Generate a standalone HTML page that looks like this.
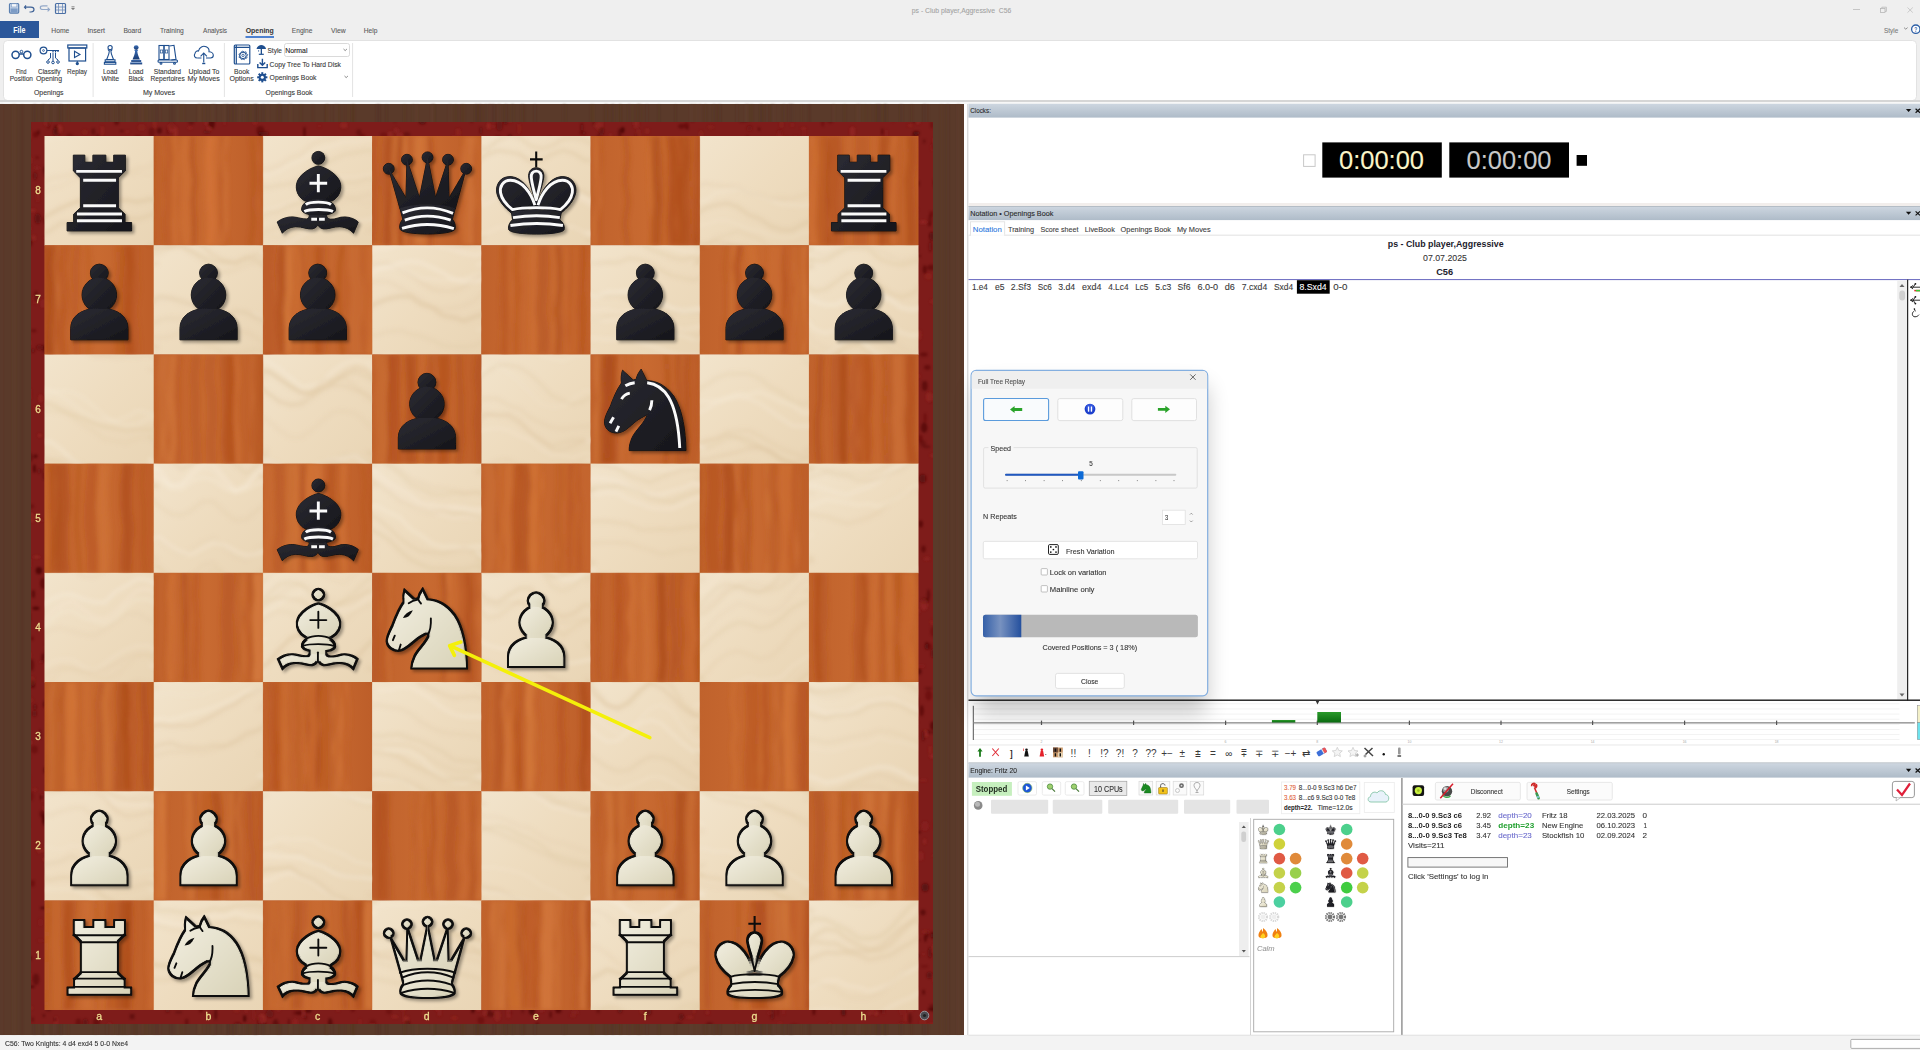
<!DOCTYPE html>
<html><head><meta charset="utf-8"><title>Fritz</title>
<style>
*{margin:0;padding:0}
html,body{width:1920px;height:1050px;overflow:hidden;background:#efefef}
svg{display:block;font-family:"Liberation Sans",sans-serif}
</style></head><body>
<svg width="1920" height="1050" viewBox="0 0 1920 1050">
<defs>
<linearGradient id="lt" x1="0" y1="0" x2="1" y2="1"><stop offset="0" stop-color="#f2e4cc"/><stop offset="0.5" stop-color="#eedcbf"/><stop offset="1" stop-color="#e9d5b5"/></linearGradient>
<linearGradient id="dk" x1="0" y1="0" x2="1" y2="0"><stop offset="0" stop-color="#c0622c"/><stop offset="0.5" stop-color="#c86a31"/><stop offset="1" stop-color="#bd5e29"/></linearGradient>
<linearGradient id="cr" x1="0" y1="0" x2="1" y2="1"><stop offset="0" stop-color="#f4f1e4"/><stop offset="1" stop-color="#d9d3b8"/></linearGradient>
<linearGradient id="bk" x1="0" y1="0" x2="1" y2="1"><stop offset="0" stop-color="#2c2c34"/><stop offset="1" stop-color="#15151a"/></linearGradient>
<filter id="sh" x="-20%" y="-20%" width="150%" height="150%"><feDropShadow dx="22" dy="22" stdDeviation="16" flood-color="#000" flood-opacity="0.35"/></filter>
<linearGradient id="hdr" x1="0" y1="0" x2="0" y2="1"><stop offset="0" stop-color="#cdd6e0"/><stop offset="1" stop-color="#aebbc8"/></linearGradient>
<linearGradient id="graphbg" x1="0" y1="0" x2="0" y2="1"><stop offset="0" stop-color="#e2e2e2"/><stop offset="0.8" stop-color="#fbfbfb"/><stop offset="1" stop-color="#ffffff"/></linearGradient>
<linearGradient id="prog" x1="0" y1="0" x2="1" y2="0"><stop offset="0" stop-color="#3560a8"/><stop offset="0.45" stop-color="#7892c0"/><stop offset="1" stop-color="#24509e"/></linearGradient>
<linearGradient id="grn" x1="0" y1="0" x2="0" y2="1"><stop offset="0" stop-color="#2a9a2a"/><stop offset="1" stop-color="#0a6a10"/></linearGradient>
<linearGradient id="icb" x1="0" y1="0" x2="0" y2="1"><stop offset="0" stop-color="#3b6db5"/><stop offset="1" stop-color="#173a72"/></linearGradient>
<filter id="dsh" x="-30%" y="-30%" width="160%" height="160%"><feGaussianBlur stdDeviation="11"/></filter>
<filter id="bl1" x="-5%" y="-5%" width="110%" height="110%"><feGaussianBlur stdDeviation="1.2"/></filter>
<filter id="bl2" x="-5%" y="-5%" width="110%" height="110%"><feGaussianBlur stdDeviation="2.2"/></filter>

<filter id="er" x="-5%" y="-5%" width="110%" height="110%"><feMorphology operator="erode" radius="20"/></filter>

<symbol id="wP" viewBox="0 0 1050 1050"><g filter="url(#sh)"><circle cx="527" cy="268" r="86" fill="#0c0c0c" stroke="#0c0c0c" stroke-width="10" stroke-linejoin="round"/><circle cx="527" cy="478" r="166" fill="#0c0c0c" stroke="#0c0c0c" stroke-width="10" stroke-linejoin="round"/><path d="M252,910 V800 C252,690 350,618 470,612 H585 C705,618 803,690 803,800 V910 Z" fill="#0c0c0c" stroke="#0c0c0c" stroke-width="10" stroke-linejoin="round"/><g filter="url(#er)"><circle cx="527" cy="268" r="86" fill="url(#cr)" stroke="url(#cr)" stroke-width="10" stroke-linejoin="round"/><circle cx="527" cy="478" r="166" fill="url(#cr)" stroke="url(#cr)" stroke-width="10" stroke-linejoin="round"/><path d="M252,910 V800 C252,690 350,618 470,612 H585 C705,618 803,690 803,800 V910 Z" fill="url(#cr)" stroke="url(#cr)" stroke-width="10" stroke-linejoin="round"/></g></g></symbol>
<symbol id="bP" viewBox="0 0 1050 1050"><g filter="url(#sh)"><circle cx="527" cy="268" r="86" fill="#0c0c0c" stroke="#0c0c0c" stroke-width="8" stroke-linejoin="round"/><circle cx="527" cy="478" r="166" fill="#0c0c0c" stroke="#0c0c0c" stroke-width="8" stroke-linejoin="round"/><path d="M252,910 V800 C252,690 350,618 470,612 H585 C705,618 803,690 803,800 V910 Z" fill="#0c0c0c" stroke="#0c0c0c" stroke-width="8" stroke-linejoin="round"/><circle cx="527" cy="268" r="86" fill="url(#bk)"/><circle cx="527" cy="478" r="166" fill="url(#bk)"/><path d="M252,910 V800 C252,690 350,618 470,612 H585 C705,618 803,690 803,800 V910 Z" fill="url(#bk)"/></g></symbol>
<symbol id="wR" viewBox="0 0 1050 1050"><g filter="url(#sh)"><path d="M277,184 H388 V252 H465 V184 H590 V252 H665 V184 H778 V335 L710,402 V690 L775,752 V832 H838 V913 H217 V832 H280 V752 L345,690 V402 L277,335 Z" fill="#0c0c0c" stroke="#0c0c0c" stroke-width="10" stroke-linejoin="round"/><g filter="url(#er)"><path d="M277,184 H388 V252 H465 V184 H590 V252 H665 V184 H778 V335 L710,402 V690 L775,752 V832 H838 V913 H217 V832 H280 V752 L345,690 V402 L277,335 Z" fill="url(#cr)" stroke="url(#cr)" stroke-width="10" stroke-linejoin="round"/></g></g><path d="M277,335 H778" fill="none" stroke="#0c0c0c" stroke-width="18" stroke-linecap="round" stroke-linejoin="round"/><path d="M345,402 H710" fill="none" stroke="#0c0c0c" stroke-width="18" stroke-linecap="round" stroke-linejoin="round"/><path d="M345,690 H710" fill="none" stroke="#0c0c0c" stroke-width="18" stroke-linecap="round" stroke-linejoin="round"/><path d="M280,752 H775" fill="none" stroke="#0c0c0c" stroke-width="18" stroke-linecap="round" stroke-linejoin="round"/><path d="M280,832 H775" fill="none" stroke="#0c0c0c" stroke-width="18" stroke-linecap="round" stroke-linejoin="round"/></symbol>
<symbol id="bR" viewBox="0 0 1050 1050"><g filter="url(#sh)"><path d="M277,184 H388 V252 H465 V184 H590 V252 H665 V184 H778 V335 L710,402 V690 L775,752 V832 H838 V913 H217 V832 H280 V752 L345,690 V402 L277,335 Z" fill="#0c0c0c" stroke="#0c0c0c" stroke-width="8" stroke-linejoin="round"/><path d="M277,184 H388 V252 H465 V184 H590 V252 H665 V184 H778 V335 L710,402 V690 L775,752 V832 H838 V913 H217 V832 H280 V752 L345,690 V402 L277,335 Z" fill="url(#bk)"/></g><path d="M305,340 H745" fill="none" stroke="#fafafa" stroke-width="28" stroke-linecap="butt" stroke-linejoin="round"/><path d="M372,425 H688" fill="none" stroke="#fafafa" stroke-width="28" stroke-linecap="butt" stroke-linejoin="round"/><path d="M372,670 H688" fill="none" stroke="#fafafa" stroke-width="28" stroke-linecap="butt" stroke-linejoin="round"/><path d="M312,750 H745" fill="none" stroke="#fafafa" stroke-width="28" stroke-linecap="butt" stroke-linejoin="round"/><path d="M312,815 H745" fill="none" stroke="#fafafa" stroke-width="28" stroke-linecap="butt" stroke-linejoin="round"/></symbol>
<symbol id="wN" viewBox="0 0 1050 1050"><g filter="url(#sh)"><path d="M372,925 L918,925 C915,720 880,520 800,400 C720,292 640,258 540,250 L487,142 C465,170 445,205 438,240 L410,246 L308,152 C295,190 292,235 298,275 C250,340 212,440 190,500 C160,560 132,610 135,660 C140,720 190,760 262,755 C335,748 385,680 452,632 C495,602 530,590 548,575 C520,660 440,720 405,790 C380,840 372,880 372,925 Z" fill="#0c0c0c" stroke="#0c0c0c" stroke-width="10" stroke-linejoin="round"/><g filter="url(#er)"><path d="M372,925 L918,925 C915,720 880,520 800,400 C720,292 640,258 540,250 L487,142 C465,170 445,205 438,240 L410,246 L308,152 C295,190 292,235 298,275 C250,340 212,440 190,500 C160,560 132,610 135,660 C140,720 190,760 262,755 C335,748 385,680 452,632 C495,602 530,590 548,575 C520,660 440,720 405,790 C380,840 372,880 372,925 Z" fill="url(#cr)" stroke="url(#cr)" stroke-width="10" stroke-linejoin="round"/></g></g><path d="M565,438 C568,500 558,560 535,595" fill="none" stroke="#0c0c0c" stroke-width="18" stroke-linecap="round" stroke-linejoin="round"/><path d="M200,648 L218,605" fill="none" stroke="#0c0c0c" stroke-width="18" stroke-linecap="round" stroke-linejoin="round"/><path d="M258,745 L275,690" fill="none" stroke="#0c0c0c" stroke-width="18" stroke-linecap="round" stroke-linejoin="round"/><path d="M352,292 C380,272 410,262 440,258" fill="none" stroke="#0c0c0c" stroke-width="18" stroke-linecap="round" stroke-linejoin="round"/><path d="M440,248 C450,270 460,285 470,295" fill="none" stroke="#0c0c0c" stroke-width="18" stroke-linecap="round" stroke-linejoin="round"/><path d="M296,434 C312,400 345,374 392,360 C380,384 366,404 352,418 C335,430 316,434 296,434 Z" fill="#0c0c0c"/></symbol>
<symbol id="bN" viewBox="0 0 1050 1050"><g filter="url(#sh)"><path d="M372,925 L918,925 C915,720 880,520 800,400 C720,292 640,258 540,250 L487,142 C465,170 445,205 438,240 L410,246 L308,152 C295,190 292,235 298,275 C250,340 212,440 190,500 C160,560 132,610 135,660 C140,720 190,760 262,755 C335,748 385,680 452,632 C495,602 530,590 548,575 C520,660 440,720 405,790 C380,840 372,880 372,925 Z" fill="#0c0c0c" stroke="#0c0c0c" stroke-width="8" stroke-linejoin="round"/><path d="M372,925 L918,925 C915,720 880,520 800,400 C720,292 640,258 540,250 L487,142 C465,170 445,205 438,240 L410,246 L308,152 C295,190 292,235 298,275 C250,340 212,440 190,500 C160,560 132,610 135,660 C140,720 190,760 262,755 C335,748 385,680 452,632 C495,602 530,590 548,575 C520,660 440,720 405,790 C380,840 372,880 372,925 Z" fill="url(#bk)"/></g><path d="M545,272 C700,290 835,420 858,900" fill="none" stroke="#fafafa" stroke-width="28" stroke-linecap="butt" stroke-linejoin="round"/><path d="M335,302 C365,285 395,275 425,272" fill="none" stroke="#fafafa" stroke-width="28" stroke-linecap="butt" stroke-linejoin="round"/><path d="M298,430 C315,400 345,378 378,372" fill="none" stroke="#fafafa" stroke-width="28" stroke-linecap="butt" stroke-linejoin="round"/><path d="M590,440 C590,480 580,510 568,535" fill="none" stroke="#fafafa" stroke-width="28" stroke-linecap="butt" stroke-linejoin="round"/><path d="M188,662 L222,605" fill="none" stroke="#fafafa" stroke-width="28" stroke-linecap="butt" stroke-linejoin="round"/><path d="M245,742 L272,688" fill="none" stroke="#fafafa" stroke-width="28" stroke-linecap="butt" stroke-linejoin="round"/></symbol>
<symbol id="wB" viewBox="0 0 1050 1050"><g filter="url(#sh)"><circle cx="533" cy="210" r="62" fill="#0c0c0c" stroke="#0c0c0c" stroke-width="10" stroke-linejoin="round"/><path d="M533,288 C470,298 335,368 322,470 C314,548 360,600 405,625 H665 C710,600 756,548 748,470 C735,368 596,298 533,288 Z" fill="#0c0c0c" stroke="#0c0c0c" stroke-width="10" stroke-linejoin="round"/><path d="M137,827 C170,800 230,775 290,778 C340,782 380,800 420,797 C440,795 446,780 446,755 L612,755 C612,780 620,797 650,800 C700,805 730,775 790,778 C840,780 890,800 917,827 L872,935 C840,900 800,875 740,872 C680,870 620,900 580,893 C550,888 535,870 529,850 C523,870 505,888 475,893 C435,900 375,870 315,872 C255,875 215,900 187,935 Z" fill="#0c0c0c" stroke="#0c0c0c" stroke-width="10" stroke-linejoin="round"/><path d="M372,705 C372,640 450,606 533,606 C620,606 698,640 698,710 C698,745 620,762 533,762 C450,762 372,745 372,705 Z" fill="#0c0c0c" stroke="#0c0c0c" stroke-width="10" stroke-linejoin="round"/><g filter="url(#er)"><circle cx="533" cy="210" r="62" fill="url(#cr)" stroke="url(#cr)" stroke-width="10" stroke-linejoin="round"/><path d="M533,288 C470,298 335,368 322,470 C314,548 360,600 405,625 H665 C710,600 756,548 748,470 C735,368 596,298 533,288 Z" fill="url(#cr)" stroke="url(#cr)" stroke-width="10" stroke-linejoin="round"/><path d="M137,827 C170,800 230,775 290,778 C340,782 380,800 420,797 C440,795 446,780 446,755 L612,755 C612,780 620,797 650,800 C700,805 730,775 790,778 C840,780 890,800 917,827 L872,935 C840,900 800,875 740,872 C680,870 620,900 580,893 C550,888 535,870 529,850 C523,870 505,888 475,893 C435,900 375,870 315,872 C255,875 215,900 187,935 Z" fill="url(#cr)" stroke="url(#cr)" stroke-width="10" stroke-linejoin="round"/><path d="M372,705 C372,640 450,606 533,606 C620,606 698,640 698,710 C698,745 620,762 533,762 C450,762 372,745 372,705 Z" fill="url(#cr)" stroke="url(#cr)" stroke-width="10" stroke-linejoin="round"/></g></g><path d="M533,375 V530" fill="none" stroke="#0c0c0c" stroke-width="18" stroke-linecap="round" stroke-linejoin="round"/><path d="M455,455 H610" fill="none" stroke="#0c0c0c" stroke-width="18" stroke-linecap="round" stroke-linejoin="round"/><path d="M374,712 C372,640 450,606 533,606 C620,606 698,640 696,712" fill="none" stroke="#0c0c0c" stroke-width="18" stroke-linecap="round" stroke-linejoin="round"/><path d="M392,700 C450,680 620,680 680,702" fill="none" stroke="#0c0c0c" stroke-width="18" stroke-linecap="round" stroke-linejoin="round"/><path d="M529,765 V850" fill="none" stroke="#0c0c0c" stroke-width="18" stroke-linecap="round" stroke-linejoin="round"/></symbol>
<symbol id="bB" viewBox="0 0 1050 1050"><g filter="url(#sh)"><circle cx="533" cy="210" r="62" fill="#0c0c0c" stroke="#0c0c0c" stroke-width="8" stroke-linejoin="round"/><path d="M533,288 C470,298 335,368 322,470 C314,548 360,600 405,625 H665 C710,600 756,548 748,470 C735,368 596,298 533,288 Z" fill="#0c0c0c" stroke="#0c0c0c" stroke-width="8" stroke-linejoin="round"/><path d="M137,827 C170,800 230,775 290,778 C340,782 380,800 420,797 C440,795 446,780 446,755 L612,755 C612,780 620,797 650,800 C700,805 730,775 790,778 C840,780 890,800 917,827 L872,935 C840,900 800,875 740,872 C680,870 620,900 580,893 C550,888 535,870 529,850 C523,870 505,888 475,893 C435,900 375,870 315,872 C255,875 215,900 187,935 Z" fill="#0c0c0c" stroke="#0c0c0c" stroke-width="8" stroke-linejoin="round"/><path d="M372,705 C372,640 450,606 533,606 C620,606 698,640 698,710 C698,745 620,762 533,762 C450,762 372,745 372,705 Z" fill="#0c0c0c" stroke="#0c0c0c" stroke-width="8" stroke-linejoin="round"/><circle cx="533" cy="210" r="62" fill="url(#bk)"/><path d="M533,288 C470,298 335,368 322,470 C314,548 360,600 405,625 H665 C710,600 756,548 748,470 C735,368 596,298 533,288 Z" fill="url(#bk)"/><path d="M137,827 C170,800 230,775 290,778 C340,782 380,800 420,797 C440,795 446,780 446,755 L612,755 C612,780 620,797 650,800 C700,805 730,775 790,778 C840,780 890,800 917,827 L872,935 C840,900 800,875 740,872 C680,870 620,900 580,893 C550,888 535,870 529,850 C523,870 505,888 475,893 C435,900 375,870 315,872 C255,875 215,900 187,935 Z" fill="url(#bk)"/><path d="M372,705 C372,640 450,606 533,606 C620,606 698,640 698,710 C698,745 620,762 533,762 C450,762 372,745 372,705 Z" fill="url(#bk)"/></g><path d="M533,365 V540" fill="none" stroke="#fafafa" stroke-width="28" stroke-linecap="butt" stroke-linejoin="round"/><path d="M448,455 H618" fill="none" stroke="#fafafa" stroke-width="28" stroke-linecap="butt" stroke-linejoin="round"/><path d="M412,660 C450,628 615,628 655,660" fill="none" stroke="#fafafa" stroke-width="28" stroke-linecap="butt" stroke-linejoin="round"/><path d="M398,726 C445,700 625,700 674,726" fill="none" stroke="#fafafa" stroke-width="28" stroke-linecap="butt" stroke-linejoin="round"/><path d="M465,800 H520 M540,800 H595" fill="none" stroke="#fafafa" stroke-width="28" stroke-linecap="butt" stroke-linejoin="round"/></symbol>
<symbol id="wQ" viewBox="0 0 1050 1050"><g filter="url(#sh)"><circle cx="160" cy="315" r="52" fill="#0c0c0c" stroke="#0c0c0c" stroke-width="10" stroke-linejoin="round"/><circle cx="335" cy="228" r="52" fill="#0c0c0c" stroke="#0c0c0c" stroke-width="10" stroke-linejoin="round"/><circle cx="533" cy="205" r="52" fill="#0c0c0c" stroke="#0c0c0c" stroke-width="10" stroke-linejoin="round"/><circle cx="730" cy="228" r="52" fill="#0c0c0c" stroke="#0c0c0c" stroke-width="10" stroke-linejoin="round"/><circle cx="905" cy="315" r="52" fill="#0c0c0c" stroke="#0c0c0c" stroke-width="10" stroke-linejoin="round"/><path d="M268,700 L160,315 L325,595 L335,228 L455,592 L533,205 L610,592 L730,228 L740,595 L905,315 L800,700 Z" fill="#0c0c0c" stroke="#0c0c0c" stroke-width="10" stroke-linejoin="round"/><path d="M268,695 C400,645 665,645 800,695 L772,800 C795,830 805,860 798,895 C775,958 290,958 268,895 C260,860 270,830 295,800 Z" fill="#0c0c0c" stroke="#0c0c0c" stroke-width="10" stroke-linejoin="round"/><g filter="url(#er)"><circle cx="160" cy="315" r="52" fill="url(#cr)" stroke="url(#cr)" stroke-width="10" stroke-linejoin="round"/><circle cx="335" cy="228" r="52" fill="url(#cr)" stroke="url(#cr)" stroke-width="10" stroke-linejoin="round"/><circle cx="533" cy="205" r="52" fill="url(#cr)" stroke="url(#cr)" stroke-width="10" stroke-linejoin="round"/><circle cx="730" cy="228" r="52" fill="url(#cr)" stroke="url(#cr)" stroke-width="10" stroke-linejoin="round"/><circle cx="905" cy="315" r="52" fill="url(#cr)" stroke="url(#cr)" stroke-width="10" stroke-linejoin="round"/><path d="M268,700 L160,315 L325,595 L335,228 L455,592 L533,205 L610,592 L730,228 L740,595 L905,315 L800,700 Z" fill="url(#cr)" stroke="url(#cr)" stroke-width="10" stroke-linejoin="round"/><path d="M268,695 C400,645 665,645 800,695 L772,800 C795,830 805,860 798,895 C775,958 290,958 268,895 C260,860 270,830 295,800 Z" fill="url(#cr)" stroke="url(#cr)" stroke-width="10" stroke-linejoin="round"/></g></g><path d="M268,695 C400,645 665,645 800,695" fill="none" stroke="#0c0c0c" stroke-width="18" stroke-linecap="round" stroke-linejoin="round"/><path d="M288,742 Q533,640 782,742" fill="none" stroke="#0c0c0c" stroke-width="18" stroke-linecap="round" stroke-linejoin="round"/><path d="M310,810 Q533,730 760,810" fill="none" stroke="#0c0c0c" stroke-width="18" stroke-linecap="round" stroke-linejoin="round"/><path d="M280,890 Q533,810 790,890" fill="none" stroke="#0c0c0c" stroke-width="18" stroke-linecap="round" stroke-linejoin="round"/></symbol>
<symbol id="bQ" viewBox="0 0 1050 1050"><g filter="url(#sh)"><circle cx="160" cy="315" r="52" fill="#0c0c0c" stroke="#0c0c0c" stroke-width="8" stroke-linejoin="round"/><circle cx="335" cy="228" r="52" fill="#0c0c0c" stroke="#0c0c0c" stroke-width="8" stroke-linejoin="round"/><circle cx="533" cy="205" r="52" fill="#0c0c0c" stroke="#0c0c0c" stroke-width="8" stroke-linejoin="round"/><circle cx="730" cy="228" r="52" fill="#0c0c0c" stroke="#0c0c0c" stroke-width="8" stroke-linejoin="round"/><circle cx="905" cy="315" r="52" fill="#0c0c0c" stroke="#0c0c0c" stroke-width="8" stroke-linejoin="round"/><path d="M268,700 L160,315 L325,595 L335,228 L455,592 L533,205 L610,592 L730,228 L740,595 L905,315 L800,700 Z" fill="#0c0c0c" stroke="#0c0c0c" stroke-width="8" stroke-linejoin="round"/><path d="M268,695 C400,645 665,645 800,695 L772,800 C795,830 805,860 798,895 C775,958 290,958 268,895 C260,860 270,830 295,800 Z" fill="#0c0c0c" stroke="#0c0c0c" stroke-width="8" stroke-linejoin="round"/><circle cx="160" cy="315" r="52" fill="url(#bk)"/><circle cx="335" cy="228" r="52" fill="url(#bk)"/><circle cx="533" cy="205" r="52" fill="url(#bk)"/><circle cx="730" cy="228" r="52" fill="url(#bk)"/><circle cx="905" cy="315" r="52" fill="url(#bk)"/><path d="M268,700 L160,315 L325,595 L335,228 L455,592 L533,205 L610,592 L730,228 L740,595 L905,315 L800,700 Z" fill="url(#bk)"/><path d="M268,695 C400,645 665,645 800,695 L772,800 C795,830 805,860 798,895 C775,958 290,958 268,895 C260,860 270,830 295,800 Z" fill="url(#bk)"/></g><path d="M292,740 Q533,640 778,744" fill="none" stroke="#fafafa" stroke-width="28" stroke-linecap="butt" stroke-linejoin="round"/><path d="M314,808 Q533,732 756,810" fill="none" stroke="#fafafa" stroke-width="28" stroke-linecap="butt" stroke-linejoin="round"/><path d="M288,888 Q533,812 786,890" fill="none" stroke="#fafafa" stroke-width="28" stroke-linecap="butt" stroke-linejoin="round"/></symbol>
<symbol id="wK" viewBox="0 0 1050 1050"><g filter="url(#sh)"><path d="M528,685 C490,540 400,392 275,390 C175,390 136,480 148,545 C163,625 235,700 292,742 Z" fill="#0c0c0c" stroke="#0c0c0c" stroke-width="10" stroke-linejoin="round"/><path d="M528,685 C566,540 656,392 781,390 C881,390 920,480 908,545 C893,625 821,700 764,742 Z" fill="#0c0c0c" stroke="#0c0c0c" stroke-width="10" stroke-linejoin="round"/><path d="M528,305 C582,305 607,350 600,400 C592,470 548,570 528,680 C508,570 464,470 456,400 C449,350 474,305 528,305 Z" fill="#0c0c0c" stroke="#0c0c0c" stroke-width="10" stroke-linejoin="round"/><path d="M290,735 C400,700 660,700 770,735 L755,805 C790,835 802,865 797,900 C782,958 283,958 263,900 C256,865 270,835 300,805 Z" fill="#0c0c0c" stroke="#0c0c0c" stroke-width="10" stroke-linejoin="round"/><g filter="url(#er)"><path d="M528,685 C490,540 400,392 275,390 C175,390 136,480 148,545 C163,625 235,700 292,742 Z" fill="url(#cr)" stroke="url(#cr)" stroke-width="10" stroke-linejoin="round"/><path d="M528,685 C566,540 656,392 781,390 C881,390 920,480 908,545 C893,625 821,700 764,742 Z" fill="url(#cr)" stroke="url(#cr)" stroke-width="10" stroke-linejoin="round"/><path d="M528,305 C582,305 607,350 600,400 C592,470 548,570 528,680 C508,570 464,470 456,400 C449,350 474,305 528,305 Z" fill="url(#cr)" stroke="url(#cr)" stroke-width="10" stroke-linejoin="round"/><path d="M290,735 C400,700 660,700 770,735 L755,805 C790,835 802,865 797,900 C782,958 283,958 263,900 C256,865 270,835 300,805 Z" fill="url(#cr)" stroke="url(#cr)" stroke-width="10" stroke-linejoin="round"/></g></g><path d="M300,805 Q533,765 755,805" fill="none" stroke="#0c0c0c" stroke-width="18" stroke-linecap="round" stroke-linejoin="round"/><path d="M272,880 Q533,840 788,880" fill="none" stroke="#0c0c0c" stroke-width="18" stroke-linecap="round" stroke-linejoin="round"/><path d="M292,735 C400,700 660,700 768,735" fill="none" stroke="#0c0c0c" stroke-width="18" stroke-linecap="round" stroke-linejoin="round"/><path d="M528,305 C582,305 607,350 600,400 C592,470 548,570 528,680 C508,570 464,470 456,400 C449,350 474,305 528,305 Z" fill="none" stroke="#0c0c0c" stroke-width="18" stroke-linecap="round" stroke-linejoin="round"/><path d="M528,150 V300 M468,225 H590" stroke="#0c0c0c" stroke-width="20" fill="none"/></symbol>
<symbol id="bK" viewBox="0 0 1050 1050"><g filter="url(#sh)"><path d="M528,685 C490,540 400,392 275,390 C175,390 136,480 148,545 C163,625 235,700 292,742 Z" fill="#0c0c0c" stroke="#0c0c0c" stroke-width="8" stroke-linejoin="round"/><path d="M528,685 C566,540 656,392 781,390 C881,390 920,480 908,545 C893,625 821,700 764,742 Z" fill="#0c0c0c" stroke="#0c0c0c" stroke-width="8" stroke-linejoin="round"/><path d="M528,305 C582,305 607,350 600,400 C592,470 548,570 528,680 C508,570 464,470 456,400 C449,350 474,305 528,305 Z" fill="#0c0c0c" stroke="#0c0c0c" stroke-width="8" stroke-linejoin="round"/><path d="M290,735 C400,700 660,700 770,735 L755,805 C790,835 802,865 797,900 C782,958 283,958 263,900 C256,865 270,835 300,805 Z" fill="#0c0c0c" stroke="#0c0c0c" stroke-width="8" stroke-linejoin="round"/><path d="M528,685 C490,540 400,392 275,390 C175,390 136,480 148,545 C163,625 235,700 292,742 Z" fill="url(#bk)"/><path d="M528,685 C566,540 656,392 781,390 C881,390 920,480 908,545 C893,625 821,700 764,742 Z" fill="url(#bk)"/><path d="M528,305 C582,305 607,350 600,400 C592,470 548,570 528,680 C508,570 464,470 456,400 C449,350 474,305 528,305 Z" fill="url(#bk)"/><path d="M290,735 C400,700 660,700 770,735 L755,805 C790,835 802,865 797,900 C782,958 283,958 263,900 C256,865 270,835 300,805 Z" fill="url(#bk)"/></g><path d="M515,665 C478,548 395,428 280,426 C205,426 176,490 185,545 C196,612 250,668 300,708 C400,682 660,682 760,708 C810,668 864,612 875,545 C884,490 855,426 780,426 C665,428 582,548 545,665" fill="none" stroke="#fafafa" stroke-width="28" stroke-linecap="butt" stroke-linejoin="round"/><path d="M528,338 C566,338 579,368 575,402 C569,462 546,545 528,612 C510,545 487,462 481,402 C477,368 490,338 528,338 Z" fill="none" stroke="#fafafa" stroke-width="28" stroke-linecap="butt" stroke-linejoin="round"/><path d="M305,785 Q533,748 755,785" fill="none" stroke="#fafafa" stroke-width="28" stroke-linecap="butt" stroke-linejoin="round"/><path d="M280,860 Q533,822 785,860" fill="none" stroke="#fafafa" stroke-width="28" stroke-linecap="butt" stroke-linejoin="round"/><path d="M528,150 V300 M468,225 H590" stroke="#0c0c0c" stroke-width="20" fill="none"/></symbol>
<symbol id="nsil" viewBox="0 0 1050 1050"><path d="M372,925 L918,925 C915,720 880,520 800,400 C720,292 640,258 540,250 L487,142 C465,170 445,205 438,240 L410,246 L308,152 C295,190 292,235 298,275 C250,340 212,440 190,500 C160,560 132,610 135,660 C140,720 190,760 262,755 C335,748 385,680 452,632 C495,602 530,590 548,575 C520,660 440,720 405,790 C380,840 372,880 372,925 Z" fill="#1a8a22" stroke="#0a5a10" stroke-width="30"/></symbol>
</defs>
<rect x="0" y="0" width="1920" height="41" fill="#efefef"/>
<text x="911.80" y="12.60" font-size="7.40" fill="#a3a3a3" stroke="#a3a3a3" stroke-width="0.1" textLength="83.18" lengthAdjust="spacingAndGlyphs">ps - Club player,Aggressive</text>
<text x="998.80" y="12.60" font-size="7.40" fill="#a3a3a3" stroke="#a3a3a3" stroke-width="0.1" textLength="12.40" lengthAdjust="spacingAndGlyphs">C56</text>
<g fill="none" stroke="#4a6fa5" stroke-width="1.2"><rect x="9.5" y="3.5" width="9.2" height="9.6" rx="1" fill="#c8d6ea" stroke="#5a7fb0"/><rect x="11.3" y="3.8" width="5.6" height="3.2" fill="#f4f7fb" stroke="#7a98c0" stroke-width="0.6"/><rect x="10.6" y="8.4" width="7" height="4.2" fill="#7d9cc6" stroke="none"/><path d="M26,5.5 L24.5,7.2 L26,8.9 M24.8,7.2 H31 C33,7.2 34,8.2 34,9.6 C34,11 33,12 31,12 H29.5" stroke="#3f6296"/><path d="M47.5,5.9 H43 C41,5.9 40.3,6.9 40.3,7.7 C40.3,8.6 41,9.5 43,9.5 H49.3 M47.6,7.6 L49.5,9.5 L47.6,11.4" stroke="#93a8c8"/><rect x="55.5" y="3.5" width="10" height="10" rx="1" stroke="#4a6fa5"/><path d="M58.5,4 V13 M62.5,4 V13 M56,7 H65 M56,10 H65" stroke="#6d8cba" stroke-width="0.8"/></g>
<path d="M71.5,6.5 h3 M71.5,8 h3 l-1.5,1.8 z" stroke="#777" stroke-width="0.6" fill="#777"/>
<line x1="1853" y1="9.5" x2="1860" y2="9.5" stroke="#a8a8a8" stroke-width="0.6"/>
<g fill="none" stroke="#b0b0b0" stroke-width="0.7"><rect x="1880.4" y="8.4" width="4.6" height="4.2"/><path d="M1881.8,8.4 V7.2 H1886.4 V11.4 H1885"/></g>
<path d="M1907.5,7.5 L1912.8,12.6 M1912.8,7.5 L1907.5,12.6" stroke="#b0b0b0" stroke-width="0.6"/>
<rect x="0" y="21" width="39" height="17" fill="#2b579a"/>
<text x="13.30" y="33.30" font-size="8.40" fill="#ffffff" font-weight="bold" textLength="12.18" lengthAdjust="spacingAndGlyphs">File</text>
<text x="51.30" y="33.40" font-size="7.90" fill="#5a5a5a" stroke="#5a5a5a" stroke-width="0.1" textLength="18.08" lengthAdjust="spacingAndGlyphs">Home</text>
<text x="87.40" y="33.40" font-size="7.90" fill="#5a5a5a" stroke="#5a5a5a" stroke-width="0.1" textLength="17.61" lengthAdjust="spacingAndGlyphs">Insert</text>
<text x="123.40" y="33.40" font-size="7.90" fill="#5a5a5a" stroke="#5a5a5a" stroke-width="0.1" textLength="17.89" lengthAdjust="spacingAndGlyphs">Board</text>
<text x="160.00" y="33.40" font-size="7.90" fill="#5a5a5a" stroke="#5a5a5a" stroke-width="0.1" textLength="23.81" lengthAdjust="spacingAndGlyphs">Training</text>
<text x="203.10" y="33.40" font-size="7.90" fill="#5a5a5a" stroke="#5a5a5a" stroke-width="0.1" textLength="23.99" lengthAdjust="spacingAndGlyphs">Analysis</text>
<text x="291.80" y="33.40" font-size="7.90" fill="#5a5a5a" stroke="#5a5a5a" stroke-width="0.1" textLength="20.59" lengthAdjust="spacingAndGlyphs">Engine</text>
<text x="331.00" y="33.40" font-size="7.90" fill="#5a5a5a" stroke="#5a5a5a" stroke-width="0.1" textLength="14.60" lengthAdjust="spacingAndGlyphs">View</text>
<text x="363.80" y="33.40" font-size="7.90" fill="#5a5a5a" stroke="#5a5a5a" stroke-width="0.1" textLength="13.71" lengthAdjust="spacingAndGlyphs">Help</text>
<text x="245.70" y="33.40" font-size="7.90" fill="#333333" font-weight="bold" textLength="28.10" lengthAdjust="spacingAndGlyphs">Opening</text>
<rect x="245.5" y="36.2" width="28.5" height="1.6" fill="#2667c9"/>
<text x="1884.10" y="32.60" font-size="7.40" fill="#7a7a7a" stroke="#7a7a7a" stroke-width="0.1" textLength="14.19" lengthAdjust="spacingAndGlyphs">Style</text>
<path d="M1904,27.6 L1905.8,29.2 L1907.6,27.6" fill="none" stroke="#666" stroke-width="0.7"/>
<circle cx="1915.8" cy="29.2" r="4.2" fill="#fff" stroke="#2d5fa6" stroke-width="1.3"/>
<text x="1914.30" y="31.80" font-size="6.50" fill="#2d5fa6" font-weight="bold" textLength="3.00" lengthAdjust="spacingAndGlyphs">?</text>
<rect x="3.5" y="40.5" width="1913" height="60" rx="4" fill="#ffffff" stroke="#e2e2e2" stroke-width="1"/>
<rect x="0" y="100" width="1920" height="2" fill="#d6d6d6"/>
<rect x="0" y="102" width="1920" height="2" fill="#f7f7f7"/>
<line x1="93.1" y1="43" x2="93.1" y2="97" stroke="#e3e3e3" stroke-width="1"/>
<line x1="224.4" y1="43" x2="224.4" y2="97" stroke="#e3e3e3" stroke-width="1"/>
<line x1="352.6" y1="43" x2="352.6" y2="97" stroke="#e3e3e3" stroke-width="1"/>
<text x="16.05" y="73.70" font-size="7.30" fill="#383838" stroke="#383838" stroke-width="0.1" textLength="10.45" lengthAdjust="spacingAndGlyphs">Find</text>
<text x="9.75" y="80.70" font-size="7.30" fill="#383838" stroke="#383838" stroke-width="0.1" textLength="23.24" lengthAdjust="spacingAndGlyphs">Position</text>
<text x="38.00" y="73.70" font-size="7.30" fill="#383838" stroke="#383838" stroke-width="0.1" textLength="22.60" lengthAdjust="spacingAndGlyphs">Classify</text>
<text x="36.00" y="80.70" font-size="7.30" fill="#383838" stroke="#383838" stroke-width="0.1" textLength="26.01" lengthAdjust="spacingAndGlyphs">Opening</text>
<text x="67.00" y="73.70" font-size="7.30" fill="#383838" stroke="#383838" stroke-width="0.1" textLength="19.99" lengthAdjust="spacingAndGlyphs">Replay</text>
<text x="34.00" y="94.70" font-size="7.30" fill="#383838" stroke="#383838" stroke-width="0.1" textLength="29.51" lengthAdjust="spacingAndGlyphs">Openings</text>
<text x="103.00" y="73.70" font-size="7.30" fill="#383838" stroke="#383838" stroke-width="0.1" textLength="14.50" lengthAdjust="spacingAndGlyphs">Load</text>
<text x="101.50" y="80.70" font-size="7.30" fill="#383838" stroke="#383838" stroke-width="0.1" textLength="17.51" lengthAdjust="spacingAndGlyphs">White</text>
<text x="128.75" y="73.70" font-size="7.30" fill="#383838" stroke="#383838" stroke-width="0.1" textLength="14.75" lengthAdjust="spacingAndGlyphs">Load</text>
<text x="128.50" y="80.70" font-size="7.30" fill="#383838" stroke="#383838" stroke-width="0.1" textLength="15.22" lengthAdjust="spacingAndGlyphs">Black</text>
<text x="153.75" y="73.70" font-size="7.30" fill="#383838" stroke="#383838" stroke-width="0.1" textLength="27.24" lengthAdjust="spacingAndGlyphs">Standard</text>
<text x="150.60" y="80.70" font-size="7.30" fill="#383838" stroke="#383838" stroke-width="0.1" textLength="34.14" lengthAdjust="spacingAndGlyphs">Repertoires</text>
<text x="188.50" y="73.70" font-size="7.30" fill="#383838" stroke="#383838" stroke-width="0.1" textLength="30.90" lengthAdjust="spacingAndGlyphs">Upload To</text>
<text x="187.50" y="80.70" font-size="7.30" fill="#383838" stroke="#383838" stroke-width="0.1" textLength="32.26" lengthAdjust="spacingAndGlyphs">My Moves</text>
<text x="142.90" y="94.70" font-size="7.30" fill="#383838" stroke="#383838" stroke-width="0.1" textLength="32.11" lengthAdjust="spacingAndGlyphs">My Moves</text>
<text x="234.00" y="73.70" font-size="7.30" fill="#383838" stroke="#383838" stroke-width="0.1" textLength="15.36" lengthAdjust="spacingAndGlyphs">Book</text>
<text x="229.40" y="80.70" font-size="7.30" fill="#383838" stroke="#383838" stroke-width="0.1" textLength="24.36" lengthAdjust="spacingAndGlyphs">Options</text>
<text x="267.50" y="52.90" font-size="7.30" fill="#383838" stroke="#383838" stroke-width="0.1" textLength="14.49" lengthAdjust="spacingAndGlyphs">Style</text>
<rect x="284.5" y="43.5" width="65" height="13" rx="2" fill="#fff" stroke="#d0d0d0" stroke-width="0.8"/>
<text x="285.20" y="52.90" font-size="7.30" fill="#222" stroke="#222" stroke-width="0.1" textLength="22.28" lengthAdjust="spacingAndGlyphs">Normal</text>
<path d="M343.5,49 L345.2,50.6 L346.9,49" fill="none" stroke="#555" stroke-width="0.7"/>
<text x="269.60" y="66.60" font-size="7.30" fill="#383838" stroke="#383838" stroke-width="0.1" textLength="71.38" lengthAdjust="spacingAndGlyphs">Copy Tree To Hard Disk</text>
<text x="269.60" y="80.00" font-size="7.30" fill="#383838" stroke="#383838" stroke-width="0.1" textLength="46.85" lengthAdjust="spacingAndGlyphs">Openings Book</text>
<path d="M344.5,76 L346.2,77.6 L347.9,76" fill="none" stroke="#555" stroke-width="0.7"/>
<text x="265.60" y="94.70" font-size="7.30" fill="#383838" stroke="#383838" stroke-width="0.1" textLength="46.85" lengthAdjust="spacingAndGlyphs">Openings Book</text>
<g fill="none" stroke="#1f4f8f" stroke-width="1.5"><circle cx="15.6" cy="54.8" r="3.6"/><circle cx="27.3" cy="54.8" r="3.6"/><path d="M19.2,54 H23.7"/><circle cx="21.45" cy="51.6" r="1.3" stroke-width="1"/><circle cx="43.5" cy="50.5" r="3.4" stroke-width="1.2"/><circle cx="43.5" cy="50.5" r="0.9" stroke-width="0.8"/><path d="M46.9,50.5 H59 M53,50.5 V52.5 M55.5,50.5 V52.5 M58,50.5 V52" stroke-width="1.2"/><path d="M50.5,53 V58 L48,60 M53,53 V61 M55.5,53 V58 L58,60" stroke-width="1"/><circle cx="48" cy="62" r="1.3" stroke-width="1"/><circle cx="53" cy="62.5" r="1.3" stroke-width="1"/><circle cx="58" cy="62" r="1.3" stroke-width="1"/><rect x="67.8" y="45" width="19" height="3" stroke-width="1.2"/><rect x="69" y="48" width="16.6" height="13" stroke-width="1.2"/><path d="M74.5,51.2 L80,54.4 L74.5,57.6 Z" stroke-width="1.1"/><path d="M77.3,61 V63" stroke-width="1"/><circle cx="77.3" cy="63.6" r="0.9" fill="#1f4f8f"/></g>
<g stroke="#1f4f8f" stroke-width="1.1" fill="none"><circle cx="110.1" cy="47.6" r="2.1"/><path d="M108.4,50 H111.8 L110.9,51.3 C111,54 112.5,57 113.5,59.5 H106.7 C107.7,57 109.2,54 109.3,51.3 Z"/><rect x="105.2" y="59.8" width="9.8" height="2" /><rect x="104.4" y="62.4" width="11.4" height="1.8"/></g>
<g fill="url(#icb)"><circle cx="136.2" cy="47.6" r="2.4"/><path d="M134.2,50 H138.2 L137.3,51.3 C137.4,54 138.9,57 139.9,59.5 H132.5 C133.5,57 135,54 135.1,51.3 Z"/><rect x="131.2" y="60" width="10" height="1.9"/><rect x="130.2" y="62.4" width="12" height="2"/></g>
<g fill="none" stroke="#1f4f8f" stroke-width="1.1"><rect x="159" y="45.5" width="5" height="14"/><rect x="164" y="45.5" width="5" height="14"/><path d="M169.5,46 L174,45.3 L176,59.3 L171.3,60"/><rect x="160.3" y="50" width="2.4" height="3" stroke-width="0.7"/><rect x="165.3" y="50" width="2.4" height="3" stroke-width="0.7"/><rect x="158" y="60" width="19.5" height="2.2" rx="1"/><circle cx="161" cy="63.4" r="0.9"/><circle cx="174.5" cy="63.4" r="0.9"/></g>
<g fill="none" stroke="#1f4f8f" stroke-width="1.1"><path d="M197.5,58 C194.5,58 193.6,55.3 195,53.5 C195.3,51.5 197,50.6 198.5,51 C199.3,47.2 203,45.3 206.2,46.8 C208.3,47.8 209.3,50 209,51.8 C211.5,51.8 213.3,53.5 213.3,55.3 C213.3,57 212,58 210.5,58 H206"/><path d="M201.5,58 H197.5 M203.75,62.5 V53.5 M200.6,56.4 L203.75,53 L206.9,56.4"/><path d="M202.2,63.5 H205.3" stroke-width="1.4"/></g>
<g fill="none" stroke="#1f4f8f" stroke-width="1.2"><rect x="234.3" y="45" width="15.5" height="19" rx="1"/><path d="M236.3,45 V64 M234.3,47.3 H249.8"/><circle cx="243" cy="55.4" r="3.2" stroke-width="1"/><circle cx="243" cy="55.4" r="1.2" stroke-width="0.8"/></g>
<path d="M243,51 L244.2,52.2 L246,51.8 L246.4,53.6 L247.8,54.7 L246.8,56.2 L247,58 L245.2,58.3 L244.2,59.8 L243,58.9 L241.4,59.6 L240.7,57.9 L239,57.4 L239.6,55.7 L238.9,54 L240.6,53.5 L241.3,51.8 Z" fill="none" stroke="#1f4f8f" stroke-width="0.8"/>
<g fill="#1f4f8f"><path d="M256.5,49 C257,46.5 259.5,45 261.3,45 C263.1,45 265.6,46.5 266.1,49 Z"/><rect x="260.7" y="49" width="1.3" height="5"/><rect x="258.8" y="53.7" width="5" height="1.2"/></g>
<path d="M258.6,50.2 V51.6" stroke="#1f4f8f" stroke-width="0.8"/>
<g fill="none" stroke="#1f4f8f" stroke-width="1.4"><path d="M262.4,58.8 V65 M259.6,62.4 L262.4,65.2 L265.2,62.4"/><path d="M257.8,64 V67.6 H267.2 V64"/></g>
<g fill="#1f4f8f"><circle cx="262.3" cy="77.3" r="3.6"/><rect x="261.3" y="72.2" width="2" height="2.4" transform="rotate(0 262.3 77.3)"/><rect x="261.3" y="72.2" width="2" height="2.4" transform="rotate(45 262.3 77.3)"/><rect x="261.3" y="72.2" width="2" height="2.4" transform="rotate(90 262.3 77.3)"/><rect x="261.3" y="72.2" width="2" height="2.4" transform="rotate(135 262.3 77.3)"/><rect x="261.3" y="72.2" width="2" height="2.4" transform="rotate(180 262.3 77.3)"/><rect x="261.3" y="72.2" width="2" height="2.4" transform="rotate(225 262.3 77.3)"/><rect x="261.3" y="72.2" width="2" height="2.4" transform="rotate(270 262.3 77.3)"/><rect x="261.3" y="72.2" width="2" height="2.4" transform="rotate(315 262.3 77.3)"/><circle cx="262.3" cy="77.3" r="1.5" fill="#fff"/></g>
<rect x="0" y="104" width="964" height="931" fill="#5a3a2a"/>
<g filter="url(#bl1)"><rect x="312.2" y="104" width="1.0" height="931" fill="#553525" opacity="0.16"/><rect x="791.7" y="104" width="0.8" height="931" fill="#553525" opacity="0.16"/><rect x="489.2" y="104" width="0.7" height="931" fill="#6a4634" opacity="0.23"/><rect x="232.0" y="104" width="1.9" height="931" fill="#4a2e20" opacity="0.32"/><rect x="119.3" y="104" width="1.1" height="931" fill="#553525" opacity="0.27"/><rect x="59.6" y="104" width="2.0" height="931" fill="#4a2e20" opacity="0.35"/><rect x="44.9" y="104" width="2.7" height="931" fill="#6a4634" opacity="0.23"/><rect x="521.2" y="104" width="2.0" height="931" fill="#553525" opacity="0.31"/><rect x="174.2" y="104" width="2.0" height="931" fill="#553525" opacity="0.19"/><rect x="93.9" y="104" width="2.3" height="931" fill="#553525" opacity="0.16"/><rect x="198.5" y="104" width="2.2" height="931" fill="#6a4634" opacity="0.31"/><rect x="448.8" y="104" width="2.8" height="931" fill="#6a4634" opacity="0.21"/><rect x="765.8" y="104" width="2.3" height="931" fill="#4a2e20" opacity="0.17"/><rect x="289.4" y="104" width="1.8" height="931" fill="#6a4634" opacity="0.30"/><rect x="277.6" y="104" width="3.0" height="931" fill="#4a2e20" opacity="0.25"/><rect x="159.0" y="104" width="1.4" height="931" fill="#6a4634" opacity="0.23"/><rect x="927.4" y="104" width="0.8" height="931" fill="#553525" opacity="0.26"/><rect x="844.0" y="104" width="1.4" height="931" fill="#553525" opacity="0.22"/><rect x="478.8" y="104" width="2.5" height="931" fill="#4a2e20" opacity="0.32"/><rect x="910.7" y="104" width="1.7" height="931" fill="#553525" opacity="0.16"/><rect x="704.8" y="104" width="1.3" height="931" fill="#553525" opacity="0.35"/><rect x="792.3" y="104" width="1.3" height="931" fill="#6a4634" opacity="0.33"/><rect x="334.5" y="104" width="2.9" height="931" fill="#6a4634" opacity="0.18"/><rect x="112.9" y="104" width="0.7" height="931" fill="#6a4634" opacity="0.18"/><rect x="238.7" y="104" width="1.5" height="931" fill="#6a4634" opacity="0.17"/><rect x="433.0" y="104" width="1.9" height="931" fill="#4a2e20" opacity="0.31"/><rect x="832.9" y="104" width="1.3" height="931" fill="#6a4634" opacity="0.35"/><rect x="658.1" y="104" width="1.5" height="931" fill="#4a2e20" opacity="0.18"/><rect x="169.9" y="104" width="1.2" height="931" fill="#4a2e20" opacity="0.15"/><rect x="801.2" y="104" width="1.0" height="931" fill="#6a4634" opacity="0.15"/><rect x="403.9" y="104" width="1.5" height="931" fill="#553525" opacity="0.21"/><rect x="121.0" y="104" width="2.7" height="931" fill="#553525" opacity="0.28"/><rect x="713.2" y="104" width="1.7" height="931" fill="#553525" opacity="0.31"/><rect x="378.3" y="104" width="1.6" height="931" fill="#4a2e20" opacity="0.25"/><rect x="386.0" y="104" width="1.1" height="931" fill="#4a2e20" opacity="0.24"/><rect x="106.0" y="104" width="2.0" height="931" fill="#4a2e20" opacity="0.15"/><rect x="145.8" y="104" width="0.8" height="931" fill="#6a4634" opacity="0.27"/><rect x="67.8" y="104" width="1.1" height="931" fill="#6a4634" opacity="0.18"/><rect x="243.2" y="104" width="1.4" height="931" fill="#6a4634" opacity="0.24"/><rect x="111.2" y="104" width="1.8" height="931" fill="#6a4634" opacity="0.25"/><rect x="300.6" y="104" width="0.9" height="931" fill="#553525" opacity="0.22"/><rect x="255.2" y="104" width="2.6" height="931" fill="#4a2e20" opacity="0.25"/><rect x="197.8" y="104" width="2.9" height="931" fill="#6a4634" opacity="0.18"/><rect x="523.6" y="104" width="0.7" height="931" fill="#553525" opacity="0.21"/><rect x="619.8" y="104" width="0.8" height="931" fill="#6a4634" opacity="0.25"/><rect x="875.6" y="104" width="1.5" height="931" fill="#4a2e20" opacity="0.26"/><rect x="751.0" y="104" width="1.4" height="931" fill="#4a2e20" opacity="0.27"/><rect x="760.0" y="104" width="2.4" height="931" fill="#4a2e20" opacity="0.31"/><rect x="788.9" y="104" width="2.4" height="931" fill="#4a2e20" opacity="0.19"/><rect x="475.0" y="104" width="2.4" height="931" fill="#4a2e20" opacity="0.31"/><rect x="455.2" y="104" width="1.1" height="931" fill="#553525" opacity="0.34"/><rect x="431.1" y="104" width="2.8" height="931" fill="#6a4634" opacity="0.34"/><rect x="351.5" y="104" width="1.1" height="931" fill="#4a2e20" opacity="0.24"/><rect x="325.6" y="104" width="1.8" height="931" fill="#553525" opacity="0.32"/><rect x="462.2" y="104" width="2.2" height="931" fill="#553525" opacity="0.17"/><rect x="636.8" y="104" width="2.8" height="931" fill="#553525" opacity="0.30"/><rect x="460.8" y="104" width="1.0" height="931" fill="#553525" opacity="0.22"/><rect x="772.0" y="104" width="2.9" height="931" fill="#6a4634" opacity="0.24"/><rect x="716.6" y="104" width="0.8" height="931" fill="#4a2e20" opacity="0.18"/><rect x="122.5" y="104" width="1.0" height="931" fill="#6a4634" opacity="0.31"/><rect x="140.9" y="104" width="2.6" height="931" fill="#6a4634" opacity="0.28"/><rect x="337.8" y="104" width="1.9" height="931" fill="#4a2e20" opacity="0.15"/><rect x="770.6" y="104" width="2.3" height="931" fill="#4a2e20" opacity="0.26"/><rect x="900.0" y="104" width="1.6" height="931" fill="#4a2e20" opacity="0.32"/><rect x="203.4" y="104" width="1.2" height="931" fill="#6a4634" opacity="0.25"/><rect x="736.2" y="104" width="1.4" height="931" fill="#553525" opacity="0.23"/><rect x="126.4" y="104" width="2.8" height="931" fill="#6a4634" opacity="0.33"/><rect x="638.6" y="104" width="2.6" height="931" fill="#553525" opacity="0.23"/><rect x="884.7" y="104" width="1.8" height="931" fill="#553525" opacity="0.18"/><rect x="492.2" y="104" width="2.7" height="931" fill="#4a2e20" opacity="0.27"/><rect x="748.1" y="104" width="1.0" height="931" fill="#4a2e20" opacity="0.24"/><rect x="699.1" y="104" width="1.9" height="931" fill="#6a4634" opacity="0.29"/><rect x="511.6" y="104" width="1.8" height="931" fill="#4a2e20" opacity="0.33"/><rect x="54.8" y="104" width="1.1" height="931" fill="#4a2e20" opacity="0.30"/><rect x="489.4" y="104" width="1.9" height="931" fill="#4a2e20" opacity="0.24"/><rect x="590.5" y="104" width="1.8" height="931" fill="#553525" opacity="0.19"/><rect x="267.2" y="104" width="1.8" height="931" fill="#6a4634" opacity="0.25"/><rect x="238.7" y="104" width="1.9" height="931" fill="#6a4634" opacity="0.33"/><rect x="860.6" y="104" width="1.1" height="931" fill="#6a4634" opacity="0.18"/><rect x="117.2" y="104" width="1.7" height="931" fill="#4a2e20" opacity="0.28"/><rect x="412.9" y="104" width="1.1" height="931" fill="#6a4634" opacity="0.31"/><rect x="864.7" y="104" width="1.0" height="931" fill="#553525" opacity="0.28"/><rect x="353.0" y="104" width="1.2" height="931" fill="#4a2e20" opacity="0.34"/><rect x="211.7" y="104" width="2.9" height="931" fill="#6a4634" opacity="0.33"/><rect x="156.9" y="104" width="2.2" height="931" fill="#4a2e20" opacity="0.18"/><rect x="416.0" y="104" width="1.8" height="931" fill="#6a4634" opacity="0.23"/><rect x="343.8" y="104" width="0.8" height="931" fill="#6a4634" opacity="0.15"/><rect x="534.1" y="104" width="1.7" height="931" fill="#4a2e20" opacity="0.23"/><rect x="498.8" y="104" width="1.3" height="931" fill="#4a2e20" opacity="0.17"/><rect x="885.5" y="104" width="1.1" height="931" fill="#4a2e20" opacity="0.17"/><rect x="262.1" y="104" width="2.8" height="931" fill="#4a2e20" opacity="0.20"/><rect x="124.9" y="104" width="1.6" height="931" fill="#553525" opacity="0.31"/><rect x="249.3" y="104" width="1.0" height="931" fill="#553525" opacity="0.26"/><rect x="675.2" y="104" width="0.8" height="931" fill="#4a2e20" opacity="0.31"/><rect x="176.7" y="104" width="2.7" height="931" fill="#6a4634" opacity="0.34"/><rect x="611.6" y="104" width="2.5" height="931" fill="#4a2e20" opacity="0.27"/><rect x="214.4" y="104" width="1.2" height="931" fill="#4a2e20" opacity="0.24"/><rect x="326.9" y="104" width="1.9" height="931" fill="#6a4634" opacity="0.27"/><rect x="41.7" y="104" width="2.3" height="931" fill="#4a2e20" opacity="0.34"/><rect x="252.5" y="104" width="1.0" height="931" fill="#6a4634" opacity="0.28"/><rect x="512.0" y="104" width="1.1" height="931" fill="#6a4634" opacity="0.25"/><rect x="171.5" y="104" width="1.4" height="931" fill="#4a2e20" opacity="0.35"/><rect x="35.6" y="104" width="0.6" height="931" fill="#553525" opacity="0.26"/><rect x="182.6" y="104" width="1.7" height="931" fill="#6a4634" opacity="0.17"/><rect x="789.4" y="104" width="1.6" height="931" fill="#6a4634" opacity="0.26"/><rect x="856.7" y="104" width="2.9" height="931" fill="#6a4634" opacity="0.29"/><rect x="947.1" y="104" width="1.4" height="931" fill="#553525" opacity="0.30"/><rect x="134.7" y="104" width="3.0" height="931" fill="#4a2e20" opacity="0.32"/><rect x="13.7" y="104" width="2.1" height="931" fill="#6a4634" opacity="0.24"/><rect x="53.4" y="104" width="2.2" height="931" fill="#6a4634" opacity="0.32"/><rect x="646.4" y="104" width="1.3" height="931" fill="#4a2e20" opacity="0.29"/><rect x="43.6" y="104" width="1.0" height="931" fill="#6a4634" opacity="0.24"/><rect x="253.8" y="104" width="2.9" height="931" fill="#553525" opacity="0.21"/><rect x="33.2" y="104" width="2.7" height="931" fill="#4a2e20" opacity="0.22"/><rect x="1.0" y="104" width="1.5" height="931" fill="#6a4634" opacity="0.21"/><rect x="632.4" y="104" width="1.2" height="931" fill="#4a2e20" opacity="0.17"/><rect x="787.6" y="104" width="0.9" height="931" fill="#553525" opacity="0.16"/><rect x="21.7" y="104" width="1.3" height="931" fill="#4a2e20" opacity="0.17"/><rect x="923.2" y="104" width="2.6" height="931" fill="#4a2e20" opacity="0.28"/><rect x="690.2" y="104" width="2.7" height="931" fill="#6a4634" opacity="0.30"/><rect x="694.7" y="104" width="1.8" height="931" fill="#6a4634" opacity="0.29"/><rect x="620.1" y="104" width="0.7" height="931" fill="#553525" opacity="0.33"/><rect x="604.7" y="104" width="2.4" height="931" fill="#553525" opacity="0.18"/><rect x="504.9" y="104" width="1.8" height="931" fill="#4a2e20" opacity="0.32"/><rect x="563.0" y="104" width="2.7" height="931" fill="#553525" opacity="0.34"/><rect x="619.7" y="104" width="0.8" height="931" fill="#4a2e20" opacity="0.18"/><rect x="347.7" y="104" width="0.9" height="931" fill="#6a4634" opacity="0.26"/><rect x="605.2" y="104" width="2.1" height="931" fill="#553525" opacity="0.20"/><rect x="254.3" y="104" width="1.7" height="931" fill="#4a2e20" opacity="0.30"/><rect x="484.9" y="104" width="1.9" height="931" fill="#553525" opacity="0.26"/><rect x="718.9" y="104" width="1.7" height="931" fill="#4a2e20" opacity="0.32"/><rect x="226.3" y="104" width="2.4" height="931" fill="#4a2e20" opacity="0.30"/><rect x="940.6" y="104" width="1.8" height="931" fill="#6a4634" opacity="0.17"/><rect x="877.7" y="104" width="1.3" height="931" fill="#4a2e20" opacity="0.27"/><rect x="619.6" y="104" width="0.8" height="931" fill="#4a2e20" opacity="0.22"/><rect x="628.1" y="104" width="2.3" height="931" fill="#553525" opacity="0.26"/><rect x="12.0" y="104" width="0.7" height="931" fill="#6a4634" opacity="0.34"/><rect x="95.9" y="104" width="1.1" height="931" fill="#6a4634" opacity="0.21"/><rect x="497.9" y="104" width="1.7" height="931" fill="#6a4634" opacity="0.30"/><rect x="957.5" y="104" width="1.9" height="931" fill="#6a4634" opacity="0.35"/><rect x="902.5" y="104" width="0.6" height="931" fill="#6a4634" opacity="0.17"/><rect x="488.4" y="104" width="3.0" height="931" fill="#6a4634" opacity="0.23"/><rect x="883.6" y="104" width="2.8" height="931" fill="#4a2e20" opacity="0.27"/><rect x="136.6" y="104" width="1.9" height="931" fill="#6a4634" opacity="0.18"/><rect x="790.7" y="104" width="1.8" height="931" fill="#4a2e20" opacity="0.29"/><rect x="223.1" y="104" width="2.8" height="931" fill="#6a4634" opacity="0.23"/><rect x="153.3" y="104" width="2.9" height="931" fill="#553525" opacity="0.24"/><rect x="291.1" y="104" width="0.9" height="931" fill="#6a4634" opacity="0.23"/><rect x="116.6" y="104" width="1.4" height="931" fill="#6a4634" opacity="0.30"/><rect x="808.9" y="104" width="0.9" height="931" fill="#4a2e20" opacity="0.29"/><rect x="869.1" y="104" width="1.3" height="931" fill="#6a4634" opacity="0.16"/><rect x="376.1" y="104" width="2.7" height="931" fill="#4a2e20" opacity="0.22"/><rect x="412.6" y="104" width="1.3" height="931" fill="#4a2e20" opacity="0.21"/><rect x="49.8" y="104" width="2.2" height="931" fill="#553525" opacity="0.34"/><rect x="240.3" y="104" width="1.2" height="931" fill="#553525" opacity="0.21"/><rect x="745.3" y="104" width="2.5" height="931" fill="#6a4634" opacity="0.33"/><rect x="782.7" y="104" width="2.1" height="931" fill="#553525" opacity="0.26"/><rect x="693.7" y="104" width="0.7" height="931" fill="#553525" opacity="0.23"/><rect x="592.8" y="104" width="0.9" height="931" fill="#6a4634" opacity="0.25"/><rect x="879.1" y="104" width="1.9" height="931" fill="#4a2e20" opacity="0.24"/></g>
<rect x="31" y="122" width="902" height="902" fill="#7e1c1a"/>
<clipPath id="frc"><path d="M31,122 H933 V1024 H31 Z M44.5,136 V1009.6 H918.1 V136 Z" clip-rule="evenodd"/></clipPath>
<g clip-path="url(#frc)"><g filter="url(#bl1)"><ellipse cx="32.9" cy="350.7" rx="2.2" ry="2.2" fill="#5a0e0e" opacity="0.49"/><ellipse cx="916.8" cy="703.3" rx="1.6" ry="5.5" fill="#4c0a0a" opacity="0.50"/><ellipse cx="439.5" cy="1012.7" rx="2.3" ry="3.7" fill="#8e2420" opacity="0.40"/><ellipse cx="337.9" cy="1007.1" rx="2.1" ry="5.0" fill="#9a2a24" opacity="0.38"/><ellipse cx="710.9" cy="127.1" rx="3.2" ry="2.1" fill="#8e2420" opacity="0.41"/><ellipse cx="480.8" cy="130.6" rx="1.4" ry="3.5" fill="#5a0e0e" opacity="0.55"/><ellipse cx="109.7" cy="1025.6" rx="2.2" ry="3.2" fill="#8e2420" opacity="0.68"/><ellipse cx="141.4" cy="127.4" rx="3.9" ry="3.4" fill="#8e2420" opacity="0.33"/><ellipse cx="936.4" cy="344.1" rx="1.7" ry="1.8" fill="#4c0a0a" opacity="0.69"/><ellipse cx="886.5" cy="133.9" rx="1.3" ry="4.9" fill="#8e2420" opacity="0.30"/><ellipse cx="237.8" cy="1026.2" rx="3.9" ry="4.1" fill="#5a0e0e" opacity="0.51"/><ellipse cx="930.1" cy="220.0" rx="1.9" ry="5.7" fill="#4c0a0a" opacity="0.38"/><ellipse cx="31.7" cy="665.0" rx="2.6" ry="6.0" fill="#4c0a0a" opacity="0.41"/><ellipse cx="40.5" cy="922.2" rx="2.6" ry="3.7" fill="#8e2420" opacity="0.31"/><ellipse cx="930.2" cy="397.7" rx="1.6" ry="5.4" fill="#4c0a0a" opacity="0.56"/><ellipse cx="260.4" cy="132.7" rx="1.7" ry="1.2" fill="#5a0e0e" opacity="0.44"/><ellipse cx="922.3" cy="478.7" rx="3.4" ry="4.7" fill="#4c0a0a" opacity="0.50"/><ellipse cx="478.6" cy="1009.6" rx="1.7" ry="2.1" fill="#9a2a24" opacity="0.60"/><ellipse cx="29.3" cy="685.5" rx="1.6" ry="2.1" fill="#420808" opacity="0.47"/><ellipse cx="893.1" cy="121.2" rx="1.2" ry="1.1" fill="#8e2420" opacity="0.54"/><ellipse cx="915.2" cy="172.7" rx="2.3" ry="4.6" fill="#8e2420" opacity="0.43"/><ellipse cx="937.7" cy="138.5" rx="1.6" ry="4.3" fill="#5a0e0e" opacity="0.51"/><ellipse cx="914.7" cy="722.6" rx="3.5" ry="5.9" fill="#8e2420" opacity="0.48"/><ellipse cx="27.6" cy="124.2" rx="2.3" ry="5.4" fill="#5a0e0e" opacity="0.52"/><ellipse cx="372.8" cy="1022.7" rx="3.5" ry="3.2" fill="#5a0e0e" opacity="0.32"/><ellipse cx="918.5" cy="610.8" rx="1.6" ry="2.8" fill="#8e2420" opacity="0.66"/><ellipse cx="603.0" cy="123.5" rx="1.1" ry="1.2" fill="#8e2420" opacity="0.33"/><ellipse cx="260.2" cy="134.4" rx="2.0" ry="2.4" fill="#420808" opacity="0.68"/><ellipse cx="264.9" cy="133.8" rx="3.8" ry="2.5" fill="#5a0e0e" opacity="0.59"/><ellipse cx="47.2" cy="123.1" rx="3.1" ry="3.3" fill="#8e2420" opacity="0.61"/><ellipse cx="46.2" cy="859.5" rx="3.8" ry="1.9" fill="#9a2a24" opacity="0.62"/><ellipse cx="44.3" cy="821.3" rx="1.7" ry="5.3" fill="#420808" opacity="0.48"/><ellipse cx="493.4" cy="126.6" rx="1.7" ry="1.3" fill="#9a2a24" opacity="0.31"/><ellipse cx="30.4" cy="506.2" rx="4.0" ry="2.3" fill="#4c0a0a" opacity="0.33"/><ellipse cx="410.3" cy="139.7" rx="1.5" ry="1.7" fill="#8e2420" opacity="0.48"/><ellipse cx="709.4" cy="1024.5" rx="3.3" ry="2.5" fill="#4c0a0a" opacity="0.41"/><ellipse cx="34.8" cy="789.6" rx="2.3" ry="1.9" fill="#9a2a24" opacity="0.39"/><ellipse cx="45.6" cy="644.2" rx="1.2" ry="2.3" fill="#5a0e0e" opacity="0.40"/><ellipse cx="619.4" cy="1007.3" rx="4.0" ry="1.5" fill="#8e2420" opacity="0.49"/><ellipse cx="794.1" cy="1026.0" rx="3.6" ry="2.2" fill="#4c0a0a" opacity="0.32"/><ellipse cx="876.1" cy="1013.6" rx="2.3" ry="2.3" fill="#9a2a24" opacity="0.61"/><ellipse cx="121.8" cy="131.1" rx="2.0" ry="1.2" fill="#420808" opacity="0.44"/><ellipse cx="211.6" cy="123.6" rx="3.2" ry="5.6" fill="#420808" opacity="0.63"/><ellipse cx="35.6" cy="456.3" rx="1.9" ry="2.0" fill="#420808" opacity="0.62"/><ellipse cx="915.5" cy="210.3" rx="3.0" ry="1.8" fill="#8e2420" opacity="0.51"/><ellipse cx="389.0" cy="1011.2" rx="3.0" ry="3.1" fill="#5a0e0e" opacity="0.32"/><ellipse cx="35.7" cy="134.6" rx="2.9" ry="3.0" fill="#5a0e0e" opacity="0.46"/><ellipse cx="422.3" cy="121.4" rx="3.5" ry="3.0" fill="#4c0a0a" opacity="0.65"/><ellipse cx="931.8" cy="236.3" rx="2.7" ry="4.2" fill="#4c0a0a" opacity="0.66"/><ellipse cx="549.2" cy="138.4" rx="1.5" ry="2.7" fill="#420808" opacity="0.36"/><ellipse cx="871.8" cy="1007.5" rx="3.3" ry="5.0" fill="#8e2420" opacity="0.62"/><ellipse cx="29.7" cy="976.2" rx="1.9" ry="4.0" fill="#8e2420" opacity="0.55"/><ellipse cx="852.4" cy="131.6" rx="2.9" ry="5.3" fill="#9a2a24" opacity="0.55"/><ellipse cx="783.7" cy="1009.2" rx="1.1" ry="5.7" fill="#9a2a24" opacity="0.36"/><ellipse cx="29.6" cy="342.8" rx="1.1" ry="3.8" fill="#9a2a24" opacity="0.60"/><ellipse cx="636.1" cy="125.1" rx="2.8" ry="3.8" fill="#8e2420" opacity="0.55"/><ellipse cx="40.6" cy="398.5" rx="2.3" ry="4.3" fill="#9a2a24" opacity="0.48"/><ellipse cx="918.1" cy="121.2" rx="2.4" ry="3.2" fill="#8e2420" opacity="0.55"/><ellipse cx="933.2" cy="855.6" rx="1.3" ry="1.6" fill="#8e2420" opacity="0.47"/><ellipse cx="759.1" cy="129.1" rx="1.1" ry="1.7" fill="#4c0a0a" opacity="0.67"/><ellipse cx="43.3" cy="583.4" rx="3.3" ry="5.5" fill="#4c0a0a" opacity="0.56"/><ellipse cx="48.7" cy="1006.5" rx="3.2" ry="5.1" fill="#420808" opacity="0.38"/><ellipse cx="920.6" cy="856.0" rx="3.1" ry="4.6" fill="#9a2a24" opacity="0.39"/><ellipse cx="39.8" cy="347.5" rx="3.7" ry="2.4" fill="#5a0e0e" opacity="0.63"/><ellipse cx="257.6" cy="1027.2" rx="1.6" ry="2.3" fill="#8e2420" opacity="0.50"/><ellipse cx="34.8" cy="299.0" rx="1.5" ry="5.7" fill="#8e2420" opacity="0.57"/><ellipse cx="917.9" cy="832.2" rx="3.3" ry="1.2" fill="#4c0a0a" opacity="0.64"/><ellipse cx="926.8" cy="645.8" rx="1.8" ry="3.7" fill="#4c0a0a" opacity="0.64"/><ellipse cx="32.6" cy="1019.4" rx="1.4" ry="2.7" fill="#420808" opacity="0.33"/><ellipse cx="186.7" cy="1022.1" rx="1.9" ry="3.6" fill="#4c0a0a" opacity="0.42"/><ellipse cx="42.4" cy="797.9" rx="1.4" ry="4.1" fill="#9a2a24" opacity="0.47"/><ellipse cx="45.8" cy="238.1" rx="2.8" ry="1.2" fill="#9a2a24" opacity="0.32"/><ellipse cx="33.4" cy="594.0" rx="1.7" ry="3.9" fill="#420808" opacity="0.54"/><ellipse cx="360.1" cy="1024.1" rx="1.4" ry="5.7" fill="#9a2a24" opacity="0.40"/><ellipse cx="437.5" cy="1006.5" rx="3.6" ry="4.9" fill="#9a2a24" opacity="0.46"/><ellipse cx="47.3" cy="169.1" rx="3.7" ry="4.0" fill="#420808" opacity="0.53"/><ellipse cx="919.7" cy="940.2" rx="1.2" ry="1.1" fill="#4c0a0a" opacity="0.37"/><ellipse cx="78.4" cy="1022.9" rx="2.8" ry="4.3" fill="#4c0a0a" opacity="0.38"/><ellipse cx="918.6" cy="671.4" rx="2.9" ry="3.1" fill="#420808" opacity="0.55"/><ellipse cx="28.3" cy="687.6" rx="3.1" ry="1.0" fill="#8e2420" opacity="0.64"/><ellipse cx="915.9" cy="714.5" rx="1.7" ry="1.5" fill="#9a2a24" opacity="0.39"/><ellipse cx="137.8" cy="137.6" rx="3.1" ry="2.3" fill="#5a0e0e" opacity="0.52"/><ellipse cx="929.8" cy="952.7" rx="1.9" ry="5.6" fill="#5a0e0e" opacity="0.66"/><ellipse cx="830.2" cy="118.3" rx="3.7" ry="5.2" fill="#5a0e0e" opacity="0.38"/><ellipse cx="707.7" cy="1012.5" rx="2.0" ry="2.2" fill="#8e2420" opacity="0.66"/><ellipse cx="924.9" cy="600.9" rx="3.6" ry="3.2" fill="#4c0a0a" opacity="0.59"/><ellipse cx="43.6" cy="474.3" rx="1.2" ry="5.6" fill="#420808" opacity="0.36"/><ellipse cx="127.4" cy="131.7" rx="2.0" ry="1.7" fill="#9a2a24" opacity="0.31"/><ellipse cx="151.6" cy="132.2" rx="3.1" ry="4.7" fill="#4c0a0a" opacity="0.33"/><ellipse cx="31.2" cy="986.7" rx="3.7" ry="1.3" fill="#420808" opacity="0.65"/><ellipse cx="916.5" cy="305.2" rx="1.1" ry="5.7" fill="#4c0a0a" opacity="0.66"/><ellipse cx="779.9" cy="131.9" rx="2.4" ry="1.7" fill="#5a0e0e" opacity="0.62"/><ellipse cx="294.4" cy="1012.7" rx="1.1" ry="2.3" fill="#5a0e0e" opacity="0.41"/><ellipse cx="46.1" cy="818.0" rx="2.5" ry="5.3" fill="#420808" opacity="0.55"/><ellipse cx="747.0" cy="118.7" rx="3.3" ry="2.7" fill="#420808" opacity="0.58"/><ellipse cx="678.7" cy="1024.0" rx="3.5" ry="1.9" fill="#420808" opacity="0.30"/><ellipse cx="288.8" cy="1022.3" rx="1.0" ry="3.5" fill="#4c0a0a" opacity="0.50"/><ellipse cx="909.9" cy="1018.6" rx="1.8" ry="5.7" fill="#420808" opacity="0.41"/><ellipse cx="883.5" cy="1010.3" rx="1.3" ry="4.2" fill="#9a2a24" opacity="0.33"/><ellipse cx="599.6" cy="125.8" rx="3.8" ry="5.5" fill="#8e2420" opacity="0.60"/><ellipse cx="934.4" cy="140.9" rx="1.9" ry="3.1" fill="#9a2a24" opacity="0.52"/><ellipse cx="372.1" cy="1025.3" rx="3.8" ry="1.6" fill="#9a2a24" opacity="0.54"/><ellipse cx="343.9" cy="125.2" rx="3.6" ry="3.3" fill="#9a2a24" opacity="0.52"/><ellipse cx="30.6" cy="517.3" rx="2.7" ry="1.6" fill="#5a0e0e" opacity="0.48"/><ellipse cx="489.5" cy="1011.2" rx="1.5" ry="1.8" fill="#420808" opacity="0.40"/><ellipse cx="39.7" cy="435.3" rx="2.0" ry="1.9" fill="#9a2a24" opacity="0.69"/><ellipse cx="175.6" cy="132.5" rx="2.2" ry="5.9" fill="#9a2a24" opacity="0.62"/><ellipse cx="36.1" cy="296.5" rx="1.8" ry="5.4" fill="#4c0a0a" opacity="0.49"/><ellipse cx="390.1" cy="135.4" rx="2.5" ry="4.2" fill="#9a2a24" opacity="0.49"/><ellipse cx="260.4" cy="1022.0" rx="3.2" ry="5.5" fill="#4c0a0a" opacity="0.47"/><ellipse cx="933.5" cy="725.8" rx="3.6" ry="4.4" fill="#420808" opacity="0.56"/><ellipse cx="923.9" cy="354.4" rx="3.7" ry="2.2" fill="#4c0a0a" opacity="0.46"/><ellipse cx="253.8" cy="1014.7" rx="1.1" ry="5.3" fill="#8e2420" opacity="0.51"/><ellipse cx="843.5" cy="1012.5" rx="2.2" ry="3.4" fill="#4c0a0a" opacity="0.69"/><ellipse cx="254.9" cy="122.8" rx="2.6" ry="1.5" fill="#9a2a24" opacity="0.53"/><ellipse cx="681.3" cy="1016.8" rx="2.6" ry="3.1" fill="#5a0e0e" opacity="0.68"/><ellipse cx="931.1" cy="1009.2" rx="3.3" ry="1.6" fill="#420808" opacity="0.69"/><ellipse cx="40.4" cy="347.7" rx="2.2" ry="1.1" fill="#8e2420" opacity="0.47"/><ellipse cx="928.5" cy="732.1" rx="1.8" ry="2.1" fill="#420808" opacity="0.60"/><ellipse cx="934.7" cy="1027.1" rx="1.6" ry="1.6" fill="#8e2420" opacity="0.61"/><ellipse cx="454.3" cy="1017.9" rx="3.4" ry="1.7" fill="#9a2a24" opacity="0.57"/><ellipse cx="924.8" cy="385.9" rx="2.9" ry="4.9" fill="#420808" opacity="0.49"/><ellipse cx="269.7" cy="1013.7" rx="3.9" ry="4.4" fill="#5a0e0e" opacity="0.49"/><ellipse cx="34.5" cy="713.5" rx="2.4" ry="3.1" fill="#5a0e0e" opacity="0.55"/><ellipse cx="30.2" cy="393.9" rx="1.2" ry="5.1" fill="#8e2420" opacity="0.66"/><ellipse cx="510.5" cy="1012.9" rx="1.0" ry="1.1" fill="#420808" opacity="0.68"/><ellipse cx="32.3" cy="210.4" rx="3.6" ry="1.9" fill="#9a2a24" opacity="0.48"/><ellipse cx="215.8" cy="1014.3" rx="1.5" ry="5.5" fill="#420808" opacity="0.54"/><ellipse cx="636.6" cy="137.7" rx="1.6" ry="4.5" fill="#5a0e0e" opacity="0.51"/><ellipse cx="929.4" cy="224.5" rx="1.8" ry="2.2" fill="#4c0a0a" opacity="0.36"/><ellipse cx="926.8" cy="558.8" rx="3.1" ry="2.2" fill="#9a2a24" opacity="0.37"/><ellipse cx="171.7" cy="125.1" rx="2.5" ry="2.5" fill="#420808" opacity="0.49"/><ellipse cx="923.6" cy="992.2" rx="1.5" ry="2.8" fill="#4c0a0a" opacity="0.56"/><ellipse cx="582.9" cy="133.0" rx="3.4" ry="1.5" fill="#5a0e0e" opacity="0.49"/><ellipse cx="56.0" cy="1021.5" rx="2.0" ry="5.3" fill="#9a2a24" opacity="0.45"/><ellipse cx="931.9" cy="622.3" rx="1.9" ry="2.7" fill="#9a2a24" opacity="0.40"/><ellipse cx="781.5" cy="124.4" rx="2.2" ry="3.5" fill="#8e2420" opacity="0.41"/><ellipse cx="47.5" cy="713.6" rx="2.0" ry="2.6" fill="#4c0a0a" opacity="0.42"/><ellipse cx="742.6" cy="118.9" rx="3.7" ry="3.7" fill="#420808" opacity="0.32"/><ellipse cx="29.3" cy="160.2" rx="2.8" ry="4.3" fill="#8e2420" opacity="0.62"/><ellipse cx="928.2" cy="688.4" rx="3.6" ry="1.4" fill="#420808" opacity="0.32"/><ellipse cx="928.4" cy="276.3" rx="3.6" ry="3.1" fill="#9a2a24" opacity="0.34"/><ellipse cx="362.5" cy="136.1" rx="2.7" ry="2.3" fill="#5a0e0e" opacity="0.42"/><ellipse cx="914.8" cy="136.6" rx="2.9" ry="5.7" fill="#420808" opacity="0.32"/><ellipse cx="779.7" cy="135.0" rx="2.7" ry="5.6" fill="#8e2420" opacity="0.48"/><ellipse cx="647.2" cy="131.1" rx="2.4" ry="3.1" fill="#9a2a24" opacity="0.34"/><ellipse cx="918.9" cy="256.1" rx="2.3" ry="1.0" fill="#4c0a0a" opacity="0.57"/><ellipse cx="224.7" cy="120.7" rx="1.1" ry="4.6" fill="#8e2420" opacity="0.40"/><ellipse cx="869.4" cy="1013.4" rx="3.2" ry="1.4" fill="#9a2a24" opacity="0.55"/><ellipse cx="924.6" cy="966.4" rx="3.7" ry="1.3" fill="#5a0e0e" opacity="0.31"/><ellipse cx="38.5" cy="132.3" rx="1.2" ry="2.6" fill="#420808" opacity="0.59"/><ellipse cx="901.3" cy="1024.2" rx="1.2" ry="2.8" fill="#420808" opacity="0.53"/><ellipse cx="924.8" cy="269.5" rx="2.1" ry="4.2" fill="#4c0a0a" opacity="0.55"/><ellipse cx="925.0" cy="826.1" rx="3.8" ry="4.9" fill="#8e2420" opacity="0.53"/><ellipse cx="32.9" cy="683.9" rx="2.0" ry="4.0" fill="#420808" opacity="0.69"/><ellipse cx="575.0" cy="1012.1" rx="3.9" ry="2.2" fill="#8e2420" opacity="0.45"/><ellipse cx="927.8" cy="933.5" rx="1.8" ry="1.0" fill="#8e2420" opacity="0.41"/><ellipse cx="917.6" cy="955.7" rx="1.9" ry="1.7" fill="#4c0a0a" opacity="0.66"/><ellipse cx="275.6" cy="1024.6" rx="3.1" ry="5.6" fill="#420808" opacity="0.44"/><ellipse cx="519.1" cy="128.7" rx="1.6" ry="4.8" fill="#8e2420" opacity="0.67"/><ellipse cx="308.2" cy="1006.3" rx="2.4" ry="2.0" fill="#8e2420" opacity="0.40"/><ellipse cx="749.4" cy="128.1" rx="2.6" ry="2.8" fill="#4c0a0a" opacity="0.33"/><ellipse cx="927.3" cy="934.2" rx="2.0" ry="3.5" fill="#420808" opacity="0.38"/><ellipse cx="201.0" cy="1009.2" rx="2.1" ry="3.8" fill="#5a0e0e" opacity="0.46"/><ellipse cx="250.4" cy="1026.2" rx="2.1" ry="1.5" fill="#8e2420" opacity="0.55"/><ellipse cx="167.9" cy="131.1" rx="1.8" ry="4.0" fill="#5a0e0e" opacity="0.34"/><ellipse cx="931.2" cy="1024.9" rx="2.8" ry="2.1" fill="#8e2420" opacity="0.67"/><ellipse cx="35.9" cy="979.3" rx="3.5" ry="5.8" fill="#420808" opacity="0.40"/><ellipse cx="335.0" cy="139.9" rx="1.3" ry="1.3" fill="#8e2420" opacity="0.52"/><ellipse cx="925.2" cy="887.5" rx="3.6" ry="4.2" fill="#4c0a0a" opacity="0.67"/><ellipse cx="260.3" cy="130.4" rx="3.9" ry="4.3" fill="#4c0a0a" opacity="0.46"/><ellipse cx="933.5" cy="455.5" rx="4.0" ry="2.1" fill="#9a2a24" opacity="0.32"/><ellipse cx="46.8" cy="171.9" rx="3.7" ry="5.2" fill="#420808" opacity="0.32"/><ellipse cx="915.3" cy="249.8" rx="3.8" ry="4.4" fill="#4c0a0a" opacity="0.42"/><ellipse cx="931.4" cy="213.9" rx="2.1" ry="3.0" fill="#5a0e0e" opacity="0.45"/><ellipse cx="917.9" cy="335.0" rx="3.7" ry="5.5" fill="#9a2a24" opacity="0.49"/><ellipse cx="755.9" cy="1008.6" rx="1.2" ry="4.1" fill="#9a2a24" opacity="0.45"/><ellipse cx="737.2" cy="1027.0" rx="3.5" ry="4.1" fill="#8e2420" opacity="0.48"/><ellipse cx="33.8" cy="330.8" rx="2.9" ry="1.7" fill="#4c0a0a" opacity="0.39"/><ellipse cx="189.9" cy="127.9" rx="2.3" ry="1.7" fill="#9a2a24" opacity="0.47"/><ellipse cx="167.5" cy="1011.2" rx="2.0" ry="1.8" fill="#5a0e0e" opacity="0.50"/><ellipse cx="36.6" cy="557.0" rx="3.9" ry="1.3" fill="#9a2a24" opacity="0.66"/><ellipse cx="537.3" cy="1024.2" rx="1.8" ry="2.0" fill="#4c0a0a" opacity="0.45"/><ellipse cx="48.0" cy="959.8" rx="2.2" ry="3.1" fill="#4c0a0a" opacity="0.36"/><ellipse cx="30.0" cy="700.2" rx="3.4" ry="2.7" fill="#8e2420" opacity="0.36"/><ellipse cx="747.5" cy="138.8" rx="1.6" ry="3.2" fill="#5a0e0e" opacity="0.66"/><ellipse cx="278.3" cy="1009.2" rx="2.6" ry="2.2" fill="#9a2a24" opacity="0.37"/><ellipse cx="783.5" cy="137.6" rx="3.3" ry="1.9" fill="#8e2420" opacity="0.35"/><ellipse cx="558.4" cy="1009.7" rx="3.1" ry="3.6" fill="#4c0a0a" opacity="0.64"/><ellipse cx="499.4" cy="125.6" rx="3.5" ry="5.3" fill="#5a0e0e" opacity="0.50"/><ellipse cx="399.7" cy="134.8" rx="3.6" ry="2.3" fill="#9a2a24" opacity="0.37"/><ellipse cx="27.8" cy="757.1" rx="2.8" ry="1.0" fill="#420808" opacity="0.51"/><ellipse cx="936.3" cy="182.9" rx="3.1" ry="5.1" fill="#5a0e0e" opacity="0.65"/><ellipse cx="43.4" cy="908.0" rx="3.3" ry="1.3" fill="#420808" opacity="0.65"/><ellipse cx="924.3" cy="141.3" rx="1.4" ry="2.2" fill="#420808" opacity="0.34"/><ellipse cx="178.6" cy="1012.2" rx="3.5" ry="1.2" fill="#420808" opacity="0.34"/><ellipse cx="264.2" cy="1024.3" rx="2.4" ry="2.2" fill="#420808" opacity="0.48"/><ellipse cx="45.3" cy="770.6" rx="1.8" ry="3.3" fill="#4c0a0a" opacity="0.53"/><ellipse cx="29.3" cy="228.6" rx="2.6" ry="2.1" fill="#9a2a24" opacity="0.39"/><ellipse cx="931.2" cy="267.5" rx="3.8" ry="2.9" fill="#4c0a0a" opacity="0.47"/><ellipse cx="387.0" cy="138.7" rx="2.0" ry="2.2" fill="#5a0e0e" opacity="0.43"/><ellipse cx="933.4" cy="631.6" rx="3.4" ry="5.2" fill="#5a0e0e" opacity="0.32"/><ellipse cx="901.4" cy="1026.5" rx="3.6" ry="4.3" fill="#9a2a24" opacity="0.30"/><ellipse cx="510.7" cy="119.5" rx="1.6" ry="4.3" fill="#8e2420" opacity="0.39"/><ellipse cx="936.3" cy="824.7" rx="2.9" ry="5.0" fill="#8e2420" opacity="0.65"/><ellipse cx="56.5" cy="132.1" rx="3.8" ry="4.1" fill="#5a0e0e" opacity="0.55"/><ellipse cx="593.5" cy="123.5" rx="1.0" ry="2.2" fill="#420808" opacity="0.32"/><ellipse cx="304.5" cy="132.2" rx="1.2" ry="5.8" fill="#4c0a0a" opacity="0.67"/><ellipse cx="28.8" cy="655.1" rx="2.3" ry="3.6" fill="#9a2a24" opacity="0.65"/><ellipse cx="927.3" cy="367.4" rx="3.2" ry="2.4" fill="#4c0a0a" opacity="0.48"/><ellipse cx="620.1" cy="1009.6" rx="2.4" ry="3.7" fill="#5a0e0e" opacity="0.55"/><ellipse cx="932.8" cy="146.2" rx="1.7" ry="3.6" fill="#5a0e0e" opacity="0.45"/><ellipse cx="914.3" cy="438.9" rx="2.0" ry="2.6" fill="#9a2a24" opacity="0.41"/><ellipse cx="295.4" cy="1022.8" rx="2.7" ry="4.0" fill="#9a2a24" opacity="0.44"/><ellipse cx="498.1" cy="136.4" rx="3.2" ry="1.5" fill="#5a0e0e" opacity="0.39"/><ellipse cx="406.3" cy="1020.4" rx="3.0" ry="4.1" fill="#9a2a24" opacity="0.64"/><ellipse cx="701.0" cy="134.4" rx="1.8" ry="4.2" fill="#8e2420" opacity="0.55"/><ellipse cx="402.9" cy="1007.4" rx="3.3" ry="3.9" fill="#8e2420" opacity="0.50"/><ellipse cx="407.4" cy="1023.0" rx="2.8" ry="2.9" fill="#420808" opacity="0.48"/><ellipse cx="920.6" cy="438.9" rx="2.2" ry="3.8" fill="#5a0e0e" opacity="0.45"/><ellipse cx="27.1" cy="796.7" rx="2.1" ry="2.5" fill="#8e2420" opacity="0.51"/><ellipse cx="423.6" cy="1013.7" rx="1.3" ry="5.6" fill="#9a2a24" opacity="0.43"/><ellipse cx="902.3" cy="1009.7" rx="3.7" ry="5.8" fill="#8e2420" opacity="0.31"/><ellipse cx="38.9" cy="570.6" rx="3.3" ry="3.7" fill="#420808" opacity="0.70"/><ellipse cx="923.0" cy="443.5" rx="3.0" ry="3.3" fill="#420808" opacity="0.30"/><ellipse cx="505.6" cy="120.2" rx="2.5" ry="4.2" fill="#5a0e0e" opacity="0.67"/><ellipse cx="830.0" cy="1027.2" rx="2.2" ry="4.8" fill="#8e2420" opacity="0.66"/><ellipse cx="41.5" cy="797.3" rx="1.5" ry="2.6" fill="#4c0a0a" opacity="0.69"/><ellipse cx="37.8" cy="218.6" rx="3.1" ry="5.1" fill="#5a0e0e" opacity="0.70"/><ellipse cx="928.5" cy="594.9" rx="1.6" ry="5.5" fill="#420808" opacity="0.46"/><ellipse cx="601.5" cy="131.3" rx="2.7" ry="4.2" fill="#5a0e0e" opacity="0.59"/><ellipse cx="914.2" cy="120.5" rx="1.0" ry="2.5" fill="#420808" opacity="0.64"/><ellipse cx="636.3" cy="122.3" rx="3.3" ry="3.8" fill="#8e2420" opacity="0.65"/><ellipse cx="550.6" cy="1014.5" rx="1.4" ry="3.6" fill="#4c0a0a" opacity="0.50"/><ellipse cx="116.6" cy="121.8" rx="2.5" ry="3.3" fill="#420808" opacity="0.47"/><ellipse cx="619.8" cy="133.1" rx="2.0" ry="4.6" fill="#420808" opacity="0.44"/><ellipse cx="55.1" cy="1019.5" rx="1.2" ry="2.0" fill="#420808" opacity="0.55"/><ellipse cx="75.0" cy="137.6" rx="3.3" ry="1.2" fill="#420808" opacity="0.32"/><ellipse cx="253.1" cy="1006.0" rx="3.6" ry="2.6" fill="#420808" opacity="0.66"/><ellipse cx="921.0" cy="666.3" rx="3.9" ry="1.3" fill="#8e2420" opacity="0.57"/><ellipse cx="403.3" cy="1014.2" rx="1.1" ry="5.3" fill="#8e2420" opacity="0.33"/><ellipse cx="352.9" cy="1009.3" rx="2.2" ry="2.8" fill="#5a0e0e" opacity="0.43"/><ellipse cx="921.7" cy="710.7" rx="2.3" ry="5.6" fill="#4c0a0a" opacity="0.52"/><ellipse cx="918.4" cy="376.1" rx="2.3" ry="2.4" fill="#9a2a24" opacity="0.31"/><ellipse cx="246.2" cy="1008.0" rx="1.8" ry="5.2" fill="#9a2a24" opacity="0.35"/><ellipse cx="924.7" cy="841.4" rx="1.5" ry="2.8" fill="#9a2a24" opacity="0.59"/><ellipse cx="928.5" cy="646.5" rx="3.9" ry="3.5" fill="#5a0e0e" opacity="0.39"/><ellipse cx="929.5" cy="975.3" rx="2.8" ry="3.2" fill="#5a0e0e" opacity="0.70"/><ellipse cx="394.8" cy="1016.7" rx="3.6" ry="1.6" fill="#9a2a24" opacity="0.51"/><ellipse cx="42.5" cy="814.0" rx="3.0" ry="3.8" fill="#4c0a0a" opacity="0.42"/><ellipse cx="930.3" cy="750.1" rx="2.0" ry="4.3" fill="#9a2a24" opacity="0.34"/><ellipse cx="43.9" cy="808.2" rx="1.2" ry="2.6" fill="#9a2a24" opacity="0.39"/><ellipse cx="772.4" cy="1014.2" rx="2.2" ry="5.5" fill="#5a0e0e" opacity="0.61"/><ellipse cx="882.1" cy="1009.1" rx="3.0" ry="4.3" fill="#5a0e0e" opacity="0.44"/><ellipse cx="914.6" cy="758.4" rx="1.7" ry="5.2" fill="#8e2420" opacity="0.44"/><ellipse cx="191.2" cy="120.5" rx="3.2" ry="4.6" fill="#420808" opacity="0.32"/><ellipse cx="581.8" cy="127.5" rx="1.5" ry="4.7" fill="#5a0e0e" opacity="0.52"/><ellipse cx="541.6" cy="1010.2" rx="3.1" ry="2.3" fill="#8e2420" opacity="0.47"/><ellipse cx="46.6" cy="219.8" rx="3.7" ry="5.4" fill="#5a0e0e" opacity="0.53"/><ellipse cx="916.3" cy="133.0" rx="3.4" ry="2.1" fill="#4c0a0a" opacity="0.67"/><ellipse cx="406.8" cy="134.4" rx="3.5" ry="2.4" fill="#420808" opacity="0.34"/><ellipse cx="924.2" cy="427.7" rx="3.2" ry="5.1" fill="#420808" opacity="0.55"/><ellipse cx="925.7" cy="733.7" rx="2.3" ry="3.6" fill="#9a2a24" opacity="0.67"/><ellipse cx="472.9" cy="1009.4" rx="1.8" ry="3.7" fill="#420808" opacity="0.69"/><ellipse cx="522.7" cy="1010.7" rx="1.5" ry="2.7" fill="#4c0a0a" opacity="0.34"/><ellipse cx="29.9" cy="742.5" rx="3.0" ry="2.2" fill="#8e2420" opacity="0.40"/><ellipse cx="917.1" cy="701.2" rx="1.4" ry="4.5" fill="#5a0e0e" opacity="0.54"/><ellipse cx="330.2" cy="1023.8" rx="2.3" ry="5.7" fill="#420808" opacity="0.57"/><ellipse cx="572.8" cy="1015.6" rx="3.5" ry="1.6" fill="#8e2420" opacity="0.42"/><ellipse cx="37.2" cy="157.5" rx="1.9" ry="1.6" fill="#5a0e0e" opacity="0.42"/><ellipse cx="172.6" cy="127.8" rx="2.1" ry="1.8" fill="#420808" opacity="0.33"/><ellipse cx="453.7" cy="139.6" rx="1.3" ry="4.6" fill="#8e2420" opacity="0.69"/><ellipse cx="29.3" cy="562.9" rx="2.5" ry="4.9" fill="#8e2420" opacity="0.43"/><ellipse cx="46.3" cy="704.5" rx="3.8" ry="4.3" fill="#420808" opacity="0.40"/><ellipse cx="96.5" cy="1022.2" rx="3.3" ry="5.2" fill="#4c0a0a" opacity="0.42"/><ellipse cx="905.3" cy="1017.1" rx="1.3" ry="4.6" fill="#9a2a24" opacity="0.42"/><ellipse cx="35.0" cy="707.0" rx="2.0" ry="2.8" fill="#5a0e0e" opacity="0.52"/><ellipse cx="44.6" cy="348.7" rx="1.1" ry="3.8" fill="#4c0a0a" opacity="0.55"/><ellipse cx="934.8" cy="977.9" rx="2.3" ry="4.7" fill="#8e2420" opacity="0.70"/><ellipse cx="154.8" cy="123.0" rx="2.3" ry="5.8" fill="#9a2a24" opacity="0.34"/><ellipse cx="803.4" cy="128.5" rx="3.2" ry="1.0" fill="#9a2a24" opacity="0.64"/><ellipse cx="917.3" cy="183.5" rx="2.5" ry="3.1" fill="#4c0a0a" opacity="0.44"/><ellipse cx="914.2" cy="988.0" rx="3.7" ry="1.8" fill="#9a2a24" opacity="0.42"/><ellipse cx="932.5" cy="732.5" rx="1.6" ry="1.4" fill="#420808" opacity="0.43"/><ellipse cx="923.9" cy="604.6" rx="3.9" ry="5.8" fill="#9a2a24" opacity="0.55"/><ellipse cx="686.3" cy="125.3" rx="2.7" ry="3.1" fill="#5a0e0e" opacity="0.45"/><ellipse cx="298.9" cy="1012.9" rx="3.5" ry="2.1" fill="#4c0a0a" opacity="0.60"/><ellipse cx="159.4" cy="130.7" rx="2.7" ry="3.1" fill="#420808" opacity="0.51"/><ellipse cx="923.1" cy="222.0" rx="3.9" ry="2.0" fill="#9a2a24" opacity="0.60"/><ellipse cx="813.9" cy="1010.8" rx="1.6" ry="4.4" fill="#4c0a0a" opacity="0.58"/><ellipse cx="531.9" cy="1010.2" rx="3.1" ry="4.7" fill="#420808" opacity="0.66"/><ellipse cx="804.2" cy="132.9" rx="1.4" ry="3.5" fill="#8e2420" opacity="0.50"/><ellipse cx="598.3" cy="139.1" rx="1.3" ry="5.2" fill="#420808" opacity="0.46"/><ellipse cx="910.7" cy="1009.4" rx="3.3" ry="1.7" fill="#8e2420" opacity="0.61"/><ellipse cx="395.0" cy="119.0" rx="1.0" ry="4.0" fill="#4c0a0a" opacity="0.39"/><ellipse cx="29.5" cy="241.4" rx="2.9" ry="5.4" fill="#4c0a0a" opacity="0.53"/><ellipse cx="30.5" cy="796.3" rx="3.4" ry="4.7" fill="#5a0e0e" opacity="0.30"/><ellipse cx="29.6" cy="457.4" rx="3.8" ry="4.6" fill="#420808" opacity="0.32"/><ellipse cx="29.1" cy="617.4" rx="1.3" ry="5.6" fill="#420808" opacity="0.57"/><ellipse cx="34.4" cy="749.5" rx="3.5" ry="3.9" fill="#4c0a0a" opacity="0.35"/><ellipse cx="471.6" cy="119.6" rx="1.6" ry="3.8" fill="#5a0e0e" opacity="0.42"/><ellipse cx="933.2" cy="653.4" rx="2.6" ry="4.4" fill="#5a0e0e" opacity="0.62"/><ellipse cx="914.3" cy="429.6" rx="2.5" ry="3.4" fill="#9a2a24" opacity="0.31"/><ellipse cx="93.3" cy="131.6" rx="2.2" ry="3.4" fill="#420808" opacity="0.36"/><ellipse cx="923.0" cy="912.4" rx="2.6" ry="2.8" fill="#420808" opacity="0.51"/><ellipse cx="45.8" cy="654.2" rx="1.6" ry="5.1" fill="#4c0a0a" opacity="0.59"/><ellipse cx="39.1" cy="471.0" rx="1.9" ry="2.7" fill="#5a0e0e" opacity="0.49"/><ellipse cx="43.8" cy="1015.6" rx="1.1" ry="1.7" fill="#420808" opacity="0.57"/><ellipse cx="35.1" cy="175.8" rx="2.1" ry="3.9" fill="#5a0e0e" opacity="0.53"/><ellipse cx="932.8" cy="1005.8" rx="3.7" ry="1.5" fill="#420808" opacity="0.38"/><ellipse cx="928.6" cy="695.5" rx="3.4" ry="5.0" fill="#5a0e0e" opacity="0.40"/><ellipse cx="648.4" cy="1012.0" rx="3.2" ry="3.5" fill="#5a0e0e" opacity="0.55"/><ellipse cx="45.3" cy="769.3" rx="1.2" ry="2.7" fill="#5a0e0e" opacity="0.43"/><ellipse cx="925.6" cy="931.7" rx="4.0" ry="1.8" fill="#9a2a24" opacity="0.38"/><ellipse cx="923.3" cy="478.4" rx="3.8" ry="3.9" fill="#5a0e0e" opacity="0.36"/><ellipse cx="32.3" cy="638.4" rx="1.2" ry="2.0" fill="#5a0e0e" opacity="0.67"/><ellipse cx="303.4" cy="1013.1" rx="2.1" ry="4.9" fill="#8e2420" opacity="0.47"/><ellipse cx="792.3" cy="125.0" rx="1.8" ry="2.3" fill="#9a2a24" opacity="0.31"/><ellipse cx="598.2" cy="1010.4" rx="1.7" ry="3.0" fill="#4c0a0a" opacity="0.38"/><ellipse cx="45.1" cy="707.8" rx="1.7" ry="1.3" fill="#9a2a24" opacity="0.35"/><ellipse cx="97.6" cy="135.8" rx="2.0" ry="1.7" fill="#420808" opacity="0.38"/><ellipse cx="610.5" cy="138.3" rx="2.0" ry="5.3" fill="#9a2a24" opacity="0.31"/><ellipse cx="923.3" cy="735.9" rx="1.5" ry="5.3" fill="#5a0e0e" opacity="0.62"/><ellipse cx="598.1" cy="125.4" rx="4.0" ry="3.0" fill="#8e2420" opacity="0.68"/><ellipse cx="48.6" cy="125.0" rx="1.2" ry="4.1" fill="#5a0e0e" opacity="0.59"/><ellipse cx="30.3" cy="134.9" rx="1.4" ry="4.8" fill="#9a2a24" opacity="0.34"/><ellipse cx="35.9" cy="608.2" rx="3.6" ry="1.8" fill="#420808" opacity="0.69"/><ellipse cx="31.8" cy="681.0" rx="3.3" ry="4.9" fill="#8e2420" opacity="0.42"/><ellipse cx="926.9" cy="446.8" rx="3.8" ry="1.7" fill="#420808" opacity="0.30"/><ellipse cx="916.3" cy="854.4" rx="1.5" ry="4.1" fill="#5a0e0e" opacity="0.46"/><ellipse cx="882.3" cy="131.7" rx="1.2" ry="3.5" fill="#4c0a0a" opacity="0.52"/><ellipse cx="262.1" cy="1018.9" rx="3.7" ry="5.4" fill="#9a2a24" opacity="0.64"/><ellipse cx="508.6" cy="1013.1" rx="2.3" ry="5.3" fill="#9a2a24" opacity="0.39"/><ellipse cx="45.9" cy="472.0" rx="2.0" ry="5.5" fill="#9a2a24" opacity="0.34"/><ellipse cx="84.9" cy="132.2" rx="3.0" ry="2.8" fill="#8e2420" opacity="0.39"/><ellipse cx="923.4" cy="954.4" rx="1.1" ry="1.1" fill="#9a2a24" opacity="0.58"/><ellipse cx="236.7" cy="1009.7" rx="2.9" ry="2.5" fill="#8e2420" opacity="0.70"/><ellipse cx="922.9" cy="1023.2" rx="3.6" ry="5.3" fill="#8e2420" opacity="0.41"/><ellipse cx="777.9" cy="1011.5" rx="1.0" ry="5.4" fill="#5a0e0e" opacity="0.40"/><ellipse cx="41.3" cy="661.8" rx="1.6" ry="1.3" fill="#8e2420" opacity="0.61"/><ellipse cx="28.0" cy="822.3" rx="1.5" ry="5.3" fill="#8e2420" opacity="0.70"/><ellipse cx="41.4" cy="850.6" rx="3.9" ry="1.0" fill="#9a2a24" opacity="0.66"/><ellipse cx="484.9" cy="1013.1" rx="2.4" ry="3.0" fill="#9a2a24" opacity="0.47"/><ellipse cx="934.3" cy="1009.5" rx="2.8" ry="2.0" fill="#4c0a0a" opacity="0.55"/><ellipse cx="59.7" cy="129.1" rx="2.7" ry="4.5" fill="#9a2a24" opacity="0.59"/><ellipse cx="931.6" cy="125.0" rx="1.4" ry="3.4" fill="#4c0a0a" opacity="0.35"/><ellipse cx="914.1" cy="321.8" rx="1.4" ry="4.7" fill="#420808" opacity="0.50"/><ellipse cx="509.9" cy="136.5" rx="2.0" ry="2.1" fill="#4c0a0a" opacity="0.69"/><ellipse cx="694.2" cy="1011.3" rx="1.0" ry="2.3" fill="#9a2a24" opacity="0.69"/><ellipse cx="490.5" cy="1014.4" rx="3.9" ry="2.3" fill="#420808" opacity="0.43"/><ellipse cx="622.6" cy="130.0" rx="2.0" ry="3.1" fill="#420808" opacity="0.70"/><ellipse cx="35.4" cy="407.6" rx="2.1" ry="1.8" fill="#8e2420" opacity="0.60"/><ellipse cx="932.5" cy="935.3" rx="1.7" ry="3.5" fill="#4c0a0a" opacity="0.70"/><ellipse cx="936.8" cy="869.3" rx="1.3" ry="4.1" fill="#4c0a0a" opacity="0.31"/><ellipse cx="396.3" cy="130.3" rx="2.6" ry="2.6" fill="#8e2420" opacity="0.69"/><ellipse cx="458.2" cy="132.2" rx="2.5" ry="4.0" fill="#8e2420" opacity="0.70"/><ellipse cx="779.9" cy="1023.2" rx="2.1" ry="1.3" fill="#8e2420" opacity="0.69"/><ellipse cx="39.9" cy="734.3" rx="1.2" ry="5.0" fill="#5a0e0e" opacity="0.57"/><ellipse cx="32.5" cy="883.3" rx="2.6" ry="3.4" fill="#5a0e0e" opacity="0.39"/><ellipse cx="85.3" cy="1022.4" rx="2.6" ry="3.6" fill="#5a0e0e" opacity="0.63"/><ellipse cx="641.4" cy="1008.5" rx="1.5" ry="5.7" fill="#8e2420" opacity="0.64"/><ellipse cx="319.6" cy="126.0" rx="1.4" ry="1.8" fill="#8e2420" opacity="0.40"/><ellipse cx="358.8" cy="132.6" rx="2.6" ry="3.3" fill="#420808" opacity="0.34"/><ellipse cx="920.7" cy="524.0" rx="2.3" ry="3.4" fill="#4c0a0a" opacity="0.62"/><ellipse cx="30.4" cy="1008.0" rx="2.6" ry="2.2" fill="#8e2420" opacity="0.45"/><ellipse cx="43.8" cy="348.1" rx="1.6" ry="3.9" fill="#420808" opacity="0.32"/><ellipse cx="305.5" cy="1017.5" rx="1.8" ry="2.3" fill="#5a0e0e" opacity="0.48"/><ellipse cx="933.8" cy="301.5" rx="3.9" ry="2.5" fill="#8e2420" opacity="0.61"/><ellipse cx="681.4" cy="126.3" rx="3.1" ry="2.5" fill="#4c0a0a" opacity="0.46"/><ellipse cx="34.4" cy="468.7" rx="1.4" ry="4.1" fill="#420808" opacity="0.69"/><ellipse cx="28.3" cy="302.8" rx="1.2" ry="3.2" fill="#4c0a0a" opacity="0.46"/><ellipse cx="925.4" cy="938.2" rx="1.3" ry="3.8" fill="#4c0a0a" opacity="0.67"/><ellipse cx="923.5" cy="549.0" rx="2.3" ry="3.5" fill="#4c0a0a" opacity="0.50"/><ellipse cx="638.4" cy="134.3" rx="2.6" ry="5.6" fill="#8e2420" opacity="0.42"/><ellipse cx="43.2" cy="818.6" rx="1.3" ry="5.2" fill="#4c0a0a" opacity="0.53"/><ellipse cx="118.1" cy="119.9" rx="2.7" ry="1.3" fill="#9a2a24" opacity="0.57"/><ellipse cx="37.1" cy="167.8" rx="3.5" ry="1.7" fill="#8e2420" opacity="0.46"/><ellipse cx="822.8" cy="121.2" rx="1.6" ry="5.9" fill="#5a0e0e" opacity="0.37"/><ellipse cx="37.9" cy="196.8" rx="1.8" ry="5.3" fill="#8e2420" opacity="0.52"/><ellipse cx="929.7" cy="397.2" rx="3.6" ry="5.0" fill="#9a2a24" opacity="0.64"/><ellipse cx="33.4" cy="237.9" rx="2.6" ry="2.9" fill="#9a2a24" opacity="0.49"/><ellipse cx="930.3" cy="246.6" rx="1.6" ry="5.6" fill="#5a0e0e" opacity="0.52"/><ellipse cx="692.3" cy="118.2" rx="2.2" ry="3.8" fill="#4c0a0a" opacity="0.43"/><ellipse cx="31.6" cy="517.6" rx="3.1" ry="5.0" fill="#9a2a24" opacity="0.54"/><ellipse cx="923.3" cy="780.3" rx="3.6" ry="1.3" fill="#9a2a24" opacity="0.47"/><ellipse cx="69.8" cy="137.0" rx="3.4" ry="3.5" fill="#4c0a0a" opacity="0.31"/><ellipse cx="480.9" cy="1020.5" rx="3.4" ry="3.7" fill="#5a0e0e" opacity="0.36"/><ellipse cx="497.4" cy="1015.7" rx="3.4" ry="5.8" fill="#9a2a24" opacity="0.47"/><ellipse cx="41.8" cy="520.6" rx="1.5" ry="1.3" fill="#8e2420" opacity="0.58"/><ellipse cx="171.5" cy="127.8" rx="3.6" ry="5.0" fill="#9a2a24" opacity="0.58"/><ellipse cx="308.3" cy="1010.9" rx="3.5" ry="1.8" fill="#420808" opacity="0.62"/><ellipse cx="383.2" cy="1005.8" rx="1.5" ry="2.5" fill="#8e2420" opacity="0.56"/><ellipse cx="206.3" cy="121.3" rx="2.3" ry="4.4" fill="#9a2a24" opacity="0.35"/><ellipse cx="29.6" cy="958.2" rx="2.6" ry="2.5" fill="#420808" opacity="0.44"/><ellipse cx="934.5" cy="948.8" rx="2.5" ry="5.3" fill="#9a2a24" opacity="0.54"/><ellipse cx="209.2" cy="128.4" rx="2.7" ry="2.5" fill="#9a2a24" opacity="0.53"/><ellipse cx="910.1" cy="125.6" rx="3.0" ry="1.3" fill="#9a2a24" opacity="0.43"/><ellipse cx="925.1" cy="417.9" rx="1.5" ry="4.9" fill="#5a0e0e" opacity="0.42"/><ellipse cx="687.2" cy="128.0" rx="1.3" ry="1.8" fill="#420808" opacity="0.46"/><ellipse cx="55.9" cy="129.3" rx="2.2" ry="4.5" fill="#4c0a0a" opacity="0.47"/><ellipse cx="28.6" cy="780.1" rx="2.1" ry="4.3" fill="#9a2a24" opacity="0.34"/><ellipse cx="795.7" cy="137.2" rx="1.9" ry="2.3" fill="#8e2420" opacity="0.34"/><ellipse cx="132.1" cy="1016.4" rx="2.6" ry="2.6" fill="#420808" opacity="0.40"/><ellipse cx="488.7" cy="126.1" rx="1.9" ry="3.8" fill="#9a2a24" opacity="0.70"/><ellipse cx="689.8" cy="1017.3" rx="3.7" ry="1.1" fill="#9a2a24" opacity="0.68"/><ellipse cx="932.2" cy="756.3" rx="3.1" ry="2.1" fill="#9a2a24" opacity="0.60"/><ellipse cx="794.6" cy="1028.0" rx="2.2" ry="3.6" fill="#8e2420" opacity="0.42"/><ellipse cx="102.2" cy="130.7" rx="1.7" ry="4.9" fill="#9a2a24" opacity="0.51"/><ellipse cx="776.5" cy="119.6" rx="3.9" ry="1.2" fill="#5a0e0e" opacity="0.55"/><ellipse cx="770.4" cy="1012.9" rx="2.8" ry="1.9" fill="#8e2420" opacity="0.43"/><ellipse cx="932.1" cy="147.3" rx="1.4" ry="3.6" fill="#9a2a24" opacity="0.37"/><ellipse cx="43.2" cy="303.4" rx="3.1" ry="4.5" fill="#9a2a24" opacity="0.33"/><ellipse cx="749.3" cy="128.6" rx="2.6" ry="2.7" fill="#8e2420" opacity="0.33"/><ellipse cx="207.1" cy="131.8" rx="3.4" ry="1.5" fill="#5a0e0e" opacity="0.59"/><ellipse cx="39.2" cy="849.0" rx="3.0" ry="4.7" fill="#8e2420" opacity="0.35"/><ellipse cx="46.0" cy="795.9" rx="1.5" ry="2.9" fill="#420808" opacity="0.56"/><ellipse cx="42.7" cy="658.2" rx="1.2" ry="4.9" fill="#4c0a0a" opacity="0.62"/><ellipse cx="244.7" cy="1018.5" rx="1.7" ry="3.5" fill="#420808" opacity="0.66"/><ellipse cx="383.7" cy="135.2" rx="3.5" ry="3.0" fill="#5a0e0e" opacity="0.33"/><ellipse cx="40.9" cy="940.8" rx="3.4" ry="1.0" fill="#8e2420" opacity="0.50"/></g></g>
<rect x="44.50" y="136.00" width="109.60" height="109.60" fill="url(#lt)"/>
<rect x="153.70" y="136.00" width="109.60" height="109.60" fill="url(#dk)"/>
<rect x="262.90" y="136.00" width="109.60" height="109.60" fill="url(#lt)"/>
<rect x="372.10" y="136.00" width="109.60" height="109.60" fill="url(#dk)"/>
<rect x="481.30" y="136.00" width="109.60" height="109.60" fill="url(#lt)"/>
<rect x="590.50" y="136.00" width="109.60" height="109.60" fill="url(#dk)"/>
<rect x="699.70" y="136.00" width="109.60" height="109.60" fill="url(#lt)"/>
<rect x="808.90" y="136.00" width="109.60" height="109.60" fill="url(#dk)"/>
<rect x="44.50" y="245.20" width="109.60" height="109.60" fill="url(#dk)"/>
<rect x="153.70" y="245.20" width="109.60" height="109.60" fill="url(#lt)"/>
<rect x="262.90" y="245.20" width="109.60" height="109.60" fill="url(#dk)"/>
<rect x="372.10" y="245.20" width="109.60" height="109.60" fill="url(#lt)"/>
<rect x="481.30" y="245.20" width="109.60" height="109.60" fill="url(#dk)"/>
<rect x="590.50" y="245.20" width="109.60" height="109.60" fill="url(#lt)"/>
<rect x="699.70" y="245.20" width="109.60" height="109.60" fill="url(#dk)"/>
<rect x="808.90" y="245.20" width="109.60" height="109.60" fill="url(#lt)"/>
<rect x="44.50" y="354.40" width="109.60" height="109.60" fill="url(#lt)"/>
<rect x="153.70" y="354.40" width="109.60" height="109.60" fill="url(#dk)"/>
<rect x="262.90" y="354.40" width="109.60" height="109.60" fill="url(#lt)"/>
<rect x="372.10" y="354.40" width="109.60" height="109.60" fill="url(#dk)"/>
<rect x="481.30" y="354.40" width="109.60" height="109.60" fill="url(#lt)"/>
<rect x="590.50" y="354.40" width="109.60" height="109.60" fill="url(#dk)"/>
<rect x="699.70" y="354.40" width="109.60" height="109.60" fill="url(#lt)"/>
<rect x="808.90" y="354.40" width="109.60" height="109.60" fill="url(#dk)"/>
<rect x="44.50" y="463.60" width="109.60" height="109.60" fill="url(#dk)"/>
<rect x="153.70" y="463.60" width="109.60" height="109.60" fill="url(#lt)"/>
<rect x="262.90" y="463.60" width="109.60" height="109.60" fill="url(#dk)"/>
<rect x="372.10" y="463.60" width="109.60" height="109.60" fill="url(#lt)"/>
<rect x="481.30" y="463.60" width="109.60" height="109.60" fill="url(#dk)"/>
<rect x="590.50" y="463.60" width="109.60" height="109.60" fill="url(#lt)"/>
<rect x="699.70" y="463.60" width="109.60" height="109.60" fill="url(#dk)"/>
<rect x="808.90" y="463.60" width="109.60" height="109.60" fill="url(#lt)"/>
<rect x="44.50" y="572.80" width="109.60" height="109.60" fill="url(#lt)"/>
<rect x="153.70" y="572.80" width="109.60" height="109.60" fill="url(#dk)"/>
<rect x="262.90" y="572.80" width="109.60" height="109.60" fill="url(#lt)"/>
<rect x="372.10" y="572.80" width="109.60" height="109.60" fill="url(#dk)"/>
<rect x="481.30" y="572.80" width="109.60" height="109.60" fill="url(#lt)"/>
<rect x="590.50" y="572.80" width="109.60" height="109.60" fill="url(#dk)"/>
<rect x="699.70" y="572.80" width="109.60" height="109.60" fill="url(#lt)"/>
<rect x="808.90" y="572.80" width="109.60" height="109.60" fill="url(#dk)"/>
<rect x="44.50" y="682.00" width="109.60" height="109.60" fill="url(#dk)"/>
<rect x="153.70" y="682.00" width="109.60" height="109.60" fill="url(#lt)"/>
<rect x="262.90" y="682.00" width="109.60" height="109.60" fill="url(#dk)"/>
<rect x="372.10" y="682.00" width="109.60" height="109.60" fill="url(#lt)"/>
<rect x="481.30" y="682.00" width="109.60" height="109.60" fill="url(#dk)"/>
<rect x="590.50" y="682.00" width="109.60" height="109.60" fill="url(#lt)"/>
<rect x="699.70" y="682.00" width="109.60" height="109.60" fill="url(#dk)"/>
<rect x="808.90" y="682.00" width="109.60" height="109.60" fill="url(#lt)"/>
<rect x="44.50" y="791.20" width="109.60" height="109.60" fill="url(#lt)"/>
<rect x="153.70" y="791.20" width="109.60" height="109.60" fill="url(#dk)"/>
<rect x="262.90" y="791.20" width="109.60" height="109.60" fill="url(#lt)"/>
<rect x="372.10" y="791.20" width="109.60" height="109.60" fill="url(#dk)"/>
<rect x="481.30" y="791.20" width="109.60" height="109.60" fill="url(#lt)"/>
<rect x="590.50" y="791.20" width="109.60" height="109.60" fill="url(#dk)"/>
<rect x="699.70" y="791.20" width="109.60" height="109.60" fill="url(#lt)"/>
<rect x="808.90" y="791.20" width="109.60" height="109.60" fill="url(#dk)"/>
<rect x="44.50" y="900.40" width="109.60" height="109.60" fill="url(#dk)"/>
<rect x="153.70" y="900.40" width="109.60" height="109.60" fill="url(#lt)"/>
<rect x="262.90" y="900.40" width="109.60" height="109.60" fill="url(#dk)"/>
<rect x="372.10" y="900.40" width="109.60" height="109.60" fill="url(#lt)"/>
<rect x="481.30" y="900.40" width="109.60" height="109.60" fill="url(#dk)"/>
<rect x="590.50" y="900.40" width="109.60" height="109.60" fill="url(#lt)"/>
<rect x="699.70" y="900.40" width="109.60" height="109.60" fill="url(#dk)"/>
<rect x="808.90" y="900.40" width="109.60" height="109.60" fill="url(#lt)"/>
<clipPath id="dkc"><rect x="153.70" y="136.00" width="109.60" height="109.60"/><rect x="372.10" y="136.00" width="109.60" height="109.60"/><rect x="590.50" y="136.00" width="109.60" height="109.60"/><rect x="808.90" y="136.00" width="109.60" height="109.60"/><rect x="44.50" y="245.20" width="109.60" height="109.60"/><rect x="262.90" y="245.20" width="109.60" height="109.60"/><rect x="481.30" y="245.20" width="109.60" height="109.60"/><rect x="699.70" y="245.20" width="109.60" height="109.60"/><rect x="153.70" y="354.40" width="109.60" height="109.60"/><rect x="372.10" y="354.40" width="109.60" height="109.60"/><rect x="590.50" y="354.40" width="109.60" height="109.60"/><rect x="808.90" y="354.40" width="109.60" height="109.60"/><rect x="44.50" y="463.60" width="109.60" height="109.60"/><rect x="262.90" y="463.60" width="109.60" height="109.60"/><rect x="481.30" y="463.60" width="109.60" height="109.60"/><rect x="699.70" y="463.60" width="109.60" height="109.60"/><rect x="153.70" y="572.80" width="109.60" height="109.60"/><rect x="372.10" y="572.80" width="109.60" height="109.60"/><rect x="590.50" y="572.80" width="109.60" height="109.60"/><rect x="808.90" y="572.80" width="109.60" height="109.60"/><rect x="44.50" y="682.00" width="109.60" height="109.60"/><rect x="262.90" y="682.00" width="109.60" height="109.60"/><rect x="481.30" y="682.00" width="109.60" height="109.60"/><rect x="699.70" y="682.00" width="109.60" height="109.60"/><rect x="153.70" y="791.20" width="109.60" height="109.60"/><rect x="372.10" y="791.20" width="109.60" height="109.60"/><rect x="590.50" y="791.20" width="109.60" height="109.60"/><rect x="808.90" y="791.20" width="109.60" height="109.60"/><rect x="44.50" y="900.40" width="109.60" height="109.60"/><rect x="262.90" y="900.40" width="109.60" height="109.60"/><rect x="481.30" y="900.40" width="109.60" height="109.60"/><rect x="699.70" y="900.40" width="109.60" height="109.60"/></clipPath>
<g clip-path="url(#dkc)"><g filter="url(#bl2)"><path d="M150.2,136.0 L151.0,157.8 L150.4,179.7 L149.9,201.5 L149.4,223.4 L150.0,245.2 L153.3,245.2 L152.7,223.4 L153.2,201.5 L153.7,179.7 L154.3,157.8 L153.6,136.0 Z" fill="#a84818" opacity="0.41"/><path d="M221.4,136.0 L218.2,157.8 L221.0,179.7 L219.1,201.5 L219.6,223.4 L218.4,245.2 L223.9,245.2 L225.1,223.4 L224.6,201.5 L226.5,179.7 L223.7,157.8 L226.9,136.0 Z" fill="#a44416" opacity="0.25"/><path d="M219.9,136.0 L219.7,157.8 L218.9,179.7 L219.0,201.5 L219.7,223.4 L221.6,245.2 L228.1,245.2 L226.2,223.4 L225.5,201.5 L225.4,179.7 L226.2,157.8 L226.4,136.0 Z" fill="#b04c1a" opacity="0.42"/><path d="M260.2,136.0 L258.4,157.8 L260.3,179.7 L257.1,201.5 L259.7,223.4 L257.0,245.2 L262.7,245.2 L265.4,223.4 L262.8,201.5 L266.0,179.7 L264.1,157.8 L265.9,136.0 Z" fill="#d87a3a" opacity="0.33"/><path d="M148.6,136.0 L150.0,157.8 L147.7,179.7 L148.1,201.5 L147.1,223.4 L149.0,245.2 L153.1,245.2 L151.2,223.4 L152.3,201.5 L151.8,179.7 L154.1,157.8 L152.7,136.0 Z" fill="#b04c1a" opacity="0.42"/><path d="M208.0,136.0 L205.7,157.8 L207.9,179.7 L207.2,201.5 L209.2,223.4 L206.8,245.2 L213.4,245.2 L215.7,223.4 L213.7,201.5 L214.4,179.7 L212.2,157.8 L214.6,136.0 Z" fill="#d87a3a" opacity="0.37"/><path d="M222.1,136.0 L219.1,157.8 L221.5,179.7 L220.8,201.5 L221.6,223.4 L218.9,245.2 L225.4,245.2 L228.1,223.4 L227.3,201.5 L228.0,179.7 L225.6,157.8 L228.6,136.0 Z" fill="#dc8444" opacity="0.42"/><path d="M249.9,136.0 L251.1,157.8 L251.7,179.7 L251.0,201.5 L251.1,223.4 L248.3,245.2 L251.7,245.2 L254.5,223.4 L254.5,201.5 L255.1,179.7 L254.6,157.8 L253.3,136.0 Z" fill="#a84818" opacity="0.28"/><path d="M162.9,136.0 L164.7,157.8 L164.7,179.7 L162.5,201.5 L163.9,223.4 L165.3,245.2 L178.8,245.2 L177.3,223.4 L176.0,201.5 L178.1,179.7 L178.1,157.8 L176.4,136.0 Z" fill="#d87a3a" opacity="0.36"/><path d="M181.9,136.0 L178.9,157.8 L181.0,179.7 L180.4,201.5 L179.1,223.4 L182.6,245.2 L193.7,245.2 L190.3,223.4 L191.6,201.5 L192.1,179.7 L190.0,157.8 L193.0,136.0 Z" fill="#d87a3a" opacity="0.36"/><path d="M205.8,136.0 L204.1,157.8 L203.6,179.7 L205.3,201.5 L206.3,223.4 L206.2,245.2 L219.9,245.2 L220.0,223.4 L219.0,201.5 L217.3,179.7 L217.8,157.8 L219.5,136.0 Z" fill="#d87a3a" opacity="0.29"/><path d="M163.3,136.0 L165.6,157.8 L163.4,179.7 L163.9,201.5 L162.9,223.4 L163.9,245.2 L172.1,245.2 L171.1,223.4 L172.1,201.5 L171.5,179.7 L173.8,157.8 L171.5,136.0 Z" fill="#a44416" opacity="0.30"/><path d="M258.2,136.0 L260.7,157.8 L259.0,179.7 L259.6,201.5 L260.8,223.4 L258.7,245.2 L272.3,245.2 L274.4,223.4 L273.2,201.5 L272.6,179.7 L274.2,157.8 L271.8,136.0 Z" fill="#b04c1a" opacity="0.37"/><path d="M189.1,136.0 L188.8,157.8 L191.7,179.7 L189.8,201.5 L191.4,223.4 L190.6,245.2 L196.4,245.2 L197.2,223.4 L195.7,201.5 L197.5,179.7 L194.7,157.8 L194.9,136.0 Z" fill="#a84818" opacity="0.39"/><path d="M402.9,136.0 L403.3,157.8 L403.7,179.7 L404.1,201.5 L402.1,223.4 L402.5,245.2 L406.3,245.2 L406.0,223.4 L407.9,201.5 L407.6,179.7 L407.1,157.8 L406.8,136.0 Z" fill="#dc8444" opacity="0.43"/><path d="M426.6,136.0 L428.6,157.8 L425.7,179.7 L428.9,201.5 L427.8,223.4 L427.0,245.2 L432.4,245.2 L433.3,223.4 L434.3,201.5 L431.2,179.7 L434.1,157.8 L432.1,136.0 Z" fill="#a44416" opacity="0.43"/><path d="M398.9,136.0 L395.8,157.8 L397.8,179.7 L398.7,201.5 L398.8,223.4 L398.3,245.2 L403.2,245.2 L403.7,223.4 L403.7,201.5 L402.8,179.7 L400.7,157.8 L403.8,136.0 Z" fill="#a44416" opacity="0.43"/><path d="M387.1,136.0 L385.6,157.8 L387.8,179.7 L387.0,201.5 L385.4,223.4 L385.6,245.2 L389.7,245.2 L389.5,223.4 L391.1,201.5 L391.9,179.7 L389.7,157.8 L391.3,136.0 Z" fill="#a44416" opacity="0.40"/><path d="M407.2,136.0 L407.1,157.8 L407.7,179.7 L408.6,201.5 L405.6,223.4 L406.4,245.2 L410.6,245.2 L409.8,223.4 L412.9,201.5 L411.9,179.7 L411.4,157.8 L411.4,136.0 Z" fill="#b04c1a" opacity="0.22"/><path d="M415.0,136.0 L414.6,157.8 L413.9,179.7 L414.6,201.5 L413.4,223.4 L415.7,245.2 L423.7,245.2 L421.4,223.4 L422.6,201.5 L421.9,179.7 L422.6,157.8 L423.0,136.0 Z" fill="#dc8444" opacity="0.40"/><path d="M462.8,136.0 L464.4,157.8 L464.4,179.7 L463.8,201.5 L464.1,223.4 L463.4,245.2 L467.3,245.2 L467.9,223.4 L467.6,201.5 L468.3,179.7 L468.3,157.8 L466.7,136.0 Z" fill="#b04c1a" opacity="0.42"/><path d="M382.5,136.0 L381.2,157.8 L380.4,179.7 L382.5,201.5 L383.4,223.4 L381.2,245.2 L391.6,245.2 L393.8,223.4 L393.0,201.5 L390.8,179.7 L391.6,157.8 L393.0,136.0 Z" fill="#a84818" opacity="0.25"/><path d="M394.6,136.0 L393.9,157.8 L392.1,179.7 L393.5,201.5 L391.0,223.4 L394.0,245.2 L397.1,245.2 L394.1,223.4 L396.6,201.5 L395.2,179.7 L397.0,157.8 L397.7,136.0 Z" fill="#dc8444" opacity="0.28"/><path d="M367.3,136.0 L367.5,157.8 L369.4,179.7 L367.9,201.5 L367.9,223.4 L365.6,245.2 L375.2,245.2 L377.4,223.4 L377.4,201.5 L379.0,179.7 L377.1,157.8 L376.8,136.0 Z" fill="#b04c1a" opacity="0.33"/><path d="M421.0,136.0 L419.9,157.8 L419.8,179.7 L420.8,201.5 L419.4,223.4 L421.7,245.2 L429.5,245.2 L427.2,223.4 L428.6,201.5 L427.6,179.7 L427.7,157.8 L428.8,136.0 Z" fill="#d87a3a" opacity="0.25"/><path d="M463.8,136.0 L461.9,157.8 L461.7,179.7 L464.2,201.5 L462.0,223.4 L462.5,245.2 L474.2,245.2 L473.7,223.4 L475.9,201.5 L473.4,179.7 L473.6,157.8 L475.5,136.0 Z" fill="#dc8444" opacity="0.44"/><path d="M398.0,136.0 L398.4,157.8 L398.7,179.7 L397.3,201.5 L399.8,223.4 L400.3,245.2 L403.4,245.2 L402.9,223.4 L400.3,201.5 L401.8,179.7 L401.5,157.8 L401.0,136.0 Z" fill="#a44416" opacity="0.40"/><path d="M475.2,136.0 L476.8,157.8 L475.4,179.7 L476.7,201.5 L477.6,223.4 L477.7,245.2 L483.7,245.2 L483.6,223.4 L482.7,201.5 L481.4,179.7 L482.7,157.8 L481.1,136.0 Z" fill="#d87a3a" opacity="0.31"/><path d="M623.2,136.0 L625.6,157.8 L622.8,179.7 L626.1,201.5 L622.6,223.4 L625.6,245.2 L629.9,245.2 L626.9,223.4 L630.4,201.5 L627.1,179.7 L629.8,157.8 L627.5,136.0 Z" fill="#a84818" opacity="0.40"/><path d="M670.6,136.0 L671.2,157.8 L672.3,179.7 L671.3,201.5 L672.2,223.4 L672.0,245.2 L683.3,245.2 L683.4,223.4 L682.6,201.5 L683.5,179.7 L682.4,157.8 L681.9,136.0 Z" fill="#b04c1a" opacity="0.38"/><path d="M667.3,136.0 L669.0,157.8 L668.2,179.7 L668.7,201.5 L667.8,223.4 L667.9,245.2 L670.7,245.2 L670.6,223.4 L671.4,201.5 L671.0,179.7 L671.8,157.8 L670.1,136.0 Z" fill="#b04c1a" opacity="0.36"/><path d="M649.3,136.0 L648.2,157.8 L648.8,179.7 L649.5,201.5 L651.7,223.4 L651.3,245.2 L657.1,245.2 L657.5,223.4 L655.3,201.5 L654.6,179.7 L654.0,157.8 L655.1,136.0 Z" fill="#d87a3a" opacity="0.31"/><path d="M596.6,136.0 L598.7,157.8 L597.1,179.7 L595.5,201.5 L596.5,223.4 L596.4,245.2 L599.7,245.2 L599.8,223.4 L598.8,201.5 L600.4,179.7 L602.0,157.8 L599.9,136.0 Z" fill="#b04c1a" opacity="0.42"/><path d="M697.2,136.0 L697.0,157.8 L695.8,179.7 L696.0,201.5 L695.1,223.4 L698.6,245.2 L710.8,245.2 L707.3,223.4 L708.2,201.5 L708.0,179.7 L709.2,157.8 L709.4,136.0 Z" fill="#dc8444" opacity="0.38"/><path d="M694.6,136.0 L694.4,157.8 L692.1,179.7 L695.0,201.5 L693.2,223.4 L692.0,245.2 L705.8,245.2 L707.0,223.4 L708.8,201.5 L705.9,179.7 L708.1,157.8 L708.3,136.0 Z" fill="#a84818" opacity="0.23"/><path d="M666.7,136.0 L669.9,157.8 L669.8,179.7 L668.5,201.5 L666.8,223.4 L670.2,245.2 L678.6,245.2 L675.2,223.4 L676.9,201.5 L678.1,179.7 L678.3,157.8 L675.0,136.0 Z" fill="#a44416" opacity="0.33"/><path d="M593.8,136.0 L593.5,157.8 L594.7,179.7 L595.2,201.5 L591.6,223.4 L592.4,245.2 L598.3,245.2 L597.5,223.4 L601.1,201.5 L600.6,179.7 L599.3,157.8 L599.7,136.0 Z" fill="#dc8444" opacity="0.29"/><path d="M687.8,136.0 L685.8,157.8 L686.4,179.7 L687.7,201.5 L686.8,223.4 L687.7,245.2 L690.9,245.2 L690.0,223.4 L690.9,201.5 L689.5,179.7 L689.0,157.8 L691.0,136.0 Z" fill="#b04c1a" opacity="0.39"/><path d="M649.3,136.0 L651.2,157.8 L652.1,179.7 L652.6,201.5 L651.5,223.4 L650.5,245.2 L661.1,245.2 L662.1,223.4 L663.2,201.5 L662.7,179.7 L661.9,157.8 L659.9,136.0 Z" fill="#a84818" opacity="0.42"/><path d="M655.1,136.0 L652.9,157.8 L653.6,179.7 L656.6,201.5 L653.6,223.4 L654.3,245.2 L657.7,245.2 L657.0,223.4 L660.1,201.5 L657.1,179.7 L656.4,157.8 L658.5,136.0 Z" fill="#a84818" opacity="0.40"/><path d="M678.6,136.0 L681.2,157.8 L678.4,179.7 L677.6,201.5 L679.4,223.4 L679.2,245.2 L688.8,245.2 L689.1,223.4 L687.2,201.5 L688.0,179.7 L690.8,157.8 L688.2,136.0 Z" fill="#a44416" opacity="0.44"/><path d="M696.8,136.0 L695.6,157.8 L696.7,179.7 L694.1,201.5 L693.7,223.4 L693.1,245.2 L704.4,245.2 L705.0,223.4 L705.4,201.5 L708.1,179.7 L706.9,157.8 L708.1,136.0 Z" fill="#a44416" opacity="0.39"/><path d="M814.5,136.0 L817.0,157.8 L814.4,179.7 L815.8,201.5 L814.2,223.4 L816.9,245.2 L830.6,245.2 L827.9,223.4 L829.5,201.5 L828.1,179.7 L830.7,157.8 L828.2,136.0 Z" fill="#a44416" opacity="0.42"/><path d="M908.8,136.0 L909.8,157.8 L908.6,179.7 L909.0,201.5 L908.9,223.4 L909.7,245.2 L911.8,245.2 L911.0,223.4 L911.1,201.5 L910.6,179.7 L911.9,157.8 L910.8,136.0 Z" fill="#a44416" opacity="0.22"/><path d="M809.9,136.0 L810.8,157.8 L810.3,179.7 L808.9,201.5 L808.8,223.4 L810.1,245.2 L818.7,245.2 L817.4,223.4 L817.5,201.5 L818.9,179.7 L819.3,157.8 L818.5,136.0 Z" fill="#d87a3a" opacity="0.41"/><path d="M828.4,136.0 L829.7,157.8 L828.2,179.7 L826.1,201.5 L827.8,223.4 L828.5,245.2 L838.9,245.2 L838.3,223.4 L836.6,201.5 L838.7,179.7 L840.2,157.8 L838.9,136.0 Z" fill="#b04c1a" opacity="0.22"/><path d="M829.5,136.0 L830.3,157.8 L830.4,179.7 L830.4,201.5 L831.2,223.4 L831.5,245.2 L844.1,245.2 L843.7,223.4 L842.9,201.5 L843.0,179.7 L842.9,157.8 L842.1,136.0 Z" fill="#a44416" opacity="0.28"/><path d="M824.3,136.0 L826.6,157.8 L826.2,179.7 L825.9,201.5 L825.7,223.4 L825.5,245.2 L828.4,245.2 L828.6,223.4 L828.9,201.5 L829.2,179.7 L829.5,157.8 L827.2,136.0 Z" fill="#a44416" opacity="0.35"/><path d="M879.6,136.0 L879.3,157.8 L878.8,179.7 L876.1,201.5 L878.7,223.4 L879.4,245.2 L892.4,245.2 L891.7,223.4 L889.1,201.5 L891.8,179.7 L892.3,157.8 L892.6,136.0 Z" fill="#a44416" opacity="0.31"/><path d="M904.0,136.0 L905.0,157.8 L903.2,179.7 L903.4,201.5 L903.6,223.4 L903.5,245.2 L907.6,245.2 L907.7,223.4 L907.5,201.5 L907.4,179.7 L909.2,157.8 L908.1,136.0 Z" fill="#d87a3a" opacity="0.22"/><path d="M855.5,136.0 L855.8,157.8 L856.5,179.7 L855.5,201.5 L853.6,223.4 L853.5,245.2 L867.2,245.2 L867.3,223.4 L869.3,201.5 L870.2,179.7 L869.6,157.8 L869.3,136.0 Z" fill="#a84818" opacity="0.30"/><path d="M808.0,136.0 L805.6,157.8 L807.4,179.7 L807.4,201.5 L807.8,223.4 L807.5,245.2 L812.2,245.2 L812.6,223.4 L812.2,201.5 L812.1,179.7 L810.4,157.8 L812.7,136.0 Z" fill="#d87a3a" opacity="0.33"/><path d="M815.6,136.0 L815.2,157.8 L814.1,179.7 L814.4,201.5 L815.7,223.4 L814.7,245.2 L826.6,245.2 L827.6,223.4 L826.3,201.5 L826.0,179.7 L827.1,157.8 L827.5,136.0 Z" fill="#d87a3a" opacity="0.21"/><path d="M881.4,136.0 L879.7,157.8 L880.8,179.7 L880.2,201.5 L880.3,223.4 L878.5,245.2 L883.5,245.2 L885.2,223.4 L885.1,201.5 L885.7,179.7 L884.7,157.8 L886.3,136.0 Z" fill="#a84818" opacity="0.39"/><path d="M905.9,136.0 L907.0,157.8 L903.7,179.7 L904.8,201.5 L905.8,223.4 L905.8,245.2 L916.4,245.2 L916.4,223.4 L915.4,201.5 L914.3,179.7 L917.6,157.8 L916.5,136.0 Z" fill="#a84818" opacity="0.39"/><path d="M891.8,136.0 L888.3,157.8 L891.4,179.7 L890.5,201.5 L890.4,223.4 L890.5,245.2 L895.5,245.2 L895.4,223.4 L895.5,201.5 L896.4,179.7 L893.3,157.8 L896.7,136.0 Z" fill="#d87a3a" opacity="0.39"/><path d="M56.5,245.2 L54.9,267.0 L54.0,288.9 L54.0,310.7 L53.8,332.6 L55.2,354.4 L58.0,354.4 L56.6,332.6 L56.8,310.7 L56.8,288.9 L57.8,267.0 L59.3,245.2 Z" fill="#a44416" opacity="0.24"/><path d="M53.1,245.2 L51.5,267.0 L53.5,288.9 L51.1,310.7 L50.8,332.6 L51.6,354.4 L59.5,354.4 L58.7,332.6 L59.0,310.7 L61.4,288.9 L59.4,267.0 L61.1,245.2 Z" fill="#dc8444" opacity="0.30"/><path d="M119.7,245.2 L118.1,267.0 L117.5,288.9 L117.1,310.7 L117.8,332.6 L119.4,354.4 L126.7,354.4 L125.1,332.6 L124.4,310.7 L124.9,288.9 L125.4,267.0 L127.0,245.2 Z" fill="#a44416" opacity="0.23"/><path d="M62.5,245.2 L61.4,267.0 L62.1,288.9 L65.0,310.7 L62.0,332.6 L64.0,354.4 L70.2,354.4 L68.2,332.6 L71.2,310.7 L68.3,288.9 L67.6,267.0 L68.7,245.2 Z" fill="#d87a3a" opacity="0.35"/><path d="M114.9,245.2 L116.4,267.0 L113.2,288.9 L114.0,310.7 L113.4,332.6 L115.3,354.4 L119.5,354.4 L117.5,332.6 L118.2,310.7 L117.4,288.9 L120.5,267.0 L119.1,245.2 Z" fill="#b04c1a" opacity="0.22"/><path d="M75.0,245.2 L72.7,267.0 L73.5,288.9 L72.0,310.7 L72.8,332.6 L74.2,354.4 L79.5,354.4 L78.0,332.6 L77.2,310.7 L78.7,288.9 L77.9,267.0 L80.3,245.2 Z" fill="#b04c1a" opacity="0.29"/><path d="M60.1,245.2 L57.1,267.0 L59.5,288.9 L60.2,310.7 L56.6,332.6 L59.1,354.4 L69.0,354.4 L66.6,332.6 L70.2,310.7 L69.5,288.9 L67.1,267.0 L70.1,245.2 Z" fill="#b04c1a" opacity="0.42"/><path d="M127.2,245.2 L126.5,267.0 L128.1,288.9 L124.8,310.7 L127.2,332.6 L127.9,354.4 L140.2,354.4 L139.5,332.6 L137.0,310.7 L140.3,288.9 L138.7,267.0 L139.4,245.2 Z" fill="#b04c1a" opacity="0.26"/><path d="M41.3,245.2 L43.1,267.0 L42.8,288.9 L42.5,310.7 L42.8,332.6 L44.5,354.4 L51.8,354.4 L50.1,332.6 L49.7,310.7 L50.1,288.9 L50.3,267.0 L48.6,245.2 Z" fill="#a44416" opacity="0.43"/><path d="M86.4,245.2 L87.6,267.0 L88.0,288.9 L89.9,310.7 L88.3,332.6 L86.4,354.4 L89.1,354.4 L91.1,332.6 L92.6,310.7 L90.7,288.9 L90.3,267.0 L89.1,245.2 Z" fill="#b04c1a" opacity="0.26"/><path d="M122.9,245.2 L126.3,267.0 L124.6,288.9 L123.4,310.7 L123.2,332.6 L125.9,354.4 L134.7,354.4 L131.9,332.6 L132.2,310.7 L133.3,288.9 L135.0,267.0 L131.7,245.2 Z" fill="#a84818" opacity="0.25"/><path d="M50.1,245.2 L47.5,267.0 L50.2,288.9 L49.5,310.7 L47.4,332.6 L48.1,354.4 L53.3,354.4 L52.6,332.6 L54.7,310.7 L55.4,288.9 L52.7,267.0 L55.3,245.2 Z" fill="#a84818" opacity="0.40"/><path d="M47.2,245.2 L46.0,267.0 L45.3,288.9 L47.9,310.7 L47.3,332.6 L45.4,354.4 L55.8,354.4 L57.8,332.6 L58.3,310.7 L55.8,288.9 L56.4,267.0 L57.7,245.2 Z" fill="#a84818" opacity="0.32"/><path d="M125.2,245.2 L124.7,267.0 L122.6,288.9 L123.5,310.7 L123.6,332.6 L125.6,354.4 L134.1,354.4 L132.1,332.6 L132.0,310.7 L131.1,288.9 L133.2,267.0 L133.6,245.2 Z" fill="#b04c1a" opacity="0.28"/><path d="M263.5,245.2 L260.7,267.0 L262.5,288.9 L263.6,310.7 L262.5,332.6 L264.1,354.4 L276.4,354.4 L274.8,332.6 L275.9,310.7 L274.8,288.9 L273.0,267.0 L275.8,245.2 Z" fill="#b04c1a" opacity="0.27"/><path d="M370.3,245.2 L369.6,267.0 L371.1,288.9 L368.9,310.7 L370.0,332.6 L367.3,354.4 L379.4,354.4 L382.1,332.6 L381.0,310.7 L383.1,288.9 L381.7,267.0 L382.4,245.2 Z" fill="#d87a3a" opacity="0.44"/><path d="M285.9,245.2 L285.5,267.0 L285.2,288.9 L283.4,310.7 L286.1,332.6 L283.3,354.4 L291.0,354.4 L293.9,332.6 L291.1,310.7 L292.9,288.9 L293.2,267.0 L293.7,245.2 Z" fill="#dc8444" opacity="0.32"/><path d="M292.2,245.2 L295.1,267.0 L292.6,288.9 L292.9,310.7 L292.7,332.6 L294.0,354.4 L305.4,354.4 L304.1,332.6 L304.3,310.7 L304.0,288.9 L306.5,267.0 L303.6,245.2 Z" fill="#d87a3a" opacity="0.21"/><path d="M299.2,245.2 L301.9,267.0 L301.0,288.9 L300.5,310.7 L300.8,332.6 L300.2,354.4 L304.1,354.4 L304.7,332.6 L304.4,310.7 L305.0,288.9 L305.8,267.0 L303.2,245.2 Z" fill="#a44416" opacity="0.27"/><path d="M320.7,245.2 L320.6,267.0 L322.2,288.9 L322.4,310.7 L323.6,332.6 L320.3,354.4 L325.6,354.4 L328.9,332.6 L327.7,310.7 L327.5,288.9 L325.9,267.0 L326.0,245.2 Z" fill="#a84818" opacity="0.26"/><path d="M278.2,245.2 L276.0,267.0 L277.3,288.9 L275.9,310.7 L275.6,332.6 L278.0,354.4 L287.0,354.4 L284.7,332.6 L284.9,310.7 L286.3,288.9 L285.1,267.0 L287.2,245.2 Z" fill="#a84818" opacity="0.44"/><path d="M340.9,245.2 L337.6,267.0 L337.3,288.9 L338.4,310.7 L338.4,332.6 L341.1,354.4 L344.2,354.4 L341.5,332.6 L341.5,310.7 L340.4,288.9 L340.8,267.0 L344.0,245.2 Z" fill="#a84818" opacity="0.42"/><path d="M307.1,245.2 L306.5,267.0 L305.9,288.9 L304.3,310.7 L304.8,332.6 L306.5,354.4 L314.9,354.4 L313.2,332.6 L312.7,310.7 L314.3,288.9 L314.8,267.0 L315.5,245.2 Z" fill="#d87a3a" opacity="0.35"/><path d="M348.2,245.2 L347.7,267.0 L351.0,288.9 L349.7,310.7 L348.1,332.6 L350.1,354.4 L362.9,354.4 L360.9,332.6 L362.4,310.7 L363.8,288.9 L360.5,267.0 L360.9,245.2 Z" fill="#dc8444" opacity="0.26"/><path d="M283.9,245.2 L286.2,267.0 L285.7,288.9 L283.1,310.7 L285.6,332.6 L283.8,354.4 L290.2,354.4 L292.0,332.6 L289.5,310.7 L292.1,288.9 L292.6,267.0 L290.3,245.2 Z" fill="#dc8444" opacity="0.28"/><path d="M363.7,245.2 L363.8,267.0 L363.6,288.9 L361.7,310.7 L364.8,332.6 L364.1,354.4 L371.5,354.4 L372.2,332.6 L369.0,310.7 L370.9,288.9 L371.2,267.0 L371.0,245.2 Z" fill="#d87a3a" opacity="0.26"/><path d="M307.2,245.2 L306.7,267.0 L305.6,288.9 L308.1,310.7 L306.6,332.6 L307.9,354.4 L321.4,354.4 L320.1,332.6 L321.6,310.7 L319.1,288.9 L320.2,267.0 L320.7,245.2 Z" fill="#b04c1a" opacity="0.30"/><path d="M314.9,245.2 L315.9,267.0 L312.8,288.9 L314.4,310.7 L315.9,332.6 L314.8,354.4 L321.2,354.4 L322.3,332.6 L320.8,310.7 L319.2,288.9 L322.2,267.0 L321.3,245.2 Z" fill="#b04c1a" opacity="0.36"/><path d="M530.2,245.2 L529.3,267.0 L530.7,288.9 L529.7,310.7 L528.6,332.6 L529.9,354.4 L537.3,354.4 L536.1,332.6 L537.1,310.7 L538.2,288.9 L536.8,267.0 L537.7,245.2 Z" fill="#d87a3a" opacity="0.20"/><path d="M552.0,245.2 L554.0,267.0 L552.7,288.9 L553.7,310.7 L552.3,332.6 L552.5,354.4 L556.4,354.4 L556.2,332.6 L557.6,310.7 L556.6,288.9 L557.9,267.0 L555.9,245.2 Z" fill="#d87a3a" opacity="0.35"/><path d="M564.7,245.2 L562.8,267.0 L562.4,288.9 L563.9,310.7 L564.8,332.6 L565.2,354.4 L571.6,354.4 L571.2,332.6 L570.4,310.7 L568.8,288.9 L569.2,267.0 L571.1,245.2 Z" fill="#d87a3a" opacity="0.21"/><path d="M579.6,245.2 L577.8,267.0 L577.0,288.9 L576.8,310.7 L577.4,332.6 L579.5,354.4 L588.7,354.4 L586.6,332.6 L585.9,310.7 L586.2,288.9 L587.0,267.0 L588.8,245.2 Z" fill="#a84818" opacity="0.20"/><path d="M500.6,245.2 L501.0,267.0 L504.3,288.9 L504.4,310.7 L501.2,332.6 L501.9,354.4 L507.1,354.4 L506.3,332.6 L509.6,310.7 L509.5,288.9 L506.2,267.0 L505.8,245.2 Z" fill="#b04c1a" opacity="0.33"/><path d="M514.4,245.2 L512.2,267.0 L514.6,288.9 L511.9,310.7 L511.9,332.6 L511.1,354.4 L518.1,354.4 L518.9,332.6 L518.9,310.7 L521.6,288.9 L519.2,267.0 L521.4,245.2 Z" fill="#a84818" opacity="0.21"/><path d="M586.8,245.2 L587.4,267.0 L586.2,288.9 L589.2,310.7 L587.7,332.6 L585.7,354.4 L589.3,354.4 L591.3,332.6 L592.8,310.7 L589.8,288.9 L591.0,267.0 L590.4,245.2 Z" fill="#d87a3a" opacity="0.24"/><path d="M554.3,245.2 L556.6,267.0 L556.6,288.9 L553.8,310.7 L555.7,332.6 L554.2,354.4 L560.8,354.4 L562.4,332.6 L560.4,310.7 L563.2,288.9 L563.2,267.0 L560.9,245.2 Z" fill="#a44416" opacity="0.38"/><path d="M568.6,245.2 L569.4,267.0 L568.0,288.9 L567.9,310.7 L566.2,332.6 L569.9,354.4 L581.3,354.4 L577.7,332.6 L579.4,310.7 L579.5,288.9 L580.9,267.0 L580.1,245.2 Z" fill="#b04c1a" opacity="0.25"/><path d="M572.2,245.2 L572.3,267.0 L571.5,288.9 L570.4,310.7 L571.1,332.6 L570.3,354.4 L577.8,354.4 L578.6,332.6 L577.9,310.7 L579.0,288.9 L579.8,267.0 L579.7,245.2 Z" fill="#d87a3a" opacity="0.33"/><path d="M500.9,245.2 L502.1,267.0 L499.3,288.9 L499.7,310.7 L501.1,332.6 L499.5,354.4 L510.1,354.4 L511.7,332.6 L510.3,310.7 L509.9,288.9 L512.7,267.0 L511.5,245.2 Z" fill="#a84818" opacity="0.24"/><path d="M501.7,245.2 L502.2,267.0 L501.4,288.9 L503.2,310.7 L501.4,332.6 L501.3,354.4 L512.6,354.4 L512.7,332.6 L514.5,310.7 L512.6,288.9 L513.5,267.0 L513.0,245.2 Z" fill="#d87a3a" opacity="0.28"/><path d="M503.1,245.2 L502.1,267.0 L501.8,288.9 L503.3,310.7 L503.4,332.6 L502.7,354.4 L506.8,354.4 L507.5,332.6 L507.4,310.7 L505.9,288.9 L506.2,267.0 L507.2,245.2 Z" fill="#b04c1a" opacity="0.38"/><path d="M537.4,245.2 L537.2,267.0 L536.5,288.9 L535.0,310.7 L538.0,332.6 L536.8,354.4 L548.1,354.4 L549.3,332.6 L546.3,310.7 L547.8,288.9 L548.5,267.0 L548.7,245.2 Z" fill="#a44416" opacity="0.31"/><path d="M793.1,245.2 L791.5,267.0 L791.8,288.9 L793.7,310.7 L793.8,332.6 L792.5,354.4 L805.8,354.4 L807.0,332.6 L807.0,310.7 L805.1,288.9 L804.8,267.0 L806.4,245.2 Z" fill="#a84818" opacity="0.23"/><path d="M745.3,245.2 L748.2,267.0 L748.5,288.9 L747.0,310.7 L745.0,332.6 L747.5,354.4 L757.1,354.4 L754.6,332.6 L756.6,310.7 L758.2,288.9 L757.8,267.0 L754.9,245.2 Z" fill="#d87a3a" opacity="0.21"/><path d="M769.6,245.2 L768.1,267.0 L769.4,288.9 L768.2,310.7 L771.7,332.6 L768.0,354.4 L780.2,354.4 L783.9,332.6 L780.4,310.7 L781.6,288.9 L780.4,267.0 L781.8,245.2 Z" fill="#d87a3a" opacity="0.27"/><path d="M783.2,245.2 L781.7,267.0 L783.7,288.9 L782.8,310.7 L782.0,332.6 L781.4,354.4 L785.0,354.4 L785.6,332.6 L786.4,310.7 L787.3,288.9 L785.3,267.0 L786.8,245.2 Z" fill="#a44416" opacity="0.30"/><path d="M785.3,245.2 L785.8,267.0 L788.7,288.9 L785.3,310.7 L785.9,332.6 L787.8,354.4 L798.3,354.4 L796.4,332.6 L795.8,310.7 L799.2,288.9 L796.3,267.0 L795.8,245.2 Z" fill="#d87a3a" opacity="0.42"/><path d="M798.4,245.2 L797.1,267.0 L797.8,288.9 L798.8,310.7 L798.9,332.6 L796.5,354.4 L804.2,354.4 L806.6,332.6 L806.5,310.7 L805.5,288.9 L804.8,267.0 L806.1,245.2 Z" fill="#b04c1a" opacity="0.25"/><path d="M803.5,245.2 L803.1,267.0 L803.2,288.9 L804.0,310.7 L806.1,332.6 L802.7,354.4 L806.0,354.4 L809.4,332.6 L807.3,310.7 L806.4,288.9 L806.4,267.0 L806.8,245.2 Z" fill="#dc8444" opacity="0.41"/><path d="M732.1,245.2 L732.0,267.0 L729.6,288.9 L729.4,310.7 L730.3,332.6 L730.8,354.4 L734.8,354.4 L734.4,332.6 L733.5,310.7 L733.7,288.9 L736.1,267.0 L736.2,245.2 Z" fill="#d87a3a" opacity="0.40"/><path d="M725.6,245.2 L723.1,267.0 L725.1,288.9 L725.0,310.7 L722.8,332.6 L723.2,354.4 L725.7,354.4 L725.3,332.6 L727.5,310.7 L727.6,288.9 L725.5,267.0 L728.0,245.2 Z" fill="#a44416" opacity="0.29"/><path d="M736.8,245.2 L733.0,267.0 L735.7,288.9 L736.0,310.7 L736.1,332.6 L735.3,354.4 L741.8,354.4 L742.6,332.6 L742.6,310.7 L742.2,288.9 L739.6,267.0 L743.3,245.2 Z" fill="#a44416" opacity="0.43"/><path d="M790.0,245.2 L788.9,267.0 L789.0,288.9 L789.2,310.7 L787.0,332.6 L788.6,354.4 L798.4,354.4 L796.7,332.6 L799.0,310.7 L798.7,288.9 L798.6,267.0 L799.7,245.2 Z" fill="#a44416" opacity="0.30"/><path d="M791.4,245.2 L791.3,267.0 L788.8,288.9 L792.2,310.7 L789.3,332.6 L789.9,354.4 L793.5,354.4 L792.9,332.6 L795.8,310.7 L792.4,288.9 L794.9,267.0 L795.1,245.2 Z" fill="#dc8444" opacity="0.39"/><path d="M793.2,245.2 L790.8,267.0 L794.1,288.9 L792.8,310.7 L792.4,332.6 L791.9,354.4 L805.4,354.4 L805.9,332.6 L806.2,310.7 L807.5,288.9 L804.2,267.0 L806.7,245.2 Z" fill="#dc8444" opacity="0.40"/><path d="M784.9,245.2 L783.5,267.0 L782.3,288.9 L782.5,310.7 L785.6,332.6 L785.6,354.4 L798.1,354.4 L798.0,332.6 L794.9,310.7 L794.7,288.9 L795.9,267.0 L797.4,245.2 Z" fill="#b04c1a" opacity="0.21"/><path d="M191.9,354.4 L189.8,376.2 L190.8,398.1 L190.6,419.9 L192.2,441.8 L192.8,463.6 L202.2,463.6 L201.5,441.8 L199.9,419.9 L200.2,398.1 L199.1,376.2 L201.3,354.4 Z" fill="#a84818" opacity="0.28"/><path d="M220.2,354.4 L220.3,376.2 L222.3,398.1 L221.9,419.9 L220.3,441.8 L222.6,463.6 L235.3,463.6 L233.1,441.8 L234.6,419.9 L235.0,398.1 L233.0,376.2 L232.9,354.4 Z" fill="#a84818" opacity="0.35"/><path d="M262.6,354.4 L262.3,376.2 L264.2,398.1 L263.3,419.9 L261.5,441.8 L262.1,463.6 L274.8,463.6 L274.2,441.8 L276.1,419.9 L276.9,398.1 L275.1,376.2 L275.3,354.4 Z" fill="#a44416" opacity="0.29"/><path d="M258.8,354.4 L258.5,376.2 L258.0,398.1 L258.5,419.9 L256.3,441.8 L256.7,463.6 L267.1,463.6 L266.6,441.8 L268.8,419.9 L268.4,398.1 L268.8,376.2 L269.1,354.4 Z" fill="#a44416" opacity="0.45"/><path d="M170.8,354.4 L169.1,376.2 L168.6,398.1 L170.7,419.9 L170.9,441.8 L168.6,463.6 L174.1,463.6 L176.4,441.8 L176.2,419.9 L174.1,398.1 L174.6,376.2 L176.3,354.4 Z" fill="#dc8444" opacity="0.42"/><path d="M262.6,354.4 L260.3,376.2 L261.7,398.1 L261.3,419.9 L264.0,441.8 L262.1,463.6 L269.3,463.6 L271.2,441.8 L268.5,419.9 L268.9,398.1 L267.5,376.2 L269.8,354.4 Z" fill="#a84818" opacity="0.44"/><path d="M205.5,354.4 L203.4,376.2 L206.6,398.1 L206.8,419.9 L205.0,441.8 L206.0,463.6 L217.0,463.6 L216.1,441.8 L217.8,419.9 L217.7,398.1 L214.4,376.2 L216.5,354.4 Z" fill="#a44416" opacity="0.25"/><path d="M254.1,354.4 L252.1,376.2 L254.3,398.1 L251.5,419.9 L250.7,441.8 L252.7,463.6 L261.3,463.6 L259.4,441.8 L260.1,419.9 L263.0,398.1 L260.7,376.2 L262.7,354.4 Z" fill="#a44416" opacity="0.42"/><path d="M251.4,354.4 L250.1,376.2 L250.4,398.1 L250.1,419.9 L251.3,441.8 L249.7,463.6 L263.1,463.6 L264.7,441.8 L263.6,419.9 L263.8,398.1 L263.6,376.2 L264.8,354.4 Z" fill="#dc8444" opacity="0.23"/><path d="M226.9,354.4 L227.3,376.2 L227.1,398.1 L225.6,419.9 L225.2,441.8 L226.6,463.6 L235.8,463.6 L234.5,441.8 L234.8,419.9 L236.3,398.1 L236.5,376.2 L236.2,354.4 Z" fill="#b04c1a" opacity="0.38"/><path d="M233.1,354.4 L235.5,376.2 L233.1,398.1 L232.9,419.9 L235.7,441.8 L236.1,463.6 L240.9,463.6 L240.5,441.8 L237.7,419.9 L237.9,398.1 L240.3,376.2 L237.9,354.4 Z" fill="#d87a3a" opacity="0.38"/><path d="M162.1,354.4 L160.3,376.2 L162.6,398.1 L162.9,419.9 L159.5,441.8 L163.0,463.6 L170.6,463.6 L167.0,441.8 L170.5,419.9 L170.1,398.1 L167.9,376.2 L169.6,354.4 Z" fill="#dc8444" opacity="0.31"/><path d="M159.3,354.4 L157.1,376.2 L158.4,398.1 L159.1,419.9 L160.6,441.8 L157.9,463.6 L160.7,463.6 L163.4,441.8 L162.0,419.9 L161.2,398.1 L160.0,376.2 L162.1,354.4 Z" fill="#dc8444" opacity="0.39"/><path d="M178.2,354.4 L176.1,376.2 L176.4,398.1 L175.9,419.9 L177.2,441.8 L176.5,463.6 L180.9,463.6 L181.6,441.8 L180.3,419.9 L180.8,398.1 L180.5,376.2 L182.6,354.4 Z" fill="#b04c1a" opacity="0.24"/><path d="M433.2,354.4 L434.4,376.2 L434.2,398.1 L436.3,419.9 L434.4,441.8 L436.2,463.6 L439.7,463.6 L437.9,441.8 L439.8,419.9 L437.7,398.1 L437.9,376.2 L436.7,354.4 Z" fill="#d87a3a" opacity="0.32"/><path d="M389.7,354.4 L388.6,376.2 L389.1,398.1 L389.2,419.9 L388.0,441.8 L388.1,463.6 L397.2,463.6 L397.1,441.8 L398.3,419.9 L398.2,398.1 L397.7,376.2 L398.8,354.4 Z" fill="#b04c1a" opacity="0.38"/><path d="M406.0,354.4 L405.3,376.2 L406.8,398.1 L405.6,419.9 L403.6,441.8 L406.6,463.6 L417.0,463.6 L414.0,441.8 L416.1,419.9 L417.2,398.1 L415.7,376.2 L416.5,354.4 Z" fill="#a84818" opacity="0.32"/><path d="M427.0,354.4 L425.7,376.2 L423.8,398.1 L425.8,419.9 L426.2,441.8 L423.2,463.6 L433.8,463.6 L436.8,441.8 L436.4,419.9 L434.4,398.1 L436.2,376.2 L437.6,354.4 Z" fill="#a84818" opacity="0.37"/><path d="M439.8,354.4 L439.0,376.2 L439.4,398.1 L438.0,419.9 L440.4,441.8 L438.8,463.6 L449.0,463.6 L450.6,441.8 L448.1,419.9 L449.5,398.1 L449.1,376.2 L449.9,354.4 Z" fill="#a84818" opacity="0.30"/><path d="M388.4,354.4 L389.2,376.2 L387.7,398.1 L387.0,419.9 L388.0,441.8 L386.0,463.6 L389.4,463.6 L391.4,441.8 L390.4,419.9 L391.1,398.1 L392.5,376.2 L391.8,354.4 Z" fill="#a44416" opacity="0.34"/><path d="M456.0,354.4 L456.5,376.2 L458.0,398.1 L457.8,419.9 L458.9,441.8 L455.6,463.6 L461.5,463.6 L464.8,441.8 L463.7,419.9 L463.9,398.1 L462.4,376.2 L461.9,354.4 Z" fill="#a84818" opacity="0.40"/><path d="M372.8,354.4 L376.3,376.2 L373.9,398.1 L374.8,419.9 L376.5,441.8 L374.3,463.6 L386.0,463.6 L388.3,441.8 L386.5,419.9 L385.7,398.1 L388.1,376.2 L384.5,354.4 Z" fill="#dc8444" opacity="0.22"/><path d="M389.6,354.4 L390.0,376.2 L389.3,398.1 L390.1,419.9 L392.0,441.8 L391.9,463.6 L402.8,463.6 L402.8,441.8 L400.9,419.9 L400.1,398.1 L400.8,376.2 L400.5,354.4 Z" fill="#b04c1a" opacity="0.43"/><path d="M476.3,354.4 L473.8,376.2 L476.6,398.1 L473.4,419.9 L475.2,441.8 L476.2,463.6 L484.8,463.6 L483.8,441.8 L482.0,419.9 L485.2,398.1 L482.4,376.2 L484.9,354.4 Z" fill="#a44416" opacity="0.31"/><path d="M439.4,354.4 L440.9,376.2 L437.1,398.1 L437.2,419.9 L437.5,441.8 L437.1,463.6 L447.6,463.6 L448.0,441.8 L447.7,419.9 L447.7,398.1 L451.4,376.2 L449.9,354.4 Z" fill="#b04c1a" opacity="0.38"/><path d="M437.5,354.4 L437.8,376.2 L438.5,398.1 L440.8,419.9 L437.8,441.8 L437.5,463.6 L440.9,463.6 L441.2,441.8 L444.2,419.9 L441.8,398.1 L441.2,376.2 L440.8,354.4 Z" fill="#b04c1a" opacity="0.41"/><path d="M403.2,354.4 L406.1,376.2 L406.2,398.1 L405.1,419.9 L402.9,441.8 L403.0,463.6 L409.9,463.6 L409.9,441.8 L412.0,419.9 L413.1,398.1 L413.1,376.2 L410.1,354.4 Z" fill="#a84818" opacity="0.24"/><path d="M407.0,354.4 L407.7,376.2 L408.8,398.1 L408.3,419.9 L407.4,441.8 L408.7,463.6 L419.6,463.6 L418.2,441.8 L419.2,419.9 L419.7,398.1 L418.5,376.2 L417.8,354.4 Z" fill="#a44416" opacity="0.20"/><path d="M636.3,354.4 L635.7,376.2 L634.2,398.1 L633.8,419.9 L636.8,441.8 L635.7,463.6 L638.0,463.6 L639.1,441.8 L636.1,419.9 L636.5,398.1 L638.0,376.2 L638.5,354.4 Z" fill="#d87a3a" opacity="0.32"/><path d="M664.1,354.4 L665.8,376.2 L664.9,398.1 L665.9,419.9 L665.5,441.8 L663.6,463.6 L667.4,463.6 L669.4,441.8 L669.7,419.9 L668.8,398.1 L669.7,376.2 L668.0,354.4 Z" fill="#a44416" opacity="0.38"/><path d="M606.4,354.4 L607.0,376.2 L607.4,398.1 L609.0,419.9 L605.7,441.8 L608.7,463.6 L615.2,463.6 L612.3,441.8 L615.6,419.9 L614.0,398.1 L613.6,376.2 L613.0,354.4 Z" fill="#a84818" opacity="0.25"/><path d="M700.2,354.4 L700.9,376.2 L699.7,398.1 L698.2,419.9 L700.0,441.8 L698.0,463.6 L702.5,463.6 L704.5,441.8 L702.8,419.9 L704.2,398.1 L705.5,376.2 L704.8,354.4 Z" fill="#dc8444" opacity="0.35"/><path d="M605.4,354.4 L605.0,376.2 L605.6,398.1 L603.6,419.9 L604.9,441.8 L601.8,463.6 L614.1,463.6 L617.2,441.8 L615.9,419.9 L617.8,398.1 L617.3,376.2 L617.7,354.4 Z" fill="#a84818" opacity="0.31"/><path d="M595.3,354.4 L594.6,376.2 L596.7,398.1 L593.3,419.9 L596.0,441.8 L593.3,463.6 L600.3,463.6 L603.0,441.8 L600.3,419.9 L603.6,398.1 L601.6,376.2 L602.3,354.4 Z" fill="#d87a3a" opacity="0.27"/><path d="M600.0,354.4 L599.7,376.2 L596.8,398.1 L598.3,419.9 L598.0,441.8 L596.6,463.6 L609.1,463.6 L610.4,441.8 L610.7,419.9 L609.3,398.1 L612.2,376.2 L612.5,354.4 Z" fill="#a84818" opacity="0.41"/><path d="M618.8,354.4 L619.2,376.2 L621.4,398.1 L621.5,419.9 L621.7,441.8 L619.4,463.6 L622.2,463.6 L624.5,441.8 L624.2,419.9 L624.1,398.1 L621.9,376.2 L621.6,354.4 Z" fill="#d87a3a" opacity="0.34"/><path d="M678.4,354.4 L677.1,376.2 L678.6,398.1 L678.6,419.9 L679.7,441.8 L676.0,463.6 L687.1,463.6 L690.8,441.8 L689.7,419.9 L689.7,398.1 L688.2,376.2 L689.5,354.4 Z" fill="#a84818" opacity="0.41"/><path d="M680.1,354.4 L678.3,376.2 L679.1,398.1 L676.7,419.9 L678.7,441.8 L677.7,463.6 L683.2,463.6 L684.2,441.8 L682.2,419.9 L684.7,398.1 L683.9,376.2 L685.6,354.4 Z" fill="#dc8444" opacity="0.26"/><path d="M676.7,354.4 L676.9,376.2 L679.7,398.1 L680.1,419.9 L677.4,441.8 L679.0,463.6 L681.4,463.6 L679.8,441.8 L682.5,419.9 L682.1,398.1 L679.3,376.2 L679.1,354.4 Z" fill="#a84818" opacity="0.42"/><path d="M593.4,354.4 L593.2,376.2 L596.0,398.1 L593.2,419.9 L593.4,441.8 L594.7,463.6 L600.2,463.6 L598.9,441.8 L598.7,419.9 L601.4,398.1 L598.7,376.2 L598.9,354.4 Z" fill="#dc8444" opacity="0.28"/><path d="M605.6,354.4 L603.1,376.2 L603.2,398.1 L602.4,419.9 L602.8,441.8 L606.2,463.6 L619.4,463.6 L616.0,441.8 L615.6,419.9 L616.4,398.1 L616.3,376.2 L618.8,354.4 Z" fill="#a84818" opacity="0.28"/><path d="M699.1,354.4 L700.4,376.2 L698.7,398.1 L697.4,419.9 L700.6,441.8 L700.2,463.6 L702.9,463.6 L703.4,441.8 L700.1,419.9 L701.5,398.1 L703.1,376.2 L701.9,354.4 Z" fill="#a84818" opacity="0.37"/><path d="M888.9,354.4 L889.1,376.2 L887.7,398.1 L888.0,419.9 L889.0,441.8 L887.4,463.6 L892.2,463.6 L893.8,441.8 L892.8,419.9 L892.5,398.1 L893.9,376.2 L893.7,354.4 Z" fill="#a84818" opacity="0.28"/><path d="M905.4,354.4 L907.2,376.2 L905.7,398.1 L903.9,419.9 L905.5,441.8 L907.4,463.6 L920.3,463.6 L918.4,441.8 L916.8,419.9 L918.7,398.1 L920.2,376.2 L918.3,354.4 Z" fill="#a84818" opacity="0.28"/><path d="M844.9,354.4 L845.0,376.2 L841.6,398.1 L843.4,419.9 L844.9,441.8 L842.6,463.6 L845.7,463.6 L848.1,441.8 L846.5,419.9 L844.8,398.1 L848.1,376.2 L848.0,354.4 Z" fill="#a84818" opacity="0.34"/><path d="M839.6,354.4 L841.6,376.2 L839.6,398.1 L839.2,419.9 L840.9,441.8 L841.5,463.6 L843.8,463.6 L843.2,441.8 L841.6,419.9 L841.9,398.1 L843.9,376.2 L841.9,354.4 Z" fill="#b04c1a" opacity="0.37"/><path d="M859.0,354.4 L860.2,376.2 L859.5,398.1 L858.2,419.9 L859.2,441.8 L858.0,463.6 L871.2,463.6 L872.4,441.8 L871.4,419.9 L872.6,398.1 L873.4,376.2 L872.1,354.4 Z" fill="#b04c1a" opacity="0.44"/><path d="M831.5,354.4 L830.6,376.2 L830.1,398.1 L831.8,419.9 L832.4,441.8 L832.8,463.6 L846.5,463.6 L846.1,441.8 L845.5,419.9 L843.7,398.1 L844.3,376.2 L845.1,354.4 Z" fill="#a44416" opacity="0.26"/><path d="M818.5,354.4 L817.2,376.2 L817.4,398.1 L814.5,419.9 L814.7,441.8 L816.2,463.6 L821.6,463.6 L820.1,441.8 L820.0,419.9 L822.8,398.1 L822.7,376.2 L823.9,354.4 Z" fill="#a44416" opacity="0.44"/><path d="M839.7,354.4 L839.0,376.2 L840.5,398.1 L839.8,419.9 L838.4,441.8 L839.9,463.6 L848.8,463.6 L847.2,441.8 L848.6,419.9 L849.3,398.1 L847.9,376.2 L848.5,354.4 Z" fill="#a44416" opacity="0.45"/><path d="M909.1,354.4 L906.5,376.2 L908.9,398.1 L907.4,419.9 L906.7,441.8 L909.2,463.6 L913.9,463.6 L911.4,441.8 L912.1,419.9 L913.6,398.1 L911.1,376.2 L913.8,354.4 Z" fill="#b04c1a" opacity="0.30"/><path d="M882.0,354.4 L884.5,376.2 L882.6,398.1 L882.1,419.9 L883.0,441.8 L884.2,463.6 L887.0,463.6 L885.8,441.8 L884.9,419.9 L885.4,398.1 L887.3,376.2 L884.8,354.4 Z" fill="#a84818" opacity="0.44"/><path d="M917.5,354.4 L916.9,376.2 L916.9,398.1 L916.9,419.9 L915.9,441.8 L919.1,463.6 L933.0,463.6 L929.9,441.8 L930.8,419.9 L930.8,398.1 L930.9,376.2 L931.5,354.4 Z" fill="#dc8444" opacity="0.29"/><path d="M864.6,354.4 L866.3,376.2 L867.2,398.1 L864.6,419.9 L866.0,441.8 L866.3,463.6 L870.2,463.6 L869.9,441.8 L868.6,419.9 L871.1,398.1 L870.3,376.2 L868.5,354.4 Z" fill="#b04c1a" opacity="0.34"/><path d="M851.9,354.4 L850.0,376.2 L849.6,398.1 L852.7,419.9 L849.1,441.8 L852.6,463.6 L861.1,463.6 L857.6,441.8 L861.3,419.9 L858.1,398.1 L858.5,376.2 L860.5,354.4 Z" fill="#a44416" opacity="0.29"/><path d="M891.8,354.4 L891.6,376.2 L893.3,398.1 L891.1,419.9 L892.9,441.8 L893.6,463.6 L905.6,463.6 L904.9,441.8 L903.2,419.9 L905.3,398.1 L903.6,376.2 L903.8,354.4 Z" fill="#dc8444" opacity="0.31"/><path d="M98.7,463.6 L95.7,485.4 L96.0,507.3 L98.0,529.1 L98.0,551.0 L96.3,572.8 L109.4,572.8 L111.1,551.0 L111.1,529.1 L109.1,507.3 L108.8,485.4 L111.7,463.6 Z" fill="#dc8444" opacity="0.22"/><path d="M124.6,463.6 L124.3,485.4 L124.9,507.3 L125.0,529.1 L127.3,551.0 L126.5,572.8 L129.4,572.8 L130.2,551.0 L127.9,529.1 L127.8,507.3 L127.2,485.4 L127.5,463.6 Z" fill="#a84818" opacity="0.31"/><path d="M60.4,463.6 L59.4,485.4 L59.4,507.3 L59.7,529.1 L59.6,551.0 L57.6,572.8 L60.1,572.8 L62.2,551.0 L62.3,529.1 L62.0,507.3 L61.9,485.4 L63.0,463.6 Z" fill="#a44416" opacity="0.21"/><path d="M45.0,463.6 L43.6,485.4 L45.6,507.3 L44.7,529.1 L45.6,551.0 L43.3,572.8 L51.6,572.8 L53.9,551.0 L52.9,529.1 L53.9,507.3 L51.9,485.4 L53.2,463.6 Z" fill="#b04c1a" opacity="0.43"/><path d="M38.3,463.6 L39.5,485.4 L40.1,507.3 L39.1,529.1 L39.4,551.0 L38.9,572.8 L43.6,572.8 L44.0,551.0 L43.7,529.1 L44.7,507.3 L44.2,485.4 L43.0,463.6 Z" fill="#a84818" opacity="0.37"/><path d="M78.0,463.6 L76.9,485.4 L75.8,507.3 L75.5,529.1 L77.4,551.0 L79.2,572.8 L81.6,572.8 L79.8,551.0 L77.9,529.1 L78.3,507.3 L79.4,485.4 L80.4,463.6 Z" fill="#a84818" opacity="0.43"/><path d="M49.9,463.6 L49.3,485.4 L52.6,507.3 L51.2,529.1 L50.7,551.0 L49.2,572.8 L57.2,572.8 L58.7,551.0 L59.2,529.1 L60.6,507.3 L57.3,485.4 L57.9,463.6 Z" fill="#a84818" opacity="0.35"/><path d="M141.3,463.6 L139.9,485.4 L142.1,507.3 L142.1,529.1 L141.7,551.0 L143.3,572.8 L146.8,572.8 L145.2,551.0 L145.7,529.1 L145.6,507.3 L143.4,485.4 L144.8,463.6 Z" fill="#a44416" opacity="0.21"/><path d="M122.4,463.6 L120.1,485.4 L120.1,507.3 L123.0,529.1 L120.3,551.0 L119.9,572.8 L131.5,572.8 L131.9,551.0 L134.6,529.1 L131.7,507.3 L131.8,485.4 L134.0,463.6 Z" fill="#a44416" opacity="0.41"/><path d="M87.9,463.6 L85.7,485.4 L84.0,507.3 L84.3,529.1 L86.8,551.0 L87.4,572.8 L99.3,572.8 L98.8,551.0 L96.2,529.1 L95.9,507.3 L97.6,485.4 L99.8,463.6 Z" fill="#b04c1a" opacity="0.36"/><path d="M55.7,463.6 L56.8,485.4 L57.9,507.3 L55.3,529.1 L55.4,551.0 L56.7,572.8 L69.1,572.8 L67.9,551.0 L67.7,529.1 L70.4,507.3 L69.2,485.4 L68.2,463.6 Z" fill="#a44416" opacity="0.42"/><path d="M154.7,463.6 L153.6,485.4 L155.2,507.3 L153.9,529.1 L155.1,551.0 L153.5,572.8 L159.4,572.8 L160.9,551.0 L159.7,529.1 L161.0,507.3 L159.5,485.4 L160.6,463.6 Z" fill="#dc8444" opacity="0.25"/><path d="M97.2,463.6 L98.2,485.4 L99.0,507.3 L100.7,529.1 L99.2,551.0 L99.4,572.8 L107.2,572.8 L107.0,551.0 L108.5,529.1 L106.8,507.3 L106.0,485.4 L105.0,463.6 Z" fill="#d87a3a" opacity="0.23"/><path d="M40.8,463.6 L42.2,485.4 L41.2,507.3 L43.1,529.1 L42.9,551.0 L43.2,572.8 L50.3,572.8 L50.0,551.0 L50.3,529.1 L48.3,507.3 L49.3,485.4 L48.0,463.6 Z" fill="#dc8444" opacity="0.33"/><path d="M286.5,463.6 L286.5,485.4 L285.5,507.3 L287.7,529.1 L284.5,551.0 L285.4,572.8 L298.5,572.8 L297.6,551.0 L300.8,529.1 L298.6,507.3 L299.6,485.4 L299.6,463.6 Z" fill="#dc8444" opacity="0.28"/><path d="M336.6,463.6 L335.6,485.4 L334.1,507.3 L335.2,529.1 L336.4,551.0 L337.0,572.8 L347.8,572.8 L347.1,551.0 L345.9,529.1 L344.8,507.3 L346.3,485.4 L347.3,463.6 Z" fill="#d87a3a" opacity="0.45"/><path d="M307.8,463.6 L308.0,485.4 L306.3,507.3 L305.5,529.1 L306.7,551.0 L305.4,572.8 L316.2,572.8 L317.5,551.0 L316.3,529.1 L317.2,507.3 L318.8,485.4 L318.6,463.6 Z" fill="#d87a3a" opacity="0.44"/><path d="M319.0,463.6 L316.7,485.4 L317.2,507.3 L316.3,529.1 L319.0,551.0 L318.8,572.8 L328.8,572.8 L329.1,551.0 L326.3,529.1 L327.2,507.3 L326.8,485.4 L329.1,463.6 Z" fill="#d87a3a" opacity="0.32"/><path d="M298.2,463.6 L298.6,485.4 L299.4,507.3 L299.8,529.1 L301.9,551.0 L299.2,572.8 L304.5,572.8 L307.1,551.0 L305.0,529.1 L304.7,507.3 L303.8,485.4 L303.5,463.6 Z" fill="#a84818" opacity="0.24"/><path d="M274.9,463.6 L273.7,485.4 L276.2,507.3 L274.5,529.1 L273.6,551.0 L274.2,572.8 L283.9,572.8 L283.3,551.0 L284.2,529.1 L285.9,507.3 L283.4,485.4 L284.6,463.6 Z" fill="#b04c1a" opacity="0.21"/><path d="M306.4,463.6 L304.8,485.4 L305.4,507.3 L306.4,529.1 L308.3,551.0 L308.3,572.8 L312.1,572.8 L312.1,551.0 L310.2,529.1 L309.2,507.3 L308.6,485.4 L310.2,463.6 Z" fill="#d87a3a" opacity="0.45"/><path d="M303.6,463.6 L301.1,485.4 L301.9,507.3 L301.2,529.1 L300.8,551.0 L303.5,572.8 L307.8,572.8 L305.0,551.0 L305.4,529.1 L306.2,507.3 L305.3,485.4 L307.8,463.6 Z" fill="#a44416" opacity="0.25"/><path d="M323.2,463.6 L322.9,485.4 L325.5,507.3 L325.7,529.1 L323.0,551.0 L324.4,572.8 L333.3,572.8 L331.9,551.0 L334.6,529.1 L334.4,507.3 L331.7,485.4 L332.1,463.6 Z" fill="#b04c1a" opacity="0.34"/><path d="M294.7,463.6 L296.1,485.4 L293.0,507.3 L294.5,529.1 L293.6,551.0 L294.4,572.8 L296.9,572.8 L296.1,551.0 L297.0,529.1 L295.5,507.3 L298.5,485.4 L297.2,463.6 Z" fill="#d87a3a" opacity="0.45"/><path d="M360.9,463.6 L364.4,485.4 L361.4,507.3 L363.8,529.1 L361.4,551.0 L362.8,572.8 L364.9,572.8 L363.6,551.0 L366.0,529.1 L363.6,507.3 L366.5,485.4 L363.1,463.6 Z" fill="#b04c1a" opacity="0.29"/><path d="M261.3,463.6 L263.3,485.4 L262.2,507.3 L264.2,529.1 L260.5,551.0 L261.8,572.8 L273.3,572.8 L272.0,551.0 L275.7,529.1 L273.7,507.3 L274.9,485.4 L272.9,463.6 Z" fill="#d87a3a" opacity="0.26"/><path d="M329.5,463.6 L328.8,485.4 L330.5,507.3 L327.7,529.1 L328.3,551.0 L330.3,572.8 L341.6,572.8 L339.6,551.0 L339.0,529.1 L341.8,507.3 L340.2,485.4 L340.8,463.6 Z" fill="#a84818" opacity="0.31"/><path d="M372.8,463.6 L372.1,485.4 L369.6,507.3 L372.9,529.1 L370.0,551.0 L369.3,572.8 L372.4,572.8 L373.1,551.0 L376.0,529.1 L372.7,507.3 L375.2,485.4 L375.9,463.6 Z" fill="#a84818" opacity="0.30"/><path d="M528.4,463.6 L530.3,485.4 L527.0,507.3 L528.4,529.1 L528.3,551.0 L527.8,572.8 L540.8,572.8 L541.3,551.0 L541.4,529.1 L540.0,507.3 L543.3,485.4 L541.4,463.6 Z" fill="#d87a3a" opacity="0.42"/><path d="M501.6,463.6 L500.6,485.4 L500.5,507.3 L499.3,529.1 L501.3,551.0 L500.7,572.8 L513.2,572.8 L513.8,551.0 L511.9,529.1 L513.0,507.3 L513.2,485.4 L514.1,463.6 Z" fill="#d87a3a" opacity="0.38"/><path d="M573.2,463.6 L571.2,485.4 L573.3,507.3 L571.1,529.1 L571.3,551.0 L570.7,572.8 L577.1,572.8 L577.6,551.0 L577.5,529.1 L579.7,507.3 L577.6,485.4 L579.6,463.6 Z" fill="#dc8444" opacity="0.42"/><path d="M502.3,463.6 L501.5,485.4 L501.3,507.3 L500.6,529.1 L502.8,551.0 L501.5,572.8 L503.6,572.8 L504.9,551.0 L502.7,529.1 L503.3,507.3 L503.5,485.4 L504.4,463.6 Z" fill="#b04c1a" opacity="0.41"/><path d="M518.6,463.6 L520.7,485.4 L518.4,507.3 L518.7,529.1 L517.3,551.0 L519.3,572.8 L530.1,572.8 L528.1,551.0 L529.5,529.1 L529.2,507.3 L531.5,485.4 L529.4,463.6 Z" fill="#a44416" opacity="0.40"/><path d="M538.9,463.6 L537.2,485.4 L538.7,507.3 L536.7,529.1 L538.6,551.0 L536.8,572.8 L539.6,572.8 L541.4,551.0 L539.5,529.1 L541.5,507.3 L540.0,485.4 L541.7,463.6 Z" fill="#b04c1a" opacity="0.33"/><path d="M513.0,463.6 L513.1,485.4 L510.6,507.3 L511.3,529.1 L511.4,551.0 L511.0,572.8 L519.6,572.8 L520.0,551.0 L519.9,529.1 L519.2,507.3 L521.7,485.4 L521.6,463.6 Z" fill="#b04c1a" opacity="0.44"/><path d="M566.9,463.6 L567.2,485.4 L565.5,507.3 L564.7,529.1 L567.6,551.0 L566.2,572.8 L579.5,572.8 L580.9,551.0 L578.0,529.1 L578.8,507.3 L580.5,485.4 L580.2,463.6 Z" fill="#b04c1a" opacity="0.34"/><path d="M493.4,463.6 L495.5,485.4 L495.4,507.3 L495.8,529.1 L495.1,551.0 L493.6,572.8 L496.3,572.8 L497.8,551.0 L498.5,529.1 L498.1,507.3 L498.3,485.4 L496.1,463.6 Z" fill="#a44416" opacity="0.40"/><path d="M482.4,463.6 L484.8,485.4 L483.2,507.3 L482.7,529.1 L485.6,551.0 L484.1,572.8 L497.0,572.8 L498.5,551.0 L495.5,529.1 L496.1,507.3 L497.7,485.4 L495.3,463.6 Z" fill="#dc8444" opacity="0.26"/><path d="M497.6,463.6 L495.7,485.4 L496.6,507.3 L498.8,529.1 L495.2,551.0 L498.0,572.8 L503.8,572.8 L501.0,551.0 L504.5,529.1 L502.4,507.3 L501.4,485.4 L503.3,463.6 Z" fill="#d87a3a" opacity="0.21"/><path d="M558.1,463.6 L558.0,485.4 L557.9,507.3 L558.3,529.1 L556.1,551.0 L557.6,572.8 L567.6,572.8 L566.2,551.0 L568.4,529.1 L567.9,507.3 L568.1,485.4 L568.1,463.6 Z" fill="#d87a3a" opacity="0.27"/><path d="M581.0,463.6 L580.5,485.4 L583.8,507.3 L582.3,529.1 L582.6,551.0 L583.6,572.8 L595.3,572.8 L594.3,551.0 L594.0,529.1 L595.5,507.3 L592.2,485.4 L592.7,463.6 Z" fill="#d87a3a" opacity="0.24"/><path d="M557.5,463.6 L557.9,485.4 L555.0,507.3 L555.2,529.1 L558.0,551.0 L556.2,572.8 L563.8,572.8 L565.5,551.0 L562.8,529.1 L562.6,507.3 L565.5,485.4 L565.0,463.6 Z" fill="#a84818" opacity="0.23"/><path d="M728.5,463.6 L731.4,485.4 L729.1,507.3 L729.6,529.1 L729.6,551.0 L727.7,572.8 L730.3,572.8 L732.2,551.0 L732.2,529.1 L731.6,507.3 L734.0,485.4 L731.0,463.6 Z" fill="#a44416" opacity="0.39"/><path d="M779.4,463.6 L778.4,485.4 L779.8,507.3 L781.4,529.1 L781.5,551.0 L778.4,572.8 L790.9,572.8 L794.0,551.0 L794.0,529.1 L792.3,507.3 L790.9,485.4 L791.9,463.6 Z" fill="#d87a3a" opacity="0.39"/><path d="M742.1,463.6 L745.0,485.4 L743.9,507.3 L742.2,529.1 L743.5,551.0 L744.8,572.8 L749.1,572.8 L747.7,551.0 L746.5,529.1 L748.1,507.3 L749.2,485.4 L746.3,463.6 Z" fill="#dc8444" opacity="0.27"/><path d="M734.0,463.6 L734.8,485.4 L733.4,507.3 L734.3,529.1 L732.5,551.0 L735.7,572.8 L739.2,572.8 L736.0,551.0 L737.7,529.1 L736.8,507.3 L738.3,485.4 L737.5,463.6 Z" fill="#d87a3a" opacity="0.26"/><path d="M789.8,463.6 L791.2,485.4 L790.4,507.3 L788.2,529.1 L790.3,551.0 L788.0,572.8 L796.6,572.8 L798.9,551.0 L796.9,529.1 L799.0,507.3 L799.8,485.4 L798.4,463.6 Z" fill="#dc8444" opacity="0.44"/><path d="M743.2,463.6 L742.8,485.4 L744.1,507.3 L744.5,529.1 L743.0,551.0 L743.3,572.8 L750.9,572.8 L750.6,551.0 L752.1,529.1 L751.7,507.3 L750.4,485.4 L750.8,463.6 Z" fill="#a84818" opacity="0.42"/><path d="M739.9,463.6 L740.4,485.4 L737.7,507.3 L739.4,529.1 L737.8,551.0 L739.6,572.8 L743.4,572.8 L741.6,551.0 L743.1,529.1 L741.4,507.3 L744.2,485.4 L743.7,463.6 Z" fill="#b04c1a" opacity="0.32"/><path d="M705.8,463.6 L707.6,485.4 L706.6,507.3 L704.4,529.1 L705.8,551.0 L707.4,572.8 L721.2,572.8 L719.5,551.0 L718.2,529.1 L720.4,507.3 L721.3,485.4 L719.6,463.6 Z" fill="#b04c1a" opacity="0.45"/><path d="M765.4,463.6 L766.1,485.4 L765.1,507.3 L767.9,529.1 L768.6,551.0 L765.3,572.8 L774.5,572.8 L777.8,551.0 L777.1,529.1 L774.2,507.3 L775.2,485.4 L774.5,463.6 Z" fill="#dc8444" opacity="0.28"/><path d="M721.8,463.6 L723.8,485.4 L725.1,507.3 L722.3,529.1 L722.4,551.0 L722.6,572.8 L734.3,572.8 L734.1,551.0 L734.1,529.1 L736.9,507.3 L735.6,485.4 L733.5,463.6 Z" fill="#a44416" opacity="0.41"/><path d="M723.9,463.6 L724.6,485.4 L724.2,507.3 L725.9,529.1 L725.6,551.0 L723.2,572.8 L727.4,572.8 L729.8,551.0 L730.1,529.1 L728.4,507.3 L728.8,485.4 L728.1,463.6 Z" fill="#a44416" opacity="0.26"/><path d="M695.5,463.6 L695.6,485.4 L693.7,507.3 L694.5,529.1 L695.0,551.0 L694.9,572.8 L700.8,572.8 L701.0,551.0 L700.5,529.1 L699.7,507.3 L701.6,485.4 L701.4,463.6 Z" fill="#a44416" opacity="0.30"/><path d="M768.3,463.6 L767.4,485.4 L770.9,507.3 L769.1,529.1 L768.9,551.0 L768.8,572.8 L777.2,572.8 L777.3,551.0 L777.5,529.1 L779.3,507.3 L775.8,485.4 L776.7,463.6 Z" fill="#b04c1a" opacity="0.39"/><path d="M790.9,463.6 L791.2,485.4 L790.9,507.3 L788.4,529.1 L787.8,551.0 L788.4,572.8 L796.2,572.8 L795.5,551.0 L796.1,529.1 L798.6,507.3 L798.9,485.4 L798.6,463.6 Z" fill="#b04c1a" opacity="0.44"/><path d="M253.2,572.8 L250.1,594.6 L251.2,616.5 L253.3,638.3 L253.7,660.2 L249.8,682.0 L263.8,682.0 L267.6,660.2 L267.2,638.3 L265.2,616.5 L264.0,594.6 L267.2,572.8 Z" fill="#dc8444" opacity="0.36"/><path d="M222.2,572.8 L222.4,594.6 L220.6,616.5 L221.4,638.3 L222.6,660.2 L219.5,682.0 L231.6,682.0 L234.7,660.2 L233.5,638.3 L232.7,616.5 L234.5,594.6 L234.3,572.8 Z" fill="#a84818" opacity="0.30"/><path d="M148.8,572.8 L148.3,594.6 L149.4,616.5 L148.3,638.3 L147.5,660.2 L149.7,682.0 L155.2,682.0 L153.1,660.2 L153.9,638.3 L154.9,616.5 L153.8,594.6 L154.3,572.8 Z" fill="#a84818" opacity="0.27"/><path d="M239.7,572.8 L237.6,594.6 L237.4,616.5 L239.6,638.3 L241.0,660.2 L238.2,682.0 L243.9,682.0 L246.6,660.2 L245.2,638.3 L243.0,616.5 L243.3,594.6 L245.4,572.8 Z" fill="#dc8444" opacity="0.39"/><path d="M253.0,572.8 L253.4,594.6 L253.0,616.5 L251.9,638.3 L253.5,660.2 L252.6,682.0 L263.0,682.0 L263.9,660.2 L262.3,638.3 L263.5,616.5 L263.8,594.6 L263.4,572.8 Z" fill="#dc8444" opacity="0.44"/><path d="M192.0,572.8 L191.2,594.6 L192.4,616.5 L193.3,638.3 L192.0,660.2 L192.5,682.0 L199.7,682.0 L199.2,660.2 L200.5,638.3 L199.6,616.5 L198.5,594.6 L199.2,572.8 Z" fill="#b04c1a" opacity="0.34"/><path d="M243.0,572.8 L245.6,594.6 L242.6,616.5 L243.5,638.3 L244.4,660.2 L243.4,682.0 L252.4,682.0 L253.4,660.2 L252.5,638.3 L251.6,616.5 L254.7,594.6 L252.0,572.8 Z" fill="#a84818" opacity="0.35"/><path d="M169.9,572.8 L167.2,594.6 L168.5,616.5 L167.9,638.3 L166.4,660.2 L168.0,682.0 L171.8,682.0 L170.2,660.2 L171.7,638.3 L172.3,616.5 L171.0,594.6 L173.6,572.8 Z" fill="#d87a3a" opacity="0.43"/><path d="M181.7,572.8 L184.5,594.6 L182.9,616.5 L183.3,638.3 L184.5,660.2 L184.5,682.0 L193.6,682.0 L193.6,660.2 L192.3,638.3 L191.9,616.5 L193.5,594.6 L190.7,572.8 Z" fill="#a44416" opacity="0.29"/><path d="M238.5,572.8 L238.8,594.6 L238.2,616.5 L238.2,638.3 L238.7,660.2 L240.0,682.0 L243.0,682.0 L241.7,660.2 L241.3,638.3 L241.3,616.5 L241.8,594.6 L241.6,572.8 Z" fill="#a44416" opacity="0.23"/><path d="M242.8,572.8 L241.7,594.6 L244.3,616.5 L242.7,638.3 L244.4,660.2 L242.6,682.0 L249.6,682.0 L251.4,660.2 L249.7,638.3 L251.3,616.5 L248.7,594.6 L249.8,572.8 Z" fill="#d87a3a" opacity="0.36"/><path d="M182.0,572.8 L181.8,594.6 L184.3,616.5 L183.9,638.3 L184.5,660.2 L182.7,682.0 L185.4,682.0 L187.2,660.2 L186.6,638.3 L187.0,616.5 L184.5,594.6 L184.7,572.8 Z" fill="#a44416" opacity="0.32"/><path d="M169.8,572.8 L169.3,594.6 L170.2,616.5 L170.6,638.3 L170.1,660.2 L168.4,682.0 L175.6,682.0 L177.3,660.2 L177.8,638.3 L177.5,616.5 L176.6,594.6 L177.1,572.8 Z" fill="#d87a3a" opacity="0.33"/><path d="M187.6,572.8 L187.6,594.6 L188.5,616.5 L187.1,638.3 L187.2,660.2 L189.1,682.0 L195.6,682.0 L193.6,660.2 L193.5,638.3 L194.9,616.5 L194.0,594.6 L194.0,572.8 Z" fill="#d87a3a" opacity="0.27"/><path d="M480.9,572.8 L478.2,594.6 L480.4,616.5 L479.6,638.3 L478.0,660.2 L481.1,682.0 L493.8,682.0 L490.7,660.2 L492.3,638.3 L493.1,616.5 L490.9,594.6 L493.6,572.8 Z" fill="#a84818" opacity="0.36"/><path d="M458.6,572.8 L460.4,594.6 L459.0,616.5 L460.3,638.3 L461.3,660.2 L459.2,682.0 L467.9,682.0 L470.0,660.2 L469.0,638.3 L467.7,616.5 L469.1,594.6 L467.3,572.8 Z" fill="#a44416" opacity="0.24"/><path d="M440.1,572.8 L442.0,594.6 L441.5,616.5 L441.1,638.3 L443.0,660.2 L443.2,682.0 L448.8,682.0 L448.6,660.2 L446.7,638.3 L447.1,616.5 L447.6,594.6 L445.7,572.8 Z" fill="#a44416" opacity="0.30"/><path d="M446.3,572.8 L445.9,594.6 L445.0,616.5 L445.6,638.3 L445.4,660.2 L444.1,682.0 L448.4,682.0 L449.8,660.2 L450.0,638.3 L449.3,616.5 L450.3,594.6 L450.7,572.8 Z" fill="#dc8444" opacity="0.44"/><path d="M477.2,572.8 L478.6,594.6 L476.3,616.5 L478.3,638.3 L478.1,660.2 L479.0,682.0 L490.4,682.0 L489.5,660.2 L489.6,638.3 L487.6,616.5 L490.0,594.6 L488.5,572.8 Z" fill="#dc8444" opacity="0.41"/><path d="M467.4,572.8 L466.8,594.6 L467.0,616.5 L468.7,638.3 L468.9,660.2 L468.9,682.0 L474.1,682.0 L474.1,660.2 L473.9,638.3 L472.2,616.5 L472.0,594.6 L472.6,572.8 Z" fill="#a84818" opacity="0.37"/><path d="M386.7,572.8 L386.5,594.6 L388.0,616.5 L386.6,638.3 L385.1,660.2 L386.8,682.0 L390.6,682.0 L389.0,660.2 L390.5,638.3 L391.9,616.5 L390.3,594.6 L390.5,572.8 Z" fill="#dc8444" opacity="0.44"/><path d="M459.1,572.8 L458.9,594.6 L459.4,616.5 L457.9,638.3 L459.6,660.2 L459.4,682.0 L473.0,682.0 L473.3,660.2 L471.6,638.3 L473.1,616.5 L472.6,594.6 L472.7,572.8 Z" fill="#d87a3a" opacity="0.20"/><path d="M463.9,572.8 L467.3,594.6 L465.1,616.5 L464.4,638.3 L465.9,660.2 L465.3,682.0 L471.8,682.0 L472.4,660.2 L471.0,638.3 L471.6,616.5 L473.8,594.6 L470.4,572.8 Z" fill="#a44416" opacity="0.30"/><path d="M442.4,572.8 L445.1,594.6 L442.7,616.5 L445.2,638.3 L444.8,660.2 L441.7,682.0 L444.8,682.0 L447.9,660.2 L448.3,638.3 L445.8,616.5 L448.2,594.6 L445.5,572.8 Z" fill="#a84818" opacity="0.41"/><path d="M369.7,572.8 L370.8,594.6 L368.1,616.5 L369.7,638.3 L368.6,660.2 L369.1,682.0 L379.6,682.0 L379.1,660.2 L380.2,638.3 L378.7,616.5 L381.3,594.6 L380.2,572.8 Z" fill="#a84818" opacity="0.25"/><path d="M448.4,572.8 L449.7,594.6 L449.2,616.5 L448.3,638.3 L447.3,660.2 L449.7,682.0 L458.6,682.0 L456.2,660.2 L457.1,638.3 L458.1,616.5 L458.6,594.6 L457.3,572.8 Z" fill="#d87a3a" opacity="0.29"/><path d="M379.4,572.8 L380.5,594.6 L379.9,616.5 L378.5,638.3 L378.6,660.2 L379.8,682.0 L385.8,682.0 L384.6,660.2 L384.5,638.3 L385.9,616.5 L386.5,594.6 L385.4,572.8 Z" fill="#d87a3a" opacity="0.28"/><path d="M378.6,572.8 L380.4,594.6 L381.2,616.5 L378.1,638.3 L378.2,660.2 L379.6,682.0 L389.0,682.0 L387.6,660.2 L387.6,638.3 L390.6,616.5 L389.8,594.6 L388.1,572.8 Z" fill="#a44416" opacity="0.28"/><path d="M693.9,572.8 L692.1,594.6 L695.3,616.5 L695.2,638.3 L692.2,660.2 L693.7,682.0 L707.7,682.0 L706.1,660.2 L709.1,638.3 L709.2,616.5 L706.1,594.6 L707.8,572.8 Z" fill="#a84818" opacity="0.22"/><path d="M589.0,572.8 L587.4,594.6 L588.0,616.5 L587.6,638.3 L587.2,660.2 L588.7,682.0 L601.3,682.0 L599.8,660.2 L600.2,638.3 L600.6,616.5 L600.0,594.6 L601.6,572.8 Z" fill="#a84818" opacity="0.28"/><path d="M658.1,572.8 L657.5,594.6 L656.8,616.5 L657.9,638.3 L659.5,660.2 L656.3,682.0 L663.3,682.0 L666.5,660.2 L664.9,638.3 L663.8,616.5 L664.5,594.6 L665.1,572.8 Z" fill="#a44416" opacity="0.28"/><path d="M588.3,572.8 L588.3,594.6 L586.8,616.5 L586.8,638.3 L586.4,660.2 L585.3,682.0 L588.4,682.0 L589.5,660.2 L590.0,638.3 L590.0,616.5 L591.4,594.6 L591.4,572.8 Z" fill="#a44416" opacity="0.29"/><path d="M621.2,572.8 L623.4,594.6 L621.5,616.5 L621.7,638.3 L620.0,660.2 L619.9,682.0 L633.4,682.0 L633.5,660.2 L635.2,638.3 L635.0,616.5 L636.9,594.6 L634.7,572.8 Z" fill="#d87a3a" opacity="0.36"/><path d="M642.8,572.8 L640.8,594.6 L642.8,616.5 L643.9,638.3 L644.3,660.2 L643.4,682.0 L650.6,682.0 L651.5,660.2 L651.0,638.3 L650.0,616.5 L648.0,594.6 L650.0,572.8 Z" fill="#dc8444" opacity="0.21"/><path d="M686.5,572.8 L683.8,594.6 L685.7,616.5 L687.4,638.3 L685.2,660.2 L685.7,682.0 L695.7,682.0 L695.2,660.2 L697.4,638.3 L695.7,616.5 L693.8,594.6 L696.5,572.8 Z" fill="#d87a3a" opacity="0.23"/><path d="M656.6,572.8 L657.5,594.6 L659.0,616.5 L657.6,638.3 L658.9,660.2 L657.6,682.0 L666.8,682.0 L668.2,660.2 L666.8,638.3 L668.2,616.5 L666.7,594.6 L665.9,572.8 Z" fill="#a44416" opacity="0.45"/><path d="M589.4,572.8 L589.1,594.6 L587.4,616.5 L589.8,638.3 L588.0,660.2 L590.4,682.0 L598.0,682.0 L595.6,660.2 L597.3,638.3 L594.9,616.5 L596.7,594.6 L596.9,572.8 Z" fill="#dc8444" opacity="0.21"/><path d="M617.8,572.8 L620.1,594.6 L616.8,616.5 L619.7,638.3 L616.7,660.2 L619.2,682.0 L629.2,682.0 L626.7,660.2 L629.7,638.3 L626.8,616.5 L630.1,594.6 L627.8,572.8 Z" fill="#b04c1a" opacity="0.40"/><path d="M613.7,572.8 L613.6,594.6 L614.6,616.5 L613.8,638.3 L613.1,660.2 L611.3,682.0 L617.8,682.0 L619.7,660.2 L620.3,638.3 L621.2,616.5 L620.1,594.6 L620.2,572.8 Z" fill="#b04c1a" opacity="0.40"/><path d="M679.1,572.8 L678.6,594.6 L678.5,616.5 L680.3,638.3 L677.8,660.2 L679.3,682.0 L682.5,682.0 L681.0,660.2 L683.5,638.3 L681.7,616.5 L681.8,594.6 L682.3,572.8 Z" fill="#a84818" opacity="0.39"/><path d="M693.5,572.8 L690.5,594.6 L690.8,616.5 L693.7,638.3 L690.3,660.2 L693.7,682.0 L695.9,682.0 L692.6,660.2 L695.9,638.3 L693.0,616.5 L692.8,594.6 L695.7,572.8 Z" fill="#d87a3a" opacity="0.37"/><path d="M669.4,572.8 L669.3,594.6 L670.0,616.5 L671.6,638.3 L671.1,660.2 L669.3,682.0 L675.2,682.0 L677.1,660.2 L677.5,638.3 L675.9,616.5 L675.3,594.6 L675.4,572.8 Z" fill="#a44416" opacity="0.40"/><path d="M860.7,572.8 L863.6,594.6 L863.1,616.5 L860.7,638.3 L859.8,660.2 L863.3,682.0 L867.0,682.0 L863.6,660.2 L864.5,638.3 L866.8,616.5 L867.3,594.6 L864.4,572.8 Z" fill="#a44416" opacity="0.41"/><path d="M815.6,572.8 L816.4,594.6 L817.0,616.5 L814.4,638.3 L816.4,660.2 L816.7,682.0 L827.9,682.0 L827.6,660.2 L825.6,638.3 L828.2,616.5 L827.6,594.6 L826.8,572.8 Z" fill="#a84818" opacity="0.28"/><path d="M881.7,572.8 L883.2,594.6 L882.4,616.5 L880.7,638.3 L882.4,660.2 L881.4,682.0 L891.7,682.0 L892.6,660.2 L890.9,638.3 L892.6,616.5 L893.4,594.6 L892.0,572.8 Z" fill="#dc8444" opacity="0.24"/><path d="M882.0,572.8 L882.5,594.6 L881.3,616.5 L882.5,638.3 L884.2,660.2 L884.9,682.0 L887.2,682.0 L886.4,660.2 L884.8,638.3 L883.5,616.5 L884.7,594.6 L884.3,572.8 Z" fill="#a44416" opacity="0.37"/><path d="M894.4,572.8 L895.4,594.6 L897.5,616.5 L894.6,638.3 L894.3,660.2 L897.0,682.0 L905.5,682.0 L902.8,660.2 L903.1,638.3 L906.0,616.5 L903.9,594.6 L902.9,572.8 Z" fill="#a84818" opacity="0.22"/><path d="M880.0,572.8 L878.4,594.6 L881.9,616.5 L880.7,638.3 L878.6,660.2 L879.7,682.0 L882.7,682.0 L881.6,660.2 L883.7,638.3 L884.9,616.5 L881.4,594.6 L883.0,572.8 Z" fill="#b04c1a" opacity="0.25"/><path d="M872.2,572.8 L871.1,594.6 L871.8,616.5 L869.5,638.3 L870.6,660.2 L870.2,682.0 L877.4,682.0 L877.8,660.2 L876.8,638.3 L879.0,616.5 L878.4,594.6 L879.4,572.8 Z" fill="#d87a3a" opacity="0.27"/><path d="M888.1,572.8 L887.1,594.6 L889.8,616.5 L889.5,638.3 L887.5,660.2 L888.8,682.0 L893.4,682.0 L892.1,660.2 L894.1,638.3 L894.4,616.5 L891.6,594.6 L892.7,572.8 Z" fill="#d87a3a" opacity="0.22"/><path d="M818.9,572.8 L816.5,594.6 L816.5,616.5 L815.9,638.3 L817.5,660.2 L818.5,682.0 L821.3,682.0 L820.2,660.2 L818.6,638.3 L819.2,616.5 L819.2,594.6 L821.7,572.8 Z" fill="#a84818" opacity="0.24"/><path d="M854.8,572.8 L854.6,594.6 L855.1,616.5 L852.7,638.3 L853.9,660.2 L853.5,682.0 L867.4,682.0 L867.7,660.2 L866.5,638.3 L869.0,616.5 L868.5,594.6 L868.7,572.8 Z" fill="#a84818" opacity="0.38"/><path d="M812.8,572.8 L813.6,594.6 L812.7,616.5 L813.3,638.3 L813.4,660.2 L815.2,682.0 L821.9,682.0 L820.1,660.2 L820.0,638.3 L819.4,616.5 L820.3,594.6 L819.5,572.8 Z" fill="#b04c1a" opacity="0.43"/><path d="M908.2,572.8 L911.4,594.6 L910.2,616.5 L911.2,638.3 L909.3,660.2 L911.7,682.0 L919.4,682.0 L917.1,660.2 L918.9,638.3 L918.0,616.5 L919.1,594.6 L916.0,572.8 Z" fill="#dc8444" opacity="0.21"/><path d="M902.2,572.8 L902.2,594.6 L900.4,616.5 L898.8,638.3 L902.7,660.2 L901.6,682.0 L913.5,682.0 L914.5,660.2 L910.6,638.3 L912.3,616.5 L914.1,594.6 L914.1,572.8 Z" fill="#d87a3a" opacity="0.37"/><path d="M881.1,572.8 L880.6,594.6 L881.3,616.5 L882.5,638.3 L882.6,660.2 L881.6,682.0 L884.8,682.0 L885.7,660.2 L885.6,638.3 L884.4,616.5 L883.8,594.6 L884.2,572.8 Z" fill="#b04c1a" opacity="0.31"/><path d="M84.0,682.0 L84.3,703.8 L83.7,725.7 L85.9,747.5 L83.6,769.4 L83.3,791.2 L88.1,791.2 L88.3,769.4 L90.6,747.5 L88.4,725.7 L89.0,703.8 L88.7,682.0 Z" fill="#d87a3a" opacity="0.30"/><path d="M59.1,682.0 L61.1,703.8 L58.4,725.7 L58.7,747.5 L61.1,769.4 L60.0,791.2 L73.3,791.2 L74.4,769.4 L71.9,747.5 L71.7,725.7 L74.3,703.8 L72.4,682.0 Z" fill="#dc8444" opacity="0.21"/><path d="M97.8,682.0 L94.8,703.8 L95.7,725.7 L94.9,747.5 L95.4,769.4 L96.5,791.2 L104.7,791.2 L103.5,769.4 L103.0,747.5 L103.9,725.7 L102.9,703.8 L105.9,682.0 Z" fill="#a44416" opacity="0.27"/><path d="M140.5,682.0 L140.6,703.8 L143.0,725.7 L143.1,747.5 L141.8,769.4 L144.0,791.2 L150.9,791.2 L148.7,769.4 L150.0,747.5 L149.9,725.7 L147.5,703.8 L147.4,682.0 Z" fill="#a44416" opacity="0.40"/><path d="M73.3,682.0 L73.7,703.8 L72.5,725.7 L72.3,747.5 L73.3,769.4 L75.4,791.2 L78.2,791.2 L76.1,769.4 L75.1,747.5 L75.3,725.7 L76.5,703.8 L76.1,682.0 Z" fill="#dc8444" opacity="0.30"/><path d="M121.6,682.0 L122.4,703.8 L121.1,725.7 L123.6,747.5 L124.3,769.4 L124.1,791.2 L130.6,791.2 L130.7,769.4 L130.0,747.5 L127.6,725.7 L128.8,703.8 L128.0,682.0 Z" fill="#b04c1a" opacity="0.39"/><path d="M55.9,682.0 L53.1,703.8 L54.0,725.7 L54.3,747.5 L53.9,769.4 L53.8,791.2 L64.3,791.2 L64.5,769.4 L64.9,747.5 L64.6,725.7 L63.7,703.8 L66.5,682.0 Z" fill="#a84818" opacity="0.40"/><path d="M104.2,682.0 L100.9,703.8 L102.6,725.7 L104.3,747.5 L104.0,769.4 L103.7,791.2 L110.4,791.2 L110.6,769.4 L111.0,747.5 L109.3,725.7 L107.5,703.8 L110.9,682.0 Z" fill="#dc8444" opacity="0.28"/><path d="M64.9,682.0 L66.6,703.8 L66.3,725.7 L65.9,747.5 L65.5,769.4 L66.8,791.2 L77.3,791.2 L75.9,769.4 L76.4,747.5 L76.7,725.7 L77.0,703.8 L75.3,682.0 Z" fill="#d87a3a" opacity="0.43"/><path d="M50.5,682.0 L47.1,703.8 L49.2,725.7 L48.5,747.5 L50.1,769.4 L48.2,791.2 L60.6,791.2 L62.4,769.4 L60.9,747.5 L61.5,725.7 L59.5,703.8 L62.9,682.0 Z" fill="#dc8444" opacity="0.25"/><path d="M129.0,682.0 L127.2,703.8 L130.1,725.7 L127.9,747.5 L128.9,769.4 L127.0,791.2 L135.6,791.2 L137.5,769.4 L136.5,747.5 L138.7,725.7 L135.8,703.8 L137.6,682.0 Z" fill="#b04c1a" opacity="0.26"/><path d="M116.7,682.0 L116.0,703.8 L116.9,725.7 L114.7,747.5 L115.5,769.4 L114.2,791.2 L125.4,791.2 L126.7,769.4 L125.8,747.5 L128.1,725.7 L127.2,703.8 L127.9,682.0 Z" fill="#a84818" opacity="0.43"/><path d="M150.7,682.0 L151.7,703.8 L153.2,725.7 L152.6,747.5 L151.0,769.4 L153.2,791.2 L160.0,791.2 L157.8,769.4 L159.4,747.5 L160.0,725.7 L158.5,703.8 L157.5,682.0 Z" fill="#a44416" opacity="0.23"/><path d="M124.5,682.0 L126.3,703.8 L124.9,725.7 L125.9,747.5 L125.1,769.4 L126.9,791.2 L130.6,791.2 L128.9,769.4 L129.6,747.5 L128.7,725.7 L130.1,703.8 L128.3,682.0 Z" fill="#a44416" opacity="0.39"/><path d="M334.4,682.0 L337.2,703.8 L337.2,725.7 L333.5,747.5 L334.7,769.4 L334.7,791.2 L347.7,791.2 L347.8,769.4 L346.5,747.5 L350.3,725.7 L350.2,703.8 L347.5,682.0 Z" fill="#d87a3a" opacity="0.25"/><path d="M308.0,682.0 L307.6,703.8 L306.2,725.7 L307.1,747.5 L308.9,769.4 L305.6,791.2 L318.4,791.2 L321.6,769.4 L319.9,747.5 L318.9,725.7 L320.4,703.8 L320.7,682.0 Z" fill="#a44416" opacity="0.29"/><path d="M329.5,682.0 L329.8,703.8 L331.1,725.7 L330.5,747.5 L330.0,769.4 L330.9,791.2 L337.0,791.2 L336.1,769.4 L336.6,747.5 L337.2,725.7 L335.9,703.8 L335.6,682.0 Z" fill="#dc8444" opacity="0.39"/><path d="M341.8,682.0 L340.8,703.8 L340.5,725.7 L339.9,747.5 L339.1,769.4 L342.1,791.2 L348.3,791.2 L345.2,769.4 L346.0,747.5 L346.6,725.7 L347.0,703.8 L347.9,682.0 Z" fill="#dc8444" opacity="0.35"/><path d="M267.3,682.0 L270.0,703.8 L268.1,725.7 L269.3,747.5 L270.5,769.4 L268.6,791.2 L281.7,791.2 L283.6,769.4 L282.4,747.5 L281.2,725.7 L283.1,703.8 L280.4,682.0 Z" fill="#b04c1a" opacity="0.32"/><path d="M333.6,682.0 L335.8,703.8 L332.6,725.7 L334.7,747.5 L332.0,769.4 L333.0,791.2 L337.3,791.2 L336.3,769.4 L339.0,747.5 L336.9,725.7 L340.1,703.8 L337.9,682.0 Z" fill="#b04c1a" opacity="0.23"/><path d="M276.7,682.0 L275.4,703.8 L275.0,725.7 L273.5,747.5 L274.4,769.4 L274.1,791.2 L282.5,791.2 L282.7,769.4 L281.8,747.5 L283.3,725.7 L283.8,703.8 L285.1,682.0 Z" fill="#b04c1a" opacity="0.35"/><path d="M295.4,682.0 L295.7,703.8 L297.9,725.7 L295.5,747.5 L298.0,769.4 L297.6,791.2 L300.6,791.2 L300.9,769.4 L298.4,747.5 L300.9,725.7 L298.6,703.8 L298.4,682.0 Z" fill="#a84818" opacity="0.25"/><path d="M321.0,682.0 L320.1,703.8 L322.1,725.7 L319.1,747.5 L321.3,769.4 L319.6,791.2 L332.9,791.2 L334.6,769.4 L332.4,747.5 L335.4,725.7 L333.4,703.8 L334.3,682.0 Z" fill="#a44416" opacity="0.24"/><path d="M279.1,682.0 L278.0,703.8 L278.1,725.7 L279.8,747.5 L278.8,769.4 L280.2,791.2 L288.9,791.2 L287.5,769.4 L288.5,747.5 L286.8,725.7 L286.7,703.8 L287.8,682.0 Z" fill="#d87a3a" opacity="0.40"/><path d="M310.0,682.0 L310.9,703.8 L308.9,725.7 L310.7,747.5 L309.1,769.4 L312.2,791.2 L317.4,791.2 L314.3,769.4 L316.0,747.5 L314.1,725.7 L316.2,703.8 L315.2,682.0 Z" fill="#d87a3a" opacity="0.37"/><path d="M308.3,682.0 L304.8,703.8 L307.3,725.7 L307.4,747.5 L306.9,769.4 L304.5,791.2 L318.2,791.2 L320.6,769.4 L321.0,747.5 L321.0,725.7 L318.5,703.8 L322.0,682.0 Z" fill="#a44416" opacity="0.43"/><path d="M307.1,682.0 L306.1,703.8 L309.7,725.7 L307.1,747.5 L306.1,769.4 L306.5,791.2 L315.7,791.2 L315.3,769.4 L316.2,747.5 L318.8,725.7 L315.2,703.8 L316.2,682.0 Z" fill="#d87a3a" opacity="0.45"/><path d="M340.5,682.0 L342.9,703.8 L343.1,725.7 L341.5,747.5 L342.3,769.4 L341.8,791.2 L346.3,791.2 L346.8,769.4 L346.0,747.5 L347.6,725.7 L347.4,703.8 L345.0,682.0 Z" fill="#b04c1a" opacity="0.42"/><path d="M527.9,682.0 L524.4,703.8 L527.8,725.7 L527.3,747.5 L526.9,769.4 L524.1,791.2 L534.5,791.2 L537.2,769.4 L537.7,747.5 L538.1,725.7 L534.7,703.8 L538.3,682.0 Z" fill="#dc8444" opacity="0.37"/><path d="M533.7,682.0 L532.2,703.8 L534.1,725.7 L532.6,747.5 L534.3,769.4 L531.7,791.2 L539.6,791.2 L542.2,769.4 L540.5,747.5 L542.0,725.7 L540.1,703.8 L541.6,682.0 Z" fill="#b04c1a" opacity="0.22"/><path d="M489.7,682.0 L491.0,703.8 L489.5,725.7 L489.5,747.5 L491.4,769.4 L488.3,791.2 L501.5,791.2 L504.5,769.4 L502.6,747.5 L502.6,725.7 L504.2,703.8 L502.9,682.0 Z" fill="#d87a3a" opacity="0.20"/><path d="M512.0,682.0 L512.5,703.8 L512.2,725.7 L513.7,747.5 L515.3,769.4 L514.4,791.2 L520.2,791.2 L521.0,769.4 L519.5,747.5 L517.9,725.7 L518.3,703.8 L517.8,682.0 Z" fill="#a44416" opacity="0.42"/><path d="M499.0,682.0 L501.1,703.8 L500.2,725.7 L500.3,747.5 L498.6,769.4 L500.6,791.2 L507.5,791.2 L505.5,769.4 L507.2,747.5 L507.1,725.7 L508.0,703.8 L505.9,682.0 Z" fill="#b04c1a" opacity="0.25"/><path d="M514.2,682.0 L512.9,703.8 L515.4,725.7 L513.8,747.5 L514.5,769.4 L516.2,791.2 L529.1,791.2 L527.4,769.4 L526.7,747.5 L528.3,725.7 L525.8,703.8 L527.1,682.0 Z" fill="#b04c1a" opacity="0.34"/><path d="M493.9,682.0 L493.6,703.8 L493.2,725.7 L494.3,747.5 L493.5,769.4 L491.8,791.2 L502.0,791.2 L503.7,769.4 L504.5,747.5 L503.4,725.7 L503.8,703.8 L504.1,682.0 Z" fill="#a44416" opacity="0.31"/><path d="M524.5,682.0 L524.5,703.8 L523.0,725.7 L523.5,747.5 L523.6,769.4 L524.9,791.2 L532.0,791.2 L530.8,769.4 L530.6,747.5 L530.2,725.7 L531.7,703.8 L531.7,682.0 Z" fill="#dc8444" opacity="0.31"/><path d="M513.0,682.0 L513.6,703.8 L512.7,725.7 L512.2,747.5 L511.3,769.4 L514.7,791.2 L518.1,791.2 L514.7,769.4 L515.6,747.5 L516.1,725.7 L517.0,703.8 L516.4,682.0 Z" fill="#a84818" opacity="0.43"/><path d="M510.6,682.0 L510.6,703.8 L507.9,725.7 L509.6,747.5 L508.7,769.4 L510.3,791.2 L517.8,791.2 L516.3,769.4 L517.2,747.5 L515.5,725.7 L518.2,703.8 L518.2,682.0 Z" fill="#d87a3a" opacity="0.42"/><path d="M578.4,682.0 L580.6,703.8 L580.9,725.7 L580.9,747.5 L577.9,769.4 L579.8,791.2 L587.2,791.2 L585.2,769.4 L588.2,747.5 L588.2,725.7 L588.0,703.8 L585.7,682.0 Z" fill="#a44416" opacity="0.45"/><path d="M559.8,682.0 L557.7,703.8 L556.8,725.7 L558.9,747.5 L557.8,769.4 L558.3,791.2 L565.8,791.2 L565.3,769.4 L566.4,747.5 L564.3,725.7 L565.2,703.8 L567.4,682.0 Z" fill="#b04c1a" opacity="0.40"/><path d="M581.7,682.0 L583.6,703.8 L582.9,725.7 L582.3,747.5 L585.0,769.4 L584.2,791.2 L595.4,791.2 L596.2,769.4 L593.4,747.5 L594.1,725.7 L594.8,703.8 L592.8,682.0 Z" fill="#b04c1a" opacity="0.23"/><path d="M504.0,682.0 L500.8,703.8 L502.9,725.7 L503.8,747.5 L503.4,769.4 L502.5,791.2 L508.6,791.2 L509.5,769.4 L509.9,747.5 L509.0,725.7 L506.9,703.8 L510.1,682.0 Z" fill="#dc8444" opacity="0.44"/><path d="M775.8,682.0 L776.7,703.8 L779.4,725.7 L776.4,747.5 L777.7,769.4 L779.1,791.2 L781.8,791.2 L780.5,769.4 L779.2,747.5 L782.2,725.7 L779.5,703.8 L778.5,682.0 Z" fill="#dc8444" opacity="0.31"/><path d="M731.6,682.0 L730.1,703.8 L733.4,725.7 L730.5,747.5 L733.1,769.4 L732.2,791.2 L736.7,791.2 L737.6,769.4 L735.0,747.5 L737.9,725.7 L734.5,703.8 L736.1,682.0 Z" fill="#d87a3a" opacity="0.31"/><path d="M776.4,682.0 L778.0,703.8 L777.9,725.7 L777.4,747.5 L779.1,769.4 L778.5,791.2 L784.0,791.2 L784.6,769.4 L782.9,747.5 L783.5,725.7 L783.5,703.8 L782.0,682.0 Z" fill="#a84818" opacity="0.24"/><path d="M790.1,682.0 L786.8,703.8 L787.6,725.7 L786.4,747.5 L789.5,769.4 L788.8,791.2 L794.4,791.2 L795.2,769.4 L792.0,747.5 L793.3,725.7 L792.5,703.8 L795.8,682.0 Z" fill="#a84818" opacity="0.24"/><path d="M798.9,682.0 L798.4,703.8 L797.9,725.7 L800.9,747.5 L798.8,769.4 L800.1,791.2 L806.1,791.2 L804.8,769.4 L806.9,747.5 L803.9,725.7 L804.4,703.8 L804.9,682.0 Z" fill="#b04c1a" opacity="0.32"/><path d="M755.4,682.0 L756.8,703.8 L755.9,725.7 L753.9,747.5 L755.5,769.4 L755.8,791.2 L760.3,791.2 L760.0,769.4 L758.4,747.5 L760.4,725.7 L761.3,703.8 L759.9,682.0 Z" fill="#b04c1a" opacity="0.25"/><path d="M805.8,682.0 L804.8,703.8 L803.9,725.7 L803.6,747.5 L803.7,769.4 L803.7,791.2 L806.8,791.2 L806.8,769.4 L806.6,747.5 L807.0,725.7 L807.9,703.8 L808.9,682.0 Z" fill="#a44416" opacity="0.29"/><path d="M785.6,682.0 L783.5,703.8 L783.2,725.7 L783.7,747.5 L784.0,769.4 L785.1,791.2 L796.6,791.2 L795.5,769.4 L795.1,747.5 L794.6,725.7 L794.9,703.8 L797.1,682.0 Z" fill="#dc8444" opacity="0.41"/><path d="M761.5,682.0 L761.8,703.8 L762.8,725.7 L761.4,747.5 L763.0,769.4 L760.8,791.2 L768.0,791.2 L770.1,769.4 L768.6,747.5 L770.0,725.7 L768.9,703.8 L768.7,682.0 Z" fill="#b04c1a" opacity="0.45"/><path d="M783.4,682.0 L782.5,703.8 L783.1,725.7 L783.3,747.5 L784.1,769.4 L783.7,791.2 L790.5,791.2 L790.9,769.4 L790.1,747.5 L789.9,725.7 L789.3,703.8 L790.2,682.0 Z" fill="#d87a3a" opacity="0.35"/><path d="M775.0,682.0 L774.2,703.8 L777.8,725.7 L774.0,747.5 L776.3,769.4 L775.3,791.2 L781.1,791.2 L782.2,769.4 L779.9,747.5 L783.7,725.7 L780.1,703.8 L780.8,682.0 Z" fill="#d87a3a" opacity="0.25"/><path d="M745.0,682.0 L746.0,703.8 L746.3,725.7 L744.6,747.5 L743.7,769.4 L744.8,791.2 L758.0,791.2 L756.8,769.4 L757.7,747.5 L759.5,725.7 L759.1,703.8 L758.2,682.0 Z" fill="#b04c1a" opacity="0.42"/><path d="M757.9,682.0 L757.7,703.8 L758.0,725.7 L758.7,747.5 L759.4,769.4 L757.7,791.2 L760.1,791.2 L761.8,769.4 L761.1,747.5 L760.4,725.7 L760.1,703.8 L760.3,682.0 Z" fill="#d87a3a" opacity="0.21"/><path d="M790.9,682.0 L787.7,703.8 L787.8,725.7 L788.3,747.5 L788.8,769.4 L790.9,791.2 L793.1,791.2 L791.0,769.4 L790.5,747.5 L790.0,725.7 L789.9,703.8 L793.2,682.0 Z" fill="#d87a3a" opacity="0.42"/><path d="M260.1,791.2 L258.6,813.0 L257.6,834.9 L259.6,856.7 L258.2,878.6 L257.5,900.4 L265.6,900.4 L266.3,878.6 L267.7,856.7 L265.7,834.9 L266.7,813.0 L268.2,791.2 Z" fill="#b04c1a" opacity="0.24"/><path d="M193.2,791.2 L194.0,813.0 L193.6,834.9 L194.1,856.7 L195.8,878.6 L194.8,900.4 L198.3,900.4 L199.3,878.6 L197.7,856.7 L197.1,834.9 L197.5,813.0 L196.7,791.2 Z" fill="#a84818" opacity="0.35"/><path d="M201.9,791.2 L201.0,813.0 L202.0,834.9 L201.2,856.7 L199.3,878.6 L199.9,900.4 L210.9,900.4 L210.3,878.6 L212.1,856.7 L213.0,834.9 L212.0,813.0 L212.9,791.2 Z" fill="#a44416" opacity="0.22"/><path d="M246.7,791.2 L247.0,813.0 L247.4,834.9 L250.4,856.7 L248.3,878.6 L250.4,900.4 L256.3,900.4 L254.2,878.6 L256.3,856.7 L253.2,834.9 L252.9,813.0 L252.6,791.2 Z" fill="#a84818" opacity="0.27"/><path d="M155.8,791.2 L154.5,813.0 L154.4,834.9 L153.6,856.7 L156.4,878.6 L154.9,900.4 L165.8,900.4 L167.3,878.6 L164.6,856.7 L165.4,834.9 L165.5,813.0 L166.8,791.2 Z" fill="#d87a3a" opacity="0.40"/><path d="M185.9,791.2 L186.8,813.0 L185.7,834.9 L188.3,856.7 L187.6,878.6 L188.2,900.4 L194.1,900.4 L193.5,878.6 L194.2,856.7 L191.6,834.9 L192.6,813.0 L191.8,791.2 Z" fill="#dc8444" opacity="0.29"/><path d="M211.1,791.2 L213.5,813.0 L213.2,834.9 L211.2,856.7 L210.3,878.6 L210.7,900.4 L219.8,900.4 L219.4,878.6 L220.3,856.7 L222.2,834.9 L222.6,813.0 L220.1,791.2 Z" fill="#a84818" opacity="0.44"/><path d="M152.3,791.2 L154.8,813.0 L151.9,834.9 L154.8,856.7 L153.3,878.6 L151.7,900.4 L163.4,900.4 L165.1,878.6 L166.6,856.7 L163.6,834.9 L166.6,813.0 L164.0,791.2 Z" fill="#dc8444" opacity="0.26"/><path d="M226.9,791.2 L227.6,813.0 L227.1,834.9 L228.1,856.7 L224.6,878.6 L224.4,900.4 L237.8,900.4 L238.0,878.6 L241.5,856.7 L240.6,834.9 L241.0,813.0 L240.4,791.2 Z" fill="#a84818" opacity="0.26"/><path d="M239.2,791.2 L236.2,813.0 L239.1,834.9 L239.1,856.7 L238.7,878.6 L238.0,900.4 L241.8,900.4 L242.5,878.6 L242.9,856.7 L242.9,834.9 L240.1,813.0 L243.0,791.2 Z" fill="#dc8444" opacity="0.44"/><path d="M241.8,791.2 L240.3,813.0 L242.0,834.9 L241.0,856.7 L242.3,878.6 L240.5,900.4 L242.6,900.4 L244.3,878.6 L243.1,856.7 L244.1,834.9 L242.3,813.0 L243.9,791.2 Z" fill="#b04c1a" opacity="0.42"/><path d="M227.3,791.2 L227.5,813.0 L226.2,834.9 L227.5,856.7 L227.7,878.6 L228.8,900.4 L236.2,900.4 L235.1,878.6 L234.9,856.7 L233.6,834.9 L234.9,813.0 L234.7,791.2 Z" fill="#dc8444" opacity="0.38"/><path d="M211.1,791.2 L212.6,813.0 L213.0,834.9 L211.2,856.7 L213.7,878.6 L212.3,900.4 L220.9,900.4 L222.3,878.6 L219.8,856.7 L221.6,834.9 L221.2,813.0 L219.7,791.2 Z" fill="#a44416" opacity="0.21"/><path d="M162.4,791.2 L161.7,813.0 L163.4,834.9 L163.4,856.7 L162.5,878.6 L162.9,900.4 L165.8,900.4 L165.5,878.6 L166.3,856.7 L166.3,834.9 L164.6,813.0 L165.3,791.2 Z" fill="#dc8444" opacity="0.41"/><path d="M473.9,791.2 L472.9,813.0 L475.4,834.9 L475.3,856.7 L474.4,878.6 L474.8,900.4 L483.8,900.4 L483.4,878.6 L484.3,856.7 L484.4,834.9 L481.9,813.0 L482.9,791.2 Z" fill="#dc8444" opacity="0.22"/><path d="M381.4,791.2 L382.9,813.0 L381.9,834.9 L380.1,856.7 L380.2,878.6 L380.2,900.4 L386.3,900.4 L386.3,878.6 L386.2,856.7 L388.0,834.9 L389.0,813.0 L387.5,791.2 Z" fill="#b04c1a" opacity="0.29"/><path d="M413.0,791.2 L412.1,813.0 L413.6,834.9 L413.2,856.7 L413.3,878.6 L412.1,900.4 L417.6,900.4 L418.8,878.6 L418.6,856.7 L419.1,834.9 L417.6,813.0 L418.5,791.2 Z" fill="#a44416" opacity="0.38"/><path d="M445.6,791.2 L447.2,813.0 L445.4,834.9 L444.2,856.7 L447.6,878.6 L445.1,900.4 L455.7,900.4 L458.2,878.6 L454.8,856.7 L456.0,834.9 L457.8,813.0 L456.2,791.2 Z" fill="#a84818" opacity="0.36"/><path d="M426.5,791.2 L423.9,813.0 L424.5,834.9 L425.4,856.7 L425.4,878.6 L424.3,900.4 L426.6,900.4 L427.7,878.6 L427.8,856.7 L426.8,834.9 L426.2,813.0 L428.8,791.2 Z" fill="#a84818" opacity="0.35"/><path d="M473.4,791.2 L473.1,813.0 L470.9,834.9 L472.5,856.7 L472.9,878.6 L470.2,900.4 L476.8,900.4 L479.5,878.6 L479.1,856.7 L477.6,834.9 L479.8,813.0 L480.0,791.2 Z" fill="#a44416" opacity="0.40"/><path d="M369.6,791.2 L371.7,813.0 L369.0,834.9 L368.6,856.7 L369.7,878.6 L367.8,900.4 L379.9,900.4 L381.9,878.6 L380.8,856.7 L381.2,834.9 L383.8,813.0 L381.8,791.2 Z" fill="#a44416" opacity="0.25"/><path d="M412.8,791.2 L411.9,813.0 L415.6,834.9 L412.9,856.7 L414.1,878.6 L413.3,900.4 L418.4,900.4 L419.2,878.6 L418.0,856.7 L420.7,834.9 L417.0,813.0 L417.9,791.2 Z" fill="#d87a3a" opacity="0.34"/><path d="M472.8,791.2 L475.0,813.0 L471.8,834.9 L473.4,856.7 L475.5,878.6 L472.8,900.4 L486.1,900.4 L488.9,878.6 L486.8,856.7 L485.2,834.9 L488.4,813.0 L486.1,791.2 Z" fill="#dc8444" opacity="0.29"/><path d="M434.2,791.2 L431.9,813.0 L435.2,834.9 L431.8,856.7 L434.3,878.6 L432.9,900.4 L437.8,900.4 L439.2,878.6 L436.7,856.7 L440.1,834.9 L436.8,813.0 L439.0,791.2 Z" fill="#dc8444" opacity="0.24"/><path d="M375.8,791.2 L375.0,813.0 L374.7,834.9 L376.9,856.7 L377.2,878.6 L377.7,900.4 L391.7,900.4 L391.2,878.6 L390.8,856.7 L388.7,834.9 L388.9,813.0 L389.8,791.2 Z" fill="#a84818" opacity="0.29"/><path d="M460.3,791.2 L460.9,813.0 L462.1,834.9 L459.5,856.7 L462.1,878.6 L458.8,900.4 L466.5,900.4 L469.8,878.6 L467.2,856.7 L469.8,834.9 L468.6,813.0 L468.0,791.2 Z" fill="#d87a3a" opacity="0.33"/><path d="M432.1,791.2 L432.4,813.0 L434.1,834.9 L431.9,856.7 L431.5,878.6 L433.5,900.4 L437.2,900.4 L435.3,878.6 L435.7,856.7 L437.9,834.9 L436.1,813.0 L435.9,791.2 Z" fill="#a84818" opacity="0.41"/><path d="M430.5,791.2 L430.8,813.0 L430.8,834.9 L428.0,856.7 L427.3,878.6 L430.3,900.4 L433.9,900.4 L430.9,878.6 L431.5,856.7 L434.4,834.9 L434.3,813.0 L434.1,791.2 Z" fill="#a84818" opacity="0.35"/><path d="M626.2,791.2 L626.1,813.0 L625.6,834.9 L626.9,856.7 L628.9,878.6 L627.7,900.4 L629.9,900.4 L631.1,878.6 L629.2,856.7 L627.8,834.9 L628.3,813.0 L628.4,791.2 Z" fill="#a84818" opacity="0.26"/><path d="M613.7,791.2 L611.1,813.0 L611.1,834.9 L611.7,856.7 L610.4,878.6 L611.4,900.4 L614.6,900.4 L613.6,878.6 L614.9,856.7 L614.2,834.9 L614.3,813.0 L616.9,791.2 Z" fill="#dc8444" opacity="0.38"/><path d="M622.6,791.2 L623.2,813.0 L620.9,834.9 L622.7,856.7 L622.5,878.6 L620.8,900.4 L632.4,900.4 L634.0,878.6 L634.3,856.7 L632.4,834.9 L634.8,813.0 L634.2,791.2 Z" fill="#b04c1a" opacity="0.26"/><path d="M676.8,791.2 L677.4,813.0 L676.3,834.9 L676.3,856.7 L677.1,878.6 L676.8,900.4 L689.1,900.4 L689.4,878.6 L688.5,856.7 L688.5,834.9 L689.7,813.0 L689.1,791.2 Z" fill="#a44416" opacity="0.31"/><path d="M605.1,791.2 L607.2,813.0 L608.3,834.9 L605.4,856.7 L606.2,878.6 L607.1,900.4 L614.7,900.4 L613.8,878.6 L613.0,856.7 L615.9,834.9 L614.7,813.0 L612.7,791.2 Z" fill="#dc8444" opacity="0.40"/><path d="M612.6,791.2 L612.5,813.0 L612.7,834.9 L613.7,856.7 L611.1,878.6 L611.5,900.4 L618.8,900.4 L618.5,878.6 L621.0,856.7 L620.0,834.9 L619.9,813.0 L619.9,791.2 Z" fill="#a84818" opacity="0.41"/><path d="M623.2,791.2 L624.3,813.0 L623.8,834.9 L625.0,856.7 L624.0,878.6 L621.3,900.4 L624.2,900.4 L626.8,878.6 L627.9,856.7 L626.7,834.9 L627.1,813.0 L626.1,791.2 Z" fill="#a44416" opacity="0.22"/><path d="M591.6,791.2 L591.4,813.0 L588.2,834.9 L590.7,856.7 L589.1,878.6 L589.0,900.4 L596.2,900.4 L596.2,878.6 L597.9,856.7 L595.4,834.9 L598.6,813.0 L598.8,791.2 Z" fill="#a44416" opacity="0.25"/><path d="M658.5,791.2 L661.3,813.0 L661.4,834.9 L661.5,856.7 L660.6,878.6 L661.0,900.4 L665.4,900.4 L665.0,878.6 L665.8,856.7 L665.7,834.9 L665.6,813.0 L662.8,791.2 Z" fill="#d87a3a" opacity="0.21"/><path d="M659.7,791.2 L663.4,813.0 L663.5,834.9 L662.9,856.7 L662.5,878.6 L661.0,900.4 L663.2,900.4 L664.7,878.6 L665.1,856.7 L665.6,834.9 L665.6,813.0 L661.8,791.2 Z" fill="#a44416" opacity="0.41"/><path d="M588.2,791.2 L586.0,813.0 L585.5,834.9 L588.7,856.7 L588.1,878.6 L587.9,900.4 L597.5,900.4 L597.7,878.6 L598.3,856.7 L595.1,834.9 L595.6,813.0 L597.8,791.2 Z" fill="#dc8444" opacity="0.28"/><path d="M615.9,791.2 L615.2,813.0 L617.6,834.9 L614.1,856.7 L617.1,878.6 L614.3,900.4 L627.3,900.4 L630.1,878.6 L627.1,856.7 L630.6,834.9 L628.2,813.0 L628.9,791.2 Z" fill="#dc8444" opacity="0.31"/><path d="M676.4,791.2 L675.1,813.0 L676.6,834.9 L673.6,856.7 L676.8,878.6 L674.3,900.4 L682.6,900.4 L685.0,878.6 L681.9,856.7 L684.9,834.9 L683.4,813.0 L684.7,791.2 Z" fill="#a44416" opacity="0.30"/><path d="M687.5,791.2 L685.3,813.0 L684.6,834.9 L686.5,856.7 L686.1,878.6 L686.5,900.4 L694.8,900.4 L694.5,878.6 L694.8,856.7 L693.0,834.9 L693.7,813.0 L695.9,791.2 Z" fill="#dc8444" opacity="0.33"/><path d="M883.5,791.2 L885.1,813.0 L884.3,834.9 L884.9,856.7 L885.0,878.6 L881.5,900.4 L895.1,900.4 L898.6,878.6 L898.5,856.7 L897.9,834.9 L898.7,813.0 L897.1,791.2 Z" fill="#dc8444" opacity="0.39"/><path d="M829.3,791.2 L831.2,813.0 L829.1,834.9 L830.4,856.7 L829.7,878.6 L831.0,900.4 L836.9,900.4 L835.6,878.6 L836.3,856.7 L835.0,834.9 L837.1,813.0 L835.2,791.2 Z" fill="#d87a3a" opacity="0.25"/><path d="M838.0,791.2 L838.3,813.0 L839.6,834.9 L839.4,856.7 L840.2,878.6 L837.9,900.4 L839.9,900.4 L842.3,878.6 L841.5,856.7 L841.7,834.9 L840.4,813.0 L840.1,791.2 Z" fill="#b04c1a" opacity="0.41"/><path d="M889.8,791.2 L887.6,813.0 L886.5,834.9 L886.5,856.7 L888.3,878.6 L888.0,900.4 L896.9,900.4 L897.1,878.6 L895.4,856.7 L895.3,834.9 L896.5,813.0 L898.7,791.2 Z" fill="#a84818" opacity="0.42"/><path d="M812.7,791.2 L814.8,813.0 L815.2,834.9 L814.4,856.7 L812.8,878.6 L814.2,900.4 L824.5,900.4 L823.1,878.6 L824.7,856.7 L825.5,834.9 L825.1,813.0 L823.0,791.2 Z" fill="#a44416" opacity="0.30"/><path d="M835.1,791.2 L836.3,813.0 L833.3,834.9 L833.7,856.7 L834.7,878.6 L832.9,900.4 L836.6,900.4 L838.4,878.6 L837.5,856.7 L837.1,834.9 L840.1,813.0 L838.9,791.2 Z" fill="#d87a3a" opacity="0.28"/><path d="M866.2,791.2 L865.9,813.0 L866.7,834.9 L865.8,856.7 L866.2,878.6 L866.5,900.4 L874.3,900.4 L874.0,878.6 L873.6,856.7 L874.5,834.9 L873.7,813.0 L874.0,791.2 Z" fill="#dc8444" opacity="0.34"/><path d="M888.2,791.2 L887.9,813.0 L888.7,834.9 L885.9,856.7 L885.9,878.6 L887.5,900.4 L890.4,900.4 L888.8,878.6 L888.8,856.7 L891.6,834.9 L890.7,813.0 L891.1,791.2 Z" fill="#b04c1a" opacity="0.29"/><path d="M898.2,791.2 L898.9,813.0 L896.0,834.9 L896.5,856.7 L896.8,878.6 L896.0,900.4 L903.8,900.4 L904.6,878.6 L904.3,856.7 L903.8,834.9 L906.7,813.0 L906.0,791.2 Z" fill="#d87a3a" opacity="0.33"/><path d="M839.7,791.2 L837.5,813.0 L839.0,834.9 L839.8,856.7 L840.5,878.6 L839.1,900.4 L848.2,900.4 L849.6,878.6 L848.9,856.7 L848.2,834.9 L846.6,813.0 L848.9,791.2 Z" fill="#a44416" opacity="0.23"/><path d="M909.6,791.2 L910.3,813.0 L911.8,834.9 L910.3,856.7 L912.0,878.6 L912.8,900.4 L920.3,900.4 L919.4,878.6 L917.8,856.7 L919.2,834.9 L917.8,813.0 L917.0,791.2 Z" fill="#a44416" opacity="0.33"/><path d="M880.5,791.2 L880.7,813.0 L877.3,834.9 L880.1,856.7 L877.7,878.6 L878.4,900.4 L882.8,900.4 L882.1,878.6 L884.5,856.7 L881.7,834.9 L885.0,813.0 L884.8,791.2 Z" fill="#dc8444" opacity="0.25"/><path d="M901.2,791.2 L900.9,813.0 L901.7,834.9 L900.6,856.7 L901.8,878.6 L901.1,900.4 L912.9,900.4 L913.6,878.6 L912.4,856.7 L913.6,834.9 L912.7,813.0 L913.1,791.2 Z" fill="#a84818" opacity="0.30"/><path d="M850.9,791.2 L851.5,813.0 L853.0,834.9 L853.0,856.7 L852.5,878.6 L853.8,900.4 L862.2,900.4 L860.9,878.6 L861.3,856.7 L861.3,834.9 L859.9,813.0 L859.3,791.2 Z" fill="#b04c1a" opacity="0.39"/><path d="M62.3,900.4 L62.2,922.2 L63.0,944.1 L63.3,965.9 L64.2,987.8 L62.7,1009.6 L71.1,1009.6 L72.6,987.8 L71.7,965.9 L71.4,944.1 L70.6,922.2 L70.7,900.4 Z" fill="#b04c1a" opacity="0.37"/><path d="M149.2,900.4 L151.8,922.2 L151.4,944.1 L153.0,965.9 L152.1,987.8 L149.5,1009.6 L152.3,1009.6 L154.9,987.8 L155.7,965.9 L154.2,944.1 L154.6,922.2 L152.0,900.4 Z" fill="#dc8444" opacity="0.29"/><path d="M145.8,900.4 L147.2,922.2 L146.6,944.1 L146.5,965.9 L148.3,987.8 L147.1,1009.6 L154.1,1009.6 L155.3,987.8 L153.6,965.9 L153.6,944.1 L154.3,922.2 L152.8,900.4 Z" fill="#d87a3a" opacity="0.24"/><path d="M119.2,900.4 L118.4,922.2 L116.2,944.1 L117.6,965.9 L117.1,987.8 L116.3,1009.6 L129.2,1009.6 L130.0,987.8 L130.5,965.9 L129.1,944.1 L131.3,922.2 L132.1,900.4 Z" fill="#a44416" opacity="0.40"/><path d="M65.9,900.4 L64.4,922.2 L63.8,944.1 L64.0,965.9 L66.6,987.8 L64.5,1009.6 L75.0,1009.6 L77.1,987.8 L74.5,965.9 L74.3,944.1 L74.9,922.2 L76.4,900.4 Z" fill="#a84818" opacity="0.38"/><path d="M120.4,900.4 L120.0,922.2 L118.7,944.1 L120.5,965.9 L120.7,987.8 L119.8,1009.6 L132.2,1009.6 L133.1,987.8 L132.8,965.9 L131.1,944.1 L132.4,922.2 L132.8,900.4 Z" fill="#a44416" opacity="0.23"/><path d="M94.5,900.4 L96.7,922.2 L94.7,944.1 L93.9,965.9 L94.1,987.8 L95.2,1009.6 L98.1,1009.6 L97.0,987.8 L96.7,965.9 L97.5,944.1 L99.5,922.2 L97.4,900.4 Z" fill="#b04c1a" opacity="0.31"/><path d="M110.1,900.4 L110.4,922.2 L110.3,944.1 L112.0,965.9 L111.0,987.8 L112.2,1009.6 L115.2,1009.6 L114.0,987.8 L115.0,965.9 L113.3,944.1 L113.4,922.2 L113.1,900.4 Z" fill="#d87a3a" opacity="0.20"/><path d="M53.6,900.4 L54.0,922.2 L53.2,944.1 L54.9,965.9 L55.0,987.8 L54.7,1009.6 L59.2,1009.6 L59.5,987.8 L59.4,965.9 L57.6,944.1 L58.4,922.2 L58.0,900.4 Z" fill="#d87a3a" opacity="0.21"/><path d="M106.5,900.4 L105.3,922.2 L109.0,944.1 L107.3,965.9 L107.5,987.8 L105.5,1009.6 L117.5,1009.6 L119.6,987.8 L119.4,965.9 L121.1,944.1 L117.4,922.2 L118.6,900.4 Z" fill="#b04c1a" opacity="0.39"/><path d="M81.7,900.4 L82.2,922.2 L81.0,944.1 L82.2,965.9 L81.1,987.8 L82.1,1009.6 L91.8,1009.6 L90.8,987.8 L92.0,965.9 L90.7,944.1 L91.9,922.2 L91.4,900.4 Z" fill="#d87a3a" opacity="0.24"/><path d="M124.2,900.4 L125.8,922.2 L126.3,944.1 L124.3,965.9 L125.1,987.8 L123.3,1009.6 L131.9,1009.6 L133.6,987.8 L132.9,965.9 L134.9,944.1 L134.4,922.2 L132.8,900.4 Z" fill="#b04c1a" opacity="0.22"/><path d="M128.2,900.4 L126.9,922.2 L128.6,944.1 L126.9,965.9 L126.0,987.8 L125.6,1009.6 L128.8,1009.6 L129.2,987.8 L130.1,965.9 L131.8,944.1 L130.1,922.2 L131.4,900.4 Z" fill="#a84818" opacity="0.32"/><path d="M45.5,900.4 L46.6,922.2 L43.8,944.1 L45.1,965.9 L45.1,987.8 L43.6,1009.6 L47.6,1009.6 L49.0,987.8 L49.1,965.9 L47.8,944.1 L50.6,922.2 L49.5,900.4 Z" fill="#b04c1a" opacity="0.27"/><path d="M364.6,900.4 L362.3,922.2 L361.6,944.1 L362.3,965.9 L364.6,987.8 L362.2,1009.6 L372.9,1009.6 L375.3,987.8 L373.0,965.9 L372.3,944.1 L373.0,922.2 L375.2,900.4 Z" fill="#dc8444" opacity="0.36"/><path d="M362.1,900.4 L362.4,922.2 L361.9,944.1 L361.9,965.9 L360.6,987.8 L362.9,1009.6 L372.7,1009.6 L370.4,987.8 L371.7,965.9 L371.6,944.1 L372.1,922.2 L371.8,900.4 Z" fill="#dc8444" opacity="0.33"/><path d="M294.9,900.4 L295.1,922.2 L291.5,944.1 L292.7,965.9 L293.0,987.8 L292.2,1009.6 L304.2,1009.6 L305.0,987.8 L304.7,965.9 L303.5,944.1 L307.1,922.2 L306.9,900.4 Z" fill="#a44416" opacity="0.39"/><path d="M363.1,900.4 L360.1,922.2 L362.7,944.1 L359.9,965.9 L360.5,987.8 L360.5,1009.6 L364.2,1009.6 L364.2,987.8 L363.6,965.9 L366.4,944.1 L363.8,922.2 L366.8,900.4 Z" fill="#dc8444" opacity="0.29"/><path d="M276.7,900.4 L279.1,922.2 L277.0,944.1 L279.6,965.9 L278.3,987.8 L280.3,1009.6 L284.2,1009.6 L282.2,987.8 L283.5,965.9 L280.8,944.1 L282.9,922.2 L280.5,900.4 Z" fill="#a84818" opacity="0.26"/><path d="M357.4,900.4 L358.7,922.2 L359.2,944.1 L360.0,965.9 L358.2,987.8 L356.5,1009.6 L361.2,1009.6 L362.9,987.8 L364.7,965.9 L363.9,944.1 L363.4,922.2 L362.1,900.4 Z" fill="#a44416" opacity="0.37"/><path d="M349.9,900.4 L351.9,922.2 L351.3,944.1 L350.8,965.9 L352.9,987.8 L352.3,1009.6 L355.8,1009.6 L356.4,987.8 L354.3,965.9 L354.8,944.1 L355.4,922.2 L353.4,900.4 Z" fill="#dc8444" opacity="0.23"/><path d="M270.4,900.4 L270.2,922.2 L268.2,944.1 L269.3,965.9 L269.4,987.8 L270.5,1009.6 L273.2,1009.6 L272.1,987.8 L272.0,965.9 L270.8,944.1 L272.9,922.2 L273.0,900.4 Z" fill="#d87a3a" opacity="0.40"/><path d="M352.3,900.4 L350.4,922.2 L350.8,944.1 L350.5,965.9 L352.4,987.8 L352.4,1009.6 L365.9,1009.6 L365.9,987.8 L363.9,965.9 L364.3,944.1 L363.9,922.2 L365.8,900.4 Z" fill="#b04c1a" opacity="0.41"/><path d="M258.1,900.4 L258.1,922.2 L260.5,944.1 L257.5,965.9 L260.2,987.8 L260.7,1009.6 L262.8,1009.6 L262.4,987.8 L259.6,965.9 L262.7,944.1 L260.2,922.2 L260.2,900.4 Z" fill="#b04c1a" opacity="0.34"/><path d="M326.2,900.4 L327.1,922.2 L327.4,944.1 L325.5,965.9 L325.8,987.8 L326.1,1009.6 L328.2,1009.6 L327.9,987.8 L327.6,965.9 L329.5,944.1 L329.1,922.2 L328.2,900.4 Z" fill="#dc8444" opacity="0.21"/><path d="M342.6,900.4 L341.9,922.2 L344.3,944.1 L342.8,965.9 L341.4,987.8 L342.7,1009.6 L348.2,1009.6 L346.9,987.8 L348.3,965.9 L349.8,944.1 L347.4,922.2 L348.1,900.4 Z" fill="#a84818" opacity="0.41"/><path d="M299.5,900.4 L300.4,922.2 L299.7,944.1 L298.2,965.9 L301.3,987.8 L300.3,1009.6 L307.5,1009.6 L308.6,987.8 L305.4,965.9 L306.9,944.1 L307.6,922.2 L306.7,900.4 Z" fill="#dc8444" opacity="0.20"/><path d="M274.3,900.4 L275.5,922.2 L276.4,944.1 L274.9,965.9 L275.6,987.8 L274.2,1009.6 L286.7,1009.6 L288.0,987.8 L287.4,965.9 L288.8,944.1 L287.9,922.2 L286.8,900.4 Z" fill="#d87a3a" opacity="0.26"/><path d="M534.1,900.4 L535.8,922.2 L533.5,944.1 L533.9,965.9 L533.1,987.8 L533.8,1009.6 L542.1,1009.6 L541.5,987.8 L542.3,965.9 L541.9,944.1 L544.2,922.2 L542.5,900.4 Z" fill="#b04c1a" opacity="0.37"/><path d="M519.2,900.4 L516.8,922.2 L520.1,944.1 L519.4,965.9 L518.0,987.8 L518.5,1009.6 L524.2,1009.6 L523.8,987.8 L525.1,965.9 L525.8,944.1 L522.5,922.2 L524.9,900.4 Z" fill="#dc8444" opacity="0.37"/><path d="M495.3,900.4 L494.9,922.2 L493.0,944.1 L493.5,965.9 L493.6,987.8 L492.7,1009.6 L499.1,1009.6 L500.0,987.8 L499.8,965.9 L499.4,944.1 L501.3,922.2 L501.7,900.4 Z" fill="#a44416" opacity="0.36"/><path d="M542.5,900.4 L541.4,922.2 L539.8,944.1 L541.1,965.9 L539.8,987.8 L539.9,1009.6 L553.0,1009.6 L552.9,987.8 L554.2,965.9 L552.9,944.1 L554.5,922.2 L555.6,900.4 Z" fill="#dc8444" opacity="0.44"/><path d="M519.5,900.4 L519.3,922.2 L521.4,944.1 L520.6,965.9 L520.2,987.8 L519.8,1009.6 L525.7,1009.6 L526.1,987.8 L526.5,965.9 L527.2,944.1 L525.1,922.2 L525.4,900.4 Z" fill="#b04c1a" opacity="0.30"/><path d="M519.6,900.4 L519.0,922.2 L517.1,944.1 L518.8,965.9 L520.3,987.8 L519.4,1009.6 L525.9,1009.6 L526.9,987.8 L525.3,965.9 L523.7,944.1 L525.5,922.2 L526.1,900.4 Z" fill="#a44416" opacity="0.21"/><path d="M491.6,900.4 L489.3,922.2 L491.9,944.1 L492.5,965.9 L492.2,987.8 L492.4,1009.6 L505.2,1009.6 L505.0,987.8 L505.4,965.9 L504.7,944.1 L502.1,922.2 L504.5,900.4 Z" fill="#dc8444" opacity="0.44"/><path d="M506.3,900.4 L505.6,922.2 L508.4,944.1 L507.8,965.9 L505.0,987.8 L505.2,1009.6 L518.8,1009.6 L518.5,987.8 L521.3,965.9 L522.0,944.1 L519.1,922.2 L519.9,900.4 Z" fill="#a84818" opacity="0.34"/><path d="M585.7,900.4 L584.6,922.2 L586.3,944.1 L586.9,965.9 L586.8,987.8 L586.1,1009.6 L595.5,1009.6 L596.2,987.8 L596.3,965.9 L595.7,944.1 L594.0,922.2 L595.1,900.4 Z" fill="#a44416" opacity="0.42"/><path d="M574.4,900.4 L571.7,922.2 L574.8,944.1 L573.5,965.9 L575.1,987.8 L573.3,1009.6 L577.9,1009.6 L579.7,987.8 L578.1,965.9 L579.4,944.1 L576.2,922.2 L579.0,900.4 Z" fill="#b04c1a" opacity="0.22"/><path d="M557.6,900.4 L555.3,922.2 L556.9,944.1 L555.7,965.9 L555.9,987.8 L555.6,1009.6 L559.7,1009.6 L560.0,987.8 L559.8,965.9 L560.9,944.1 L559.4,922.2 L561.7,900.4 Z" fill="#dc8444" opacity="0.34"/><path d="M580.1,900.4 L579.8,922.2 L581.1,944.1 L581.8,965.9 L579.5,987.8 L580.3,1009.6 L586.0,1009.6 L585.2,987.8 L587.5,965.9 L586.8,944.1 L585.5,922.2 L585.8,900.4 Z" fill="#dc8444" opacity="0.44"/><path d="M505.2,900.4 L505.2,922.2 L505.4,944.1 L508.8,965.9 L506.1,987.8 L508.8,1009.6 L520.1,1009.6 L517.4,987.8 L520.1,965.9 L516.7,944.1 L516.4,922.2 L516.5,900.4 Z" fill="#d87a3a" opacity="0.44"/><path d="M525.3,900.4 L524.0,922.2 L526.0,944.1 L523.7,965.9 L524.5,987.8 L526.6,1009.6 L538.2,1009.6 L536.1,987.8 L535.4,965.9 L537.6,944.1 L535.6,922.2 L536.9,900.4 Z" fill="#b04c1a" opacity="0.34"/><path d="M751.6,900.4 L754.9,922.2 L753.7,944.1 L753.8,965.9 L752.6,987.8 L752.1,1009.6 L762.6,1009.6 L763.1,987.8 L764.3,965.9 L764.2,944.1 L765.4,922.2 L762.1,900.4 Z" fill="#a84818" opacity="0.33"/><path d="M704.3,900.4 L702.1,922.2 L704.1,944.1 L703.5,965.9 L703.3,987.8 L703.9,1009.6 L710.3,1009.6 L709.8,987.8 L710.0,965.9 L710.6,944.1 L708.5,922.2 L710.8,900.4 Z" fill="#a84818" opacity="0.27"/><path d="M789.0,900.4 L789.6,922.2 L789.4,944.1 L788.3,965.9 L791.5,987.8 L790.7,1009.6 L799.2,1009.6 L800.0,987.8 L796.8,965.9 L797.9,944.1 L798.1,922.2 L797.5,900.4 Z" fill="#b04c1a" opacity="0.32"/><path d="M755.2,900.4 L755.3,922.2 L755.6,944.1 L755.2,965.9 L757.7,987.8 L758.3,1009.6 L770.9,1009.6 L770.2,987.8 L767.8,965.9 L768.1,944.1 L767.8,922.2 L767.7,900.4 Z" fill="#a44416" opacity="0.40"/><path d="M703.3,900.4 L703.5,922.2 L700.8,944.1 L701.7,965.9 L700.1,987.8 L701.1,1009.6 L703.4,1009.6 L702.4,987.8 L704.0,965.9 L703.0,944.1 L705.8,922.2 L705.5,900.4 Z" fill="#dc8444" opacity="0.22"/><path d="M751.4,900.4 L751.1,922.2 L753.7,944.1 L750.2,965.9 L753.4,987.8 L753.4,1009.6 L766.9,1009.6 L766.8,987.8 L763.7,965.9 L767.2,944.1 L764.6,922.2 L764.9,900.4 Z" fill="#b04c1a" opacity="0.22"/><path d="M805.3,900.4 L802.6,922.2 L802.8,944.1 L804.5,965.9 L802.8,987.8 L803.5,1009.6 L813.2,1009.6 L812.5,987.8 L814.2,965.9 L812.5,944.1 L812.3,922.2 L815.0,900.4 Z" fill="#a84818" opacity="0.25"/><path d="M782.9,900.4 L782.9,922.2 L786.2,944.1 L784.0,965.9 L784.5,987.8 L786.5,1009.6 L795.1,1009.6 L793.1,987.8 L792.7,965.9 L794.8,944.1 L791.5,922.2 L791.5,900.4 Z" fill="#dc8444" opacity="0.25"/><path d="M767.3,900.4 L767.3,922.2 L765.8,944.1 L768.7,965.9 L766.7,987.8 L768.9,1009.6 L771.7,1009.6 L769.4,987.8 L771.4,965.9 L768.5,944.1 L770.0,922.2 L770.0,900.4 Z" fill="#dc8444" opacity="0.23"/><path d="M736.4,900.4 L736.3,922.2 L735.6,944.1 L735.8,965.9 L733.8,987.8 L734.5,1009.6 L738.7,1009.6 L738.1,987.8 L740.0,965.9 L739.9,944.1 L740.6,922.2 L740.7,900.4 Z" fill="#a84818" opacity="0.28"/><path d="M792.7,900.4 L792.9,922.2 L791.0,944.1 L792.6,965.9 L793.7,987.8 L793.1,1009.6 L804.5,1009.6 L805.1,987.8 L804.0,965.9 L802.4,944.1 L804.3,922.2 L804.1,900.4 Z" fill="#d87a3a" opacity="0.24"/><path d="M808.2,900.4 L808.6,922.2 L807.8,944.1 L807.9,965.9 L809.9,987.8 L807.1,1009.6 L813.5,1009.6 L816.2,987.8 L814.3,965.9 L814.2,944.1 L814.9,922.2 L814.5,900.4 Z" fill="#a44416" opacity="0.33"/><path d="M749.5,900.4 L747.7,922.2 L749.0,944.1 L747.5,965.9 L749.0,987.8 L751.0,1009.6 L754.7,1009.6 L752.7,987.8 L751.2,965.9 L752.7,944.1 L751.4,922.2 L753.2,900.4 Z" fill="#b04c1a" opacity="0.41"/><path d="M773.7,900.4 L774.2,922.2 L774.8,944.1 L776.2,965.9 L774.9,987.8 L774.8,1009.6 L788.6,1009.6 L788.6,987.8 L789.9,965.9 L788.6,944.1 L787.9,922.2 L787.5,900.4 Z" fill="#dc8444" opacity="0.30"/></g></g>
<clipPath id="ltc"><rect x="44.50" y="136.00" width="109.60" height="109.60"/><rect x="262.90" y="136.00" width="109.60" height="109.60"/><rect x="481.30" y="136.00" width="109.60" height="109.60"/><rect x="699.70" y="136.00" width="109.60" height="109.60"/><rect x="153.70" y="245.20" width="109.60" height="109.60"/><rect x="372.10" y="245.20" width="109.60" height="109.60"/><rect x="590.50" y="245.20" width="109.60" height="109.60"/><rect x="808.90" y="245.20" width="109.60" height="109.60"/><rect x="44.50" y="354.40" width="109.60" height="109.60"/><rect x="262.90" y="354.40" width="109.60" height="109.60"/><rect x="481.30" y="354.40" width="109.60" height="109.60"/><rect x="699.70" y="354.40" width="109.60" height="109.60"/><rect x="153.70" y="463.60" width="109.60" height="109.60"/><rect x="372.10" y="463.60" width="109.60" height="109.60"/><rect x="590.50" y="463.60" width="109.60" height="109.60"/><rect x="808.90" y="463.60" width="109.60" height="109.60"/><rect x="44.50" y="572.80" width="109.60" height="109.60"/><rect x="262.90" y="572.80" width="109.60" height="109.60"/><rect x="481.30" y="572.80" width="109.60" height="109.60"/><rect x="699.70" y="572.80" width="109.60" height="109.60"/><rect x="153.70" y="682.00" width="109.60" height="109.60"/><rect x="372.10" y="682.00" width="109.60" height="109.60"/><rect x="590.50" y="682.00" width="109.60" height="109.60"/><rect x="808.90" y="682.00" width="109.60" height="109.60"/><rect x="44.50" y="791.20" width="109.60" height="109.60"/><rect x="262.90" y="791.20" width="109.60" height="109.60"/><rect x="481.30" y="791.20" width="109.60" height="109.60"/><rect x="699.70" y="791.20" width="109.60" height="109.60"/><rect x="153.70" y="900.40" width="109.60" height="109.60"/><rect x="372.10" y="900.40" width="109.60" height="109.60"/><rect x="590.50" y="900.40" width="109.60" height="109.60"/><rect x="808.90" y="900.40" width="109.60" height="109.60"/></clipPath>
<g clip-path="url(#ltc)"><g filter="url(#bl2)"><path d="M39.5,146.0 L50.3,138.3 L61.2,136.5 L72.0,132.0 L82.8,132.3 L93.7,129.1 L104.5,129.7 L115.4,129.6 L126.2,130.4 L137.0,128.4 L147.9,127.5 L158.7,122.8" fill="none" stroke="#f9efdf" stroke-width="2.3" opacity="0.26"/><path d="M39.5,221.0 L50.3,213.1 L61.2,207.1 L72.0,203.5 L82.8,200.1 L93.7,199.9 L104.5,201.2 L115.4,201.6 L126.2,200.4 L137.0,202.9 L147.9,201.4 L158.7,198.5" fill="none" stroke="#dcc49e" stroke-width="1.9" opacity="0.37"/><path d="M39.5,220.4 L50.3,213.4 L61.2,208.0 L72.0,203.0 L82.8,198.6 L93.7,195.5 L104.5,196.7 L115.4,200.2 L126.2,199.4 L137.0,201.3 L147.9,198.5 L158.7,198.8" fill="none" stroke="#dcc49e" stroke-width="2.3" opacity="0.45"/><path d="M39.5,286.1 L50.3,283.7 L61.2,274.9 L72.0,269.4 L82.8,266.8 L93.7,261.7 L104.5,259.4 L115.4,261.0 L126.2,264.2 L137.0,263.0 L147.9,264.4 L158.7,263.0" fill="none" stroke="#dcc49e" stroke-width="3.0" opacity="0.31"/><path d="M39.5,194.7 L50.3,188.8 L61.2,186.2 L72.0,180.0 L82.8,177.4 L93.7,172.7 L104.5,173.1 L115.4,172.2 L126.2,175.3 L137.0,173.4 L147.9,174.7 L158.7,172.4" fill="none" stroke="#dcc49e" stroke-width="1.6" opacity="0.24"/><path d="M39.5,270.0 L50.3,265.2 L61.2,259.9 L72.0,256.9 L82.8,256.9 L93.7,257.1 L104.5,259.7 L115.4,262.4 L126.2,260.4 L137.0,257.9 L147.9,255.0 L158.7,249.3" fill="none" stroke="#dcc49e" stroke-width="3.3" opacity="0.21"/><path d="M39.5,235.0 L50.3,230.6 L61.2,222.9 L72.0,223.2 L82.8,220.6 L93.7,219.5 L104.5,220.1 L115.4,221.2 L126.2,217.7 L137.0,219.1 L147.9,216.2 L158.7,210.9" fill="none" stroke="#d9bf98" stroke-width="4.0" opacity="0.33"/><path d="M39.5,185.6 L50.3,178.0 L61.2,176.5 L72.0,174.0 L82.8,171.9 L93.7,172.7 L104.5,174.3 L115.4,174.3 L126.2,173.6 L137.0,168.3 L147.9,167.8 L158.7,160.0" fill="none" stroke="#d9bf98" stroke-width="2.5" opacity="0.22"/><path d="M39.5,218.9 L50.3,215.2 L61.2,209.0 L72.0,204.3 L82.8,201.6 L93.7,197.1 L104.5,198.4 L115.4,198.1 L126.2,201.3 L137.0,201.8 L147.9,201.0 L158.7,198.0" fill="none" stroke="#dcc49e" stroke-width="2.7" opacity="0.22"/><path d="M257.9,213.5 L268.7,209.3 L279.6,206.0 L290.4,201.6 L301.2,193.6 L312.1,185.1 L322.9,182.9 L333.8,177.1 L344.6,177.7 L355.4,177.3 L366.3,174.9 L377.1,171.8" fill="none" stroke="#f9efdf" stroke-width="2.1" opacity="0.23"/><path d="M257.9,254.7 L268.7,252.5 L279.6,249.9 L290.4,242.2 L301.2,235.6 L312.1,228.9 L322.9,224.0 L333.8,222.4 L344.6,219.0 L355.4,220.8 L366.3,220.4 L377.1,216.6" fill="none" stroke="#f9efdf" stroke-width="2.7" opacity="0.29"/><path d="M257.9,232.0 L268.7,230.7 L279.6,226.5 L290.4,221.1 L301.2,212.6 L312.1,204.8 L322.9,200.2 L333.8,195.8 L344.6,196.4 L355.4,198.2 L366.3,195.2 L377.1,193.8" fill="none" stroke="#dcc49e" stroke-width="2.5" opacity="0.30"/><path d="M257.9,168.6 L268.7,169.1 L279.6,165.4 L290.4,157.9 L301.2,154.5 L312.1,144.3 L322.9,139.2 L333.8,137.2 L344.6,133.0 L355.4,132.6 L366.3,133.0 L377.1,131.0" fill="none" stroke="#d9bf98" stroke-width="2.8" opacity="0.21"/><path d="M257.9,175.3 L268.7,175.8 L279.6,170.6 L290.4,164.8 L301.2,160.3 L312.1,152.3 L322.9,148.8 L333.8,145.8 L344.6,141.5 L355.4,142.1 L366.3,139.7 L377.1,138.8" fill="none" stroke="#f9efdf" stroke-width="2.0" opacity="0.39"/><path d="M257.9,217.3 L268.7,213.1 L279.6,211.5 L290.4,205.1 L301.2,203.2 L312.1,196.5 L322.9,190.2 L333.8,187.8 L344.6,181.8 L355.4,182.3 L366.3,178.9 L377.1,179.5" fill="none" stroke="#dcc49e" stroke-width="2.7" opacity="0.33"/><path d="M257.9,235.4 L268.7,236.5 L279.6,237.6 L290.4,234.6 L301.2,225.8 L312.1,220.3 L322.9,209.1 L333.8,207.0 L344.6,201.0 L355.4,199.9 L366.3,203.4 L377.1,200.9" fill="none" stroke="#dcc49e" stroke-width="1.5" opacity="0.23"/><path d="M257.9,186.3 L268.7,187.5 L279.6,185.2 L290.4,183.9 L301.2,178.1 L312.1,168.7 L322.9,164.9 L333.8,159.2 L344.6,154.3 L355.4,152.6 L366.3,150.7 L377.1,150.6" fill="none" stroke="#d9bf98" stroke-width="3.3" opacity="0.28"/><path d="M257.9,135.6 L268.7,132.7 L279.6,131.2 L290.4,127.8 L301.2,122.9 L312.1,119.0 L322.9,112.2 L333.8,106.7 L344.6,101.7 L355.4,101.3 L366.3,97.8 L377.1,96.7" fill="none" stroke="#d9bf98" stroke-width="1.9" opacity="0.40"/><path d="M476.3,204.4 L487.1,203.7 L498.0,196.1 L508.8,193.3 L519.6,197.1 L530.5,204.9 L541.3,206.2 L552.2,200.8 L563.0,192.2 L573.8,197.3 L584.7,201.2 L595.5,207.9" fill="none" stroke="#f9efdf" stroke-width="3.1" opacity="0.23"/><path d="M476.3,197.0 L487.1,198.8 L498.0,192.4 L508.8,186.4 L519.6,191.6 L530.5,197.6 L541.3,198.2 L552.2,196.7 L563.0,191.8 L573.8,190.4 L584.7,191.5 L595.5,199.9" fill="none" stroke="#d9bf98" stroke-width="1.6" opacity="0.34"/><path d="M476.3,148.4 L487.1,148.8 L498.0,140.4 L508.8,134.5 L519.6,137.5 L530.5,145.9 L541.3,148.8 L552.2,145.7 L563.0,139.1 L573.8,138.0 L584.7,140.5 L595.5,145.8" fill="none" stroke="#dcc49e" stroke-width="3.2" opacity="0.37"/><path d="M476.3,194.7 L487.1,195.1 L498.0,191.7 L508.8,185.5 L519.6,189.3 L530.5,193.5 L541.3,196.5 L552.2,195.1 L563.0,186.7 L573.8,188.9 L584.7,193.6 L595.5,198.9" fill="none" stroke="#dcc49e" stroke-width="2.8" opacity="0.31"/><path d="M476.3,200.5 L487.1,196.5 L498.0,190.1 L508.8,189.6 L519.6,192.6 L530.5,198.1 L541.3,202.8 L552.2,196.6 L563.0,190.8 L573.8,191.4 L584.7,197.5 L595.5,202.9" fill="none" stroke="#f9efdf" stroke-width="3.8" opacity="0.38"/><path d="M476.3,120.2 L487.1,119.7 L498.0,120.1 L508.8,116.1 L519.6,113.7 L530.5,115.7 L541.3,119.1 L552.2,122.7 L563.0,116.0 L573.8,114.8 L584.7,113.9 L595.5,120.0" fill="none" stroke="#dcc49e" stroke-width="3.7" opacity="0.23"/><path d="M476.3,233.8 L487.1,233.3 L498.0,227.7 L508.8,225.8 L519.6,231.4 L530.5,232.5 L541.3,235.6 L552.2,229.4 L563.0,226.5 L573.8,227.0 L584.7,232.6 L595.5,236.4" fill="none" stroke="#f9efdf" stroke-width="1.8" opacity="0.37"/><path d="M476.3,265.4 L487.1,261.3 L498.0,255.0 L508.8,252.6 L519.6,254.7 L530.5,263.2 L541.3,263.1 L552.2,261.7 L563.0,254.1 L573.8,254.8 L584.7,258.1 L595.5,263.2" fill="none" stroke="#f9efdf" stroke-width="3.2" opacity="0.31"/><path d="M476.3,160.6 L487.1,154.7 L498.0,150.5 L508.8,151.9 L519.6,154.0 L530.5,162.0 L541.3,160.2 L552.2,154.2 L563.0,150.4 L573.8,153.3 L584.7,160.2 L595.5,160.6" fill="none" stroke="#d9bf98" stroke-width="3.0" opacity="0.41"/><path d="M694.7,264.0 L705.5,257.9 L716.4,251.0 L727.2,247.3 L738.0,246.3 L748.9,248.0 L759.7,254.7 L770.6,259.0 L781.4,265.8 L792.2,269.4 L803.1,268.0 L813.9,265.9" fill="none" stroke="#d9bf98" stroke-width="3.8" opacity="0.39"/><path d="M694.7,122.1 L705.5,118.3 L716.4,112.7 L727.2,107.0 L738.0,107.0 L748.9,108.2 L759.7,115.7 L770.6,120.7 L781.4,126.6 L792.2,129.8 L803.1,128.1 L813.9,128.7" fill="none" stroke="#f9efdf" stroke-width="2.0" opacity="0.35"/><path d="M694.7,225.8 L705.5,224.4 L716.4,220.8 L727.2,220.7 L738.0,224.2 L748.9,228.8 L759.7,230.5 L770.6,235.7 L781.4,238.3 L792.2,237.8 L803.1,232.6 L813.9,232.0" fill="none" stroke="#f9efdf" stroke-width="2.6" opacity="0.20"/><path d="M694.7,118.2 L705.5,112.0 L716.4,106.7 L727.2,102.8 L738.0,104.6 L748.9,104.1 L759.7,107.0 L770.6,112.3 L781.4,118.1 L792.2,121.3 L803.1,121.4 L813.9,121.3" fill="none" stroke="#dcc49e" stroke-width="3.9" opacity="0.29"/><path d="M694.7,243.7 L705.5,243.6 L716.4,241.6 L727.2,243.3 L738.0,247.6 L748.9,253.3 L759.7,258.1 L770.6,260.7 L781.4,260.3 L792.2,255.7 L803.1,252.5 L813.9,246.5" fill="none" stroke="#d9bf98" stroke-width="2.3" opacity="0.43"/><path d="M694.7,215.5 L705.5,208.1 L716.4,204.8 L727.2,203.2 L738.0,207.1 L748.9,214.8 L759.7,218.7 L770.6,226.2 L781.4,229.6 L792.2,230.0 L803.1,224.1 L813.9,219.2" fill="none" stroke="#d9bf98" stroke-width="3.9" opacity="0.36"/><path d="M694.7,202.1 L705.5,200.1 L716.4,192.5 L727.2,191.2 L738.0,188.2 L748.9,193.1 L759.7,195.6 L770.6,200.3 L781.4,204.3 L792.2,204.9 L803.1,205.8 L813.9,203.4" fill="none" stroke="#f9efdf" stroke-width="3.3" opacity="0.25"/><path d="M694.7,252.4 L705.5,245.6 L716.4,238.0 L727.2,235.0 L738.0,230.8 L748.9,235.1 L759.7,239.3 L770.6,248.9 L781.4,252.7 L792.2,258.8 L803.1,262.5 L813.9,259.2" fill="none" stroke="#d9bf98" stroke-width="1.7" opacity="0.38"/><path d="M694.7,186.3 L705.5,183.4 L716.4,185.3 L727.2,186.2 L738.0,187.2 L748.9,193.6 L759.7,194.7 L770.6,198.9 L781.4,198.4 L792.2,198.7 L803.1,195.2 L813.9,191.0" fill="none" stroke="#d9bf98" stroke-width="2.1" opacity="0.32"/><path d="M148.7,300.8 L159.5,300.6 L170.4,298.3 L181.2,299.7 L192.0,308.2 L202.9,314.8 L213.7,315.3 L224.6,315.9 L235.4,312.2 L246.2,314.0 L257.1,314.6 L267.9,324.7" fill="none" stroke="#f9efdf" stroke-width="2.0" opacity="0.37"/><path d="M148.7,247.2 L159.5,245.9 L170.4,246.8 L181.2,245.0 L192.0,250.9 L202.9,256.8 L213.7,261.7 L224.6,262.1 L235.4,263.5 L246.2,258.3 L257.1,259.8 L267.9,267.5" fill="none" stroke="#dcc49e" stroke-width="3.2" opacity="0.39"/><path d="M148.7,304.6 L159.5,300.8 L170.4,298.9 L181.2,298.9 L192.0,304.2 L202.9,313.7 L213.7,318.3 L224.6,318.3 L235.4,314.1 L246.2,313.7 L257.1,317.6 L267.9,323.5" fill="none" stroke="#d9bf98" stroke-width="2.2" opacity="0.21"/><path d="M148.7,369.6 L159.5,369.7 L170.4,360.5 L181.2,359.0 L192.0,362.5 L202.9,371.2 L213.7,383.2 L224.6,386.6 L235.4,383.7 L246.2,376.0 L257.1,373.1 L267.9,379.4" fill="none" stroke="#d9bf98" stroke-width="2.0" opacity="0.30"/><path d="M148.7,326.6 L159.5,319.7 L170.4,317.9 L181.2,318.6 L192.0,328.9 L202.9,336.0 L213.7,340.1 L224.6,340.3 L235.4,332.6 L246.2,331.9 L257.1,337.8 L267.9,347.0" fill="none" stroke="#d9bf98" stroke-width="2.8" opacity="0.25"/><path d="M148.7,246.7 L159.5,249.2 L170.4,245.6 L181.2,240.2 L192.0,237.9 L202.9,246.2 L213.7,255.6 L224.6,260.4 L235.4,262.4 L246.2,257.4 L257.1,254.5 L267.9,257.6" fill="none" stroke="#dcc49e" stroke-width="3.3" opacity="0.35"/><path d="M148.7,255.8 L159.5,254.6 L170.4,248.0 L181.2,247.4 L192.0,253.9 L202.9,260.4 L213.7,268.9 L224.6,272.6 L235.4,269.8 L246.2,264.9 L257.1,263.0 L267.9,270.0" fill="none" stroke="#d9bf98" stroke-width="2.1" opacity="0.26"/><path d="M148.7,303.2 L159.5,296.4 L170.4,297.8 L181.2,301.6 L192.0,305.6 L202.9,314.0 L213.7,319.6 L224.6,317.8 L235.4,310.7 L246.2,312.4 L257.1,318.0 L267.9,322.7" fill="none" stroke="#d9bf98" stroke-width="3.5" opacity="0.36"/><path d="M148.7,336.3 L159.5,338.1 L170.4,336.6 L181.2,332.8 L192.0,335.8 L202.9,342.8 L213.7,346.8 L224.6,353.6 L235.4,354.6 L246.2,351.3 L257.1,349.1 L267.9,351.6" fill="none" stroke="#dcc49e" stroke-width="3.1" opacity="0.26"/><path d="M367.1,307.8 L377.9,302.5 L388.8,298.6 L399.6,296.2 L410.4,296.4 L421.3,304.4 L432.1,307.4 L443.0,315.5 L453.8,317.5 L464.6,320.9 L475.5,316.3 L486.3,313.7" fill="none" stroke="#d9bf98" stroke-width="4.0" opacity="0.45"/><path d="M367.1,266.8 L377.9,264.2 L388.8,263.5 L399.6,269.8 L410.4,274.8 L421.3,282.8 L432.1,289.1 L443.0,291.0 L453.8,290.9 L464.6,286.5 L475.5,278.6 L486.3,272.7" fill="none" stroke="#d9bf98" stroke-width="1.7" opacity="0.43"/><path d="M367.1,361.8 L377.9,358.9 L388.8,354.7 L399.6,357.5 L410.4,360.4 L421.3,366.9 L432.1,375.1 L443.0,379.0 L453.8,382.1 L464.6,378.2 L475.5,376.6 L486.3,368.7" fill="none" stroke="#f9efdf" stroke-width="2.4" opacity="0.33"/><path d="M367.1,268.4 L377.9,266.7 L388.8,267.3 L399.6,268.8 L410.4,272.8 L421.3,278.5 L432.1,279.0 L443.0,281.1 L453.8,279.7 L464.6,278.9 L475.5,274.6 L486.3,271.9" fill="none" stroke="#f9efdf" stroke-width="2.5" opacity="0.32"/><path d="M367.1,230.6 L377.9,229.8 L388.8,225.3 L399.6,227.3 L410.4,232.1 L421.3,239.0 L432.1,240.5 L443.0,244.6 L453.8,248.1 L464.6,245.0 L475.5,243.8 L486.3,235.0" fill="none" stroke="#d9bf98" stroke-width="1.7" opacity="0.37"/><path d="M367.1,277.2 L377.9,269.5 L388.8,266.7 L399.6,263.4 L410.4,261.4 L421.3,262.6 L432.1,267.8 L443.0,273.0 L453.8,279.6 L464.6,281.8 L475.5,280.6 L486.3,278.8" fill="none" stroke="#f9efdf" stroke-width="3.8" opacity="0.39"/><path d="M367.1,283.7 L377.9,281.1 L388.8,281.6 L399.6,287.4 L410.4,293.6 L421.3,300.3 L432.1,307.0 L443.0,309.1 L453.8,307.8 L464.6,305.4 L475.5,300.2 L486.3,289.3" fill="none" stroke="#dcc49e" stroke-width="1.8" opacity="0.35"/><path d="M367.1,251.9 L377.9,248.3 L388.8,247.8 L399.6,243.4 L410.4,244.1 L421.3,244.1 L432.1,243.7 L443.0,246.3 L453.8,249.7 L464.6,253.1 L475.5,255.0 L486.3,252.1" fill="none" stroke="#f9efdf" stroke-width="3.9" opacity="0.35"/><path d="M367.1,335.4 L377.9,334.6 L388.8,331.5 L399.6,330.3 L410.4,334.0 L421.3,336.1 L432.1,340.0 L443.0,345.7 L453.8,346.6 L464.6,347.1 L475.5,345.4 L486.3,340.5" fill="none" stroke="#dcc49e" stroke-width="3.3" opacity="0.26"/><path d="M585.5,317.8 L596.3,319.1 L607.2,320.6 L618.0,318.6 L628.8,321.5 L639.7,323.1 L650.5,327.0 L661.4,332.3 L672.2,334.5 L683.0,335.6 L693.9,339.8 L704.7,338.2" fill="none" stroke="#f9efdf" stroke-width="2.8" opacity="0.33"/><path d="M585.5,261.1 L596.3,263.5 L607.2,262.3 L618.0,262.6 L628.8,258.2 L639.7,259.6 L650.5,262.8 L661.4,270.4 L672.2,275.7 L683.0,278.0 L693.9,280.1 L704.7,276.9" fill="none" stroke="#d9bf98" stroke-width="2.7" opacity="0.35"/><path d="M585.5,338.3 L596.3,338.5 L607.2,339.7 L618.0,338.5 L628.8,336.3 L639.7,341.8 L650.5,345.3 L661.4,349.6 L672.2,353.5 L683.0,355.8 L693.9,355.8 L704.7,356.7" fill="none" stroke="#f9efdf" stroke-width="3.4" opacity="0.30"/><path d="M585.5,294.9 L596.3,295.2 L607.2,295.8 L618.0,295.1 L628.8,298.4 L639.7,302.6 L650.5,305.3 L661.4,310.0 L672.2,313.0 L683.0,311.5 L693.9,312.0 L704.7,312.2" fill="none" stroke="#dcc49e" stroke-width="3.4" opacity="0.30"/><path d="M585.5,310.1 L596.3,310.1 L607.2,309.6 L618.0,312.2 L628.8,310.5 L639.7,315.1 L650.5,320.4 L661.4,323.1 L672.2,326.2 L683.0,330.3 L693.9,327.7 L704.7,325.9" fill="none" stroke="#f9efdf" stroke-width="2.3" opacity="0.36"/><path d="M585.5,240.6 L596.3,241.8 L607.2,240.5 L618.0,241.1 L628.8,241.7 L639.7,242.6 L650.5,249.4 L661.4,253.2 L672.2,257.7 L683.0,259.8 L693.9,257.2 L704.7,258.6" fill="none" stroke="#d9bf98" stroke-width="2.7" opacity="0.35"/><path d="M585.5,293.4 L596.3,296.4 L607.2,292.5 L618.0,292.4 L628.8,290.7 L639.7,292.8 L650.5,296.8 L661.4,302.6 L672.2,308.6 L683.0,311.0 L693.9,309.8 L704.7,308.4" fill="none" stroke="#f9efdf" stroke-width="3.9" opacity="0.45"/><path d="M585.5,232.6 L596.3,233.7 L607.2,235.4 L618.0,235.8 L628.8,232.9 L639.7,234.7 L650.5,238.7 L661.4,243.9 L672.2,247.2 L683.0,250.8 L693.9,251.3 L704.7,252.4" fill="none" stroke="#f9efdf" stroke-width="3.9" opacity="0.31"/><path d="M585.5,317.5 L596.3,319.6 L607.2,316.3 L618.0,314.8 L628.8,317.0 L639.7,317.6 L650.5,321.8 L661.4,324.5 L672.2,331.9 L683.0,332.7 L693.9,336.1 L704.7,335.0" fill="none" stroke="#dcc49e" stroke-width="2.3" opacity="0.27"/><path d="M803.9,258.8 L814.7,260.2 L825.6,260.5 L836.4,254.3 L847.2,248.1 L858.1,247.7 L868.9,248.9 L879.8,259.0 L890.6,263.2 L901.4,265.0 L912.3,262.5 L923.1,258.1" fill="none" stroke="#dcc49e" stroke-width="3.4" opacity="0.38"/><path d="M803.9,358.5 L814.7,361.5 L825.6,355.3 L836.4,348.0 L847.2,339.3 L858.1,336.8 L868.9,347.7 L879.8,355.9 L890.6,367.0 L901.4,364.6 L912.3,359.5 L923.1,351.5" fill="none" stroke="#f9efdf" stroke-width="3.5" opacity="0.28"/><path d="M803.9,341.6 L814.7,350.6 L825.6,353.9 L836.4,354.7 L847.2,348.4 L858.1,342.2 L868.9,339.0 L879.8,342.4 L890.6,348.3 L901.4,357.1 L912.3,359.8 L923.1,359.6" fill="none" stroke="#dcc49e" stroke-width="1.5" opacity="0.37"/><path d="M803.9,331.1 L814.7,342.3 L825.6,348.8 L836.4,349.7 L847.2,340.6 L858.1,331.9 L868.9,328.0 L879.8,329.8 L890.6,336.7 L901.4,348.0 L912.3,354.2 L923.1,350.6" fill="none" stroke="#dcc49e" stroke-width="2.6" opacity="0.23"/><path d="M803.9,359.7 L814.7,364.6 L825.6,361.3 L836.4,352.8 L847.2,346.2 L858.1,344.6 L868.9,352.3 L879.8,360.3 L890.6,369.6 L901.4,371.1 L912.3,363.1 L923.1,357.2" fill="none" stroke="#dcc49e" stroke-width="3.0" opacity="0.39"/><path d="M803.9,318.2 L814.7,329.1 L825.6,333.1 L836.4,329.6 L847.2,323.2 L858.1,313.9 L868.9,312.6 L879.8,317.7 L890.6,325.1 L901.4,332.9 L912.3,335.7 L923.1,333.7" fill="none" stroke="#f9efdf" stroke-width="2.5" opacity="0.45"/><path d="M803.9,284.8 L814.7,291.0 L825.6,289.3 L836.4,281.6 L847.2,273.3 L858.1,271.3 L868.9,272.0 L879.8,285.2 L890.6,293.9 L901.4,297.1 L912.3,293.9 L923.1,284.0" fill="none" stroke="#d9bf98" stroke-width="3.7" opacity="0.30"/><path d="M803.9,295.6 L814.7,301.5 L825.6,304.7 L836.4,304.8 L847.2,298.4 L858.1,292.5 L868.9,291.8 L879.8,295.3 L890.6,300.0 L901.4,307.7 L912.3,309.6 L923.1,307.4" fill="none" stroke="#f9efdf" stroke-width="4.0" opacity="0.44"/><path d="M803.9,250.3 L814.7,252.7 L825.6,255.3 L836.4,250.3 L847.2,246.7 L858.1,243.7 L868.9,244.5 L879.8,250.5 L890.6,256.3 L901.4,260.3 L912.3,258.3 L923.1,253.3" fill="none" stroke="#dcc49e" stroke-width="3.0" opacity="0.20"/><path d="M39.5,330.3 L50.3,331.1 L61.2,335.5 L72.0,342.1 L82.8,349.5 L93.7,356.4 L104.5,356.4 L115.4,357.6 L126.2,356.8 L137.0,356.6 L147.9,355.4 L158.7,358.8" fill="none" stroke="#d9bf98" stroke-width="2.2" opacity="0.31"/><path d="M39.5,395.6 L50.3,392.4 L61.2,390.6 L72.0,391.9 L82.8,397.1 L93.7,406.3 L104.5,415.7 L115.4,422.9 L126.2,425.4 L137.0,424.6 L147.9,418.2 L158.7,418.7" fill="none" stroke="#f9efdf" stroke-width="2.6" opacity="0.28"/><path d="M39.5,388.3 L50.3,389.8 L61.2,396.2 L72.0,403.4 L82.8,411.9 L93.7,417.5 L104.5,420.0 L115.4,420.8 L126.2,417.3 L137.0,410.5 L147.9,412.9 L158.7,415.1" fill="none" stroke="#f9efdf" stroke-width="2.7" opacity="0.27"/><path d="M39.5,403.6 L50.3,403.9 L61.2,409.2 L72.0,414.4 L82.8,418.3 L93.7,423.3 L104.5,427.0 L115.4,428.4 L126.2,430.4 L137.0,429.7 L147.9,429.5 L158.7,429.8" fill="none" stroke="#dcc49e" stroke-width="3.3" opacity="0.38"/><path d="M39.5,411.3 L50.3,410.7 L61.2,412.2 L72.0,416.7 L82.8,424.5 L93.7,431.0 L104.5,439.0 L115.4,441.0 L126.2,442.7 L137.0,438.1 L147.9,436.7 L158.7,434.2" fill="none" stroke="#dcc49e" stroke-width="3.0" opacity="0.21"/><path d="M39.5,458.9 L50.3,458.4 L61.2,463.8 L72.0,470.7 L82.8,475.1 L93.7,481.4 L104.5,487.8 L115.4,488.1 L126.2,488.2 L137.0,484.6 L147.9,485.8 L158.7,486.6" fill="none" stroke="#dcc49e" stroke-width="2.0" opacity="0.42"/><path d="M39.5,319.4 L50.3,323.1 L61.2,327.5 L72.0,334.0 L82.8,345.0 L93.7,352.5 L104.5,353.2 L115.4,352.3 L126.2,351.6 L137.0,345.2 L147.9,344.0 L158.7,348.2" fill="none" stroke="#d9bf98" stroke-width="3.3" opacity="0.36"/><path d="M39.5,461.3 L50.3,461.7 L61.2,459.5 L72.0,460.5 L82.8,465.2 L93.7,471.4 L104.5,479.3 L115.4,484.2 L126.2,487.3 L137.0,486.0 L147.9,486.9 L158.7,484.4" fill="none" stroke="#d9bf98" stroke-width="3.6" opacity="0.20"/><path d="M39.5,442.1 L50.3,441.5 L61.2,449.2 L72.0,459.7 L82.8,466.9 L93.7,474.4 L104.5,476.9 L115.4,472.1 L126.2,471.2 L137.0,467.1 L147.9,467.3 L158.7,470.5" fill="none" stroke="#f9efdf" stroke-width="3.3" opacity="0.43"/><path d="M257.9,454.1 L268.7,459.1 L279.6,465.0 L290.4,473.2 L301.2,472.2 L312.1,469.7 L322.9,466.6 L333.8,459.8 L344.6,455.9 L355.4,455.9 L366.3,461.9 L377.1,467.8" fill="none" stroke="#d9bf98" stroke-width="2.6" opacity="0.44"/><path d="M257.9,356.1 L268.7,361.3 L279.6,368.7 L290.4,377.5 L301.2,386.7 L312.1,385.6 L322.9,381.8 L333.8,370.3 L344.6,363.3 L355.4,360.2 L366.3,361.9 L377.1,372.2" fill="none" stroke="#f9efdf" stroke-width="2.6" opacity="0.43"/><path d="M257.9,457.5 L268.7,459.9 L279.6,465.3 L290.4,472.0 L301.2,471.1 L312.1,468.7 L322.9,462.8 L333.8,459.9 L344.6,457.8 L355.4,455.8 L366.3,464.1 L377.1,469.8" fill="none" stroke="#f9efdf" stroke-width="3.7" opacity="0.42"/><path d="M257.9,369.3 L268.7,370.8 L279.6,378.3 L290.4,386.9 L301.2,392.5 L312.1,394.1 L322.9,386.3 L333.8,381.4 L344.6,372.8 L355.4,367.5 L366.3,370.9 L377.1,380.4" fill="none" stroke="#dcc49e" stroke-width="3.7" opacity="0.35"/><path d="M257.9,384.4 L268.7,394.0 L279.6,401.4 L290.4,404.1 L301.2,405.1 L312.1,397.4 L322.9,389.8 L333.8,385.6 L344.6,385.8 L355.4,390.0 L366.3,393.5 L377.1,401.8" fill="none" stroke="#d9bf98" stroke-width="3.1" opacity="0.29"/><path d="M257.9,385.4 L268.7,393.9 L279.6,402.2 L290.4,406.4 L301.2,401.9 L312.1,391.7 L322.9,380.6 L333.8,379.3 L344.6,377.8 L355.4,385.9 L366.3,397.8 L377.1,402.8" fill="none" stroke="#dcc49e" stroke-width="3.2" opacity="0.24"/><path d="M257.9,473.2 L268.7,481.0 L279.6,485.1 L290.4,486.3 L301.2,481.0 L312.1,471.6 L322.9,462.3 L333.8,461.6 L344.6,466.9 L355.4,473.6 L366.3,480.9 L377.1,486.3" fill="none" stroke="#d9bf98" stroke-width="2.9" opacity="0.34"/><path d="M257.9,372.8 L268.7,372.1 L279.6,379.5 L290.4,385.4 L301.2,392.8 L312.1,392.4 L322.9,387.5 L333.8,382.1 L344.6,375.4 L355.4,372.2 L366.3,376.8 L377.1,382.6" fill="none" stroke="#dcc49e" stroke-width="2.5" opacity="0.42"/><path d="M257.9,413.2 L268.7,421.4 L279.6,430.2 L290.4,437.5 L301.2,437.3 L312.1,429.6 L322.9,420.1 L333.8,411.6 L344.6,410.8 L355.4,413.2 L366.3,422.2 L377.1,433.7" fill="none" stroke="#d9bf98" stroke-width="1.7" opacity="0.28"/><path d="M476.3,472.8 L487.1,473.5 L498.0,471.5 L508.8,477.4 L519.6,479.5 L530.5,486.3 L541.3,496.4 L552.2,498.3 L563.0,500.3 L573.8,499.6 L584.7,496.1 L595.5,496.5" fill="none" stroke="#dcc49e" stroke-width="2.5" opacity="0.28"/><path d="M476.3,378.9 L487.1,371.5 L498.0,365.0 L508.8,365.1 L519.6,367.3 L530.5,374.4 L541.3,384.3 L552.2,395.9 L563.0,400.7 L573.8,404.6 L584.7,400.6 L595.5,393.9" fill="none" stroke="#dcc49e" stroke-width="2.3" opacity="0.39"/><path d="M476.3,431.9 L487.1,429.5 L498.0,427.9 L508.8,430.4 L519.6,436.1 L530.5,440.3 L541.3,449.3 L552.2,455.3 L563.0,455.5 L573.8,457.5 L584.7,453.0 L595.5,454.0" fill="none" stroke="#f9efdf" stroke-width="1.7" opacity="0.38"/><path d="M476.3,415.7 L487.1,413.2 L498.0,416.0 L508.8,416.6 L519.6,423.6 L530.5,432.6 L541.3,441.2 L552.2,445.6 L563.0,442.6 L573.8,439.7 L584.7,440.3 L595.5,439.8" fill="none" stroke="#dcc49e" stroke-width="2.5" opacity="0.40"/><path d="M476.3,400.4 L487.1,397.8 L498.0,399.0 L508.8,405.5 L519.6,408.8 L530.5,417.7 L541.3,422.9 L552.2,427.6 L563.0,429.0 L573.8,427.4 L584.7,426.2 L595.5,426.3" fill="none" stroke="#dcc49e" stroke-width="2.4" opacity="0.32"/><path d="M476.3,371.8 L487.1,366.0 L498.0,365.7 L508.8,373.1 L519.6,381.7 L530.5,393.0 L541.3,404.4 L552.2,407.3 L563.0,406.0 L573.8,397.7 L584.7,390.6 L595.5,391.9" fill="none" stroke="#f9efdf" stroke-width="1.7" opacity="0.20"/><path d="M476.3,472.2 L487.1,466.2 L498.0,460.2 L508.8,460.1 L519.6,464.5 L530.5,470.9 L541.3,481.7 L552.2,492.4 L563.0,499.9 L573.8,499.0 L584.7,492.4 L595.5,487.4" fill="none" stroke="#dcc49e" stroke-width="3.0" opacity="0.25"/><path d="M476.3,422.5 L487.1,415.3 L498.0,414.0 L508.8,413.3 L519.6,419.8 L530.5,432.6 L541.3,439.2 L552.2,449.4 L563.0,449.8 L573.8,445.4 L584.7,440.6 L595.5,438.9" fill="none" stroke="#d9bf98" stroke-width="1.7" opacity="0.43"/><path d="M476.3,330.6 L487.1,327.5 L498.0,326.9 L508.8,327.5 L519.6,333.6 L530.5,343.5 L541.3,355.0 L552.2,359.2 L563.0,360.6 L573.8,356.2 L584.7,351.7 L595.5,350.7" fill="none" stroke="#f9efdf" stroke-width="2.1" opacity="0.28"/><path d="M694.7,414.4 L705.5,409.4 L716.4,402.3 L727.2,399.1 L738.0,396.6 L748.9,398.5 L759.7,403.1 L770.6,410.8 L781.4,418.4 L792.2,425.4 L803.1,426.6 L813.9,424.8" fill="none" stroke="#f9efdf" stroke-width="3.3" opacity="0.32"/><path d="M694.7,401.9 L705.5,401.1 L716.4,401.0 L727.2,397.8 L738.0,394.0 L748.9,394.6 L759.7,391.6 L770.6,396.4 L781.4,401.8 L792.2,405.2 L803.1,412.9 L813.9,412.5" fill="none" stroke="#f9efdf" stroke-width="3.7" opacity="0.33"/><path d="M694.7,444.5 L705.5,442.2 L716.4,438.7 L727.2,434.6 L738.0,437.9 L748.9,444.3 L759.7,446.6 L770.6,452.6 L781.4,460.2 L792.2,462.8 L803.1,459.7 L813.9,455.7" fill="none" stroke="#d9bf98" stroke-width="3.1" opacity="0.26"/><path d="M694.7,390.8 L705.5,385.5 L716.4,378.1 L727.2,374.2 L738.0,373.6 L748.9,373.5 L759.7,378.4 L770.6,387.1 L781.4,392.7 L792.2,401.3 L803.1,404.3 L813.9,400.8" fill="none" stroke="#dcc49e" stroke-width="3.2" opacity="0.28"/><path d="M694.7,339.0 L705.5,336.0 L716.4,330.8 L727.2,327.7 L738.0,326.0 L748.9,324.7 L759.7,327.4 L770.6,335.1 L781.4,342.4 L792.2,349.4 L803.1,352.7 L813.9,352.7" fill="none" stroke="#dcc49e" stroke-width="2.9" opacity="0.27"/><path d="M694.7,480.1 L705.5,475.5 L716.4,470.5 L727.2,466.3 L738.0,462.0 L748.9,463.0 L759.7,466.6 L770.6,474.3 L781.4,480.8 L792.2,490.5 L803.1,493.5 L813.9,493.1" fill="none" stroke="#dcc49e" stroke-width="2.6" opacity="0.26"/><path d="M694.7,445.7 L705.5,440.1 L716.4,438.7 L727.2,431.9 L738.0,430.9 L748.9,430.4 L759.7,435.6 L770.6,442.5 L781.4,448.7 L792.2,453.0 L803.1,456.3 L813.9,455.6" fill="none" stroke="#dcc49e" stroke-width="3.0" opacity="0.32"/><path d="M694.7,458.5 L705.5,460.1 L716.4,456.9 L727.2,454.3 L738.0,452.0 L748.9,448.3 L759.7,448.0 L770.6,451.1 L781.4,459.9 L792.2,464.5 L803.1,469.4 L813.9,470.6" fill="none" stroke="#d9bf98" stroke-width="3.3" opacity="0.32"/><path d="M694.7,450.4 L705.5,448.4 L716.4,444.3 L727.2,438.4 L738.0,436.5 L748.9,439.1 L759.7,446.4 L770.6,452.5 L781.4,458.4 L792.2,462.9 L803.1,467.4 L813.9,465.5" fill="none" stroke="#dcc49e" stroke-width="2.2" opacity="0.39"/><path d="M148.7,559.0 L159.5,568.4 L170.4,579.4 L181.2,582.7 L192.0,575.5 L202.9,565.0 L213.7,562.9 L224.6,575.0 L235.4,586.7 L246.2,586.5 L257.1,574.2 L267.9,566.9" fill="none" stroke="#dcc49e" stroke-width="1.8" opacity="0.33"/><path d="M148.7,532.9 L159.5,540.7 L170.4,548.6 L181.2,555.1 L192.0,549.8 L202.9,542.0 L213.7,537.5 L224.6,548.3 L235.4,556.9 L246.2,559.4 L257.1,549.7 L267.9,544.2" fill="none" stroke="#dcc49e" stroke-width="1.9" opacity="0.22"/><path d="M148.7,458.1 L159.5,469.7 L170.4,485.0 L181.2,485.1 L192.0,472.3 L202.9,463.6 L213.7,464.5 L224.6,478.1 L235.4,490.2 L246.2,485.3 L257.1,471.8 L267.9,464.2" fill="none" stroke="#f9efdf" stroke-width="3.3" opacity="0.38"/><path d="M148.7,539.5 L159.5,537.1 L170.4,546.0 L181.2,552.1 L192.0,554.2 L202.9,548.2 L213.7,542.7 L224.6,545.1 L235.4,551.0 L246.2,555.7 L257.1,553.4 L267.9,549.8" fill="none" stroke="#f9efdf" stroke-width="3.4" opacity="0.37"/><path d="M148.7,437.3 L159.5,443.7 L170.4,459.4 L181.2,469.2 L192.0,463.2 L202.9,450.1 L213.7,442.2 L224.6,450.5 L235.4,464.1 L246.2,473.7 L257.1,466.0 L267.9,449.4" fill="none" stroke="#dcc49e" stroke-width="3.9" opacity="0.25"/><path d="M148.7,473.6 L159.5,479.5 L170.4,488.2 L181.2,488.9 L192.0,481.0 L202.9,477.2 L213.7,479.8 L224.6,488.5 L235.4,492.0 L246.2,489.4 L257.1,483.3 L267.9,480.2" fill="none" stroke="#f9efdf" stroke-width="3.5" opacity="0.33"/><path d="M148.7,463.8 L159.5,477.1 L170.4,484.8 L181.2,483.7 L192.0,476.2 L202.9,469.0 L213.7,470.7 L224.6,484.3 L235.4,491.9 L246.2,486.3 L257.1,474.4 L267.9,469.2" fill="none" stroke="#f9efdf" stroke-width="2.5" opacity="0.31"/><path d="M148.7,567.6 L159.5,566.8 L170.4,578.1 L181.2,586.8 L192.0,583.5 L202.9,575.2 L213.7,568.5 L224.6,575.0 L235.4,584.9 L246.2,591.5 L257.1,585.9 L267.9,576.7" fill="none" stroke="#dcc49e" stroke-width="2.0" opacity="0.28"/><path d="M148.7,496.2 L159.5,506.2 L170.4,513.8 L181.2,515.5 L192.0,510.0 L202.9,501.3 L213.7,501.6 L224.6,512.2 L235.4,520.3 L246.2,519.6 L257.1,509.9 L267.9,502.4" fill="none" stroke="#dcc49e" stroke-width="2.4" opacity="0.31"/><path d="M367.1,528.2 L377.9,533.1 L388.8,539.7 L399.6,550.6 L410.4,559.5 L421.3,564.8 L432.1,568.9 L443.0,568.3 L453.8,569.3 L464.6,569.3 L475.5,566.1 L486.3,570.2" fill="none" stroke="#dcc49e" stroke-width="3.1" opacity="0.42"/><path d="M367.1,451.5 L377.9,457.1 L388.8,465.9 L399.6,473.7 L410.4,484.4 L421.3,488.7 L432.1,494.1 L443.0,494.8 L453.8,492.9 L464.6,494.0 L475.5,491.6 L486.3,492.7" fill="none" stroke="#dcc49e" stroke-width="3.3" opacity="0.29"/><path d="M367.1,506.2 L377.9,506.3 L388.8,512.5 L399.6,517.3 L410.4,529.0 L421.3,535.6 L432.1,543.8 L443.0,546.9 L453.8,546.6 L464.6,548.2 L475.5,546.7 L486.3,545.7" fill="none" stroke="#f9efdf" stroke-width="3.7" opacity="0.34"/><path d="M367.1,513.3 L377.9,518.7 L388.8,527.6 L399.6,537.9 L410.4,545.8 L421.3,551.5 L432.1,552.5 L443.0,553.4 L453.8,551.2 L464.6,548.9 L475.5,552.3 L486.3,554.9" fill="none" stroke="#d9bf98" stroke-width="2.5" opacity="0.38"/><path d="M367.1,451.5 L377.9,459.0 L388.8,462.9 L399.6,469.6 L410.4,479.1 L421.3,482.8 L432.1,487.7 L443.0,488.4 L453.8,490.3 L464.6,492.5 L475.5,493.2 L486.3,495.7" fill="none" stroke="#d9bf98" stroke-width="2.0" opacity="0.26"/><path d="M367.1,473.1 L377.9,478.3 L388.8,488.1 L399.6,495.9 L410.4,501.5 L421.3,508.9 L432.1,509.4 L443.0,511.7 L453.8,509.0 L464.6,510.2 L475.5,513.1 L486.3,513.5" fill="none" stroke="#f9efdf" stroke-width="1.8" opacity="0.37"/><path d="M367.1,469.3 L377.9,473.6 L388.8,482.6 L399.6,488.9 L410.4,495.1 L421.3,503.8 L432.1,504.7 L443.0,506.6 L453.8,506.5 L464.6,507.9 L475.5,509.6 L486.3,509.4" fill="none" stroke="#f9efdf" stroke-width="3.3" opacity="0.41"/><path d="M367.1,479.3 L377.9,485.6 L388.8,488.7 L399.6,497.6 L410.4,504.0 L421.3,510.1 L432.1,511.4 L443.0,515.1 L453.8,518.1 L464.6,516.8 L475.5,517.7 L486.3,519.2" fill="none" stroke="#f9efdf" stroke-width="3.3" opacity="0.23"/><path d="M367.1,476.8 L377.9,484.3 L388.8,490.7 L399.6,499.7 L410.4,504.7 L421.3,510.0 L432.1,512.4 L443.0,510.8 L453.8,513.4 L464.6,513.0 L475.5,515.5 L486.3,520.4" fill="none" stroke="#dcc49e" stroke-width="3.8" opacity="0.29"/><path d="M585.5,479.8 L596.3,477.7 L607.2,478.9 L618.0,480.6 L628.8,486.7 L639.7,491.3 L650.5,493.9 L661.4,494.7 L672.2,490.9 L683.0,488.1 L693.9,483.1 L704.7,486.2" fill="none" stroke="#f9efdf" stroke-width="3.0" opacity="0.41"/><path d="M585.5,522.3 L596.3,521.2 L607.2,521.0 L618.0,522.8 L628.8,524.3 L639.7,529.5 L650.5,529.8 L661.4,529.2 L672.2,529.7 L683.0,527.9 L693.9,526.9 L704.7,524.3" fill="none" stroke="#d9bf98" stroke-width="2.6" opacity="0.35"/><path d="M585.5,544.7 L596.3,542.8 L607.2,542.7 L618.0,542.5 L628.8,543.1 L639.7,547.0 L650.5,550.0 L661.4,554.2 L672.2,552.5 L683.0,549.5 L693.9,549.2 L704.7,547.0" fill="none" stroke="#dcc49e" stroke-width="2.8" opacity="0.29"/><path d="M585.5,497.1 L596.3,494.6 L607.2,492.3 L618.0,493.0 L628.8,500.2 L639.7,503.3 L650.5,507.9 L661.4,508.7 L672.2,508.5 L683.0,504.1 L693.9,498.7 L704.7,496.0" fill="none" stroke="#f9efdf" stroke-width="2.8" opacity="0.38"/><path d="M585.5,440.9 L596.3,439.7 L607.2,441.4 L618.0,444.8 L628.8,447.8 L639.7,450.0 L650.5,449.7 L661.4,452.3 L672.2,448.9 L683.0,448.6 L693.9,444.1 L704.7,448.6" fill="none" stroke="#f9efdf" stroke-width="3.9" opacity="0.38"/><path d="M585.5,582.5 L596.3,575.5 L607.2,575.3 L618.0,577.3 L628.8,579.2 L639.7,585.9 L650.5,592.2 L661.4,593.0 L672.2,592.4 L683.0,586.0 L693.9,581.6 L704.7,578.3" fill="none" stroke="#dcc49e" stroke-width="3.0" opacity="0.27"/><path d="M585.5,460.3 L596.3,459.3 L607.2,461.4 L618.0,464.3 L628.8,466.9 L639.7,468.7 L650.5,468.5 L661.4,469.9 L672.2,469.2 L683.0,466.0 L693.9,466.2 L704.7,465.9" fill="none" stroke="#f9efdf" stroke-width="2.2" opacity="0.38"/><path d="M585.5,493.7 L596.3,487.6 L607.2,486.6 L618.0,486.0 L628.8,488.4 L639.7,491.9 L650.5,498.0 L661.4,500.4 L672.2,501.6 L683.0,496.1 L693.9,493.0 L704.7,489.0" fill="none" stroke="#dcc49e" stroke-width="3.0" opacity="0.33"/><path d="M585.5,465.5 L596.3,464.1 L607.2,466.1 L618.0,468.7 L628.8,475.5 L639.7,479.5 L650.5,482.2 L661.4,477.3 L672.2,472.9 L683.0,469.4 L693.9,468.0 L704.7,471.8" fill="none" stroke="#dcc49e" stroke-width="2.3" opacity="0.44"/><path d="M803.9,589.3 L814.7,585.8 L825.6,589.3 L836.4,589.6 L847.2,594.4 L858.1,594.9 L868.9,595.1 L879.8,592.5 L890.6,585.9 L901.4,578.1 L912.3,572.0 L923.1,565.8" fill="none" stroke="#f9efdf" stroke-width="1.7" opacity="0.34"/><path d="M803.9,469.6 L814.7,467.3 L825.6,469.5 L836.4,469.4 L847.2,471.8 L858.1,472.6 L868.9,472.8 L879.8,471.0 L890.6,464.7 L901.4,458.3 L912.3,451.2 L923.1,445.3" fill="none" stroke="#d9bf98" stroke-width="1.8" opacity="0.22"/><path d="M803.9,451.1 L814.7,447.5 L825.6,449.2 L836.4,449.7 L847.2,449.6 L858.1,452.9 L868.9,448.1 L879.8,445.3 L890.6,440.9 L901.4,434.8 L912.3,427.3 L923.1,425.0" fill="none" stroke="#d9bf98" stroke-width="2.4" opacity="0.37"/><path d="M803.9,511.5 L814.7,515.1 L825.6,516.4 L836.4,520.1 L847.2,523.6 L858.1,520.8 L868.9,517.5 L879.8,511.7 L890.6,501.5 L901.4,494.3 L912.3,489.7 L923.1,487.9" fill="none" stroke="#d9bf98" stroke-width="3.7" opacity="0.22"/><path d="M803.9,484.6 L814.7,485.6 L825.6,489.0 L836.4,492.5 L847.2,494.9 L858.1,490.4 L868.9,487.0 L879.8,481.0 L890.6,469.9 L901.4,464.4 L912.3,460.9 L923.1,460.7" fill="none" stroke="#f9efdf" stroke-width="3.4" opacity="0.32"/><path d="M803.9,479.7 L814.7,475.7 L825.6,472.4 L836.4,474.8 L847.2,476.2 L858.1,480.6 L868.9,480.6 L879.8,478.9 L890.6,472.8 L901.4,469.7 L912.3,461.2 L923.1,456.5" fill="none" stroke="#d9bf98" stroke-width="2.9" opacity="0.28"/><path d="M803.9,469.8 L814.7,467.7 L825.6,469.7 L836.4,472.6 L847.2,473.4 L858.1,476.8 L868.9,475.8 L879.8,469.7 L890.6,463.8 L901.4,455.8 L912.3,450.9 L923.1,447.0" fill="none" stroke="#dcc49e" stroke-width="1.6" opacity="0.22"/><path d="M803.9,591.1 L814.7,586.2 L825.6,586.7 L836.4,589.9 L847.2,592.7 L858.1,597.4 L868.9,599.8 L879.8,597.7 L890.6,591.5 L901.4,583.6 L912.3,574.4 L923.1,567.5" fill="none" stroke="#d9bf98" stroke-width="2.5" opacity="0.42"/><path d="M803.9,508.8 L814.7,504.1 L825.6,499.8 L836.4,500.8 L847.2,502.9 L858.1,505.0 L868.9,503.9 L879.8,506.4 L890.6,501.5 L901.4,495.1 L912.3,488.0 L923.1,484.3" fill="none" stroke="#f9efdf" stroke-width="3.4" opacity="0.33"/><path d="M39.5,670.8 L50.3,662.5 L61.2,659.2 L72.0,659.4 L82.8,666.4 L93.7,670.5 L104.5,663.5 L115.4,655.6 L126.2,649.3 L137.0,645.7 L147.9,645.6 L158.7,651.7" fill="none" stroke="#f9efdf" stroke-width="2.0" opacity="0.30"/><path d="M39.5,715.2 L50.3,702.5 L61.2,693.7 L72.0,694.5 L82.8,703.6 L93.7,708.3 L104.5,708.4 L115.4,701.0 L126.2,686.9 L137.0,681.1 L147.9,683.4 L158.7,688.7" fill="none" stroke="#d9bf98" stroke-width="1.7" opacity="0.36"/><path d="M39.5,607.0 L50.3,599.8 L61.2,595.1 L72.0,594.3 L82.8,599.1 L93.7,602.1 L104.5,602.7 L115.4,591.8 L126.2,585.9 L137.0,578.8 L147.9,579.6 L158.7,585.6" fill="none" stroke="#f9efdf" stroke-width="3.5" opacity="0.43"/><path d="M39.5,691.1 L50.3,681.5 L61.2,670.1 L72.0,668.1 L82.8,672.2 L93.7,676.0 L104.5,679.0 L115.4,675.8 L126.2,665.7 L137.0,656.3 L147.9,654.8 L158.7,659.0" fill="none" stroke="#dcc49e" stroke-width="2.1" opacity="0.21"/><path d="M39.5,630.1 L50.3,621.3 L61.2,612.3 L72.0,610.2 L82.8,617.7 L93.7,620.9 L104.5,624.2 L115.4,618.2 L126.2,606.5 L137.0,599.3 L147.9,599.3 L158.7,604.8" fill="none" stroke="#f9efdf" stroke-width="3.3" opacity="0.28"/><path d="M39.5,627.0 L50.3,613.7 L61.2,605.3 L72.0,601.1 L82.8,609.6 L93.7,616.8 L104.5,619.4 L115.4,611.7 L126.2,601.0 L137.0,590.5 L147.9,588.8 L158.7,596.1" fill="none" stroke="#f9efdf" stroke-width="3.7" opacity="0.23"/><path d="M39.5,678.7 L50.3,672.2 L61.2,666.9 L72.0,668.5 L82.8,671.8 L93.7,672.0 L104.5,669.1 L115.4,663.9 L126.2,657.9 L137.0,654.8 L147.9,655.5 L158.7,656.7" fill="none" stroke="#d9bf98" stroke-width="2.5" opacity="0.21"/><path d="M39.5,636.6 L50.3,629.6 L61.2,627.8 L72.0,631.2 L82.8,634.2 L93.7,635.9 L104.5,629.7 L115.4,622.5 L126.2,614.3 L137.0,613.0 L147.9,619.3 L158.7,622.2" fill="none" stroke="#dcc49e" stroke-width="1.8" opacity="0.30"/><path d="M39.5,573.5 L50.3,564.1 L61.2,560.4 L72.0,567.9 L82.8,576.1 L93.7,577.1 L104.5,571.6 L115.4,557.9 L126.2,547.7 L137.0,546.4 L147.9,553.0 L158.7,560.8" fill="none" stroke="#d9bf98" stroke-width="1.8" opacity="0.30"/><path d="M257.9,709.5 L268.7,699.6 L279.6,693.0 L290.4,693.6 L301.2,699.4 L312.1,704.9 L322.9,712.1 L333.8,711.3 L344.6,707.4 L355.4,697.4 L366.3,690.7 L377.1,688.2" fill="none" stroke="#dcc49e" stroke-width="2.3" opacity="0.35"/><path d="M257.9,623.3 L268.7,615.5 L279.6,611.0 L290.4,612.9 L301.2,618.9 L312.1,626.5 L322.9,629.2 L333.8,627.5 L344.6,621.8 L355.4,611.5 L366.3,606.5 L377.1,605.3" fill="none" stroke="#dcc49e" stroke-width="1.8" opacity="0.32"/><path d="M257.9,610.7 L268.7,603.1 L279.6,593.4 L290.4,586.5 L301.2,583.7 L312.1,590.4 L322.9,595.3 L333.8,601.3 L344.6,605.2 L355.4,600.9 L366.3,590.5 L377.1,581.7" fill="none" stroke="#dcc49e" stroke-width="2.1" opacity="0.22"/><path d="M257.9,616.6 L268.7,609.9 L279.6,603.5 L290.4,596.0 L301.2,591.4 L312.1,594.1 L322.9,600.9 L333.8,609.9 L344.6,610.5 L355.4,607.5 L366.3,599.0 L377.1,593.3" fill="none" stroke="#f9efdf" stroke-width="1.9" opacity="0.38"/><path d="M257.9,575.3 L268.7,567.6 L279.6,557.8 L290.4,546.9 L301.2,541.1 L312.1,547.6 L322.9,556.3 L333.8,566.2 L344.6,569.2 L355.4,564.2 L366.3,553.7 L377.1,542.0" fill="none" stroke="#d9bf98" stroke-width="2.3" opacity="0.27"/><path d="M257.9,668.6 L268.7,662.9 L279.6,649.1 L290.4,638.6 L301.2,633.5 L312.1,638.3 L322.9,646.5 L333.8,659.0 L344.6,660.6 L355.4,659.1 L366.3,646.4 L377.1,636.4" fill="none" stroke="#d9bf98" stroke-width="3.6" opacity="0.45"/><path d="M257.9,607.6 L268.7,599.1 L279.6,597.8 L290.4,598.5 L301.2,600.8 L312.1,607.5 L322.9,610.2 L333.8,606.3 L344.6,601.5 L355.4,597.7 L366.3,592.5 L377.1,589.8" fill="none" stroke="#dcc49e" stroke-width="2.1" opacity="0.44"/><path d="M257.9,585.2 L268.7,575.8 L279.6,565.1 L290.4,559.4 L301.2,559.9 L312.1,567.0 L322.9,575.1 L333.8,580.1 L344.6,582.2 L355.4,573.6 L366.3,564.2 L377.1,554.2" fill="none" stroke="#d9bf98" stroke-width="1.7" opacity="0.22"/><path d="M257.9,603.1 L268.7,593.6 L279.6,584.1 L290.4,582.2 L301.2,584.6 L312.1,595.4 L322.9,600.9 L333.8,607.3 L344.6,600.0 L355.4,591.7 L366.3,580.2 L377.1,575.8" fill="none" stroke="#dcc49e" stroke-width="3.8" opacity="0.26"/><path d="M476.3,606.5 L487.1,618.1 L498.0,616.4 L508.8,608.5 L519.6,601.4 L530.5,605.4 L541.3,617.7 L552.2,627.3 L563.0,635.4 L573.8,627.5 L584.7,621.3 L595.5,620.4" fill="none" stroke="#d9bf98" stroke-width="3.8" opacity="0.22"/><path d="M476.3,602.3 L487.1,604.2 L498.0,607.4 L508.8,602.7 L519.6,602.5 L530.5,606.4 L541.3,611.6 L552.2,619.7 L563.0,622.8 L573.8,621.1 L584.7,618.8 L595.5,620.2" fill="none" stroke="#d9bf98" stroke-width="1.9" opacity="0.26"/><path d="M476.3,658.4 L487.1,662.9 L498.0,668.9 L508.8,670.2 L519.6,665.1 L530.5,667.2 L541.3,670.3 L552.2,677.9 L563.0,682.8 L573.8,685.8 L584.7,685.6 L595.5,679.8" fill="none" stroke="#dcc49e" stroke-width="3.0" opacity="0.30"/><path d="M476.3,681.8 L487.1,689.6 L498.0,692.2 L508.8,689.9 L519.6,687.4 L530.5,684.8 L541.3,692.9 L552.2,700.0 L563.0,708.7 L573.8,706.1 L584.7,705.6 L595.5,702.8" fill="none" stroke="#d9bf98" stroke-width="1.9" opacity="0.29"/><path d="M476.3,638.4 L487.1,645.0 L498.0,647.9 L508.8,648.9 L519.6,643.1 L530.5,644.6 L541.3,651.3 L552.2,659.4 L563.0,663.1 L573.8,662.9 L584.7,660.6 L595.5,658.6" fill="none" stroke="#f9efdf" stroke-width="2.8" opacity="0.44"/><path d="M476.3,550.7 L487.1,560.5 L498.0,560.4 L508.8,559.7 L519.6,552.4 L530.5,552.1 L541.3,558.6 L552.2,570.4 L563.0,579.4 L573.8,579.0 L584.7,571.3 L595.5,570.1" fill="none" stroke="#f9efdf" stroke-width="3.1" opacity="0.44"/><path d="M476.3,556.8 L487.1,562.1 L498.0,557.1 L508.8,550.2 L519.6,544.8 L530.5,552.9 L541.3,567.5 L552.2,576.7 L563.0,574.9 L573.8,566.8 L584.7,561.4 L595.5,563.1" fill="none" stroke="#dcc49e" stroke-width="3.0" opacity="0.42"/><path d="M476.3,589.6 L487.1,599.8 L498.0,602.6 L508.8,595.2 L519.6,588.4 L530.5,588.4 L541.3,601.8 L552.2,612.4 L563.0,616.9 L573.8,613.4 L584.7,604.9 L595.5,605.5" fill="none" stroke="#dcc49e" stroke-width="3.9" opacity="0.37"/><path d="M476.3,560.3 L487.1,572.8 L498.0,573.5 L508.8,566.2 L519.6,559.1 L530.5,561.5 L541.3,570.2 L552.2,586.7 L563.0,591.2 L573.8,585.9 L584.7,576.9 L595.5,575.1" fill="none" stroke="#dcc49e" stroke-width="2.7" opacity="0.28"/><path d="M694.7,638.6 L705.5,631.3 L716.4,617.9 L727.2,610.4 L738.0,603.1 L748.9,605.5 L759.7,609.9 L770.6,612.3 L781.4,607.7 L792.2,593.3 L803.1,582.0 L813.9,575.8" fill="none" stroke="#dcc49e" stroke-width="2.1" opacity="0.22"/><path d="M694.7,593.9 L705.5,589.7 L716.4,578.6 L727.2,564.9 L738.0,561.3 L748.9,562.3 L759.7,567.8 L770.6,570.2 L781.4,561.9 L792.2,550.3 L803.1,542.0 L813.9,532.8" fill="none" stroke="#f9efdf" stroke-width="2.5" opacity="0.24"/><path d="M694.7,705.6 L705.5,702.4 L716.4,692.4 L727.2,685.6 L738.0,680.9 L748.9,677.5 L759.7,680.5 L770.6,679.7 L781.4,677.2 L792.2,666.0 L803.1,659.4 L813.9,652.9" fill="none" stroke="#f9efdf" stroke-width="2.2" opacity="0.30"/><path d="M694.7,679.7 L705.5,673.6 L716.4,661.1 L727.2,653.7 L738.0,650.9 L748.9,654.6 L759.7,659.0 L770.6,656.5 L781.4,647.4 L792.2,633.3 L803.1,624.1 L813.9,624.2" fill="none" stroke="#dcc49e" stroke-width="1.6" opacity="0.44"/><path d="M694.7,610.7 L705.5,607.0 L716.4,596.8 L727.2,588.0 L738.0,585.1 L748.9,582.4 L759.7,585.5 L770.6,586.2 L781.4,580.5 L792.2,571.3 L803.1,562.8 L813.9,557.3" fill="none" stroke="#d9bf98" stroke-width="2.4" opacity="0.21"/><path d="M694.7,610.3 L705.5,599.1 L716.4,588.0 L727.2,583.8 L738.0,586.6 L748.9,591.5 L759.7,592.3 L770.6,586.2 L781.4,573.1 L792.2,562.7 L803.1,554.2 L813.9,559.5" fill="none" stroke="#dcc49e" stroke-width="2.0" opacity="0.39"/><path d="M694.7,654.6 L705.5,644.3 L716.4,635.0 L727.2,627.3 L738.0,622.4 L748.9,623.9 L759.7,628.2 L770.6,625.9 L781.4,618.5 L792.2,608.4 L803.1,602.9 L813.9,598.4" fill="none" stroke="#d9bf98" stroke-width="3.4" opacity="0.28"/><path d="M694.7,615.7 L705.5,612.4 L716.4,603.2 L727.2,592.1 L738.0,586.9 L748.9,588.6 L759.7,591.7 L770.6,590.3 L781.4,586.9 L792.2,577.9 L803.1,565.4 L813.9,560.5" fill="none" stroke="#d9bf98" stroke-width="3.2" opacity="0.26"/><path d="M694.7,728.7 L705.5,726.1 L716.4,713.5 L727.2,703.5 L738.0,697.3 L748.9,696.0 L759.7,703.3 L770.6,703.5 L781.4,697.7 L792.2,689.5 L803.1,677.0 L813.9,669.2" fill="none" stroke="#d9bf98" stroke-width="3.7" opacity="0.30"/><path d="M148.7,755.6 L159.5,754.5 L170.4,751.4 L181.2,752.2 L192.0,751.4 L202.9,752.6 L213.7,749.6 L224.6,746.9 L235.4,743.0 L246.2,736.8 L257.1,731.4 L267.9,728.5" fill="none" stroke="#d9bf98" stroke-width="2.3" opacity="0.27"/><path d="M148.7,749.5 L159.5,744.8 L170.4,742.7 L181.2,746.6 L192.0,747.2 L202.9,747.7 L213.7,745.1 L224.6,746.0 L235.4,740.8 L246.2,732.8 L257.1,730.2 L267.9,722.6" fill="none" stroke="#d9bf98" stroke-width="2.3" opacity="0.45"/><path d="M148.7,809.7 L159.5,807.2 L170.4,807.9 L181.2,807.0 L192.0,805.7 L202.9,809.2 L213.7,807.4 L224.6,806.2 L235.4,799.4 L246.2,797.7 L257.1,789.7 L267.9,781.8" fill="none" stroke="#dcc49e" stroke-width="2.7" opacity="0.24"/><path d="M148.7,805.1 L159.5,801.9 L170.4,801.5 L181.2,804.5 L192.0,804.7 L202.9,803.2 L213.7,805.6 L224.6,802.7 L235.4,799.3 L246.2,792.4 L257.1,786.1 L267.9,779.7" fill="none" stroke="#d9bf98" stroke-width="2.1" opacity="0.32"/><path d="M148.7,665.5 L159.5,666.4 L170.4,664.1 L181.2,665.6 L192.0,666.8 L202.9,664.3 L213.7,663.8 L224.6,658.9 L235.4,652.3 L246.2,646.5 L257.1,642.7 L267.9,638.2" fill="none" stroke="#f9efdf" stroke-width="3.4" opacity="0.22"/><path d="M148.7,824.0 L159.5,822.8 L170.4,820.1 L181.2,821.7 L192.0,821.9 L202.9,821.5 L213.7,819.7 L224.6,817.9 L235.4,810.7 L246.2,804.3 L257.1,800.3 L267.9,794.1" fill="none" stroke="#dcc49e" stroke-width="2.0" opacity="0.35"/><path d="M148.7,697.7 L159.5,694.3 L170.4,692.8 L181.2,695.2 L192.0,695.0 L202.9,694.4 L213.7,689.9 L224.6,687.2 L235.4,686.9 L246.2,680.4 L257.1,675.2 L267.9,671.5" fill="none" stroke="#f9efdf" stroke-width="1.7" opacity="0.21"/><path d="M148.7,721.9 L159.5,718.6 L170.4,719.8 L181.2,717.3 L192.0,713.7 L202.9,711.2 L213.7,707.1 L224.6,702.8 L235.4,697.8 L246.2,691.2 L257.1,690.9 L267.9,686.8" fill="none" stroke="#f9efdf" stroke-width="3.5" opacity="0.34"/><path d="M148.7,726.4 L159.5,724.6 L170.4,726.1 L181.2,725.7 L192.0,725.4 L202.9,720.8 L213.7,715.2 L224.6,708.7 L235.4,703.7 L246.2,695.8 L257.1,690.7 L267.9,688.4" fill="none" stroke="#d9bf98" stroke-width="3.3" opacity="0.37"/><path d="M367.1,668.9 L377.9,667.8 L388.8,671.5 L399.6,672.7 L410.4,674.0 L421.3,683.5 L432.1,689.1 L443.0,694.2 L453.8,698.3 L464.6,697.1 L475.5,696.3 L486.3,701.0" fill="none" stroke="#d9bf98" stroke-width="3.4" opacity="0.29"/><path d="M367.1,743.1 L377.9,744.7 L388.8,744.7 L399.6,744.9 L410.4,745.7 L421.3,751.9 L432.1,759.7 L443.0,765.9 L453.8,769.9 L464.6,772.5 L475.5,771.2 L486.3,771.0" fill="none" stroke="#d9bf98" stroke-width="2.2" opacity="0.24"/><path d="M367.1,775.0 L377.9,773.9 L388.8,775.2 L399.6,778.5 L410.4,782.5 L421.3,788.1 L432.1,794.8 L443.0,803.3 L453.8,803.0 L464.6,803.4 L475.5,803.8 L486.3,804.8" fill="none" stroke="#d9bf98" stroke-width="3.4" opacity="0.25"/><path d="M367.1,687.0 L377.9,689.9 L388.8,689.7 L399.6,686.5 L410.4,687.0 L421.3,692.9 L432.1,699.8 L443.0,708.2 L453.8,714.4 L464.6,716.7 L475.5,716.5 L486.3,717.5" fill="none" stroke="#f9efdf" stroke-width="3.6" opacity="0.36"/><path d="M367.1,734.1 L377.9,736.3 L388.8,734.9 L399.6,734.1 L410.4,738.5 L421.3,741.1 L432.1,746.7 L443.0,751.6 L453.8,760.1 L464.6,760.7 L475.5,761.8 L486.3,763.8" fill="none" stroke="#d9bf98" stroke-width="2.5" opacity="0.36"/><path d="M367.1,706.5 L377.9,704.8 L388.8,707.0 L399.6,708.3 L410.4,713.2 L421.3,722.5 L432.1,727.8 L443.0,732.5 L453.8,733.6 L464.6,734.6 L475.5,735.9 L486.3,737.0" fill="none" stroke="#d9bf98" stroke-width="2.4" opacity="0.27"/><path d="M367.1,782.5 L377.9,779.7 L388.8,780.3 L399.6,779.6 L410.4,786.2 L421.3,795.6 L432.1,805.0 L443.0,810.9 L453.8,811.6 L464.6,809.6 L475.5,805.6 L486.3,807.5" fill="none" stroke="#f9efdf" stroke-width="1.8" opacity="0.31"/><path d="M367.1,755.7 L377.9,752.7 L388.8,750.3 L399.6,750.6 L410.4,752.4 L421.3,758.5 L432.1,769.9 L443.0,776.5 L453.8,782.0 L464.6,783.0 L475.5,778.6 L486.3,778.5" fill="none" stroke="#f9efdf" stroke-width="2.9" opacity="0.34"/><path d="M367.1,754.2 L377.9,752.5 L388.8,754.0 L399.6,756.9 L410.4,764.1 L421.3,769.1 L432.1,773.6 L443.0,779.4 L453.8,779.9 L464.6,779.8 L475.5,780.6 L486.3,784.3" fill="none" stroke="#dcc49e" stroke-width="3.7" opacity="0.41"/><path d="M585.5,644.1 L596.3,650.6 L607.2,665.3 L618.0,671.6 L628.8,672.6 L639.7,663.1 L650.5,654.6 L661.4,649.3 L672.2,653.8 L683.0,661.4 L693.9,675.4 L704.7,679.9" fill="none" stroke="#d9bf98" stroke-width="3.2" opacity="0.33"/><path d="M585.5,808.6 L596.3,817.3 L607.2,825.5 L618.0,820.3 L628.8,814.6 L639.7,805.6 L650.5,804.0 L661.4,808.2 L672.2,817.1 L683.0,827.7 L693.9,832.5 L704.7,830.7" fill="none" stroke="#d9bf98" stroke-width="3.2" opacity="0.21"/><path d="M585.5,723.5 L596.3,734.8 L607.2,741.7 L618.0,740.4 L628.8,732.1 L639.7,723.9 L650.5,719.7 L661.4,723.5 L672.2,733.8 L683.0,743.7 L693.9,751.9 L704.7,748.6" fill="none" stroke="#f9efdf" stroke-width="2.7" opacity="0.39"/><path d="M585.5,751.6 L596.3,759.7 L607.2,767.1 L618.0,771.2 L628.8,770.1 L639.7,762.2 L650.5,756.6 L661.4,757.5 L672.2,761.2 L683.0,769.6 L693.9,776.3 L704.7,780.6" fill="none" stroke="#d9bf98" stroke-width="2.1" opacity="0.42"/><path d="M585.5,678.2 L596.3,691.0 L607.2,705.1 L618.0,709.1 L628.8,704.2 L639.7,692.5 L650.5,681.2 L661.4,678.9 L672.2,686.6 L683.0,703.4 L693.9,713.4 L704.7,718.2" fill="none" stroke="#d9bf98" stroke-width="3.2" opacity="0.30"/><path d="M585.5,772.5 L596.3,781.6 L607.2,788.6 L618.0,790.1 L628.8,786.5 L639.7,781.8 L650.5,776.9 L661.4,777.3 L672.2,782.4 L683.0,789.9 L693.9,795.6 L704.7,799.3" fill="none" stroke="#f9efdf" stroke-width="2.0" opacity="0.33"/><path d="M585.5,788.2 L596.3,798.6 L607.2,810.9 L618.0,815.4 L628.8,810.3 L639.7,800.9 L650.5,793.3 L661.4,791.8 L672.2,799.0 L683.0,808.6 L693.9,820.7 L704.7,824.0" fill="none" stroke="#f9efdf" stroke-width="2.1" opacity="0.32"/><path d="M585.5,684.7 L596.3,696.9 L607.2,705.4 L618.0,707.6 L628.8,701.4 L639.7,690.2 L650.5,683.4 L661.4,687.7 L672.2,697.3 L683.0,708.4 L693.9,715.5 L704.7,715.5" fill="none" stroke="#d9bf98" stroke-width="3.3" opacity="0.37"/><path d="M585.5,702.7 L596.3,718.3 L607.2,726.6 L618.0,733.5 L628.8,729.5 L639.7,719.7 L650.5,708.0 L661.4,705.1 L672.2,711.7 L683.0,728.5 L693.9,740.3 L704.7,742.8" fill="none" stroke="#f9efdf" stroke-width="1.9" opacity="0.29"/><path d="M803.9,686.9 L814.7,691.1 L825.6,691.8 L836.4,690.3 L847.2,688.0 L858.1,679.9 L868.9,678.3 L879.8,678.0 L890.6,678.5 L901.4,680.6 L912.3,685.7 L923.1,692.6" fill="none" stroke="#d9bf98" stroke-width="3.8" opacity="0.35"/><path d="M803.9,785.1 L814.7,790.6 L825.6,792.7 L836.4,790.5 L847.2,786.3 L858.1,781.1 L868.9,777.8 L879.8,774.1 L890.6,777.7 L901.4,782.8 L912.3,785.7 L923.1,789.1" fill="none" stroke="#d9bf98" stroke-width="2.9" opacity="0.25"/><path d="M803.9,703.3 L814.7,707.6 L825.6,712.9 L836.4,711.9 L847.2,712.4 L858.1,706.5 L868.9,701.1 L879.8,699.9 L890.6,698.0 L901.4,703.0 L912.3,707.4 L923.1,711.8" fill="none" stroke="#f9efdf" stroke-width="2.7" opacity="0.29"/><path d="M803.9,712.1 L814.7,715.9 L825.6,718.2 L836.4,715.2 L847.2,714.6 L858.1,712.7 L868.9,706.3 L879.8,703.6 L890.6,704.2 L901.4,705.9 L912.3,712.2 L923.1,715.6" fill="none" stroke="#d9bf98" stroke-width="2.3" opacity="0.44"/><path d="M803.9,688.5 L814.7,694.4 L825.6,697.1 L836.4,696.5 L847.2,692.4 L858.1,688.4 L868.9,683.2 L879.8,680.5 L890.6,680.9 L901.4,685.7 L912.3,690.3 L923.1,695.7" fill="none" stroke="#dcc49e" stroke-width="2.4" opacity="0.22"/><path d="M803.9,747.2 L814.7,749.0 L825.6,750.9 L836.4,750.3 L847.2,746.4 L858.1,745.0 L868.9,743.1 L879.8,738.0 L890.6,741.6 L901.4,742.1 L912.3,745.0 L923.1,749.7" fill="none" stroke="#f9efdf" stroke-width="1.9" opacity="0.25"/><path d="M803.9,739.5 L814.7,739.2 L825.6,742.6 L836.4,741.0 L847.2,738.0 L858.1,735.8 L868.9,733.8 L879.8,730.4 L890.6,731.7 L901.4,735.3 L912.3,739.9 L923.1,743.6" fill="none" stroke="#dcc49e" stroke-width="2.0" opacity="0.33"/><path d="M803.9,800.1 L814.7,799.8 L825.6,800.9 L836.4,793.8 L847.2,789.4 L858.1,785.9 L868.9,785.6 L879.8,786.5 L890.6,793.4 L901.4,795.8 L912.3,799.7 L923.1,802.8" fill="none" stroke="#dcc49e" stroke-width="2.1" opacity="0.30"/><path d="M803.9,774.7 L814.7,778.1 L825.6,782.6 L836.4,781.1 L847.2,776.9 L858.1,773.7 L868.9,769.3 L879.8,766.9 L890.6,767.8 L901.4,772.5 L912.3,779.1 L923.1,779.0" fill="none" stroke="#f9efdf" stroke-width="3.7" opacity="0.42"/><path d="M39.5,773.4 L50.3,775.9 L61.2,774.0 L72.0,774.4 L82.8,778.1 L93.7,783.7 L104.5,790.4 L115.4,795.6 L126.2,799.8 L137.0,800.1 L147.9,798.7 L158.7,802.5" fill="none" stroke="#d9bf98" stroke-width="2.0" opacity="0.27"/><path d="M39.5,767.8 L50.3,765.2 L61.2,764.6 L72.0,762.4 L82.8,770.2 L93.7,777.5 L104.5,785.6 L115.4,789.6 L126.2,791.9 L137.0,789.5 L147.9,789.0 L158.7,790.6" fill="none" stroke="#f9efdf" stroke-width="2.9" opacity="0.40"/><path d="M39.5,776.7 L50.3,782.7 L61.2,779.6 L72.0,780.3 L82.8,781.5 L93.7,790.5 L104.5,796.2 L115.4,803.8 L126.2,804.5 L137.0,805.4 L147.9,804.1 L158.7,807.4" fill="none" stroke="#f9efdf" stroke-width="2.5" opacity="0.41"/><path d="M39.5,864.2 L50.3,863.8 L61.2,861.1 L72.0,855.9 L82.8,861.5 L93.7,867.0 L104.5,879.2 L115.4,888.7 L126.2,888.8 L137.0,886.1 L147.9,883.1 L158.7,883.3" fill="none" stroke="#dcc49e" stroke-width="3.5" opacity="0.30"/><path d="M39.5,812.9 L50.3,815.4 L61.2,811.1 L72.0,808.1 L82.8,807.5 L93.7,815.9 L104.5,825.9 L115.4,837.7 L126.2,839.5 L137.0,834.9 L147.9,830.6 L158.7,829.5" fill="none" stroke="#d9bf98" stroke-width="2.6" opacity="0.23"/><path d="M39.5,890.8 L50.3,889.2 L61.2,889.4 L72.0,889.1 L82.8,893.2 L93.7,900.3 L104.5,909.1 L115.4,916.1 L126.2,918.0 L137.0,913.7 L147.9,912.2 L158.7,919.1" fill="none" stroke="#f9efdf" stroke-width="3.2" opacity="0.28"/><path d="M39.5,784.6 L50.3,791.6 L61.2,789.8 L72.0,787.9 L82.8,788.7 L93.7,790.1 L104.5,797.4 L115.4,810.3 L126.2,816.2 L137.0,815.0 L147.9,812.8 L158.7,812.1" fill="none" stroke="#d9bf98" stroke-width="2.9" opacity="0.32"/><path d="M39.5,876.3 L50.3,879.9 L61.2,877.4 L72.0,877.7 L82.8,879.0 L93.7,887.1 L104.5,897.0 L115.4,902.5 L126.2,904.0 L137.0,903.0 L147.9,900.0 L158.7,905.0" fill="none" stroke="#d9bf98" stroke-width="2.6" opacity="0.41"/><path d="M39.5,844.5 L50.3,848.2 L61.2,849.7 L72.0,845.3 L82.8,847.0 L93.7,851.6 L104.5,859.3 L115.4,866.5 L126.2,872.0 L137.0,873.2 L147.9,870.2 L158.7,870.7" fill="none" stroke="#f9efdf" stroke-width="2.0" opacity="0.25"/><path d="M257.9,782.2 L268.7,774.5 L279.6,769.4 L290.4,767.3 L301.2,767.2 L312.1,772.4 L322.9,777.6 L333.8,785.9 L344.6,795.0 L355.4,802.4 L366.3,805.0 L377.1,807.3" fill="none" stroke="#dcc49e" stroke-width="2.8" opacity="0.26"/><path d="M257.9,858.4 L268.7,857.0 L279.6,857.1 L290.4,857.6 L301.2,859.0 L312.1,861.7 L322.9,865.5 L333.8,872.0 L344.6,874.9 L355.4,877.4 L366.3,877.9 L377.1,879.7" fill="none" stroke="#f9efdf" stroke-width="2.4" opacity="0.30"/><path d="M257.9,777.1 L268.7,772.5 L279.6,769.6 L290.4,773.7 L301.2,774.0 L312.1,779.3 L322.9,783.6 L333.8,791.4 L344.6,795.3 L355.4,798.8 L366.3,802.0 L377.1,800.4" fill="none" stroke="#f9efdf" stroke-width="2.9" opacity="0.42"/><path d="M257.9,848.3 L268.7,848.0 L279.6,846.4 L290.4,851.4 L301.2,852.4 L312.1,860.7 L322.9,864.5 L333.8,869.5 L344.6,875.1 L355.4,876.1 L366.3,878.5 L377.1,874.9" fill="none" stroke="#d9bf98" stroke-width="1.6" opacity="0.23"/><path d="M257.9,844.2 L268.7,844.2 L279.6,838.1 L290.4,839.7 L301.2,839.2 L312.1,839.6 L322.9,846.7 L333.8,850.7 L344.6,854.6 L355.4,861.7 L366.3,863.9 L377.1,866.0" fill="none" stroke="#f9efdf" stroke-width="1.7" opacity="0.43"/><path d="M257.9,754.5 L268.7,753.0 L279.6,751.6 L290.4,752.8 L301.2,757.3 L312.1,764.3 L322.9,772.2 L333.8,781.4 L344.6,786.5 L355.4,787.2 L366.3,787.4 L377.1,781.8" fill="none" stroke="#dcc49e" stroke-width="2.3" opacity="0.21"/><path d="M257.9,855.4 L268.7,853.9 L279.6,856.5 L290.4,856.9 L301.2,856.6 L312.1,863.3 L322.9,866.2 L333.8,873.5 L344.6,876.7 L355.4,877.1 L366.3,878.3 L377.1,879.3" fill="none" stroke="#f9efdf" stroke-width="2.4" opacity="0.43"/><path d="M257.9,883.5 L268.7,880.3 L279.6,875.6 L290.4,872.7 L301.2,877.7 L312.1,881.4 L322.9,889.9 L333.8,896.7 L344.6,904.4 L355.4,908.2 L366.3,912.4 L377.1,913.6" fill="none" stroke="#f9efdf" stroke-width="3.5" opacity="0.36"/><path d="M257.9,871.7 L268.7,869.0 L279.6,868.4 L290.4,867.2 L301.2,875.2 L312.1,878.9 L322.9,886.8 L333.8,895.7 L344.6,899.6 L355.4,904.6 L366.3,903.6 L377.1,900.5" fill="none" stroke="#dcc49e" stroke-width="3.8" opacity="0.45"/><path d="M476.3,813.9 L487.1,816.6 L498.0,817.3 L508.8,821.2 L519.6,826.3 L530.5,828.2 L541.3,836.8 L552.2,841.3 L563.0,843.2 L573.8,846.9 L584.7,850.9 L595.5,853.4" fill="none" stroke="#dcc49e" stroke-width="1.8" opacity="0.27"/><path d="M476.3,886.0 L487.1,888.1 L498.0,889.7 L508.8,894.9 L519.6,900.7 L530.5,905.5 L541.3,911.0 L552.2,913.4 L563.0,919.1 L573.8,921.8 L584.7,922.2 L595.5,925.8" fill="none" stroke="#dcc49e" stroke-width="3.7" opacity="0.35"/><path d="M476.3,829.0 L487.1,829.4 L498.0,832.8 L508.8,837.4 L519.6,841.8 L530.5,847.5 L541.3,852.4 L552.2,857.4 L563.0,862.7 L573.8,864.7 L584.7,866.5 L595.5,867.7" fill="none" stroke="#dcc49e" stroke-width="3.9" opacity="0.25"/><path d="M476.3,889.2 L487.1,892.4 L498.0,893.2 L508.8,895.9 L519.6,898.8 L530.5,902.7 L541.3,905.8 L552.2,911.7 L563.0,920.3 L573.8,922.1 L584.7,928.3 L595.5,927.8" fill="none" stroke="#f9efdf" stroke-width="1.8" opacity="0.42"/><path d="M476.3,825.3 L487.1,828.1 L498.0,826.2 L508.8,828.7 L519.6,834.9 L530.5,838.9 L541.3,845.1 L552.2,854.3 L563.0,857.6 L573.8,860.6 L584.7,863.4 L595.5,864.2" fill="none" stroke="#dcc49e" stroke-width="3.3" opacity="0.31"/><path d="M476.3,772.4 L487.1,772.6 L498.0,776.6 L508.8,780.8 L519.6,786.9 L530.5,790.0 L541.3,795.6 L552.2,802.3 L563.0,805.1 L573.8,809.4 L584.7,811.4 L595.5,812.5" fill="none" stroke="#d9bf98" stroke-width="2.1" opacity="0.45"/><path d="M476.3,768.0 L487.1,766.9 L498.0,769.5 L508.8,774.2 L519.6,779.1 L530.5,782.4 L541.3,788.8 L552.2,797.8 L563.0,802.1 L573.8,803.4 L584.7,807.5 L595.5,808.6" fill="none" stroke="#dcc49e" stroke-width="3.2" opacity="0.25"/><path d="M476.3,867.1 L487.1,867.1 L498.0,868.0 L508.8,869.7 L519.6,872.3 L530.5,877.6 L541.3,886.1 L552.2,890.2 L563.0,896.6 L573.8,903.3 L584.7,904.2 L595.5,906.3" fill="none" stroke="#f9efdf" stroke-width="2.3" opacity="0.24"/><path d="M476.3,773.6 L487.1,775.8 L498.0,777.1 L508.8,780.0 L519.6,786.0 L530.5,792.7 L541.3,799.0 L552.2,807.0 L563.0,808.5 L573.8,812.2 L584.7,814.7 L595.5,812.4" fill="none" stroke="#f9efdf" stroke-width="3.0" opacity="0.36"/><path d="M694.7,751.3 L705.5,756.6 L716.4,756.8 L727.2,761.2 L738.0,762.6 L748.9,762.3 L759.7,764.7 L770.6,770.3 L781.4,776.4 L792.2,779.3 L803.1,787.8 L813.9,790.6" fill="none" stroke="#dcc49e" stroke-width="1.7" opacity="0.36"/><path d="M694.7,787.0 L705.5,792.3 L716.4,791.8 L727.2,794.0 L738.0,797.0 L748.9,797.9 L759.7,799.3 L770.6,807.2 L781.4,812.6 L792.2,815.5 L803.1,823.3 L813.9,827.9" fill="none" stroke="#dcc49e" stroke-width="2.5" opacity="0.29"/><path d="M694.7,872.3 L705.5,877.1 L716.4,878.3 L727.2,880.9 L738.0,882.4 L748.9,882.7 L759.7,887.8 L770.6,889.9 L781.4,896.0 L792.2,900.2 L803.1,906.6 L813.9,911.4" fill="none" stroke="#dcc49e" stroke-width="2.6" opacity="0.44"/><path d="M694.7,878.8 L705.5,885.8 L716.4,887.3 L727.2,886.9 L738.0,885.7 L748.9,887.3 L759.7,889.4 L770.6,889.5 L781.4,897.5 L792.2,904.7 L803.1,909.2 L813.9,918.0" fill="none" stroke="#dcc49e" stroke-width="1.6" opacity="0.24"/><path d="M694.7,908.1 L705.5,912.6 L716.4,920.0 L727.2,924.2 L738.0,925.2 L748.9,924.2 L759.7,923.2 L770.6,923.9 L781.4,924.1 L792.2,931.7 L803.1,936.5 L813.9,943.1" fill="none" stroke="#f9efdf" stroke-width="3.3" opacity="0.24"/><path d="M694.7,787.3 L705.5,792.8 L716.4,798.9 L727.2,801.5 L738.0,803.5 L748.9,806.3 L759.7,807.2 L770.6,804.8 L781.4,809.4 L792.2,813.9 L803.1,818.2 L813.9,825.7" fill="none" stroke="#d9bf98" stroke-width="1.8" opacity="0.38"/><path d="M694.7,753.8 L705.5,754.3 L716.4,757.9 L727.2,760.4 L738.0,763.0 L748.9,765.0 L759.7,765.3 L770.6,771.8 L781.4,775.7 L792.2,780.1 L803.1,786.7 L813.9,793.5" fill="none" stroke="#d9bf98" stroke-width="1.9" opacity="0.21"/><path d="M694.7,761.4 L705.5,767.4 L716.4,772.4 L727.2,774.8 L738.0,775.1 L748.9,777.4 L759.7,776.9 L770.6,781.0 L781.4,782.2 L792.2,786.5 L803.1,790.2 L813.9,798.4" fill="none" stroke="#dcc49e" stroke-width="3.1" opacity="0.33"/><path d="M694.7,847.7 L705.5,848.9 L716.4,851.6 L727.2,850.7 L738.0,855.2 L748.9,856.2 L759.7,858.5 L770.6,862.0 L781.4,870.1 L792.2,874.8 L803.1,882.2 L813.9,886.7" fill="none" stroke="#f9efdf" stroke-width="1.8" opacity="0.42"/><path d="M148.7,889.6 L159.5,890.8 L170.4,892.6 L181.2,892.7 L192.0,894.7 L202.9,891.2 L213.7,887.8 L224.6,888.1 L235.4,886.2 L246.2,884.3 L257.1,887.0 L267.9,889.4" fill="none" stroke="#f9efdf" stroke-width="3.0" opacity="0.28"/><path d="M148.7,964.3 L159.5,966.0 L170.4,966.9 L181.2,964.1 L192.0,963.7 L202.9,964.1 L213.7,962.5 L224.6,960.4 L235.4,961.2 L246.2,959.8 L257.1,960.5 L267.9,963.7" fill="none" stroke="#dcc49e" stroke-width="2.7" opacity="0.41"/><path d="M148.7,905.7 L159.5,910.7 L170.4,910.6 L181.2,912.2 L192.0,913.3 L202.9,911.8 L213.7,908.4 L224.6,909.5 L235.4,906.0 L246.2,905.0 L257.1,905.1 L267.9,908.2" fill="none" stroke="#dcc49e" stroke-width="3.2" opacity="0.36"/><path d="M148.7,878.2 L159.5,881.7 L170.4,882.5 L181.2,880.4 L192.0,880.8 L202.9,876.2 L213.7,874.0 L224.6,875.9 L235.4,875.7 L246.2,876.7 L257.1,879.0 L267.9,880.7" fill="none" stroke="#f9efdf" stroke-width="1.9" opacity="0.24"/><path d="M148.7,924.5 L159.5,926.1 L170.4,929.5 L181.2,929.9 L192.0,927.2 L202.9,924.4 L213.7,925.4 L224.6,920.9 L235.4,920.4 L246.2,923.6 L257.1,922.2 L267.9,926.6" fill="none" stroke="#dcc49e" stroke-width="2.7" opacity="0.24"/><path d="M148.7,1024.9 L159.5,1028.6 L170.4,1027.2 L181.2,1025.6 L192.0,1023.1 L202.9,1020.2 L213.7,1017.8 L224.6,1019.1 L235.4,1019.3 L246.2,1021.1 L257.1,1025.3 L267.9,1027.5" fill="none" stroke="#d9bf98" stroke-width="3.9" opacity="0.23"/><path d="M148.7,978.9 L159.5,980.5 L170.4,979.7 L181.2,980.3 L192.0,976.5 L202.9,973.9 L213.7,970.9 L224.6,971.5 L235.4,973.1 L246.2,973.0 L257.1,976.1 L267.9,980.5" fill="none" stroke="#d9bf98" stroke-width="2.2" opacity="0.42"/><path d="M148.7,917.5 L159.5,920.6 L170.4,922.5 L181.2,924.9 L192.0,923.4 L202.9,918.2 L213.7,915.8 L224.6,916.9 L235.4,912.5 L246.2,915.5 L257.1,916.6 L267.9,920.7" fill="none" stroke="#f9efdf" stroke-width="3.3" opacity="0.39"/><path d="M148.7,962.2 L159.5,965.4 L170.4,964.3 L181.2,960.8 L192.0,958.0 L202.9,953.9 L213.7,952.2 L224.6,953.6 L235.4,952.8 L246.2,955.9 L257.1,957.8 L267.9,962.9" fill="none" stroke="#dcc49e" stroke-width="3.3" opacity="0.39"/><path d="M367.1,902.0 L377.9,906.2 L388.8,904.7 L399.6,904.3 L410.4,905.2 L421.3,904.9 L432.1,900.1 L443.0,902.6 L453.8,901.0 L464.6,902.8 L475.5,905.6 L486.3,909.0" fill="none" stroke="#f9efdf" stroke-width="3.2" opacity="0.20"/><path d="M367.1,948.6 L377.9,956.8 L388.8,957.2 L399.6,960.8 L410.4,958.4 L421.3,958.0 L432.1,956.6 L443.0,951.2 L453.8,951.9 L464.6,951.2 L475.5,951.9 L486.3,956.9" fill="none" stroke="#d9bf98" stroke-width="3.2" opacity="0.45"/><path d="M367.1,959.4 L377.9,963.2 L388.8,965.5 L399.6,968.8 L410.4,965.6 L421.3,965.9 L432.1,963.5 L443.0,962.6 L453.8,960.4 L464.6,958.1 L475.5,960.2 L486.3,964.2" fill="none" stroke="#dcc49e" stroke-width="1.9" opacity="0.37"/><path d="M367.1,949.7 L377.9,952.9 L388.8,951.7 L399.6,951.4 L410.4,948.6 L421.3,946.2 L432.1,945.4 L443.0,943.0 L453.8,940.4 L464.6,942.2 L475.5,948.9 L486.3,952.9" fill="none" stroke="#d9bf98" stroke-width="2.5" opacity="0.35"/><path d="M367.1,1016.7 L377.9,1016.3 L388.8,1016.9 L399.6,1016.0 L410.4,1017.1 L421.3,1015.5 L432.1,1013.9 L443.0,1013.8 L453.8,1013.2 L464.6,1015.3 L475.5,1019.8 L486.3,1022.5" fill="none" stroke="#dcc49e" stroke-width="2.9" opacity="0.33"/><path d="M367.1,935.5 L377.9,933.7 L388.8,934.7 L399.6,934.3 L410.4,932.1 L421.3,932.8 L432.1,929.3 L443.0,931.6 L453.8,934.6 L464.6,937.4 L475.5,939.3 L486.3,941.3" fill="none" stroke="#d9bf98" stroke-width="3.7" opacity="0.35"/><path d="M367.1,977.3 L377.9,979.4 L388.8,981.4 L399.6,983.3 L410.4,978.5 L421.3,976.1 L432.1,975.1 L443.0,973.4 L453.8,972.3 L464.6,974.6 L475.5,977.1 L486.3,982.3" fill="none" stroke="#d9bf98" stroke-width="3.3" opacity="0.28"/><path d="M367.1,936.2 L377.9,936.5 L388.8,938.8 L399.6,939.7 L410.4,936.6 L421.3,934.3 L432.1,934.9 L443.0,931.1 L453.8,933.4 L464.6,935.5 L475.5,938.5 L486.3,940.7" fill="none" stroke="#dcc49e" stroke-width="2.7" opacity="0.42"/><path d="M367.1,894.4 L377.9,896.7 L388.8,896.4 L399.6,896.7 L410.4,898.4 L421.3,895.1 L432.1,893.9 L443.0,892.7 L453.8,896.1 L464.6,896.9 L475.5,897.9 L486.3,901.4" fill="none" stroke="#d9bf98" stroke-width="3.2" opacity="0.23"/><path d="M585.5,980.8 L596.3,976.2 L607.2,969.8 L618.0,973.1 L628.8,976.7 L639.7,980.1 L650.5,984.1 L661.4,984.6 L672.2,982.3 L683.0,973.9 L693.9,969.0 L704.7,966.9" fill="none" stroke="#d9bf98" stroke-width="4.0" opacity="0.41"/><path d="M585.5,901.4 L596.3,897.0 L607.2,897.0 L618.0,902.1 L628.8,911.3 L639.7,917.9 L650.5,918.1 L661.4,913.5 L672.2,906.6 L683.0,895.5 L693.9,892.0 L704.7,893.6" fill="none" stroke="#f9efdf" stroke-width="3.7" opacity="0.35"/><path d="M585.5,946.0 L596.3,946.7 L607.2,953.7 L618.0,963.1 L628.8,970.9 L639.7,969.4 L650.5,967.0 L661.4,957.8 L672.2,950.9 L683.0,941.9 L693.9,942.3 L704.7,949.2" fill="none" stroke="#d9bf98" stroke-width="2.7" opacity="0.21"/><path d="M585.5,911.0 L596.3,909.7 L607.2,915.9 L618.0,925.7 L628.8,933.2 L639.7,939.6 L650.5,933.7 L661.4,926.3 L672.2,914.4 L683.0,908.0 L693.9,904.3 L704.7,911.1" fill="none" stroke="#d9bf98" stroke-width="1.5" opacity="0.25"/><path d="M585.5,877.5 L596.3,879.0 L607.2,880.4 L618.0,889.3 L628.8,897.5 L639.7,900.0 L650.5,895.2 L661.4,887.6 L672.2,879.2 L683.0,875.6 L693.9,873.9 L704.7,875.6" fill="none" stroke="#d9bf98" stroke-width="2.1" opacity="0.38"/><path d="M585.5,1022.2 L596.3,1014.1 L607.2,1006.7 L618.0,1008.3 L628.8,1014.2 L639.7,1021.9 L650.5,1027.4 L661.4,1028.5 L672.2,1027.5 L683.0,1017.4 L693.9,1009.7 L704.7,1003.2" fill="none" stroke="#d9bf98" stroke-width="3.0" opacity="0.35"/><path d="M585.5,879.0 L596.3,874.1 L607.2,870.3 L618.0,872.2 L628.8,876.3 L639.7,879.8 L650.5,883.7 L661.4,884.6 L672.2,881.0 L683.0,873.2 L693.9,868.5 L704.7,864.1" fill="none" stroke="#dcc49e" stroke-width="3.1" opacity="0.30"/><path d="M585.5,1012.9 L596.3,1008.0 L607.2,1010.3 L618.0,1012.5 L628.8,1016.0 L639.7,1019.4 L650.5,1021.5 L661.4,1018.0 L672.2,1014.9 L683.0,1006.7 L693.9,1003.8 L704.7,1004.9" fill="none" stroke="#dcc49e" stroke-width="3.2" opacity="0.28"/><path d="M585.5,898.9 L596.3,896.0 L607.2,899.0 L618.0,903.8 L628.8,912.8 L639.7,917.0 L650.5,916.4 L661.4,912.8 L672.2,904.5 L683.0,894.3 L693.9,892.8 L704.7,896.1" fill="none" stroke="#f9efdf" stroke-width="1.9" opacity="0.43"/><path d="M803.9,943.2 L814.7,935.5 L825.6,929.1 L836.4,930.4 L847.2,938.6 L858.1,945.0 L868.9,949.7 L879.8,950.9 L890.6,944.5 L901.4,932.5 L912.3,920.9 L923.1,911.7" fill="none" stroke="#dcc49e" stroke-width="3.8" opacity="0.41"/><path d="M803.9,1015.6 L814.7,1010.9 L825.6,1009.3 L836.4,1010.3 L847.2,1013.3 L858.1,1014.1 L868.9,1015.0 L879.8,1014.4 L890.6,1006.7 L901.4,1001.4 L912.3,997.0 L923.1,990.0" fill="none" stroke="#f9efdf" stroke-width="3.3" opacity="0.29"/><path d="M803.9,961.4 L814.7,957.1 L825.6,952.5 L836.4,953.2 L847.2,952.4 L858.1,955.1 L868.9,959.6 L879.8,957.8 L890.6,955.0 L901.4,947.9 L912.3,942.2 L923.1,933.8" fill="none" stroke="#d9bf98" stroke-width="3.7" opacity="0.34"/><path d="M803.9,894.5 L814.7,892.7 L825.6,892.4 L836.4,898.2 L847.2,901.6 L858.1,905.9 L868.9,904.6 L879.8,898.9 L890.6,889.9 L901.4,878.6 L912.3,874.0 L923.1,869.3" fill="none" stroke="#dcc49e" stroke-width="2.1" opacity="0.21"/><path d="M803.9,945.8 L814.7,941.5 L825.6,943.2 L836.4,943.6 L847.2,950.5 L858.1,951.0 L868.9,951.2 L879.8,946.9 L890.6,937.4 L901.4,927.9 L912.3,921.8 L923.1,921.9" fill="none" stroke="#dcc49e" stroke-width="3.9" opacity="0.37"/><path d="M803.9,989.1 L814.7,984.8 L825.6,981.0 L836.4,980.2 L847.2,985.7 L858.1,987.5 L868.9,991.0 L879.8,988.2 L890.6,983.6 L901.4,974.9 L912.3,970.2 L923.1,962.7" fill="none" stroke="#f9efdf" stroke-width="3.0" opacity="0.37"/><path d="M803.9,987.0 L814.7,982.6 L825.6,984.6 L836.4,989.7 L847.2,997.3 L858.1,997.8 L868.9,997.7 L879.8,993.3 L890.6,984.2 L901.4,973.6 L912.3,964.9 L923.1,963.5" fill="none" stroke="#d9bf98" stroke-width="2.5" opacity="0.20"/><path d="M803.9,893.8 L814.7,885.2 L825.6,881.8 L836.4,883.5 L847.2,888.6 L858.1,894.0 L868.9,898.6 L879.8,897.1 L890.6,894.5 L901.4,883.0 L912.3,872.0 L923.1,863.5" fill="none" stroke="#dcc49e" stroke-width="3.0" opacity="0.27"/><path d="M803.9,926.8 L814.7,918.6 L825.6,919.5 L836.4,924.6 L847.2,929.6 L858.1,937.9 L868.9,938.4 L879.8,936.7 L890.6,928.4 L901.4,915.7 L912.3,904.3 L923.1,898.9" fill="none" stroke="#dcc49e" stroke-width="3.8" opacity="0.36"/></g></g>
<text x="38" y="194.2" font-size="10" fill="#eedf90" stroke="#eedf90" stroke-width="0.3" text-anchor="middle">8</text>
<text x="38" y="303.4" font-size="10" fill="#eedf90" stroke="#eedf90" stroke-width="0.3" text-anchor="middle">7</text>
<text x="38" y="412.6" font-size="10" fill="#eedf90" stroke="#eedf90" stroke-width="0.3" text-anchor="middle">6</text>
<text x="38" y="521.8" font-size="10" fill="#eedf90" stroke="#eedf90" stroke-width="0.3" text-anchor="middle">5</text>
<text x="38" y="631.0" font-size="10" fill="#eedf90" stroke="#eedf90" stroke-width="0.3" text-anchor="middle">4</text>
<text x="38" y="740.2" font-size="10" fill="#eedf90" stroke="#eedf90" stroke-width="0.3" text-anchor="middle">3</text>
<text x="38" y="849.4" font-size="10" fill="#eedf90" stroke="#eedf90" stroke-width="0.3" text-anchor="middle">2</text>
<text x="38" y="958.6" font-size="10" fill="#eedf90" stroke="#eedf90" stroke-width="0.3" text-anchor="middle">1</text>
<text x="99.1" y="1019.5" font-size="10.5" fill="#eedf90" stroke="#eedf90" stroke-width="0.3" text-anchor="middle">a</text>
<text x="208.3" y="1019.5" font-size="10.5" fill="#eedf90" stroke="#eedf90" stroke-width="0.3" text-anchor="middle">b</text>
<text x="317.5" y="1019.5" font-size="10.5" fill="#eedf90" stroke="#eedf90" stroke-width="0.3" text-anchor="middle">c</text>
<text x="426.7" y="1019.5" font-size="10.5" fill="#eedf90" stroke="#eedf90" stroke-width="0.3" text-anchor="middle">d</text>
<text x="535.9" y="1019.5" font-size="10.5" fill="#eedf90" stroke="#eedf90" stroke-width="0.3" text-anchor="middle">e</text>
<text x="645.1" y="1019.5" font-size="10.5" fill="#eedf90" stroke="#eedf90" stroke-width="0.3" text-anchor="middle">f</text>
<text x="754.3" y="1019.5" font-size="10.5" fill="#eedf90" stroke="#eedf90" stroke-width="0.3" text-anchor="middle">g</text>
<text x="863.5" y="1019.5" font-size="10.5" fill="#eedf90" stroke="#eedf90" stroke-width="0.3" text-anchor="middle">h</text>
<circle cx="924.5" cy="1015.5" r="4.3" fill="#4a4a50" stroke="#9a9aa0" stroke-width="1"/><circle cx="924.5" cy="1015.5" r="1.6" fill="#222"/>
<use href="#bR" x="44.50" y="136.00" width="109.20" height="109.20"/>
<use href="#bB" x="262.90" y="136.00" width="109.20" height="109.20"/>
<use href="#bQ" x="372.10" y="136.00" width="109.20" height="109.20"/>
<use href="#bK" x="481.30" y="136.00" width="109.20" height="109.20"/>
<use href="#bR" x="808.90" y="136.00" width="109.20" height="109.20"/>
<use href="#bP" x="44.50" y="245.20" width="109.20" height="109.20"/>
<use href="#bP" x="153.70" y="245.20" width="109.20" height="109.20"/>
<use href="#bP" x="262.90" y="245.20" width="109.20" height="109.20"/>
<use href="#bP" x="590.50" y="245.20" width="109.20" height="109.20"/>
<use href="#bP" x="699.70" y="245.20" width="109.20" height="109.20"/>
<use href="#bP" x="808.90" y="245.20" width="109.20" height="109.20"/>
<use href="#bP" x="372.10" y="354.40" width="109.20" height="109.20"/>
<use href="#bN" x="590.50" y="354.40" width="109.20" height="109.20"/>
<use href="#bB" x="262.90" y="463.60" width="109.20" height="109.20"/>
<use href="#wB" x="262.90" y="572.80" width="109.20" height="109.20"/>
<use href="#wN" x="372.10" y="572.80" width="109.20" height="109.20"/>
<use href="#wP" x="481.30" y="572.80" width="109.20" height="109.20"/>
<use href="#wP" x="44.50" y="791.20" width="109.20" height="109.20"/>
<use href="#wP" x="153.70" y="791.20" width="109.20" height="109.20"/>
<use href="#wP" x="590.50" y="791.20" width="109.20" height="109.20"/>
<use href="#wP" x="699.70" y="791.20" width="109.20" height="109.20"/>
<use href="#wP" x="808.90" y="791.20" width="109.20" height="109.20"/>
<use href="#wR" x="44.50" y="900.40" width="109.20" height="109.20"/>
<use href="#wN" x="153.70" y="900.40" width="109.20" height="109.20"/>
<use href="#wB" x="262.90" y="900.40" width="109.20" height="109.20"/>
<use href="#wQ" x="372.10" y="900.40" width="109.20" height="109.20"/>
<use href="#wR" x="590.50" y="900.40" width="109.20" height="109.20"/>
<use href="#wK" x="699.70" y="900.40" width="109.20" height="109.20"/>
<path d="M649.8,737.7 L451,646.2" stroke="#f4f00a" stroke-width="3.6" stroke-linecap="round"/>
<path d="M460.8,642 L449.6,645.6 L454.4,655.4" fill="none" stroke="#f4f00a" stroke-width="3.6" stroke-linecap="round" stroke-linejoin="round"/>
<rect x="964" y="104" width="3.2" height="931" fill="#ffffff"/>
<rect x="967.2" y="104" width="1.3" height="931" fill="#d5d5d5"/>
<rect x="968.5" y="104" width="951.5" height="931" fill="#ffffff"/>
<rect x="968.5" y="103.8" width="951.5" height="13.799999999999997" fill="url(#hdr)"/>
<text x="970.30" y="113.00" font-size="6.90" fill="#2a2a2a" stroke="#2a2a2a" stroke-width="0.1" textLength="20.59" lengthAdjust="spacingAndGlyphs">Clocks:</text>
<path d="M1905.9,109.0 H1911.3 L1908.6,112.1 Z" fill="#111"/>
<path d="M1915.6,108.7 L1920,112.7 M1915.6,112.7 L1920,108.7" stroke="#111" stroke-width="1.2"/>
<rect x="1303.6" y="154.8" width="11.5" height="11.6" fill="#fff" stroke="#c8c8c8" stroke-width="1"/>
<rect x="1322.3" y="142.4" width="119.5" height="35.2" fill="#000"/>
<rect x="1449.3" y="142.4" width="119.7" height="35.2" fill="#000"/>
<text x="1339.00" y="169.20" font-size="26.50" fill="#fbf5c8" stroke="#fbf5c8" stroke-width="0.1" textLength="85.04" lengthAdjust="spacingAndGlyphs">0:00:00</text>
<text x="1466.50" y="169.20" font-size="26.50" fill="#c9c9c9" stroke="#c9c9c9" stroke-width="0.1" textLength="85.04" lengthAdjust="spacingAndGlyphs">0:00:00</text>
<rect x="1576.6" y="155" width="10.4" height="10.8" fill="#000"/>
<rect x="968.5" y="203" width="951.5" height="3.2" fill="#f2eeec"/>
<rect x="968.5" y="206.2" width="951.5" height="0.8" fill="#8c98a4"/>
<rect x="968.5" y="206.6" width="951.5" height="13.700000000000017" fill="url(#hdr)"/>
<text x="970.30" y="215.70" font-size="6.90" fill="#2a2a2a" stroke="#2a2a2a" stroke-width="0.1" textLength="83.05" lengthAdjust="spacingAndGlyphs">Notation • Openings Book</text>
<path d="M1905.9,211.8 H1911.3 L1908.6,214.8 Z" fill="#111"/>
<path d="M1915.6,211.4 L1920,215.4 M1915.6,215.4 L1920,211.4" stroke="#111" stroke-width="1.2"/>
<rect x="968.5" y="220.3" width="951.5" height="15" fill="#ffffff"/>
<rect x="970.5" y="221.8" width="34.2" height="13.5" fill="#fff" stroke="#dedede" stroke-width="0.8"/>
<rect x="968.5" y="234.6" width="951.5" height="1.2" fill="#e6e6e6"/>
<rect x="970.9" y="234.2" width="33.4" height="1.6" fill="#ffffff"/>
<text x="972.75" y="231.50" font-size="7.40" fill="#2f7ae0" stroke="#2f7ae0" stroke-width="0.1" textLength="29.05" lengthAdjust="spacingAndGlyphs">Notation</text>
<text x="1008.00" y="231.50" font-size="7.40" fill="#3c3c3c" stroke="#3c3c3c" stroke-width="0.1" textLength="26.01" lengthAdjust="spacingAndGlyphs">Training</text>
<text x="1040.50" y="231.50" font-size="7.40" fill="#3c3c3c" stroke="#3c3c3c" stroke-width="0.1" textLength="37.91" lengthAdjust="spacingAndGlyphs">Score sheet</text>
<text x="1084.70" y="231.50" font-size="7.40" fill="#3c3c3c" stroke="#3c3c3c" stroke-width="0.1" textLength="30.16" lengthAdjust="spacingAndGlyphs">LiveBook</text>
<text x="1120.60" y="231.50" font-size="7.40" fill="#3c3c3c" stroke="#3c3c3c" stroke-width="0.1" textLength="50.45" lengthAdjust="spacingAndGlyphs">Openings Book</text>
<text x="1176.90" y="231.50" font-size="7.40" fill="#3c3c3c" stroke="#3c3c3c" stroke-width="0.1" textLength="33.81" lengthAdjust="spacingAndGlyphs">My Moves</text>
<text x="1387.80" y="246.90" font-size="8.70" fill="#1b1b2b" font-weight="bold" textLength="115.81" lengthAdjust="spacingAndGlyphs">ps - Club player,Aggressive</text>
<text x="1423.00" y="260.70" font-size="9.00" fill="#353535" stroke="#353535" stroke-width="0.1" textLength="44.00" lengthAdjust="spacingAndGlyphs">07.07.2025</text>
<text x="1436.20" y="275.00" font-size="8.70" fill="#1b1b2b" font-weight="bold" textLength="16.90" lengthAdjust="spacingAndGlyphs">C56</text>
<rect x="968.5" y="279" width="939" height="1.1" fill="#7474c4"/>
<rect x="1907.6" y="279" width="12.4" height="1.1" fill="#7474c4"/>
<text x="972.00" y="290.10" font-size="8.90" fill="#3a3a3a" stroke="#3a3a3a" stroke-width="0.1" textLength="15.91" lengthAdjust="spacingAndGlyphs">1.e4</text>
<text x="995.00" y="290.10" font-size="8.90" fill="#3a3a3a" stroke="#3a3a3a" stroke-width="0.1" textLength="9.52" lengthAdjust="spacingAndGlyphs">e5</text>
<text x="1010.80" y="290.10" font-size="8.90" fill="#3a3a3a" stroke="#3a3a3a" stroke-width="0.1" textLength="20.30" lengthAdjust="spacingAndGlyphs">2.Sf3</text>
<text x="1037.70" y="290.10" font-size="8.90" fill="#3a3a3a" stroke="#3a3a3a" stroke-width="0.1" textLength="14.19" lengthAdjust="spacingAndGlyphs">Sc6</text>
<text x="1058.20" y="290.10" font-size="8.90" fill="#3a3a3a" stroke="#3a3a3a" stroke-width="0.1" textLength="17.01" lengthAdjust="spacingAndGlyphs">3.d4</text>
<text x="1082.10" y="290.10" font-size="8.90" fill="#3a3a3a" stroke="#3a3a3a" stroke-width="0.1" textLength="19.29" lengthAdjust="spacingAndGlyphs">exd4</text>
<text x="1108.20" y="290.10" font-size="8.90" fill="#3a3a3a" stroke="#3a3a3a" stroke-width="0.1" textLength="20.31" lengthAdjust="spacingAndGlyphs">4.Lc4</text>
<text x="1135.30" y="290.10" font-size="8.90" fill="#3a3a3a" stroke="#3a3a3a" stroke-width="0.1" textLength="13.02" lengthAdjust="spacingAndGlyphs">Lc5</text>
<text x="1155.20" y="290.10" font-size="8.90" fill="#3a3a3a" stroke="#3a3a3a" stroke-width="0.1" textLength="16.20" lengthAdjust="spacingAndGlyphs">5.c3</text>
<text x="1177.60" y="290.10" font-size="8.90" fill="#3a3a3a" stroke="#3a3a3a" stroke-width="0.1" textLength="13.01" lengthAdjust="spacingAndGlyphs">Sf6</text>
<text x="1197.40" y="290.10" font-size="8.90" fill="#3a3a3a" stroke="#3a3a3a" stroke-width="0.1" textLength="20.79" lengthAdjust="spacingAndGlyphs">6.0-0</text>
<text x="1224.80" y="290.10" font-size="8.90" fill="#3a3a3a" stroke="#3a3a3a" stroke-width="0.1" textLength="10.12" lengthAdjust="spacingAndGlyphs">d6</text>
<text x="1241.70" y="290.10" font-size="8.90" fill="#3a3a3a" stroke="#3a3a3a" stroke-width="0.1" textLength="25.51" lengthAdjust="spacingAndGlyphs">7.cxd4</text>
<text x="1274.00" y="290.10" font-size="8.90" fill="#3a3a3a" stroke="#3a3a3a" stroke-width="0.1" textLength="19.19" lengthAdjust="spacingAndGlyphs">Sxd4</text>
<text x="1333.30" y="290.10" font-size="8.90" fill="#3a3a3a" stroke="#3a3a3a" stroke-width="0.1" textLength="14.10" lengthAdjust="spacingAndGlyphs">0-0</text>
<rect x="1296.9" y="280.2" width="32.8" height="13.5" fill="#000"/>
<text x="1299.50" y="290.10" font-size="8.90" fill="#ffffff" stroke="#ffffff" stroke-width="0.1" textLength="27.09" lengthAdjust="spacingAndGlyphs">8.Sxd4</text>
<rect x="1897.2" y="280.5" width="9.8" height="419" fill="#efefef"/>
<path d="M1899.5,287 L1902,284 L1904.5,287 Z" fill="#666"/>
<rect x="1899.3" y="290.6" width="5.8" height="9.8" rx="2.9" fill="#d0d0d0"/>
<path d="M1899.5,693.5 L1902,696.5 L1904.5,693.5 Z" fill="#666"/>
<rect x="1907.1" y="279.5" width="1.1" height="421" fill="#111"/>
<g stroke="#151515" stroke-width="0.9" fill="none" stroke-linecap="round"><path d="M1910.8,287.2 H1920 M1910.8,287.2 L1912.8,285.6 M1910.8,287.2 L1912.8,288.8 M1913.2,287.2 L1915.2,284"/><path d="M1910.8,300.2 H1920 M1910.8,300.2 L1912.8,298.6 M1910.8,300.2 L1912.8,301.8 M1913.2,300.2 L1915.2,297 M1913.2,300.2 L1915.2,303.4"/><path d="M1914.5,309.3 L1915.2,311 M1913.5,311.5 C1911.5,313 1912,316.8 1915,316.8 C1916.8,316.8 1918,316 1918.8,315"/></g>
<circle cx="1915.4" cy="283.8" r="0.9" fill="#151515"/><circle cx="1915.4" cy="296.8" r="0.9" fill="#151515"/><circle cx="1915.4" cy="303.6" r="0.9" fill="#151515"/><circle cx="1914.4" cy="309" r="0.8" fill="#151515"/>
<path d="M1914.3,290.6 H1920" stroke="#e22" stroke-width="1.5"/><path d="M1915.8,290.6 H1920" stroke="#3c3" stroke-width="1.5"/>
<rect x="968.5" y="699.5" width="951.5" height="1.4" fill="#1a1a1a"/>
<rect x="968.5" y="701" width="951.5" height="44" fill="#ffffff"/>
<rect x="973.5" y="703.5" width="926" height="0.7" fill="#eeeeee"/>
<rect x="973.5" y="708.6" width="926" height="0.7" fill="#eeeeee"/>
<rect x="973.5" y="713.7" width="926" height="0.7" fill="#eeeeee"/>
<rect x="973.5" y="718.8" width="926" height="0.7" fill="#eeeeee"/>
<rect x="973.5" y="723.9" width="926" height="0.7" fill="#eeeeee"/>
<rect x="973.5" y="729.0" width="926" height="0.7" fill="#eeeeee"/>
<rect x="973.5" y="734.1" width="926" height="0.7" fill="#eeeeee"/>
<rect x="973.5" y="739.2" width="926" height="0.7" fill="#eeeeee"/>
<rect x="972.8" y="705.8" width="1" height="34.2" fill="#555"/>
<rect x="973.3" y="722.2" width="941.5" height="1.3" fill="#8a8a8a"/>
<rect x="1040.9" y="720.6" width="1.2" height="4.4" fill="#555"/>
<rect x="1133.0" y="720.6" width="1.2" height="4.4" fill="#555"/>
<rect x="1225.0" y="720.6" width="1.2" height="4.4" fill="#555"/>
<rect x="1316.7" y="720.6" width="1.2" height="4.4" fill="#555"/>
<rect x="1408.8000000000002" y="720.6" width="1.2" height="4.4" fill="#555"/>
<rect x="1500.4" y="720.6" width="1.2" height="4.4" fill="#555"/>
<rect x="1592.0" y="720.6" width="1.2" height="4.4" fill="#555"/>
<rect x="1684.0" y="720.6" width="1.2" height="4.4" fill="#555"/>
<rect x="1776.0" y="720.6" width="1.2" height="4.4" fill="#555"/>
<rect x="1271.9" y="720" width="23.4" height="2.5" fill="url(#grn)"/>
<rect x="1317.3" y="712" width="23.7" height="10.5" fill="url(#grn)"/>
<path d="M1315.6,700.8 H1319.4 L1317.5,704.5 Z" fill="#333"/>
<text x="1041.5" y="743" font-size="3.5" fill="#aaa" text-anchor="middle">2</text>
<text x="1225.6" y="743" font-size="3.5" fill="#aaa" text-anchor="middle">6</text>
<text x="1317.3" y="743" font-size="3.5" fill="#aaa" text-anchor="middle">8</text>
<text x="1409.4" y="743" font-size="3.5" fill="#aaa" text-anchor="middle">10</text>
<text x="1501" y="743" font-size="3.5" fill="#aaa" text-anchor="middle">12</text>
<text x="1592.6" y="743" font-size="3.5" fill="#aaa" text-anchor="middle">14</text>
<text x="1684.6" y="743" font-size="3.5" fill="#aaa" text-anchor="middle">16</text>
<text x="1776.6" y="743" font-size="3.5" fill="#aaa" text-anchor="middle">18</text>
<rect x="1917.3" y="705.6" width="3" height="17" fill="#f3f0c8" stroke="#888" stroke-width="0.5"/><rect x="1917.3" y="722.6" width="3" height="17" fill="#6ee3ee" stroke="#888" stroke-width="0.5"/>
<rect x="968.5" y="744.6" width="951.5" height="1" fill="#e2e2e2"/>
<rect x="968.5" y="745.6" width="951.5" height="17" fill="#ffffff"/>
<g><path d="M980,748 L977.4,751.4 H979.1 V756.8 H980.9 V751.4 H982.6 Z" fill="#1a7a1a"/><path d="M992.3,748.5 L998.8,756 M998.8,748.5 L992.3,756" stroke="#e0303a" stroke-width="1.1"/></g>
<text x="1010.00" y="756.50" font-size="9.50" fill="#222" font-weight="bold" textLength="2.58" lengthAdjust="spacingAndGlyphs">]</text>
<g fill="#111"><circle cx="1026.5" cy="749.8" r="1.3"/><path d="M1025.3,751 H1027.7 L1028.8,756.5 H1024.2 Z"/></g><path d="M1023.5,748.5 V751" stroke="#e33" stroke-width="0.7"/>
<g fill="#e4202a"><circle cx="1041.9" cy="749.8" r="1.3"/><path d="M1040.7,751 H1043.1 L1044.2,756.5 H1039.6 Z"/></g><circle cx="1045.8" cy="754.5" r="0.6" fill="#555"/>
<g><rect x="1053" y="747.5" width="9.8" height="9.8" fill="#c9986a"/><rect x="1053" y="747.5" width="4.9" height="4.9" fill="#6a4a38"/><rect x="1057.9" y="752.4" width="4.9" height="4.9" fill="#e8d4b4"/><path d="M1055.4,748.5 V751.8 M1060.3,748.5 V751.8 M1055.4,753.2 V756.5 M1060.3,753.2 V756.5" stroke="#111" stroke-width="1.4"/></g>
<text x="1073.4" y="756.6" font-size="10" fill="#3a3a3a" text-anchor="middle">!!</text>
<text x="1089.5" y="756.6" font-size="10" fill="#3a3a3a" text-anchor="middle">!</text>
<text x="1104.5" y="756.6" font-size="10" fill="#3a3a3a" text-anchor="middle">!?</text>
<text x="1120" y="756.6" font-size="10" fill="#3a3a3a" text-anchor="middle">?!</text>
<text x="1135" y="756.6" font-size="10" fill="#3a3a3a" text-anchor="middle">?</text>
<text x="1151" y="756.6" font-size="10" fill="#3a3a3a" text-anchor="middle">??</text>
<text x="1167" y="756.6" font-size="10" fill="#3a3a3a" text-anchor="middle">+−</text>
<text x="1182.2" y="756.6" font-size="10" fill="#3a3a3a" text-anchor="middle">±</text>
<text x="1198.3" y="756.6" font-size="10" fill="#3a3a3a" text-anchor="middle">⩲</text>
<text x="1213" y="756.6" font-size="10" fill="#3a3a3a" text-anchor="middle">=</text>
<text x="1228.75" y="756.6" font-size="10" fill="#3a3a3a" text-anchor="middle">∞</text>
<text x="1244.4" y="756.6" font-size="10" fill="#3a3a3a" text-anchor="middle">⩱</text>
<text x="1259.2" y="756.6" font-size="10" fill="#3a3a3a" text-anchor="middle">∓</text>
<text x="1274.8" y="756.6" font-size="10" fill="#3a3a3a" text-anchor="middle">∓</text>
<text x="1290.5" y="756.6" font-size="10" fill="#3a3a3a" text-anchor="middle">−+</text>
<text x="1306" y="756.6" font-size="10" fill="#3a3a3a" text-anchor="middle">⇄</text>
<g transform="translate(1321.7 752) rotate(-30)"><rect x="-5" y="-2.6" width="10" height="5.2" rx="1.2" fill="#3d6fd8"/><rect x="1.5" y="-2.6" width="3.5" height="5.2" rx="1" fill="#e55"/><rect x="0.8" y="-2.6" width="1" height="5.2" fill="#e8e8e8"/></g>
<path d="M1337.3,747.3 L1338.8,750.5 L1342.3,750.9 L1339.7,753.2 L1340.4,756.6 L1337.3,754.9 L1334.2,756.6 L1334.9,753.2 L1332.3,750.9 L1335.8,750.5 Z" fill="#f4f4f4" stroke="#c8c8c8" stroke-width="0.7"/>
<path d="M1353,747.3 L1354.5,750.5 L1358,750.9 L1355.4,753.2 L1356.1,756.6 L1353,754.9 L1349.9,756.6 L1350.6,753.2 L1348,750.9 L1351.5,750.5 Z" fill="#f4f4f4" stroke="#c8c8c8" stroke-width="0.7"/><path d="M1355.5,755 H1359 M1357.2,753.2 V756.8" stroke="#888" stroke-width="0.7"/>
<path d="M1364.5,748 L1373,756 M1372.5,748 L1365.5,754.5" stroke="#444" stroke-width="1.5"/><circle cx="1365" cy="756" r="1" fill="none" stroke="#444" stroke-width="0.6"/>
<circle cx="1383.75" cy="754.2" r="1.2" fill="#111"/>
<rect x="1398" y="747.5" width="2.6" height="7" rx="1" fill="#999"/><rect x="1397.5" y="755" width="3.6" height="2" fill="#777"/>
<rect x="968.5" y="762.6" width="951.5" height="0.9" fill="#8c98a4"/>
<rect x="968.5" y="763.4" width="951.5" height="14.200000000000045" fill="url(#hdr)"/>
<text x="970.30" y="773.00" font-size="6.90" fill="#2a2a2a" stroke="#2a2a2a" stroke-width="0.1" textLength="46.59" lengthAdjust="spacingAndGlyphs">Engine: Fritz 20</text>
<path d="M1905.9,768.8 H1911.3 L1908.6,771.9 Z" fill="#111"/>
<path d="M1915.6,768.5 L1920,772.5 M1915.6,772.5 L1920,768.5" stroke="#111" stroke-width="1.2"/>
<rect x="971.9" y="782" width="40" height="13.8" fill="#c6efbe"/>
<text x="975.70" y="791.70" font-size="8.60" fill="#1e2a1e" font-weight="bold" textLength="31.60" lengthAdjust="spacingAndGlyphs">Stopped</text>
<rect x="1018" y="781.7" width="18.5" height="13.4" rx="1.5" fill="#fff" stroke="#e6e6e6" stroke-width="0.8"/>
<rect x="1042.3" y="781.7" width="18.40000000000009" height="13.4" rx="1.5" fill="#fff" stroke="#e6e6e6" stroke-width="0.8"/>
<rect x="1065.25" y="781.7" width="18.75" height="13.4" rx="1.5" fill="#fff" stroke="#e6e6e6" stroke-width="0.8"/>
<circle cx="1027.3" cy="788" r="4.7" fill="#1b55d8" stroke="#8fc060" stroke-width="0.6"/><path d="M1025.9,785.5 L1029.8,788 L1025.9,790.5 Z" fill="#fff"/>
<circle cx="1050" cy="786.6" r="2.7" fill="#9fd070" stroke="#4a8a3a" stroke-width="0.8"/><path d="M1052,788.6 L1055,791.6" stroke="#4a7a3a" stroke-width="1.3"/>
<circle cx="1074" cy="786.6" r="2.7" fill="#9fd070" stroke="#4a8a3a" stroke-width="0.8"/><path d="M1076,788.6 L1079,791.6" stroke="#4a7a3a" stroke-width="1.3"/>
<rect x="1089.3" y="781.3" width="37.5" height="14.2" fill="#e9e9e9" stroke="#a8a8a8" stroke-width="0.8"/>
<text x="1094.00" y="792.00" font-size="8.30" fill="#333" stroke="#333" stroke-width="0.1" textLength="28.71" lengthAdjust="spacingAndGlyphs">10 CPUs</text>
<rect x="1139" y="781.3" width="13.700000000000045" height="13.7" fill="#fafafa" stroke="#d8d8d8" stroke-width="0.7"/>
<rect x="1156.2" y="781.3" width="13.599999999999909" height="13.7" fill="#fafafa" stroke="#d8d8d8" stroke-width="0.7"/>
<rect x="1173.2" y="781.3" width="13.599999999999909" height="13.7" fill="#fafafa" stroke="#d8d8d8" stroke-width="0.7"/>
<rect x="1190.2" y="781.3" width="13.5" height="13.7" fill="#fafafa" stroke="#d8d8d8" stroke-width="0.7"/>
<use href="#nsil" x="1139.6" y="781.6" width="13" height="13"/>
<rect x="1158.6" y="787.5" width="8.8" height="6.5" rx="0.8" fill="#f2c21a" stroke="#8a6a10" stroke-width="0.5"/><path d="M1160.6,787.5 V785.5 C1160.6,783 1165,783 1165,785.5" fill="none" stroke="#555" stroke-width="1"/><rect x="1162.5" y="789.5" width="1" height="2.4" fill="#333"/>
<circle cx="1181.5" cy="785.7" r="2.4" fill="#666"/><circle cx="1181.5" cy="785.7" r="0.9" fill="#ddd"/><circle cx="1177.5" cy="790.5" r="2" fill="none" stroke="#bbb" stroke-width="0.8"/>
<path d="M1197,791.5 C1197,789.5 1194,788 1194,785.5 C1194,783.2 1195.5,782.5 1197,782.5 C1198.5,782.5 1200,783.2 1200,785.5 C1200,788 1197,789.5 1197,791.5 Z M1195.5,792.5 H1198.5" fill="none" stroke="#999" stroke-width="0.8"/>
<circle cx="978.2" cy="805.4" r="4.3" fill="#8a8a8a"/><circle cx="977.5" cy="804.3" r="2.5" fill="#b9b9b9"/>
<rect x="991" y="799.7" width="57.200000000000045" height="14" rx="1" fill="#e4e4e4"/>
<rect x="1052.75" y="799.7" width="49.549999999999955" height="14" rx="1" fill="#e4e4e4"/>
<rect x="1108.2" y="799.7" width="70.0" height="14" rx="1" fill="#e4e4e4"/>
<rect x="1184" y="799.7" width="46.200000000000045" height="14" rx="1" fill="#e4e4e4"/>
<rect x="1236.5" y="799.7" width="32.5" height="14" rx="1" fill="#e4e4e4"/>
<rect x="1281.5" y="782" width="78.3" height="31.7" fill="#fff" stroke="#ececec" stroke-width="0.8"/>
<text x="1284.00" y="790.00" font-size="6.60" fill="#e0603a" stroke="#e0603a" stroke-width="0.1" textLength="12.01" lengthAdjust="spacingAndGlyphs">3.79</text>
<text x="1298.70" y="790.00" font-size="6.60" fill="#333" stroke="#333" stroke-width="0.1" textLength="57.78" lengthAdjust="spacingAndGlyphs">8...0-0 9.Sc3 h6 De7</text>
<text x="1284.00" y="800.00" font-size="6.60" fill="#e0603a" stroke="#e0603a" stroke-width="0.1" textLength="12.01" lengthAdjust="spacingAndGlyphs">3.63</text>
<text x="1298.70" y="800.00" font-size="6.60" fill="#333" stroke="#333" stroke-width="0.1" textLength="56.61" lengthAdjust="spacingAndGlyphs">8...c6 9.Sc3 0-0 Te8</text>
<text x="1284.00" y="810.00" font-size="6.60" fill="#222" font-weight="bold" textLength="28.51" lengthAdjust="spacingAndGlyphs">depth=22.</text>
<text x="1317.50" y="810.00" font-size="6.60" fill="#333" stroke="#333" stroke-width="0.1" textLength="35.20" lengthAdjust="spacingAndGlyphs">Time=12.0s</text>
<rect x="1364.3" y="782.5" width="30" height="30" fill="#fff" stroke="#ececec" stroke-width="0.8"/>
<path d="M1371,802 C1367.5,802 1367,797.5 1370.5,796.5 C1370.5,792.5 1375,791 1377,793 C1379,789.5 1385,790 1385.5,794.5 C1389.5,794.5 1390,801 1386,802 Z" fill="#e8f2fa" stroke="#7ac0a0" stroke-width="0.8"/>
<rect x="968.5" y="956.2" width="281" height="0.9" fill="#c8c8c8"/>
<rect x="1239" y="822" width="9.6" height="134" fill="#eeeeee"/>
<path d="M1241.7,828 L1243.8,825.5 L1245.9,828 Z" fill="#555"/><path d="M1241.7,950 L1243.8,952.5 L1245.9,950 Z" fill="#555"/>
<rect x="1241.3" y="831.6" width="4.8" height="10.4" rx="2.2" fill="#cfcfcf"/>
<rect x="1250" y="818" width="0.9" height="217" fill="#d0d0d0"/>
<rect x="1253.7" y="819.3" width="140" height="212.5" fill="#fff" stroke="#a8a8a8" stroke-width="0.9"/>
<circle cx="1279.4" cy="829.5" r="5.8" fill="#4cd08c"/>
<circle cx="1346.7" cy="829.5" r="5.8" fill="#4cd08c"/>
<circle cx="1279.4" cy="844" r="5.8" fill="#cfd23a"/>
<circle cx="1346.7" cy="844" r="5.8" fill="#e08a3a"/>
<circle cx="1279.4" cy="858.6" r="5.8" fill="#e05a44"/>
<circle cx="1295.6000000000001" cy="858.6" r="5.8" fill="#e08a3a"/>
<circle cx="1346.7" cy="858.6" r="5.8" fill="#e08a3a"/>
<circle cx="1362.7" cy="858.6" r="5.8" fill="#e05a44"/>
<circle cx="1279.4" cy="873" r="5.8" fill="#c4d24a"/>
<circle cx="1295.6000000000001" cy="873" r="5.8" fill="#98d04a"/>
<circle cx="1346.7" cy="873" r="5.8" fill="#e05a44"/>
<circle cx="1362.7" cy="873" r="5.8" fill="#c4d24a"/>
<circle cx="1279.4" cy="887.6" r="5.8" fill="#c4d24a"/>
<circle cx="1295.6000000000001" cy="887.6" r="5.8" fill="#4cd04c"/>
<circle cx="1346.7" cy="887.6" r="5.8" fill="#40cc40"/>
<circle cx="1362.7" cy="887.6" r="5.8" fill="#c4d24a"/>
<circle cx="1279.4" cy="902" r="5.8" fill="#4cd0a0"/>
<circle cx="1346.7" cy="902" r="5.8" fill="#4cd08c"/>
<use href="#wK" x="1256.6" y="822.7" width="13" height="13"/>
<use href="#bK" x="1324.0" y="822.7" width="13" height="13"/>
<use href="#wQ" x="1256.6" y="837.2" width="13" height="13"/>
<use href="#bQ" x="1324.0" y="837.2" width="13" height="13"/>
<use href="#wR" x="1256.6" y="851.8000000000001" width="13" height="13"/>
<use href="#bR" x="1324.0" y="851.8000000000001" width="13" height="13"/>
<use href="#wB" x="1256.6" y="866.2" width="13" height="13"/>
<use href="#bB" x="1324.0" y="866.2" width="13" height="13"/>
<use href="#wN" x="1256.6" y="880.8000000000001" width="13" height="13"/>
<use href="#bN" x="1324.0" y="880.8000000000001" width="13" height="13"/>
<use href="#wP" x="1256.6" y="895.2" width="13" height="13"/>
<use href="#bP" x="1324.0" y="895.2" width="13" height="13"/>
<circle cx="1263" cy="917" r="4" fill="none" stroke="#d9d9d9" stroke-width="2.2" stroke-dasharray="1.3 0.8"/>
<circle cx="1263" cy="917" r="2.4" fill="#eee"/>
<circle cx="1274.2" cy="917" r="4" fill="none" stroke="#d9d9d9" stroke-width="2.2" stroke-dasharray="1.3 0.8"/>
<circle cx="1274.2" cy="917" r="2.4" fill="#eee"/>
<circle cx="1330" cy="917" r="4" fill="none" stroke="#777" stroke-width="2.2" stroke-dasharray="1.3 0.8"/>
<circle cx="1330" cy="917" r="2.4" fill="#777"/>
<circle cx="1341" cy="917" r="4" fill="none" stroke="#777" stroke-width="2.2" stroke-dasharray="1.3 0.8"/>
<circle cx="1341" cy="917" r="2.4" fill="#777"/>
<path d="M1263,928 C1266,930 1268,933 1267.5,936 C1267,939 1259,939 1258.5,936 C1258,933 1260,931 1261.5,929 C1262,931 1263,932 1263,932 Z" fill="#f08010"/><path d="M1263,933 C1265,934 1265.5,936 1265,937.5 C1264,938.5 1261,938.5 1260.5,937.5 C1260,936 1261.5,934.5 1263,933 Z" fill="#ffd020"/>
<path d="M1277,928 C1280,930 1282,933 1281.5,936 C1281,939 1273,939 1272.5,936 C1272,933 1274,931 1275.5,929 C1276,931 1277,932 1277,932 Z" fill="#f08010"/><path d="M1277,933 C1279,934 1279.5,936 1279,937.5 C1278,938.5 1275,938.5 1274.5,937.5 C1274,936 1275.5,934.5 1277,933 Z" fill="#ffd020"/>
<text x="1257.00" y="951.00" font-size="7.20" fill="#9a9a9a" font-style="italic" stroke="#9a9a9a" stroke-width="0.1" textLength="17.49" lengthAdjust="spacingAndGlyphs">Calm</text>
<rect x="1401.2" y="778" width="1.4" height="257" fill="#8e8e8e"/>
<rect x="1412.6" y="785.2" width="11.5" height="10.8" rx="2" fill="#151515"/><circle cx="1418.35" cy="790.6" r="3.6" fill="#c8f040"/><circle cx="1418.35" cy="790.6" r="1.3" fill="#a0c020"/>
<rect x="1435.4" y="782.4" width="85" height="17.6" rx="1.5" fill="#fbfbfb" stroke="#e2e2e2" stroke-width="0.8"/>
<rect x="1527" y="782.4" width="85.3" height="17.6" rx="1.5" fill="#fbfbfb" stroke="#e2e2e2" stroke-width="0.8"/>
<circle cx="1447" cy="791.2" r="5.2" fill="#4a4a4a"/><circle cx="1445.8" cy="789.6" r="3" fill="#9a9a9a"/><circle cx="1445.2" cy="788.8" r="1.4" fill="#e0e0e0"/><path d="M1442.3,794.5 A5.2,5.2 0 0 0 1450.5,796" fill="none" stroke="#3cb04a" stroke-width="1.2"/><path d="M1440.3,798.2 L1453,783.8" stroke="#d81c2a" stroke-width="1.5"/>
<path d="M1531.6,786.2 C1531.4,784 1533.6,782.8 1535,783.6 L1533.8,785.6 L1535.2,786.4 L1536.4,784.6 C1537.2,786 1536.4,788 1534.6,788 L1537.6,795" stroke="#d02a2a" stroke-width="1.6" fill="none" stroke-linejoin="round"/><path d="M1536.6,793.5 L1538.6,798.2" stroke="#3a9a50" stroke-width="2.6" stroke-linecap="round"/><circle cx="1538" cy="797" r="0.9" fill="#8fd0ff"/>
<text x="1470.80" y="794.00" font-size="7.20" fill="#333" stroke="#333" stroke-width="0.1" textLength="31.91" lengthAdjust="spacingAndGlyphs">Disconnect</text>
<text x="1566.70" y="794.00" font-size="7.20" fill="#333" stroke="#333" stroke-width="0.1" textLength="22.99" lengthAdjust="spacingAndGlyphs">Settings</text>
<rect x="1892.4" y="781.4" width="22" height="16.2" rx="2.5" fill="#fff" stroke="#9a9a9a" stroke-width="1"/><path d="M1897,789.5 L1902,795 L1910,783.5" stroke="#e0203a" stroke-width="2.2" fill="none"/><path d="M1896.5,797.5 L1896,801 L1900.5,797.6" fill="#fff" stroke="#999" stroke-width="0.6"/>
<rect x="1402.6" y="803.6" width="517.4" height="1.4" fill="#dadada"/>
<text x="1407.90" y="818.00" font-size="8.10" fill="#222" font-weight="bold" textLength="54.11" lengthAdjust="spacingAndGlyphs">8...0-0 9.Sc3 c6</text>
<text x="1476.20" y="818.00" font-size="8.10" fill="#333" stroke="#333" stroke-width="0.1" textLength="14.91" lengthAdjust="spacingAndGlyphs">2.92</text>
<text x="1498.20" y="818.00" font-size="8.10" fill="#6a6acc" stroke="#6a6acc" stroke-width="0.1" textLength="33.59" lengthAdjust="spacingAndGlyphs">depth=20</text>
<text x="1541.90" y="818.00" font-size="8.10" fill="#333" stroke="#333" stroke-width="0.1" textLength="25.69" lengthAdjust="spacingAndGlyphs">Fritz 18</text>
<text x="1596.50" y="818.00" font-size="8.10" fill="#333" stroke="#333" stroke-width="0.1" textLength="38.50" lengthAdjust="spacingAndGlyphs">22.03.2025</text>
<text x="1642.50" y="818.00" font-size="8.10" fill="#333" stroke="#333" stroke-width="0.1" textLength="4.51" lengthAdjust="spacingAndGlyphs">0</text>
<text x="1407.90" y="827.80" font-size="8.10" fill="#222" font-weight="bold" textLength="54.11" lengthAdjust="spacingAndGlyphs">8...0-0 9.Sc3 c6</text>
<text x="1476.20" y="827.80" font-size="8.10" fill="#333" stroke="#333" stroke-width="0.1" textLength="14.91" lengthAdjust="spacingAndGlyphs">3.45</text>
<text x="1498.20" y="827.80" font-size="8.10" fill="#22a030" font-weight="bold" textLength="35.98" lengthAdjust="spacingAndGlyphs">depth=23</text>
<text x="1541.90" y="827.80" font-size="8.10" fill="#333" stroke="#333" stroke-width="0.1" textLength="41.32" lengthAdjust="spacingAndGlyphs">New Engine</text>
<text x="1596.50" y="827.80" font-size="8.10" fill="#333" stroke="#333" stroke-width="0.1" textLength="38.50" lengthAdjust="spacingAndGlyphs">06.10.2023</text>
<text x="1643.50" y="827.80" font-size="8.10" fill="#333" stroke="#333" stroke-width="0.1" textLength="3.51" lengthAdjust="spacingAndGlyphs">1</text>
<text x="1407.90" y="837.60" font-size="8.10" fill="#222" font-weight="bold" textLength="58.88" lengthAdjust="spacingAndGlyphs">8...0-0 9.Sc3 Te8</text>
<text x="1476.20" y="837.60" font-size="8.10" fill="#333" stroke="#333" stroke-width="0.1" textLength="14.91" lengthAdjust="spacingAndGlyphs">3.47</text>
<text x="1498.20" y="837.60" font-size="8.10" fill="#6a6acc" stroke="#6a6acc" stroke-width="0.1" textLength="33.59" lengthAdjust="spacingAndGlyphs">depth=23</text>
<text x="1541.90" y="837.60" font-size="8.10" fill="#333" stroke="#333" stroke-width="0.1" textLength="42.42" lengthAdjust="spacingAndGlyphs">Stockfish 10</text>
<text x="1596.50" y="837.60" font-size="8.10" fill="#333" stroke="#333" stroke-width="0.1" textLength="38.50" lengthAdjust="spacingAndGlyphs">02.09.2024</text>
<text x="1642.50" y="837.60" font-size="8.10" fill="#333" stroke="#333" stroke-width="0.1" textLength="4.51" lengthAdjust="spacingAndGlyphs">2</text>
<text x="1407.90" y="847.70" font-size="8.10" fill="#333" stroke="#333" stroke-width="0.1" textLength="36.60" lengthAdjust="spacingAndGlyphs">Visits=211</text>
<rect x="1407.9" y="857.6" width="99.6" height="9.5" fill="#f7f7f7" stroke="#6a6a6a" stroke-width="0.9"/>
<text x="1407.90" y="878.60" font-size="8.10" fill="#333" stroke="#333" stroke-width="0.1" textLength="80.50" lengthAdjust="spacingAndGlyphs">Click 'Settings' to log in</text>
<rect x="968.5" y="1034.8" width="951.5" height="0.8" fill="#d2d2d2"/>
<rect x="0" y="1035.6" width="1920" height="14.4" fill="#f3f3f3"/>
<rect x="1850.8" y="1039.4" width="72" height="9" rx="1" fill="#fff" stroke="#9a9a9a" stroke-width="0.8"/>
<text x="5.00" y="1046.00" font-size="7.30" fill="#333" stroke="#333" stroke-width="0.1" textLength="123.02" lengthAdjust="spacingAndGlyphs">C56: Two Knights: 4 d4 exd4 5 0-0 Nxe4</text>
<rect x="975" y="385" width="232" height="328" rx="8" fill="#000" opacity="0.22" filter="url(#dsh)"/>
<rect x="971.1" y="370.4" width="236.6" height="325.4" rx="5" fill="#f7f7f7" stroke="#84afe0" stroke-width="1.2"/>
<path d="M971.7,388.8 V375.5 Q971.7,371 976.5,371 H1202.5 Q1207.1,371 1207.1,375.5 V388.8 Z" fill="#efefef"/>
<text x="977.90" y="384.00" font-size="6.80" fill="#505050" stroke="#505050" stroke-width="0.1" textLength="47.11" lengthAdjust="spacingAndGlyphs">Full Tree Replay</text>
<path d="M1190.2,374.4 L1195.6,379.8 M1195.6,374.4 L1190.2,379.8" stroke="#444" stroke-width="0.8"/>
<rect x="983.6" y="398.5" width="65" height="22" rx="2" fill="#f9fbfd" stroke="#5b9bdc" stroke-width="1.1"/>
<rect x="1057.8" y="398.6" width="65" height="22" rx="2" fill="#fdfdfd" stroke="#dedede" stroke-width="0.9"/>
<rect x="1131.8" y="398.6" width="64.7" height="22" rx="2" fill="#fdfdfd" stroke="#dedede" stroke-width="0.9"/>
<path d="M1010,409.4 L1014.6,405.9 V408.1 H1022.2 V410.9 H1014.6 V413 Z" fill="#2aa32a"/>
<path d="M1170,409.2 L1165.3,405.7 V407.9 H1157.9 V410.7 H1165.3 V412.9 Z" fill="#2aa32a"/>
<circle cx="1090" cy="409.1" r="5.4" fill="#1c3fcc"/><circle cx="1090" cy="407.8" r="3.8" fill="#3f63e6" opacity="0.7"/><rect x="1087.9" y="406.5" width="1.3" height="5.2" fill="#fff"/><rect x="1090.8" y="406.5" width="1.3" height="5.2" fill="#fff"/>
<rect x="983.6" y="447.6" width="213.6" height="40.5" rx="1.5" fill="#f7f7f7" stroke="#dcdcdc" stroke-width="0.8"/>
<rect x="988.5" y="444" width="25" height="6" fill="#f7f7f7"/>
<text x="990.60" y="450.60" font-size="7.40" fill="#333" stroke="#333" stroke-width="0.1" textLength="20.41" lengthAdjust="spacingAndGlyphs">Speed</text>
<text x="1089.30" y="465.60" font-size="7.20" fill="#333" stroke="#333" stroke-width="0.1" textLength="3.51" lengthAdjust="spacingAndGlyphs">5</text>
<rect x="1005" y="473.8" width="171.3" height="2" rx="1" fill="#c8c8c8"/><rect x="1005" y="473.8" width="75" height="2" rx="1" fill="#2058c0"/>
<rect x="1078" y="471.3" width="5.5" height="8.2" rx="1" fill="#0d6ad6"/>
<rect x="1006.75" y="480.2" width="0.7" height="0.9" fill="#444"/>
<rect x="1025.25" y="480.2" width="0.7" height="0.9" fill="#444"/>
<rect x="1043.75" y="480.2" width="0.7" height="0.9" fill="#444"/>
<rect x="1062.15" y="480.2" width="0.7" height="0.9" fill="#444"/>
<rect x="1080.9" y="480.2" width="0.7" height="0.9" fill="#444"/>
<rect x="1099.9" y="480.2" width="0.7" height="0.9" fill="#444"/>
<rect x="1118.4" y="480.2" width="0.7" height="0.9" fill="#444"/>
<rect x="1136.9" y="480.2" width="0.7" height="0.9" fill="#444"/>
<rect x="1155.5500000000002" y="480.2" width="0.7" height="0.9" fill="#444"/>
<rect x="1173.65" y="480.2" width="0.7" height="0.9" fill="#444"/>
<text x="983.10" y="519.40" font-size="7.40" fill="#333" stroke="#333" stroke-width="0.1" textLength="33.80" lengthAdjust="spacingAndGlyphs">N Repeats</text>
<rect x="1162.4" y="510.2" width="22.8" height="14.2" fill="#fff" stroke="#e0e0e0" stroke-width="0.8"/>
<text x="1165.00" y="519.60" font-size="7.40" fill="#333" stroke="#333" stroke-width="0.1" textLength="3.21" lengthAdjust="spacingAndGlyphs">3</text>
<path d="M1189.9,514.6 L1191.3,513.2 L1192.7,514.6 M1189.9,520.6 L1191.3,522 L1192.7,520.6" fill="none" stroke="#666" stroke-width="0.6"/>
<rect x="983.3" y="541.4" width="214.2" height="17.4" rx="1.5" fill="#fff" stroke="#dedede" stroke-width="0.8"/>
<rect x="1048.5" y="544.6" width="9.8" height="9.8" rx="1.2" fill="#fff" stroke="#222" stroke-width="1"/>
<circle cx="1050.8" cy="546.9" r="0.85" fill="#111"/>
<circle cx="1056" cy="546.9" r="0.85" fill="#111"/>
<circle cx="1053.4" cy="549.5" r="0.85" fill="#111"/>
<circle cx="1050.8" cy="552.1" r="0.85" fill="#111"/>
<circle cx="1056" cy="552.1" r="0.85" fill="#111"/>
<text x="1065.90" y="554.00" font-size="7.40" fill="#333" stroke="#333" stroke-width="0.1" textLength="48.61" lengthAdjust="spacingAndGlyphs">Fresh Variation</text>
<rect x="1041.2" y="568.6" width="6.2" height="6.4" rx="0.8" fill="#fff" stroke="#9a9a9a" stroke-width="0.6"/>
<rect x="1041.2" y="585.6" width="6.2" height="6.4" rx="0.8" fill="#fff" stroke="#9a9a9a" stroke-width="0.6"/>
<text x="1049.80" y="575.00" font-size="7.40" fill="#333" stroke="#333" stroke-width="0.1" textLength="56.70" lengthAdjust="spacingAndGlyphs">Lock on variation</text>
<text x="1049.80" y="591.90" font-size="7.40" fill="#333" stroke="#333" stroke-width="0.1" textLength="44.61" lengthAdjust="spacingAndGlyphs">Mainline only</text>
<rect x="983" y="614.7" width="214.9" height="22.5" rx="2.5" fill="#b9b9b9"/>
<path d="M985.5,614.7 H1021.3 V637.2 H985.5 Q983,637.2 983,634.7 V617.2 Q983,614.7 985.5,614.7 Z" fill="url(#prog)"/>
<text x="1042.40" y="650.20" font-size="7.40" fill="#333" stroke="#333" stroke-width="0.1" textLength="94.70" lengthAdjust="spacingAndGlyphs">Covered Positions = 3 ( 18%)</text>
<rect x="1055.5" y="673.4" width="68.8" height="15" rx="2" fill="#fff" stroke="#dcdcdc" stroke-width="0.8"/>
<text x="1081.00" y="684.20" font-size="7.10" fill="#333" stroke="#333" stroke-width="0.1" textLength="17.41" lengthAdjust="spacingAndGlyphs">Close</text>
</svg>
</body></html>
